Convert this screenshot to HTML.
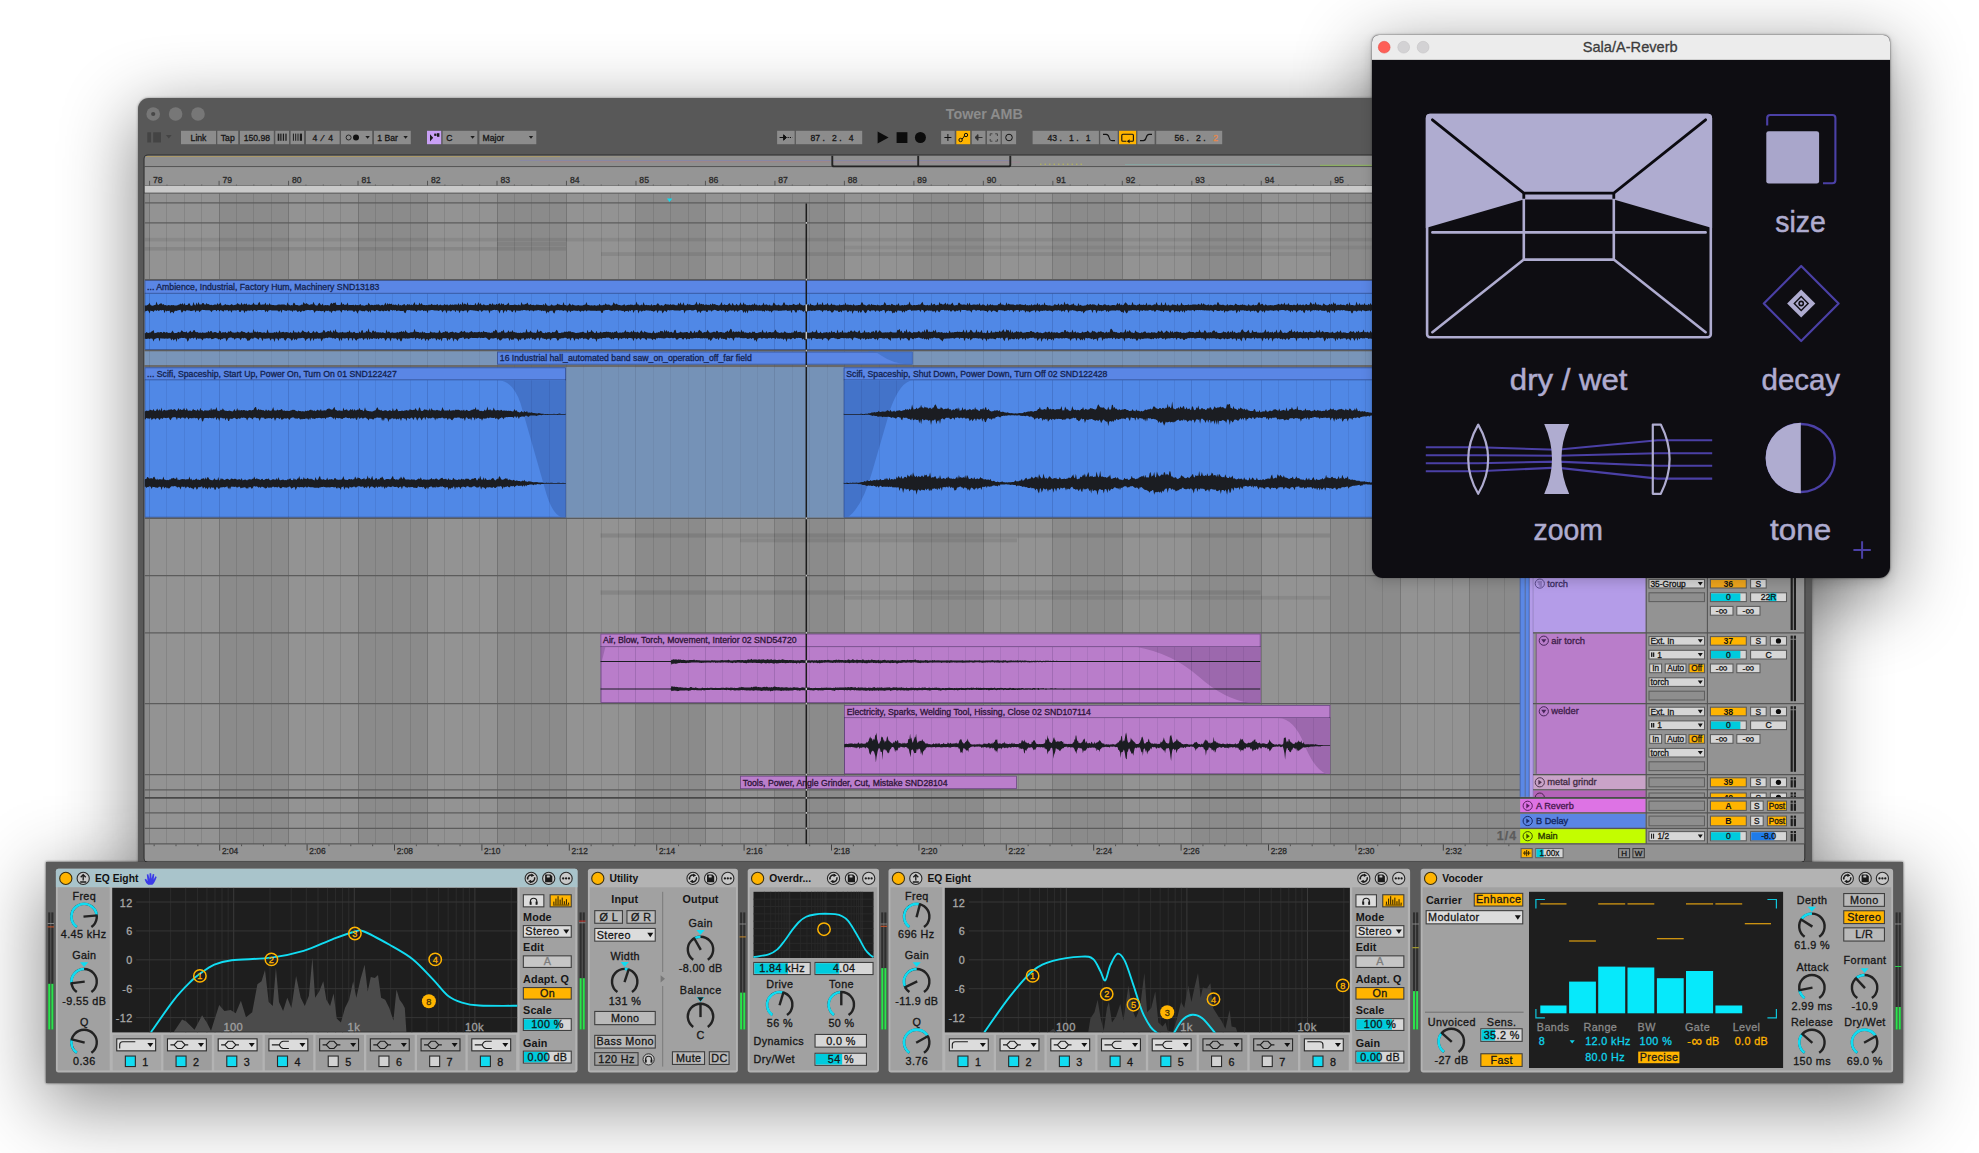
<!DOCTYPE html>
<html><head><meta charset="utf-8"><title>Tower AMB</title>
<style>
html,body{margin:0;padding:0}
body{width:1979px;height:1153px;position:relative;overflow:hidden;background:#fff;font-family:"Liberation Sans", sans-serif}
svg{position:absolute;left:0;top:0;font-family:"Liberation Sans", sans-serif}
.win{position:absolute;box-sizing:border-box}
</style></head><body>
<div class="win" style="left:1371.8px;top:34.6px;width:517.8px;height:543px;border-radius:7px 7px 11px 11px;box-shadow:0 19px 72px 3px rgba(0,0,0,.46),0 0 2.5px rgba(0,0,0,.45)"></div><div class="win" style="left:45.8px;top:862.2px;width:1857.4px;height:221px;box-shadow:0 19px 72px 3px rgba(0,0,0,.46),0 0 2.5px rgba(0,0,0,.45)"></div><div class="win" style="left:137.5px;top:97.5px;width:1674.0px;height:774.5px;background:#585858;border-radius:11px 11px 0 0;box-shadow:0 19px 72px 3px rgba(0,0,0,.46),0 0 2.5px rgba(0,0,0,.45)"></div><svg width="1979" height="1153" viewBox="0 0 1979 1153"><defs><clipPath id="panel"><rect x="144.5" y="155.5" width="1659.8" height="706.0" rx="3.5"/></clipPath></defs><circle cx="153.2" cy="114" r="6.8" fill="#777"/><circle cx="175.6" cy="114" r="6.8" fill="#777"/><circle cx="198" cy="114" r="6.8" fill="#777"/><circle cx="153.2" cy="114" r="2.1" fill="#474747"/><text x="984.30" y="118.60" font-size="14.3" fill="#8c8c8c" text-anchor="middle" font-weight="bold"  >Tower AMB</text><rect x="147.30" y="132.30" width="3.80" height="10.20" fill="#444" /><rect x="153.20" y="132.30" width="7.80" height="10.20" fill="#444" /><path d="M165.90 135.00h5.80l-2.90 3.62z" fill="#444"/><rect x="181.00" y="130.80" width="35.00" height="13.40" fill="#8c8c8c" /><text x="198.50" y="140.60" font-size="8.6" fill="#161616" text-anchor="middle" font-weight="normal" stroke="#161616" stroke-width="0.3" >Link</text><rect x="217.30" y="130.80" width="20.90" height="13.40" fill="#8c8c8c" /><text x="227.75" y="140.60" font-size="8.6" fill="#161616" text-anchor="middle" font-weight="normal" stroke="#161616" stroke-width="0.3" >Tap</text><rect x="240.00" y="130.80" width="33.80" height="13.40" fill="#8c8c8c" /><text x="256.90" y="140.60" font-size="8.6" fill="#161616" text-anchor="middle" font-weight="normal" stroke="#161616" stroke-width="0.3" >150.98</text><rect x="275.30" y="130.80" width="13.70" height="13.40" fill="#8c8c8c" /><rect x="277.70" y="133.60" width="1.60" height="7.20" fill="#1c1c1c" /><rect x="280.25" y="133.60" width="1.25" height="7.20" fill="#1c1c1c" /><rect x="282.80" y="133.60" width="1.25" height="7.20" fill="#1c1c1c" /><rect x="285.35" y="133.60" width="1.25" height="7.20" fill="#1c1c1c" /><rect x="290.60" y="130.80" width="13.40" height="13.40" fill="#8c8c8c" /><rect x="292.90" y="133.60" width="1.00" height="7.20" fill="#1c1c1c" /><rect x="295.20" y="133.60" width="1.00" height="7.20" fill="#1c1c1c" /><rect x="297.50" y="133.60" width="1.00" height="7.20" fill="#1c1c1c" /><rect x="299.80" y="133.60" width="2.20" height="7.20" fill="#1c1c1c" /><rect x="306.00" y="130.80" width="33.60" height="13.40" fill="#8c8c8c" /><text x="322.80" y="140.60" font-size="8.6" fill="#161616" text-anchor="middle" font-weight="normal" stroke="#161616" stroke-width="0.3" >4  ∕  4</text><rect x="341.00" y="130.80" width="31.20" height="13.40" fill="#8c8c8c" /><circle cx="348.6" cy="137.5" r="2.5" fill="none" stroke="#1c1c1c" stroke-width="0.9"/><circle cx="356" cy="137.5" r="3" fill="#111"/><path d="M365.40 135.99h4.40l-2.20 2.75z" fill="#1c1c1c"/><rect x="374.00" y="130.80" width="36.80" height="13.40" fill="#8c8c8c" /><text x="377.30" y="140.60" font-size="8.6" fill="#161616" text-anchor="start" font-weight="normal" stroke="#161616" stroke-width="0.3" >1 Bar</text><path d="M403.40 135.99h4.40l-2.20 2.75z" fill="#1c1c1c"/><rect x="427.00" y="130.80" width="14.20" height="13.40" fill="#c9a0f5" /><path d="M430 134.2l3.2 3.6-3.2 3.6z" fill="#1c1c1c"/><rect x="434.2" y="133.6" width="2.3" height="2.3" fill="#1c1c1c"/><rect x="437" y="133.2" width="2.4" height="3.6" fill="#1c1c1c"/><rect x="442.60" y="130.80" width="34.70" height="13.40" fill="#8c8c8c" /><text x="446.20" y="140.60" font-size="8.6" fill="#161616" text-anchor="start" font-weight="normal" stroke="#161616" stroke-width="0.3" >C</text><path d="M470.40 135.99h4.40l-2.20 2.75z" fill="#1c1c1c"/><rect x="479.40" y="130.80" width="56.90" height="13.40" fill="#8c8c8c" /><text x="482.60" y="140.60" font-size="8.6" fill="#161616" text-anchor="start" font-weight="normal" stroke="#161616" stroke-width="0.3" >Major</text><path d="M528.80 135.99h4.40l-2.20 2.75z" fill="#1c1c1c"/><rect x="777.10" y="130.80" width="17.50" height="13.40" fill="#8c8c8c" /><path d="M779.6 137.5h6.2M783.6 134.8l2.9 2.7-2.9 2.7z" stroke="#111" stroke-width="1" fill="#111"/><path d="M787.6 137.5h4.6" stroke="#111" stroke-width="1" stroke-dasharray="1.2 1"/><rect x="795.90" y="130.80" width="66.30" height="13.40" fill="#8c8c8c" /><text x="832.00" y="140.60" font-size="8.6" fill="#161616" text-anchor="middle" font-weight="normal" stroke="#161616" stroke-width="0.3" >87 .   2 .   4</text><path d="M877.6 131.4l11 6.1-11 6.1z" fill="#0c0c0c"/><rect x="896.60" y="132.20" width="10.80" height="10.80" fill="#0c0c0c" /><circle cx="920.4" cy="137.5" r="5.5" fill="#0c0c0c"/><rect x="941.10" y="130.80" width="13.60" height="13.40" fill="#8c8c8c" /><path d="M944.4 137.5h7M947.9 134v7" stroke="#111" stroke-width="1"/><rect x="956.30" y="130.80" width="13.90" height="13.40" fill="#ffb400" /><circle cx="960.6" cy="140" r="1.7" fill="none" stroke="#111" stroke-width="1"/><circle cx="966" cy="135" r="1.7" fill="none" stroke="#111" stroke-width="1"/><path d="M961.8 138.8q1.5-.3 1.8-1.6t1.4-1.4" stroke="#111" fill="none" stroke-width="1"/><rect x="971.80" y="130.80" width="13.60" height="13.40" fill="#8c8c8c" /><path d="M975 137.5h7.5M978 134.6l-3 2.9 3 2.9z" stroke="#333" stroke-width="1" fill="#333"/><rect x="987.00" y="130.80" width="13.60" height="13.40" fill="#8c8c8c" /><path d="M990.2 136v-2.2h2.2M995.2 133.8h2.2v2.2M997.4 139v2.2h-2.2M992.4 141.2h-2.2v-2.2" stroke="#444" stroke-width="1" fill="none"/><rect x="1001.90" y="130.80" width="14.20" height="13.40" fill="#8c8c8c" /><circle cx="1009" cy="137.5" r="3.3" fill="none" stroke="#111" stroke-width="1"/><rect x="1032.60" y="130.80" width="66.30" height="13.40" fill="#8c8c8c" /><text x="1069.00" y="140.60" font-size="8.6" fill="#161616" text-anchor="middle" font-weight="normal" stroke="#161616" stroke-width="0.3" >43 .   1 .   1</text><rect x="1100.20" y="130.80" width="17.50" height="13.40" fill="#8c8c8c" /><path d="M1103 134.4h3.2q2.2 0 2.9 3.1t2.9 3.1h3" stroke="#111" stroke-width="1.1" fill="none"/><rect x="1119.00" y="130.80" width="17.10" height="13.40" fill="#ffb400" /><path d="M1129.2 141.2h3.2q1 0 1-1v-5q0-1-1-1h-9.6q-1 0-1 1v5q0 1 1 1h3.6" stroke="#111" stroke-width="1.1" fill="none"/><path d="M1129.6 139.2l-2.8 2 2.8 2z" fill="#111"/><rect x="1137.40" y="130.80" width="17.20" height="13.40" fill="#8c8c8c" /><path d="M1140 140.6h3.4q2 0 2.8-3.1t2.8-3.1h3" stroke="#111" stroke-width="1.1" fill="none"/><rect x="1156.20" y="130.80" width="66.00" height="13.40" fill="#8c8c8c" /><text x="1190.00" y="140.60" font-size="8.6" fill="#161616" text-anchor="middle" font-weight="normal" stroke="#161616" stroke-width="0.3" >56 .   2 .</text><text x="1215.60" y="140.60" font-size="8.6" fill="#e8874a" text-anchor="middle" font-weight="normal" stroke="#e8874a" stroke-width="0.3" >2</text><rect x="143.5" y="154.5" width="1661.8" height="708.0" rx="4.5" fill="#2e2e2e"/><g clip-path="url(#panel)"><rect x="144.50" y="155.50" width="1659.80" height="706.00" fill="#939393" /><rect x="144.50" y="155.50" width="1659.80" height="11.00" fill="#8f8f8f" /><line x1="144.50" y1="166.70" x2="1804.30" y2="166.70" stroke="#4a4a4a" stroke-width="1" /><rect x="144.50" y="167.20" width="1659.80" height="18.30" fill="#959595" /><line x1="146.00" y1="156.50" x2="560.00" y2="156.50" stroke="#c2a24a" stroke-width="0.7" opacity=".8"/><line x1="450.00" y1="156.80" x2="640.00" y2="156.80" stroke="#a9a07a" stroke-width="0.7" opacity=".6"/><line x1="520.00" y1="160.50" x2="1010.00" y2="160.50" stroke="#7c7cc8" stroke-width="0.6" opacity=".6"/><line x1="540.00" y1="161.80" x2="830.00" y2="161.80" stroke="#c8707a" stroke-width="0.6" opacity=".6"/><line x1="832.00" y1="162.20" x2="1020.00" y2="162.20" stroke="#b87a9a" stroke-width="0.6" opacity=".6"/><line x1="1040.00" y1="164.20" x2="1085.00" y2="164.20" stroke="#c2c24a" stroke-width="0.9" stroke-dasharray="1.5 3"/><line x1="1125.00" y1="164.40" x2="1280.00" y2="164.40" stroke="#7cc2b8" stroke-width="0.7" opacity=".7"/><line x1="1320.00" y1="165.30" x2="1372.00" y2="165.30" stroke="#8cc24a" stroke-width="0.8" /><path d="M832.3 155.5v9.2q0 1.7 1.7 1.7h174.6q1.7 0 1.7-1.7v-9.2M918.2 155.5v11" fill="none" stroke="#242424" stroke-width="1.9"/><rect x="80.12" y="193.50" width="69.48" height="650.20" fill="#8b8b8b" /><rect x="219.08" y="193.50" width="69.48" height="650.20" fill="#8b8b8b" /><rect x="358.04" y="193.50" width="69.48" height="650.20" fill="#8b8b8b" /><rect x="497.00" y="193.50" width="69.48" height="650.20" fill="#8b8b8b" /><rect x="635.96" y="193.50" width="69.48" height="650.20" fill="#8b8b8b" /><rect x="774.92" y="193.50" width="69.48" height="650.20" fill="#8b8b8b" /><rect x="913.88" y="193.50" width="69.48" height="650.20" fill="#8b8b8b" /><rect x="1052.84" y="193.50" width="69.48" height="650.20" fill="#8b8b8b" /><rect x="1191.80" y="193.50" width="69.48" height="650.20" fill="#8b8b8b" /><rect x="1330.76" y="193.50" width="69.48" height="650.20" fill="#8b8b8b" /><rect x="1469.72" y="193.50" width="69.48" height="650.20" fill="#8b8b8b" /><rect x="1608.68" y="193.50" width="69.48" height="650.20" fill="#8b8b8b" /><rect x="1747.64" y="193.50" width="69.48" height="650.20" fill="#8b8b8b" /><rect x="144.50" y="351.20" width="1375.50" height="13.80" fill="#7995b9" /><rect x="565.80" y="367.30" width="277.90" height="150.30" fill="#7592b7" /><rect x="144.50" y="237.80" width="1375.50" height="3.60" fill="#000" opacity="0.075"/><rect x="144.50" y="247.00" width="421.50" height="3.60" fill="#000" opacity="0.085"/><rect x="497.00" y="242.00" width="69.00" height="4.40" fill="#000" opacity="0.07"/><rect x="601.00" y="252.20" width="730.00" height="3.80" fill="#000" opacity="0.08"/><rect x="844.00" y="245.60" width="676.00" height="3.80" fill="#000" opacity="0.055"/><rect x="600.50" y="533.40" width="729.50" height="4.20" fill="#000" opacity="0.09"/><rect x="740.00" y="538.40" width="277.00" height="3.90" fill="#000" opacity="0.08"/><rect x="600.50" y="590.40" width="660.20" height="4.30" fill="#000" opacity="0.09"/><rect x="844.00" y="595.90" width="486.00" height="3.80" fill="#000" opacity="0.07"/><line x1="149.50" y1="193.50" x2="149.50" y2="843.70" stroke="rgba(0,0,0,.17)" stroke-width="1" /><line x1="166.50" y1="193.50" x2="166.50" y2="843.70" stroke="rgba(0,0,0,.09)" stroke-width="1" /><line x1="184.50" y1="193.50" x2="184.50" y2="843.70" stroke="rgba(0,0,0,.09)" stroke-width="1" /><line x1="201.50" y1="193.50" x2="201.50" y2="843.70" stroke="rgba(0,0,0,.09)" stroke-width="1" /><line x1="219.50" y1="193.50" x2="219.50" y2="843.70" stroke="rgba(0,0,0,.17)" stroke-width="1" /><line x1="236.50" y1="193.50" x2="236.50" y2="843.70" stroke="rgba(0,0,0,.09)" stroke-width="1" /><line x1="253.50" y1="193.50" x2="253.50" y2="843.70" stroke="rgba(0,0,0,.09)" stroke-width="1" /><line x1="271.50" y1="193.50" x2="271.50" y2="843.70" stroke="rgba(0,0,0,.09)" stroke-width="1" /><line x1="288.50" y1="193.50" x2="288.50" y2="843.70" stroke="rgba(0,0,0,.17)" stroke-width="1" /><line x1="305.50" y1="193.50" x2="305.50" y2="843.70" stroke="rgba(0,0,0,.09)" stroke-width="1" /><line x1="323.50" y1="193.50" x2="323.50" y2="843.70" stroke="rgba(0,0,0,.09)" stroke-width="1" /><line x1="340.50" y1="193.50" x2="340.50" y2="843.70" stroke="rgba(0,0,0,.09)" stroke-width="1" /><line x1="358.50" y1="193.50" x2="358.50" y2="843.70" stroke="rgba(0,0,0,.17)" stroke-width="1" /><line x1="375.50" y1="193.50" x2="375.50" y2="843.70" stroke="rgba(0,0,0,.09)" stroke-width="1" /><line x1="392.50" y1="193.50" x2="392.50" y2="843.70" stroke="rgba(0,0,0,.09)" stroke-width="1" /><line x1="410.50" y1="193.50" x2="410.50" y2="843.70" stroke="rgba(0,0,0,.09)" stroke-width="1" /><line x1="427.50" y1="193.50" x2="427.50" y2="843.70" stroke="rgba(0,0,0,.17)" stroke-width="1" /><line x1="444.50" y1="193.50" x2="444.50" y2="843.70" stroke="rgba(0,0,0,.09)" stroke-width="1" /><line x1="462.50" y1="193.50" x2="462.50" y2="843.70" stroke="rgba(0,0,0,.09)" stroke-width="1" /><line x1="479.50" y1="193.50" x2="479.50" y2="843.70" stroke="rgba(0,0,0,.09)" stroke-width="1" /><line x1="497.50" y1="193.50" x2="497.50" y2="843.70" stroke="rgba(0,0,0,.17)" stroke-width="1" /><line x1="514.50" y1="193.50" x2="514.50" y2="843.70" stroke="rgba(0,0,0,.09)" stroke-width="1" /><line x1="531.50" y1="193.50" x2="531.50" y2="843.70" stroke="rgba(0,0,0,.09)" stroke-width="1" /><line x1="549.50" y1="193.50" x2="549.50" y2="843.70" stroke="rgba(0,0,0,.09)" stroke-width="1" /><line x1="566.50" y1="193.50" x2="566.50" y2="843.70" stroke="rgba(0,0,0,.17)" stroke-width="1" /><line x1="583.50" y1="193.50" x2="583.50" y2="843.70" stroke="rgba(0,0,0,.09)" stroke-width="1" /><line x1="601.50" y1="193.50" x2="601.50" y2="843.70" stroke="rgba(0,0,0,.09)" stroke-width="1" /><line x1="618.50" y1="193.50" x2="618.50" y2="843.70" stroke="rgba(0,0,0,.09)" stroke-width="1" /><line x1="635.50" y1="193.50" x2="635.50" y2="843.70" stroke="rgba(0,0,0,.17)" stroke-width="1" /><line x1="653.50" y1="193.50" x2="653.50" y2="843.70" stroke="rgba(0,0,0,.09)" stroke-width="1" /><line x1="670.50" y1="193.50" x2="670.50" y2="843.70" stroke="rgba(0,0,0,.09)" stroke-width="1" /><line x1="688.50" y1="193.50" x2="688.50" y2="843.70" stroke="rgba(0,0,0,.09)" stroke-width="1" /><line x1="705.50" y1="193.50" x2="705.50" y2="843.70" stroke="rgba(0,0,0,.17)" stroke-width="1" /><line x1="722.50" y1="193.50" x2="722.50" y2="843.70" stroke="rgba(0,0,0,.09)" stroke-width="1" /><line x1="740.50" y1="193.50" x2="740.50" y2="843.70" stroke="rgba(0,0,0,.09)" stroke-width="1" /><line x1="757.50" y1="193.50" x2="757.50" y2="843.70" stroke="rgba(0,0,0,.09)" stroke-width="1" /><line x1="774.50" y1="193.50" x2="774.50" y2="843.70" stroke="rgba(0,0,0,.17)" stroke-width="1" /><line x1="792.50" y1="193.50" x2="792.50" y2="843.70" stroke="rgba(0,0,0,.09)" stroke-width="1" /><line x1="809.50" y1="193.50" x2="809.50" y2="843.70" stroke="rgba(0,0,0,.09)" stroke-width="1" /><line x1="827.50" y1="193.50" x2="827.50" y2="843.70" stroke="rgba(0,0,0,.09)" stroke-width="1" /><line x1="844.50" y1="193.50" x2="844.50" y2="843.70" stroke="rgba(0,0,0,.17)" stroke-width="1" /><line x1="861.50" y1="193.50" x2="861.50" y2="843.70" stroke="rgba(0,0,0,.09)" stroke-width="1" /><line x1="879.50" y1="193.50" x2="879.50" y2="843.70" stroke="rgba(0,0,0,.09)" stroke-width="1" /><line x1="896.50" y1="193.50" x2="896.50" y2="843.70" stroke="rgba(0,0,0,.09)" stroke-width="1" /><line x1="913.50" y1="193.50" x2="913.50" y2="843.70" stroke="rgba(0,0,0,.17)" stroke-width="1" /><line x1="931.50" y1="193.50" x2="931.50" y2="843.70" stroke="rgba(0,0,0,.09)" stroke-width="1" /><line x1="948.50" y1="193.50" x2="948.50" y2="843.70" stroke="rgba(0,0,0,.09)" stroke-width="1" /><line x1="965.50" y1="193.50" x2="965.50" y2="843.70" stroke="rgba(0,0,0,.09)" stroke-width="1" /><line x1="983.50" y1="193.50" x2="983.50" y2="843.70" stroke="rgba(0,0,0,.17)" stroke-width="1" /><line x1="1000.50" y1="193.50" x2="1000.50" y2="843.70" stroke="rgba(0,0,0,.09)" stroke-width="1" /><line x1="1018.50" y1="193.50" x2="1018.50" y2="843.70" stroke="rgba(0,0,0,.09)" stroke-width="1" /><line x1="1035.50" y1="193.50" x2="1035.50" y2="843.70" stroke="rgba(0,0,0,.09)" stroke-width="1" /><line x1="1052.50" y1="193.50" x2="1052.50" y2="843.70" stroke="rgba(0,0,0,.17)" stroke-width="1" /><line x1="1070.50" y1="193.50" x2="1070.50" y2="843.70" stroke="rgba(0,0,0,.09)" stroke-width="1" /><line x1="1087.50" y1="193.50" x2="1087.50" y2="843.70" stroke="rgba(0,0,0,.09)" stroke-width="1" /><line x1="1104.50" y1="193.50" x2="1104.50" y2="843.70" stroke="rgba(0,0,0,.09)" stroke-width="1" /><line x1="1122.50" y1="193.50" x2="1122.50" y2="843.70" stroke="rgba(0,0,0,.17)" stroke-width="1" /><line x1="1139.50" y1="193.50" x2="1139.50" y2="843.70" stroke="rgba(0,0,0,.09)" stroke-width="1" /><line x1="1157.50" y1="193.50" x2="1157.50" y2="843.70" stroke="rgba(0,0,0,.09)" stroke-width="1" /><line x1="1174.50" y1="193.50" x2="1174.50" y2="843.70" stroke="rgba(0,0,0,.09)" stroke-width="1" /><line x1="1191.50" y1="193.50" x2="1191.50" y2="843.70" stroke="rgba(0,0,0,.17)" stroke-width="1" /><line x1="1209.50" y1="193.50" x2="1209.50" y2="843.70" stroke="rgba(0,0,0,.09)" stroke-width="1" /><line x1="1226.50" y1="193.50" x2="1226.50" y2="843.70" stroke="rgba(0,0,0,.09)" stroke-width="1" /><line x1="1243.50" y1="193.50" x2="1243.50" y2="843.70" stroke="rgba(0,0,0,.09)" stroke-width="1" /><line x1="1261.50" y1="193.50" x2="1261.50" y2="843.70" stroke="rgba(0,0,0,.17)" stroke-width="1" /><line x1="1278.50" y1="193.50" x2="1278.50" y2="843.70" stroke="rgba(0,0,0,.09)" stroke-width="1" /><line x1="1296.50" y1="193.50" x2="1296.50" y2="843.70" stroke="rgba(0,0,0,.09)" stroke-width="1" /><line x1="1313.50" y1="193.50" x2="1313.50" y2="843.70" stroke="rgba(0,0,0,.09)" stroke-width="1" /><line x1="1330.50" y1="193.50" x2="1330.50" y2="843.70" stroke="rgba(0,0,0,.17)" stroke-width="1" /><line x1="1348.50" y1="193.50" x2="1348.50" y2="843.70" stroke="rgba(0,0,0,.09)" stroke-width="1" /><line x1="1365.50" y1="193.50" x2="1365.50" y2="843.70" stroke="rgba(0,0,0,.09)" stroke-width="1" /><line x1="1382.50" y1="193.50" x2="1382.50" y2="843.70" stroke="rgba(0,0,0,.09)" stroke-width="1" /><line x1="1400.50" y1="193.50" x2="1400.50" y2="843.70" stroke="rgba(0,0,0,.17)" stroke-width="1" /><line x1="1417.50" y1="193.50" x2="1417.50" y2="843.70" stroke="rgba(0,0,0,.09)" stroke-width="1" /><line x1="1434.50" y1="193.50" x2="1434.50" y2="843.70" stroke="rgba(0,0,0,.09)" stroke-width="1" /><line x1="1452.50" y1="193.50" x2="1452.50" y2="843.70" stroke="rgba(0,0,0,.09)" stroke-width="1" /><line x1="1469.50" y1="193.50" x2="1469.50" y2="843.70" stroke="rgba(0,0,0,.17)" stroke-width="1" /><line x1="1487.50" y1="193.50" x2="1487.50" y2="843.70" stroke="rgba(0,0,0,.09)" stroke-width="1" /><line x1="1504.50" y1="193.50" x2="1504.50" y2="843.70" stroke="rgba(0,0,0,.09)" stroke-width="1" /><rect x="144.50" y="351.20" width="1375.50" height="13.80" fill="#7995b9" opacity=".5"/><rect x="565.80" y="367.30" width="277.90" height="150.30" fill="#7592b7" opacity=".5"/><rect x="144.50" y="280.20" width="1375.50" height="69.60" fill="#5088e6" /><rect x="144.50" y="280.20" width="1375.50" height="13.10" fill="#5a86e5" /><rect x="144.90" y="280.60" width="1374.70" height="68.80" fill="none" stroke="rgba(0,0,30,.42)" stroke-width=".8"/><line x1="144.50" y1="293.30" x2="1520.00" y2="293.30" stroke="rgba(0,0,30,.42)" stroke-width="0.8" /><text x="147.10" y="289.88" font-size="8.7" fill="#14234f" text-anchor="start" font-weight="normal" stroke="#14234f" stroke-width="0.3" >... Ambience, Industrial, Factory Hum, Machinery SND13183</text><rect x="497.20" y="351.60" width="415.40" height="13.00" fill="#5a86e5" /><rect x="497.60" y="352.00" width="414.60" height="12.20" fill="none" stroke="rgba(0,0,30,.42)" stroke-width=".8"/><text x="499.80" y="361.23" font-size="8.7" fill="#14234f" text-anchor="start" font-weight="normal" stroke="#14234f" stroke-width="0.3" >16 Industrial hall_automated band saw_on_operation_off_far field</text><path d="M868 352h44.6v12.2h-6q-14-1-25-8.5t-13.6-3.7z" fill="#4373c9" opacity=".8"/><rect x="144.50" y="367.40" width="421.30" height="150.20" fill="#5088e6" /><rect x="144.50" y="367.40" width="421.30" height="12.40" fill="#5a86e5" /><rect x="144.90" y="367.80" width="420.50" height="149.40" fill="none" stroke="rgba(0,0,30,.42)" stroke-width=".8"/><line x1="144.50" y1="379.80" x2="565.80" y2="379.80" stroke="rgba(0,0,30,.42)" stroke-width="0.8" /><text x="147.10" y="376.73" font-size="8.7" fill="#14234f" text-anchor="start" font-weight="normal" stroke="#14234f" stroke-width="0.3" >... Scifi, Spaceship, Start Up, Power On, Turn On 01 SND122427</text><path d="M497.5 380.2h68v137h-4q-10-3-17-30l-24-84q-8-23-23-23z" fill="#4373c9"/><rect x="843.70" y="367.40" width="676.30" height="150.20" fill="#5088e6" /><rect x="843.70" y="367.40" width="676.30" height="12.40" fill="#5a86e5" /><rect x="844.10" y="367.80" width="675.50" height="149.40" fill="none" stroke="rgba(0,0,30,.42)" stroke-width=".8"/><line x1="843.70" y1="379.80" x2="1520.00" y2="379.80" stroke="rgba(0,0,30,.42)" stroke-width="0.8" /><text x="846.30" y="376.73" font-size="8.7" fill="#14234f" text-anchor="start" font-weight="normal" stroke="#14234f" stroke-width="0.3" >Scifi, Spaceship, Shut Down, Power Down, Turn Off 02 SND122428</text><path d="M844 380.2h68.6q-12 1-22 28l-18 62q-10 36-24 46.5l-4.6.5z" fill="#4373c9"/><rect x="600.50" y="633.60" width="660.10" height="69.40" fill="#b97dca" /><rect x="600.50" y="633.60" width="660.10" height="13.00" fill="#ba7ecb" /><rect x="600.90" y="634.00" width="659.30" height="68.60" fill="none" stroke="rgba(0,0,30,.42)" stroke-width=".8"/><line x1="600.50" y1="646.60" x2="1260.60" y2="646.60" stroke="rgba(0,0,30,.42)" stroke-width="0.8" /><text x="603.10" y="643.23" font-size="8.7" fill="#2d1437" text-anchor="start" font-weight="normal" stroke="#2d1437" stroke-width="0.3" >Air, Blow, Torch, Movement, Interior 02 SND54720</text><path d="M1136.6 647h124v55.6h-12q-24-3-50-26t-61.4-29.6z" fill="#9c68ad"/><path d="M600.9 647h4.5l-4.5 18z" fill="#9c68ad"/><rect x="844.10" y="705.20" width="486.20" height="69.00" fill="#b97dca" /><rect x="844.10" y="705.20" width="486.20" height="12.40" fill="#ba7ecb" /><rect x="844.50" y="705.60" width="485.40" height="68.20" fill="none" stroke="rgba(0,0,30,.42)" stroke-width=".8"/><line x1="844.10" y1="717.60" x2="1330.30" y2="717.60" stroke="rgba(0,0,30,.42)" stroke-width="0.8" /><text x="846.70" y="714.53" font-size="8.7" fill="#2d1437" text-anchor="start" font-weight="normal" stroke="#2d1437" stroke-width="0.3" >Electricity, Sparks, Welding Tool, Hissing, Close 02 SND107114</text><path d="M1278.7 718h51.3v55.8h-4q-12-5-22-30t-25.3-25.8z" fill="#9c68ad"/><rect x="740.20" y="775.80" width="276.70" height="13.20" fill="#ba7ecb" /><rect x="740.60" y="776.20" width="275.90" height="12.40" fill="none" stroke="rgba(0,0,30,.42)" stroke-width=".8"/><text x="742.80" y="785.53" font-size="8.7" fill="#2d1437" text-anchor="start" font-weight="normal" stroke="#2d1437" stroke-width="0.3" >Tools, Power, Angle Grinder, Cut, Mistake SND28104</text><clipPath id="bodies"><rect x="144.50" y="293.80" width="1375.50" height="55.50" fill="#000" /><rect x="144.50" y="380.30" width="421.30" height="136.80" fill="#000" /><rect x="843.70" y="380.30" width="676.30" height="136.80" fill="#000" /><rect x="600.50" y="647.10" width="660.10" height="55.40" fill="#000" /><rect x="844.10" y="718.10" width="486.20" height="55.60" fill="#000" /></clipPath><g clip-path="url(#bodies)"><line x1="149.50" y1="193.50" x2="149.50" y2="843.70" stroke="rgba(0,0,40,.13)" stroke-width="1" /><line x1="166.50" y1="193.50" x2="166.50" y2="843.70" stroke="rgba(0,0,40,.07)" stroke-width="1" /><line x1="184.50" y1="193.50" x2="184.50" y2="843.70" stroke="rgba(0,0,40,.07)" stroke-width="1" /><line x1="201.50" y1="193.50" x2="201.50" y2="843.70" stroke="rgba(0,0,40,.07)" stroke-width="1" /><line x1="219.50" y1="193.50" x2="219.50" y2="843.70" stroke="rgba(0,0,40,.13)" stroke-width="1" /><line x1="236.50" y1="193.50" x2="236.50" y2="843.70" stroke="rgba(0,0,40,.07)" stroke-width="1" /><line x1="253.50" y1="193.50" x2="253.50" y2="843.70" stroke="rgba(0,0,40,.07)" stroke-width="1" /><line x1="271.50" y1="193.50" x2="271.50" y2="843.70" stroke="rgba(0,0,40,.07)" stroke-width="1" /><line x1="288.50" y1="193.50" x2="288.50" y2="843.70" stroke="rgba(0,0,40,.13)" stroke-width="1" /><line x1="305.50" y1="193.50" x2="305.50" y2="843.70" stroke="rgba(0,0,40,.07)" stroke-width="1" /><line x1="323.50" y1="193.50" x2="323.50" y2="843.70" stroke="rgba(0,0,40,.07)" stroke-width="1" /><line x1="340.50" y1="193.50" x2="340.50" y2="843.70" stroke="rgba(0,0,40,.07)" stroke-width="1" /><line x1="358.50" y1="193.50" x2="358.50" y2="843.70" stroke="rgba(0,0,40,.13)" stroke-width="1" /><line x1="375.50" y1="193.50" x2="375.50" y2="843.70" stroke="rgba(0,0,40,.07)" stroke-width="1" /><line x1="392.50" y1="193.50" x2="392.50" y2="843.70" stroke="rgba(0,0,40,.07)" stroke-width="1" /><line x1="410.50" y1="193.50" x2="410.50" y2="843.70" stroke="rgba(0,0,40,.07)" stroke-width="1" /><line x1="427.50" y1="193.50" x2="427.50" y2="843.70" stroke="rgba(0,0,40,.13)" stroke-width="1" /><line x1="444.50" y1="193.50" x2="444.50" y2="843.70" stroke="rgba(0,0,40,.07)" stroke-width="1" /><line x1="462.50" y1="193.50" x2="462.50" y2="843.70" stroke="rgba(0,0,40,.07)" stroke-width="1" /><line x1="479.50" y1="193.50" x2="479.50" y2="843.70" stroke="rgba(0,0,40,.07)" stroke-width="1" /><line x1="497.50" y1="193.50" x2="497.50" y2="843.70" stroke="rgba(0,0,40,.13)" stroke-width="1" /><line x1="514.50" y1="193.50" x2="514.50" y2="843.70" stroke="rgba(0,0,40,.07)" stroke-width="1" /><line x1="531.50" y1="193.50" x2="531.50" y2="843.70" stroke="rgba(0,0,40,.07)" stroke-width="1" /><line x1="549.50" y1="193.50" x2="549.50" y2="843.70" stroke="rgba(0,0,40,.07)" stroke-width="1" /><line x1="566.50" y1="193.50" x2="566.50" y2="843.70" stroke="rgba(0,0,40,.13)" stroke-width="1" /><line x1="583.50" y1="193.50" x2="583.50" y2="843.70" stroke="rgba(0,0,40,.07)" stroke-width="1" /><line x1="601.50" y1="193.50" x2="601.50" y2="843.70" stroke="rgba(0,0,40,.07)" stroke-width="1" /><line x1="618.50" y1="193.50" x2="618.50" y2="843.70" stroke="rgba(0,0,40,.07)" stroke-width="1" /><line x1="635.50" y1="193.50" x2="635.50" y2="843.70" stroke="rgba(0,0,40,.13)" stroke-width="1" /><line x1="653.50" y1="193.50" x2="653.50" y2="843.70" stroke="rgba(0,0,40,.07)" stroke-width="1" /><line x1="670.50" y1="193.50" x2="670.50" y2="843.70" stroke="rgba(0,0,40,.07)" stroke-width="1" /><line x1="688.50" y1="193.50" x2="688.50" y2="843.70" stroke="rgba(0,0,40,.07)" stroke-width="1" /><line x1="705.50" y1="193.50" x2="705.50" y2="843.70" stroke="rgba(0,0,40,.13)" stroke-width="1" /><line x1="722.50" y1="193.50" x2="722.50" y2="843.70" stroke="rgba(0,0,40,.07)" stroke-width="1" /><line x1="740.50" y1="193.50" x2="740.50" y2="843.70" stroke="rgba(0,0,40,.07)" stroke-width="1" /><line x1="757.50" y1="193.50" x2="757.50" y2="843.70" stroke="rgba(0,0,40,.07)" stroke-width="1" /><line x1="774.50" y1="193.50" x2="774.50" y2="843.70" stroke="rgba(0,0,40,.13)" stroke-width="1" /><line x1="792.50" y1="193.50" x2="792.50" y2="843.70" stroke="rgba(0,0,40,.07)" stroke-width="1" /><line x1="809.50" y1="193.50" x2="809.50" y2="843.70" stroke="rgba(0,0,40,.07)" stroke-width="1" /><line x1="827.50" y1="193.50" x2="827.50" y2="843.70" stroke="rgba(0,0,40,.07)" stroke-width="1" /><line x1="844.50" y1="193.50" x2="844.50" y2="843.70" stroke="rgba(0,0,40,.13)" stroke-width="1" /><line x1="861.50" y1="193.50" x2="861.50" y2="843.70" stroke="rgba(0,0,40,.07)" stroke-width="1" /><line x1="879.50" y1="193.50" x2="879.50" y2="843.70" stroke="rgba(0,0,40,.07)" stroke-width="1" /><line x1="896.50" y1="193.50" x2="896.50" y2="843.70" stroke="rgba(0,0,40,.07)" stroke-width="1" /><line x1="913.50" y1="193.50" x2="913.50" y2="843.70" stroke="rgba(0,0,40,.13)" stroke-width="1" /><line x1="931.50" y1="193.50" x2="931.50" y2="843.70" stroke="rgba(0,0,40,.07)" stroke-width="1" /><line x1="948.50" y1="193.50" x2="948.50" y2="843.70" stroke="rgba(0,0,40,.07)" stroke-width="1" /><line x1="965.50" y1="193.50" x2="965.50" y2="843.70" stroke="rgba(0,0,40,.07)" stroke-width="1" /><line x1="983.50" y1="193.50" x2="983.50" y2="843.70" stroke="rgba(0,0,40,.13)" stroke-width="1" /><line x1="1000.50" y1="193.50" x2="1000.50" y2="843.70" stroke="rgba(0,0,40,.07)" stroke-width="1" /><line x1="1018.50" y1="193.50" x2="1018.50" y2="843.70" stroke="rgba(0,0,40,.07)" stroke-width="1" /><line x1="1035.50" y1="193.50" x2="1035.50" y2="843.70" stroke="rgba(0,0,40,.07)" stroke-width="1" /><line x1="1052.50" y1="193.50" x2="1052.50" y2="843.70" stroke="rgba(0,0,40,.13)" stroke-width="1" /><line x1="1070.50" y1="193.50" x2="1070.50" y2="843.70" stroke="rgba(0,0,40,.07)" stroke-width="1" /><line x1="1087.50" y1="193.50" x2="1087.50" y2="843.70" stroke="rgba(0,0,40,.07)" stroke-width="1" /><line x1="1104.50" y1="193.50" x2="1104.50" y2="843.70" stroke="rgba(0,0,40,.07)" stroke-width="1" /><line x1="1122.50" y1="193.50" x2="1122.50" y2="843.70" stroke="rgba(0,0,40,.13)" stroke-width="1" /><line x1="1139.50" y1="193.50" x2="1139.50" y2="843.70" stroke="rgba(0,0,40,.07)" stroke-width="1" /><line x1="1157.50" y1="193.50" x2="1157.50" y2="843.70" stroke="rgba(0,0,40,.07)" stroke-width="1" /><line x1="1174.50" y1="193.50" x2="1174.50" y2="843.70" stroke="rgba(0,0,40,.07)" stroke-width="1" /><line x1="1191.50" y1="193.50" x2="1191.50" y2="843.70" stroke="rgba(0,0,40,.13)" stroke-width="1" /><line x1="1209.50" y1="193.50" x2="1209.50" y2="843.70" stroke="rgba(0,0,40,.07)" stroke-width="1" /><line x1="1226.50" y1="193.50" x2="1226.50" y2="843.70" stroke="rgba(0,0,40,.07)" stroke-width="1" /><line x1="1243.50" y1="193.50" x2="1243.50" y2="843.70" stroke="rgba(0,0,40,.07)" stroke-width="1" /><line x1="1261.50" y1="193.50" x2="1261.50" y2="843.70" stroke="rgba(0,0,40,.13)" stroke-width="1" /><line x1="1278.50" y1="193.50" x2="1278.50" y2="843.70" stroke="rgba(0,0,40,.07)" stroke-width="1" /><line x1="1296.50" y1="193.50" x2="1296.50" y2="843.70" stroke="rgba(0,0,40,.07)" stroke-width="1" /><line x1="1313.50" y1="193.50" x2="1313.50" y2="843.70" stroke="rgba(0,0,40,.07)" stroke-width="1" /><line x1="1330.50" y1="193.50" x2="1330.50" y2="843.70" stroke="rgba(0,0,40,.13)" stroke-width="1" /><line x1="1348.50" y1="193.50" x2="1348.50" y2="843.70" stroke="rgba(0,0,40,.07)" stroke-width="1" /><line x1="1365.50" y1="193.50" x2="1365.50" y2="843.70" stroke="rgba(0,0,40,.07)" stroke-width="1" /><line x1="1382.50" y1="193.50" x2="1382.50" y2="843.70" stroke="rgba(0,0,40,.07)" stroke-width="1" /><line x1="1400.50" y1="193.50" x2="1400.50" y2="843.70" stroke="rgba(0,0,40,.13)" stroke-width="1" /><line x1="1417.50" y1="193.50" x2="1417.50" y2="843.70" stroke="rgba(0,0,40,.07)" stroke-width="1" /><line x1="1434.50" y1="193.50" x2="1434.50" y2="843.70" stroke="rgba(0,0,40,.07)" stroke-width="1" /><line x1="1452.50" y1="193.50" x2="1452.50" y2="843.70" stroke="rgba(0,0,40,.07)" stroke-width="1" /><line x1="1469.50" y1="193.50" x2="1469.50" y2="843.70" stroke="rgba(0,0,40,.13)" stroke-width="1" /><line x1="1487.50" y1="193.50" x2="1487.50" y2="843.70" stroke="rgba(0,0,40,.07)" stroke-width="1" /><line x1="1504.50" y1="193.50" x2="1504.50" y2="843.70" stroke="rgba(0,0,40,.07)" stroke-width="1" /></g><path d="M144.5 305.6L145.5 305.4L146.5 305.5L147.5 305.1L148.5 304.6L149.5 302.8L150.5 305.1L151.5 305.6L152.5 305.7L153.5 305.4L154.5 305.1L155.5 305.0L156.5 301.4L157.5 304.6L158.5 305.0L159.5 303.9L160.5 303.5L161.5 303.3L162.5 304.7L163.5 304.0L164.5 305.3L165.5 305.0L166.5 305.4L167.5 305.5L168.5 305.1L169.5 305.3L170.5 305.5L171.5 305.0L172.5 305.3L173.5 305.1L174.5 305.4L175.5 305.4L176.5 305.5L177.5 305.3L178.5 304.7L179.5 304.6L180.5 303.4L181.5 304.5L182.5 302.9L183.5 305.1L184.5 302.9L185.5 305.2L186.5 305.0L187.5 304.9L188.5 303.6L189.5 303.2L190.5 305.6L191.5 305.8L192.5 305.4L193.5 302.0L194.5 304.7L195.5 305.4L196.5 302.4L197.5 304.9L198.5 301.9L199.5 304.6L200.5 304.5L201.5 304.6L202.5 303.0L203.5 303.1L204.5 304.6L205.5 304.7L206.5 302.9L207.5 304.3L208.5 303.9L209.5 304.8L210.5 305.0L211.5 304.8L212.5 305.3L213.5 305.0L214.5 304.4L215.5 304.5L216.5 305.0L217.5 303.1L218.5 304.8L219.5 303.8L220.5 302.4L221.5 305.2L222.5 305.4L223.5 305.3L224.5 304.7L225.5 303.9L226.5 304.9L227.5 304.8L228.5 305.0L229.5 305.3L230.5 305.1L231.5 304.0L232.5 304.8L233.5 305.3L234.5 305.0L235.5 304.8L236.5 304.4L237.5 303.0L238.5 304.1L239.5 304.6L240.5 305.0L241.5 302.5L242.5 304.8L243.5 304.4L244.5 303.4L245.5 304.6L246.5 303.2L247.5 305.2L248.5 304.4L249.5 304.6L250.5 305.1L251.5 304.8L252.5 304.5L253.5 302.5L254.5 304.5L255.5 304.8L256.5 304.7L257.5 304.9L258.5 302.9L259.5 301.8L260.5 304.7L261.5 304.7L262.5 304.5L263.5 304.4L264.5 304.6L265.5 302.4L266.5 305.2L267.5 304.3L268.5 305.2L269.5 303.0L270.5 304.8L271.5 304.8L272.5 305.1L273.5 305.0L274.5 305.3L275.5 305.2L276.5 305.2L277.5 304.8L278.5 304.5L279.5 304.6L280.5 304.7L281.5 304.5L282.5 304.4L283.5 304.5L284.5 304.4L285.5 305.1L286.5 305.6L287.5 302.2L288.5 304.4L289.5 304.9L290.5 305.4L291.5 305.1L292.5 305.5L293.5 302.7L294.5 302.9L295.5 305.0L296.5 305.0L297.5 305.1L298.5 305.6L299.5 305.5L300.5 305.3L301.5 304.5L302.5 304.9L303.5 302.0L304.5 303.4L305.5 304.0L306.5 303.1L307.5 303.9L308.5 304.6L309.5 304.9L310.5 304.6L311.5 304.2L312.5 304.5L313.5 301.7L314.5 304.2L315.5 305.2L316.5 305.5L317.5 305.6L318.5 303.8L319.5 302.7L320.5 304.6L321.5 305.2L322.5 303.5L323.5 305.4L324.5 305.2L325.5 305.1L326.5 305.3L327.5 305.1L328.5 305.3L329.5 305.7L330.5 303.8L331.5 302.7L332.5 304.0L333.5 302.7L334.5 303.1L335.5 302.3L336.5 305.1L337.5 305.1L338.5 305.1L339.5 304.9L340.5 304.9L341.5 301.7L342.5 304.8L343.5 303.8L344.5 304.9L345.5 304.8L346.5 304.8L347.5 302.5L348.5 305.2L349.5 305.0L350.5 305.1L351.5 304.9L352.5 305.1L353.5 304.7L354.5 305.6L355.5 304.6L356.5 305.3L357.5 305.1L358.5 305.3L359.5 304.8L360.5 303.9L361.5 305.5L362.5 305.2L363.5 305.6L364.5 305.7L365.5 305.3L366.5 304.8L367.5 305.2L368.5 302.7L369.5 304.2L370.5 305.3L371.5 304.8L372.5 305.1L373.5 305.2L374.5 304.8L375.5 304.9L376.5 304.6L377.5 304.7L378.5 304.3L379.5 305.1L380.5 305.5L381.5 305.0L382.5 304.8L383.5 305.5L384.5 304.6L385.5 302.6L386.5 305.2L387.5 303.0L388.5 304.4L389.5 303.5L390.5 304.2L391.5 303.6L392.5 304.9L393.5 304.5L394.5 305.0L395.5 304.6L396.5 305.0L397.5 305.5L398.5 303.4L399.5 305.5L400.5 305.1L401.5 305.6L402.5 305.1L403.5 304.4L404.5 303.9L405.5 305.4L406.5 305.3L407.5 303.9L408.5 304.8L409.5 304.3L410.5 305.2L411.5 304.5L412.5 305.3L413.5 304.0L414.5 302.0L415.5 305.1L416.5 304.6L417.5 305.1L418.5 304.9L419.5 302.5L420.5 304.7L421.5 303.0L422.5 304.7L423.5 304.9L424.5 305.1L425.5 305.3L426.5 305.0L427.5 305.3L428.5 304.7L429.5 304.7L430.5 305.0L431.5 303.7L432.5 304.7L433.5 304.9L434.5 304.8L435.5 304.9L436.5 304.7L437.5 304.1L438.5 305.4L439.5 305.1L440.5 304.6L441.5 305.2L442.5 305.2L443.5 305.2L444.5 303.9L445.5 305.1L446.5 304.8L447.5 304.6L448.5 305.4L449.5 305.1L450.5 304.3L451.5 305.0L452.5 304.6L453.5 304.9L454.5 304.4L455.5 304.5L456.5 304.6L457.5 305.0L458.5 303.1L459.5 305.2L460.5 303.7L461.5 305.2L462.5 301.7L463.5 304.8L464.5 303.4L465.5 304.0L466.5 305.0L467.5 302.3L468.5 305.1L469.5 304.9L470.5 304.7L471.5 304.9L472.5 304.9L473.5 305.1L474.5 305.0L475.5 302.8L476.5 305.3L477.5 304.4L478.5 301.9L479.5 304.7L480.5 303.0L481.5 304.9L482.5 305.2L483.5 304.3L484.5 304.7L485.5 305.3L486.5 305.2L487.5 304.9L488.5 305.2L489.5 303.7L490.5 303.8L491.5 304.9L492.5 303.1L493.5 304.7L494.5 304.5L495.5 304.9L496.5 303.7L497.5 304.8L498.5 303.7L499.5 303.1L500.5 305.2L501.5 303.1L502.5 304.6L503.5 303.6L504.5 305.2L505.5 304.9L506.5 304.8L507.5 304.1L508.5 302.4L509.5 305.2L510.5 305.0L511.5 305.0L512.5 305.0L513.5 305.1L514.5 304.4L515.5 304.8L516.5 304.9L517.5 305.3L518.5 304.6L519.5 304.9L520.5 305.5L521.5 301.9L522.5 304.5L523.5 304.6L524.5 304.6L525.5 304.0L526.5 303.7L527.5 302.5L528.5 304.8L529.5 305.1L530.5 304.1L531.5 305.0L532.5 305.0L533.5 304.7L534.5 305.3L535.5 305.2L536.5 304.5L537.5 304.8L538.5 304.7L539.5 305.1L540.5 304.9L541.5 304.9L542.5 305.3L543.5 304.0L544.5 305.5L545.5 302.8L546.5 304.7L547.5 305.6L548.5 305.8L549.5 305.8L550.5 305.6L551.5 304.2L552.5 305.2L553.5 305.4L554.5 305.4L555.5 305.2L556.5 305.0L557.5 303.5L558.5 304.6L559.5 304.5L560.5 305.0L561.5 305.0L562.5 305.3L563.5 302.1L564.5 304.9L565.5 305.0L566.5 305.5L567.5 305.5L568.5 305.1L569.5 303.2L570.5 304.6L571.5 305.5L572.5 304.2L573.5 305.1L574.5 305.2L575.5 305.4L576.5 305.5L577.5 305.3L578.5 304.9L579.5 305.4L580.5 305.4L581.5 305.5L582.5 305.6L583.5 305.1L584.5 304.7L585.5 304.5L586.5 302.1L587.5 304.9L588.5 305.1L589.5 305.2L590.5 305.4L591.5 305.3L592.5 305.4L593.5 305.4L594.5 305.0L595.5 305.5L596.5 305.7L597.5 305.3L598.5 305.5L599.5 303.8L600.5 305.2L601.5 305.2L602.5 305.3L603.5 304.8L604.5 305.1L605.5 303.3L606.5 304.5L607.5 304.8L608.5 304.5L609.5 304.7L610.5 305.4L611.5 305.5L612.5 305.1L613.5 302.2L614.5 303.5L615.5 304.5L616.5 303.5L617.5 304.6L618.5 305.0L619.5 305.0L620.5 305.2L621.5 305.5L622.5 305.3L623.5 304.8L624.5 304.2L625.5 305.8L626.5 305.2L627.5 305.0L628.5 304.8L629.5 304.9L630.5 304.6L631.5 304.7L632.5 304.7L633.5 305.2L634.5 304.8L635.5 304.8L636.5 301.6L637.5 304.6L638.5 304.5L639.5 305.4L640.5 305.2L641.5 304.5L642.5 305.4L643.5 302.1L644.5 304.8L645.5 305.3L646.5 304.8L647.5 305.3L648.5 305.1L649.5 305.3L650.5 305.4L651.5 304.0L652.5 305.8L653.5 305.0L654.5 305.1L655.5 305.2L656.5 304.8L657.5 303.2L658.5 303.8L659.5 305.3L660.5 305.6L661.5 305.1L662.5 305.6L663.5 305.8L664.5 304.7L665.5 303.8L666.5 304.5L667.5 304.5L668.5 304.6L669.5 305.1L670.5 304.0L671.5 304.9L672.5 304.6L673.5 304.4L674.5 304.7L675.5 305.2L676.5 305.3L677.5 305.2L678.5 302.7L679.5 304.8L680.5 302.2L681.5 304.8L682.5 304.7L683.5 302.3L684.5 305.2L685.5 305.3L686.5 305.2L687.5 303.5L688.5 304.8L689.5 304.3L690.5 304.7L691.5 305.0L692.5 305.1L693.5 305.0L694.5 304.7L695.5 303.9L696.5 301.4L697.5 304.4L698.5 304.7L699.5 302.5L700.5 304.6L701.5 303.8L702.5 304.5L703.5 303.9L704.5 305.2L705.5 304.4L706.5 304.5L707.5 304.9L708.5 304.8L709.5 305.3L710.5 303.8L711.5 305.3L712.5 303.3L713.5 304.6L714.5 304.0L715.5 304.6L716.5 305.0L717.5 305.1L718.5 305.5L719.5 305.3L720.5 304.6L721.5 302.0L722.5 304.9L723.5 305.1L724.5 304.2L725.5 305.1L726.5 304.9L727.5 305.1L728.5 304.0L729.5 303.1L730.5 304.8L731.5 305.4L732.5 302.8L733.5 304.7L734.5 305.2L735.5 305.3L736.5 303.7L737.5 305.0L738.5 305.4L739.5 304.8L740.5 302.3L741.5 304.7L742.5 304.9L743.5 302.2L744.5 304.5L745.5 304.3L746.5 305.2L747.5 305.0L748.5 305.3L749.5 304.8L750.5 305.3L751.5 305.1L752.5 304.2L753.5 305.0L754.5 302.9L755.5 304.9L756.5 304.6L757.5 305.3L758.5 305.5L759.5 304.8L760.5 305.4L761.5 305.2L762.5 304.9L763.5 302.6L764.5 305.1L765.5 304.8L766.5 304.3L767.5 305.0L768.5 305.5L769.5 304.6L770.5 305.4L771.5 305.5L772.5 305.4L773.5 302.6L774.5 303.2L775.5 304.7L776.5 305.3L777.5 305.3L778.5 304.5L779.5 305.3L780.5 305.5L781.5 305.5L782.5 305.0L783.5 302.5L784.5 302.5L785.5 305.0L786.5 304.8L787.5 304.9L788.5 305.5L789.5 304.7L790.5 305.0L791.5 304.9L792.5 304.7L793.5 303.8L794.5 304.6L795.5 305.0L796.5 304.9L797.5 304.6L798.5 304.7L799.5 302.5L800.5 304.4L801.5 304.8L802.5 305.3L803.5 305.6L804.5 305.1L805.5 305.5L806.5 303.3L807.5 305.2L808.5 304.1L809.5 305.8L810.5 303.2L811.5 305.0L812.5 304.9L813.5 305.2L814.5 305.5L815.5 305.3L816.5 304.9L817.5 302.1L818.5 304.9L819.5 304.6L820.5 304.3L821.5 305.0L822.5 302.1L823.5 305.0L824.5 304.9L825.5 304.6L826.5 304.7L827.5 302.8L828.5 304.9L829.5 305.3L830.5 305.1L831.5 303.3L832.5 304.9L833.5 304.8L834.5 304.7L835.5 305.3L836.5 305.4L837.5 305.3L838.5 305.4L839.5 304.3L840.5 305.2L841.5 304.9L842.5 304.9L843.5 304.6L844.5 305.0L845.5 302.5L846.5 304.9L847.5 304.6L848.5 304.7L849.5 305.1L850.5 304.7L851.5 305.0L852.5 305.5L853.5 303.9L854.5 305.2L855.5 305.4L856.5 305.3L857.5 305.2L858.5 305.1L859.5 305.1L860.5 304.9L861.5 302.3L862.5 302.4L863.5 304.7L864.5 304.7L865.5 305.3L866.5 305.7L867.5 305.0L868.5 304.4L869.5 304.2L870.5 305.4L871.5 303.7L872.5 305.1L873.5 304.8L874.5 304.9L875.5 305.1L876.5 305.4L877.5 304.5L878.5 305.2L879.5 305.3L880.5 305.5L881.5 305.0L882.5 305.0L883.5 304.8L884.5 301.9L885.5 303.3L886.5 305.3L887.5 304.9L888.5 305.1L889.5 304.8L890.5 305.4L891.5 303.8L892.5 304.2L893.5 305.0L894.5 305.0L895.5 305.6L896.5 304.5L897.5 305.1L898.5 303.0L899.5 305.5L900.5 305.5L901.5 305.2L902.5 304.9L903.5 305.4L904.5 304.8L905.5 305.3L906.5 305.1L907.5 304.6L908.5 304.5L909.5 301.5L910.5 304.4L911.5 305.1L912.5 305.4L913.5 304.9L914.5 305.1L915.5 305.3L916.5 305.1L917.5 305.0L918.5 304.5L919.5 304.8L920.5 304.6L921.5 302.9L922.5 301.7L923.5 304.7L924.5 305.1L925.5 305.3L926.5 305.3L927.5 304.8L928.5 305.4L929.5 305.0L930.5 305.5L931.5 302.5L932.5 305.2L933.5 304.3L934.5 303.7L935.5 305.3L936.5 305.2L937.5 304.8L938.5 305.3L939.5 302.0L940.5 304.0L941.5 303.8L942.5 304.6L943.5 304.4L944.5 304.1L945.5 302.4L946.5 304.9L947.5 303.3L948.5 304.8L949.5 304.5L950.5 304.7L951.5 303.8L952.5 302.4L953.5 304.9L954.5 305.5L955.5 305.3L956.5 305.1L957.5 305.3L958.5 302.8L959.5 302.8L960.5 304.3L961.5 304.5L962.5 304.7L963.5 304.5L964.5 304.6L965.5 304.7L966.5 305.3L967.5 302.8L968.5 305.2L969.5 302.6L970.5 304.9L971.5 304.9L972.5 304.7L973.5 304.4L974.5 304.5L975.5 304.7L976.5 304.7L977.5 304.3L978.5 305.0L979.5 303.0L980.5 305.2L981.5 305.2L982.5 304.5L983.5 304.6L984.5 305.0L985.5 305.7L986.5 305.8L987.5 303.4L988.5 305.4L989.5 304.9L990.5 303.9L991.5 305.3L992.5 304.6L993.5 305.3L994.5 305.3L995.5 305.3L996.5 305.2L997.5 305.2L998.5 303.9L999.5 304.2L1000.5 302.3L1001.5 304.7L1002.5 304.5L1003.5 304.7L1004.5 305.3L1005.5 305.3L1006.5 302.2L1007.5 304.9L1008.5 303.5L1009.5 304.3L1010.5 304.6L1011.5 304.6L1012.5 304.4L1013.5 304.4L1014.5 305.1L1015.5 305.2L1016.5 304.5L1017.5 304.6L1018.5 304.7L1019.5 304.3L1020.5 304.2L1021.5 304.8L1022.5 304.8L1023.5 305.0L1024.5 304.9L1025.5 303.9L1026.5 305.5L1027.5 304.9L1028.5 305.6L1029.5 304.9L1030.5 305.4L1031.5 304.1L1032.5 305.4L1033.5 304.9L1034.5 304.6L1035.5 304.7L1036.5 305.0L1037.5 302.8L1038.5 305.2L1039.5 303.9L1040.5 305.5L1041.5 305.1L1042.5 304.4L1043.5 305.3L1044.5 302.3L1045.5 304.9L1046.5 305.1L1047.5 305.2L1048.5 305.5L1049.5 305.2L1050.5 305.4L1051.5 305.7L1052.5 305.7L1053.5 305.4L1054.5 304.3L1055.5 304.5L1056.5 305.0L1057.5 305.0L1058.5 303.2L1059.5 305.4L1060.5 304.8L1061.5 303.9L1062.5 304.7L1063.5 305.1L1064.5 301.6L1065.5 304.6L1066.5 304.3L1067.5 303.5L1068.5 304.5L1069.5 305.2L1070.5 305.0L1071.5 304.6L1072.5 304.6L1073.5 303.2L1074.5 305.3L1075.5 305.2L1076.5 305.7L1077.5 305.7L1078.5 303.0L1079.5 305.5L1080.5 304.7L1081.5 305.5L1082.5 305.7L1083.5 305.7L1084.5 305.6L1085.5 305.5L1086.5 305.0L1087.5 304.1L1088.5 304.9L1089.5 304.6L1090.5 304.1L1091.5 305.0L1092.5 304.3L1093.5 304.5L1094.5 304.6L1095.5 304.9L1096.5 305.4L1097.5 305.4L1098.5 303.2L1099.5 305.1L1100.5 305.1L1101.5 304.9L1102.5 305.4L1103.5 304.8L1104.5 304.3L1105.5 304.6L1106.5 305.3L1107.5 305.3L1108.5 304.7L1109.5 305.4L1110.5 305.6L1111.5 305.2L1112.5 305.1L1113.5 305.0L1114.5 305.1L1115.5 305.4L1116.5 304.8L1117.5 302.7L1118.5 304.7L1119.5 303.1L1120.5 305.2L1121.5 304.5L1122.5 305.3L1123.5 304.9L1124.5 303.4L1125.5 302.3L1126.5 303.2L1127.5 304.4L1128.5 305.2L1129.5 304.8L1130.5 305.2L1131.5 305.1L1132.5 301.7L1133.5 304.7L1134.5 304.7L1135.5 305.0L1136.5 305.5L1137.5 304.7L1138.5 304.8L1139.5 303.4L1140.5 305.0L1141.5 304.7L1142.5 305.0L1143.5 304.6L1144.5 305.1L1145.5 304.9L1146.5 302.4L1147.5 305.5L1148.5 304.7L1149.5 304.7L1150.5 304.8L1151.5 305.4L1152.5 305.2L1153.5 304.8L1154.5 304.3L1155.5 304.8L1156.5 302.0L1157.5 304.5L1158.5 305.3L1159.5 305.1L1160.5 305.5L1161.5 302.1L1162.5 305.3L1163.5 304.9L1164.5 305.0L1165.5 301.9L1166.5 305.2L1167.5 305.5L1168.5 304.6L1169.5 305.4L1170.5 305.5L1171.5 305.3L1172.5 304.3L1173.5 304.8L1174.5 304.8L1175.5 305.1L1176.5 305.5L1177.5 303.6L1178.5 305.5L1179.5 305.3L1180.5 305.3L1181.5 302.5L1182.5 304.7L1183.5 304.9L1184.5 305.2L1185.5 304.9L1186.5 305.1L1187.5 304.9L1188.5 304.3L1189.5 305.3L1190.5 304.8L1191.5 305.1L1192.5 304.5L1193.5 304.5L1194.5 304.4L1195.5 304.4L1196.5 304.8L1197.5 304.8L1198.5 303.7L1199.5 304.5L1200.5 305.0L1201.5 302.8L1202.5 305.0L1203.5 303.3L1204.5 304.6L1205.5 304.8L1206.5 305.2L1207.5 304.9L1208.5 304.2L1209.5 305.4L1210.5 304.8L1211.5 304.9L1212.5 305.5L1213.5 304.9L1214.5 304.5L1215.5 304.6L1216.5 305.2L1217.5 302.3L1218.5 302.4L1219.5 304.8L1220.5 304.8L1221.5 305.0L1222.5 304.8L1223.5 304.7L1224.5 305.3L1225.5 305.4L1226.5 305.2L1227.5 304.1L1228.5 305.6L1229.5 305.1L1230.5 304.7L1231.5 305.0L1232.5 305.1L1233.5 305.5L1234.5 305.1L1235.5 303.6L1236.5 304.2L1237.5 304.9L1238.5 304.9L1239.5 305.3L1240.5 304.8L1241.5 305.1L1242.5 304.2L1243.5 305.0L1244.5 304.8L1245.5 305.2L1246.5 305.6L1247.5 305.8L1248.5 303.9L1249.5 305.3L1250.5 305.4L1251.5 305.4L1252.5 305.1L1253.5 304.4L1254.5 305.5L1255.5 305.1L1256.5 305.2L1257.5 304.5L1258.5 302.6L1259.5 302.3L1260.5 305.0L1261.5 303.9L1262.5 303.7L1263.5 305.2L1264.5 305.4L1265.5 304.2L1266.5 304.9L1267.5 305.5L1268.5 305.3L1269.5 305.2L1270.5 305.0L1271.5 305.2L1272.5 305.3L1273.5 305.6L1274.5 305.0L1275.5 305.1L1276.5 304.7L1277.5 304.5L1278.5 303.7L1279.5 304.4L1280.5 304.7L1281.5 303.4L1282.5 304.4L1283.5 304.5L1284.5 302.5L1285.5 304.9L1286.5 304.5L1287.5 304.7L1288.5 303.1L1289.5 305.1L1290.5 304.9L1291.5 304.9L1292.5 305.2L1293.5 304.7L1294.5 304.8L1295.5 305.2L1296.5 305.1L1297.5 302.9L1298.5 305.2L1299.5 304.8L1300.5 304.6L1301.5 305.2L1302.5 304.8L1303.5 304.4L1304.5 305.4L1305.5 304.4L1306.5 304.0L1307.5 305.0L1308.5 305.0L1309.5 304.7L1310.5 302.0L1311.5 303.2L1312.5 304.7L1313.5 303.4L1314.5 304.7L1315.5 301.7L1316.5 304.5L1317.5 304.8L1318.5 304.2L1319.5 304.9L1320.5 304.7L1321.5 305.4L1322.5 305.5L1323.5 303.2L1324.5 304.2L1325.5 305.0L1326.5 305.3L1327.5 305.3L1328.5 305.1L1329.5 303.8L1330.5 304.9L1331.5 303.5L1332.5 305.1L1333.5 302.0L1334.5 304.0L1335.5 303.2L1336.5 305.5L1337.5 304.8L1338.5 304.8L1339.5 305.0L1340.5 304.3L1341.5 304.7L1342.5 305.1L1343.5 304.7L1344.5 304.9L1345.5 305.4L1346.5 304.3L1347.5 303.5L1348.5 305.4L1349.5 301.9L1350.5 305.2L1351.5 305.1L1352.5 305.1L1353.5 305.2L1354.5 305.4L1355.5 305.2L1356.5 301.6L1357.5 304.5L1358.5 305.0L1359.5 303.1L1360.5 305.1L1361.5 304.8L1362.5 304.6L1363.5 304.9L1364.5 303.1L1365.5 305.0L1366.5 304.8L1367.5 305.3L1368.5 303.8L1369.5 305.0L1370.5 302.9L1371.5 304.7L1372.5 305.3L1373.5 302.6L1374.5 305.3L1375.5 305.6L1376.5 303.1L1377.5 305.0L1378.5 305.3L1379.5 305.4L1380.5 304.2L1381.5 305.4L1382.5 302.8L1383.5 305.4L1384.5 305.7L1385.5 305.1L1386.5 305.2L1387.5 304.8L1388.5 305.0L1389.5 304.8L1390.5 305.2L1391.5 305.5L1392.5 302.8L1393.5 305.4L1394.5 305.4L1395.5 305.1L1396.5 303.3L1397.5 304.9L1398.5 304.8L1399.5 305.5L1400.5 304.8L1401.5 305.5L1402.5 305.6L1403.5 304.4L1404.5 305.5L1405.5 305.3L1406.5 304.1L1407.5 303.6L1408.5 304.6L1409.5 304.6L1410.5 304.7L1411.5 301.8L1412.5 302.4L1413.5 304.6L1414.5 304.4L1415.5 304.7L1416.5 305.2L1417.5 303.7L1418.5 305.1L1419.5 305.0L1420.5 305.1L1421.5 305.5L1422.5 304.8L1423.5 305.0L1424.5 304.6L1425.5 304.8L1426.5 303.8L1427.5 304.9L1428.5 304.9L1429.5 305.3L1430.5 304.7L1431.5 305.7L1432.5 305.5L1433.5 305.2L1434.5 304.7L1435.5 304.6L1436.5 302.6L1437.5 305.1L1438.5 305.6L1439.5 305.6L1440.5 305.1L1441.5 303.4L1442.5 302.1L1443.5 304.5L1444.5 305.0L1445.5 305.1L1446.5 305.0L1447.5 305.1L1448.5 305.0L1449.5 304.7L1450.5 305.0L1451.5 303.5L1452.5 305.2L1453.5 305.3L1454.5 305.6L1455.5 305.6L1456.5 305.4L1457.5 305.0L1458.5 305.0L1459.5 304.9L1460.5 302.1L1461.5 304.3L1462.5 305.1L1463.5 304.9L1464.5 304.5L1465.5 304.7L1466.5 305.2L1467.5 304.4L1468.5 304.7L1469.5 304.6L1470.5 305.1L1471.5 302.6L1472.5 305.5L1473.5 304.0L1474.5 305.2L1475.5 304.7L1476.5 302.5L1477.5 305.1L1478.5 305.5L1479.5 305.0L1480.5 305.0L1481.5 305.0L1482.5 304.9L1483.5 304.7L1484.5 304.9L1485.5 305.2L1486.5 305.1L1487.5 304.3L1488.5 302.5L1489.5 305.4L1490.5 305.0L1491.5 304.9L1492.5 305.0L1493.5 305.0L1494.5 304.1L1495.5 304.4L1496.5 304.4L1497.5 305.0L1498.5 305.5L1499.5 305.7L1500.5 304.8L1501.5 303.1L1502.5 305.3L1503.5 303.5L1504.5 305.6L1505.5 305.5L1506.5 305.6L1507.5 305.2L1508.5 304.5L1509.5 302.0L1510.5 305.2L1511.5 305.0L1512.5 305.4L1513.5 304.8L1514.5 305.3L1515.5 305.3L1516.5 303.9L1517.5 304.5L1518.5 305.5L1519.5 305.3L1519.5 312.9L1518.5 310.8L1517.5 310.6L1516.5 311.1L1515.5 310.6L1514.5 314.1L1513.5 310.8L1512.5 310.7L1511.5 310.3L1510.5 310.5L1509.5 310.6L1508.5 313.6L1507.5 310.8L1506.5 310.9L1505.5 310.9L1504.5 311.8L1503.5 310.9L1502.5 310.6L1501.5 310.6L1500.5 311.6L1499.5 311.0L1498.5 310.8L1497.5 311.5L1496.5 309.8L1495.5 309.8L1494.5 310.0L1493.5 310.4L1492.5 310.5L1491.5 311.6L1490.5 310.6L1489.5 311.1L1488.5 310.7L1487.5 311.3L1486.5 310.6L1485.5 310.5L1484.5 310.2L1483.5 310.2L1482.5 310.3L1481.5 312.8L1480.5 311.2L1479.5 310.4L1478.5 310.8L1477.5 310.6L1476.5 312.5L1475.5 311.4L1474.5 310.6L1473.5 310.9L1472.5 310.8L1471.5 310.6L1470.5 311.1L1469.5 310.3L1468.5 310.4L1467.5 310.4L1466.5 311.1L1465.5 310.0L1464.5 313.1L1463.5 312.7L1462.5 310.9L1461.5 310.3L1460.5 310.4L1459.5 310.7L1458.5 310.4L1457.5 310.5L1456.5 310.9L1455.5 310.9L1454.5 310.8L1453.5 311.3L1452.5 310.6L1451.5 312.8L1450.5 310.3L1449.5 310.4L1448.5 310.6L1447.5 311.7L1446.5 310.3L1445.5 311.9L1444.5 310.4L1443.5 310.1L1442.5 310.5L1441.5 311.9L1440.5 311.0L1439.5 311.6L1438.5 311.0L1437.5 310.6L1436.5 310.5L1435.5 311.9L1434.5 310.6L1433.5 310.6L1432.5 312.8L1431.5 311.1L1430.5 312.3L1429.5 310.6L1428.5 312.4L1427.5 310.3L1426.5 312.6L1425.5 310.1L1424.5 310.3L1423.5 310.3L1422.5 311.7L1421.5 310.8L1420.5 310.4L1419.5 310.3L1418.5 311.2L1417.5 310.3L1416.5 311.5L1415.5 310.0L1414.5 309.8L1413.5 310.3L1412.5 309.8L1411.5 310.5L1410.5 310.1L1409.5 310.6L1408.5 309.9L1407.5 311.1L1406.5 310.4L1405.5 312.0L1404.5 310.8L1403.5 311.6L1402.5 311.0L1401.5 311.0L1400.5 311.1L1399.5 310.8L1398.5 312.9L1397.5 313.3L1396.5 312.0L1395.5 310.4L1394.5 310.7L1393.5 310.7L1392.5 310.8L1391.5 310.9L1390.5 311.3L1389.5 311.1L1388.5 310.4L1387.5 310.4L1386.5 310.5L1385.5 310.4L1384.5 310.9L1383.5 312.5L1382.5 310.3L1381.5 313.4L1380.5 311.0L1379.5 311.0L1378.5 312.2L1377.5 310.3L1376.5 310.8L1375.5 310.9L1374.5 310.6L1373.5 310.4L1372.5 310.7L1371.5 310.2L1370.5 311.4L1369.5 310.3L1368.5 310.7L1367.5 310.7L1366.5 310.9L1365.5 311.2L1364.5 310.8L1363.5 310.6L1362.5 310.0L1361.5 311.8L1360.5 310.4L1359.5 310.8L1358.5 310.5L1357.5 310.9L1356.5 311.7L1355.5 310.7L1354.5 310.7L1353.5 310.8L1352.5 313.3L1351.5 313.2L1350.5 310.8L1349.5 311.0L1348.5 311.3L1347.5 310.8L1346.5 310.7L1345.5 310.7L1344.5 310.3L1343.5 310.1L1342.5 310.4L1341.5 310.1L1340.5 310.4L1339.5 310.5L1338.5 310.1L1337.5 310.2L1336.5 310.7L1335.5 310.2L1334.5 313.2L1333.5 310.4L1332.5 311.5L1331.5 310.4L1330.5 310.4L1329.5 313.2L1328.5 311.4L1327.5 312.7L1326.5 310.8L1325.5 310.4L1324.5 311.0L1323.5 310.8L1322.5 310.8L1321.5 310.7L1320.5 310.1L1319.5 310.3L1318.5 310.9L1317.5 310.3L1316.5 310.5L1315.5 310.1L1314.5 310.5L1313.5 309.9L1312.5 310.5L1311.5 310.8L1310.5 311.9L1309.5 310.1L1308.5 310.5L1307.5 310.7L1306.5 310.1L1305.5 310.2L1304.5 313.3L1303.5 312.2L1302.5 310.2L1301.5 311.0L1300.5 309.9L1299.5 310.3L1298.5 310.5L1297.5 311.2L1296.5 312.8L1295.5 310.6L1294.5 310.4L1293.5 310.1L1292.5 312.0L1291.5 310.3L1290.5 312.4L1289.5 310.8L1288.5 310.7L1287.5 310.0L1286.5 310.3L1285.5 310.8L1284.5 310.2L1283.5 309.9L1282.5 310.1L1281.5 310.0L1280.5 310.3L1279.5 310.1L1278.5 311.8L1277.5 310.4L1276.5 310.2L1275.5 310.4L1274.5 310.4L1273.5 310.9L1272.5 310.6L1271.5 310.4L1270.5 310.3L1269.5 310.5L1268.5 310.7L1267.5 310.8L1266.5 310.6L1265.5 310.5L1264.5 313.0L1263.5 310.5L1262.5 312.0L1261.5 310.7L1260.5 310.3L1259.5 310.7L1258.5 312.7L1257.5 312.7L1256.5 311.3L1255.5 310.4L1254.5 311.4L1253.5 310.5L1252.5 311.0L1251.5 310.7L1250.5 311.9L1249.5 310.5L1248.5 310.4L1247.5 311.1L1246.5 310.9L1245.5 310.5L1244.5 310.8L1243.5 310.3L1242.5 310.2L1241.5 310.6L1240.5 310.1L1239.5 312.3L1238.5 310.2L1237.5 311.7L1236.5 313.4L1235.5 310.1L1234.5 310.6L1233.5 310.7L1232.5 310.7L1231.5 310.3L1230.5 310.4L1229.5 310.4L1228.5 310.9L1227.5 311.5L1226.5 311.2L1225.5 310.7L1224.5 313.1L1223.5 310.0L1222.5 311.0L1221.5 310.8L1220.5 310.2L1219.5 310.9L1218.5 310.9L1217.5 310.9L1216.5 310.5L1215.5 310.0L1214.5 310.0L1213.5 312.2L1212.5 310.8L1211.5 310.4L1210.5 310.3L1209.5 310.7L1208.5 310.4L1207.5 310.6L1206.5 310.5L1205.5 310.2L1204.5 310.5L1203.5 310.2L1202.5 310.3L1201.5 310.1L1200.5 310.3L1199.5 310.1L1198.5 310.3L1197.5 310.1L1196.5 310.2L1195.5 310.0L1194.5 311.4L1193.5 310.2L1192.5 310.0L1191.5 310.4L1190.5 310.4L1189.5 310.6L1188.5 310.2L1187.5 310.2L1186.5 311.0L1185.5 310.3L1184.5 313.0L1183.5 310.2L1182.5 312.3L1181.5 310.4L1180.5 310.8L1179.5 312.6L1178.5 310.9L1177.5 311.4L1176.5 311.0L1175.5 311.2L1174.5 312.4L1173.5 310.2L1172.5 310.2L1171.5 310.6L1170.5 312.4L1169.5 312.3L1168.5 310.5L1167.5 310.8L1166.5 310.8L1165.5 310.5L1164.5 310.4L1163.5 312.3L1162.5 310.7L1161.5 311.3L1160.5 311.0L1159.5 310.5L1158.5 310.6L1157.5 310.1L1156.5 310.1L1155.5 311.6L1154.5 311.7L1153.5 310.2L1152.5 310.7L1151.5 310.6L1150.5 310.1L1149.5 310.0L1148.5 310.4L1147.5 310.8L1146.5 310.4L1145.5 310.8L1144.5 310.4L1143.5 310.1L1142.5 311.0L1141.5 310.5L1140.5 310.3L1139.5 312.3L1138.5 310.1L1137.5 310.2L1136.5 310.8L1135.5 310.3L1134.5 310.2L1133.5 310.3L1132.5 310.1L1131.5 310.4L1130.5 310.5L1129.5 310.8L1128.5 310.6L1127.5 312.6L1126.5 313.5L1125.5 311.9L1124.5 310.1L1123.5 313.2L1122.5 311.8L1121.5 312.3L1120.5 311.1L1119.5 310.2L1118.5 310.4L1117.5 310.3L1116.5 310.2L1115.5 310.7L1114.5 310.6L1113.5 310.4L1112.5 310.4L1111.5 310.5L1110.5 310.8L1109.5 310.7L1108.5 312.2L1107.5 310.6L1106.5 312.0L1105.5 310.0L1104.5 310.1L1103.5 310.8L1102.5 310.7L1101.5 311.6L1100.5 310.4L1099.5 311.1L1098.5 310.5L1097.5 310.7L1096.5 313.6L1095.5 310.3L1094.5 310.0L1093.5 310.1L1092.5 313.0L1091.5 310.3L1090.5 309.8L1089.5 309.9L1088.5 310.3L1087.5 310.5L1086.5 310.4L1085.5 311.1L1084.5 311.9L1083.5 313.5L1082.5 310.9L1081.5 311.7L1080.5 311.1L1079.5 311.0L1078.5 310.9L1077.5 311.6L1076.5 311.2L1075.5 310.8L1074.5 310.6L1073.5 310.6L1072.5 310.1L1071.5 310.6L1070.5 310.4L1069.5 310.5L1068.5 313.0L1067.5 310.3L1066.5 309.8L1065.5 309.9L1064.5 312.0L1063.5 310.5L1062.5 310.9L1061.5 311.7L1060.5 310.3L1059.5 310.7L1058.5 310.1L1057.5 310.5L1056.5 310.4L1055.5 310.2L1054.5 310.4L1053.5 310.7L1052.5 312.1L1051.5 311.1L1050.5 310.7L1049.5 310.5L1048.5 310.7L1047.5 311.1L1046.5 310.7L1045.5 310.2L1044.5 310.8L1043.5 310.5L1042.5 310.9L1041.5 310.8L1040.5 310.8L1039.5 312.1L1038.5 310.9L1037.5 310.4L1036.5 310.4L1035.5 312.7L1034.5 309.9L1033.5 310.5L1032.5 310.7L1031.5 310.9L1030.5 311.4L1029.5 312.4L1028.5 311.3L1027.5 311.5L1026.5 310.7L1025.5 312.8L1024.5 310.5L1023.5 310.4L1022.5 310.1L1021.5 310.8L1020.5 310.2L1019.5 312.3L1018.5 310.1L1017.5 310.0L1016.5 310.1L1015.5 310.6L1014.5 310.6L1013.5 312.6L1012.5 310.5L1011.5 310.1L1010.5 310.0L1009.5 310.7L1008.5 310.0L1007.5 310.3L1006.5 310.7L1005.5 310.7L1004.5 311.3L1003.5 310.4L1002.5 310.5L1001.5 310.3L1000.5 310.3L999.5 310.1L998.5 310.1L997.5 312.2L996.5 312.0L995.5 311.3L994.5 310.7L993.5 310.6L992.5 311.1L991.5 312.2L990.5 310.6L989.5 310.2L988.5 310.8L987.5 312.4L986.5 311.1L985.5 310.9L984.5 310.7L983.5 310.4L982.5 310.4L981.5 310.5L980.5 310.9L979.5 309.9L978.5 310.3L977.5 310.1L976.5 310.7L975.5 310.5L974.5 309.8L973.5 309.8L972.5 310.1L971.5 312.7L970.5 311.1L969.5 310.5L968.5 310.5L967.5 310.7L966.5 310.6L965.5 310.1L964.5 309.9L963.5 309.9L962.5 310.1L961.5 309.8L960.5 312.4L959.5 310.0L958.5 310.4L957.5 310.9L956.5 310.5L955.5 311.5L954.5 311.5L953.5 310.2L952.5 310.3L951.5 311.4L950.5 311.4L949.5 310.0L948.5 311.1L947.5 310.1L946.5 310.5L945.5 310.2L944.5 310.4L943.5 309.8L942.5 309.9L941.5 310.0L940.5 310.6L939.5 312.2L938.5 311.7L937.5 310.2L936.5 310.6L935.5 313.0L934.5 310.8L933.5 311.5L932.5 311.4L931.5 310.5L930.5 310.8L929.5 310.5L928.5 310.7L927.5 310.2L926.5 310.7L925.5 310.9L924.5 312.8L923.5 310.5L922.5 310.1L921.5 309.8L920.5 312.1L919.5 310.2L918.5 310.0L917.5 310.3L916.5 310.4L915.5 310.5L914.5 310.4L913.5 310.5L912.5 310.6L911.5 310.9L910.5 309.8L909.5 309.7L908.5 309.9L907.5 310.2L906.5 311.3L905.5 310.6L904.5 312.8L903.5 310.7L902.5 312.7L901.5 310.7L900.5 310.8L899.5 310.8L898.5 310.6L897.5 310.4L896.5 312.7L895.5 311.1L894.5 313.0L893.5 312.5L892.5 313.5L891.5 310.9L890.5 310.7L889.5 311.2L888.5 310.6L887.5 311.0L886.5 311.3L885.5 313.6L884.5 310.3L883.5 310.1L882.5 310.3L881.5 311.0L880.5 310.7L879.5 312.0L878.5 310.7L877.5 310.6L876.5 310.6L875.5 311.9L874.5 310.6L873.5 310.3L872.5 310.4L871.5 310.2L870.5 311.5L869.5 311.1L868.5 310.1L867.5 310.3L866.5 312.3L865.5 313.2L864.5 312.3L863.5 310.5L862.5 309.9L861.5 312.1L860.5 312.8L859.5 310.4L858.5 313.3L857.5 310.6L856.5 311.0L855.5 310.7L854.5 310.5L853.5 311.3L852.5 313.9L851.5 310.6L850.5 311.5L849.5 310.5L848.5 311.8L847.5 312.2L846.5 310.2L845.5 310.2L844.5 310.4L843.5 310.7L842.5 310.2L841.5 312.4L840.5 311.1L839.5 312.1L838.5 312.1L837.5 310.6L836.5 310.7L835.5 310.6L834.5 310.0L833.5 311.4L832.5 312.6L831.5 312.4L830.5 311.0L829.5 310.6L828.5 311.0L827.5 311.2L826.5 310.1L825.5 310.4L824.5 310.2L823.5 310.4L822.5 312.2L821.5 310.5L820.5 310.6L819.5 310.1L818.5 310.2L817.5 310.3L816.5 310.3L815.5 310.7L814.5 310.9L813.5 310.5L812.5 310.7L811.5 311.1L810.5 310.6L809.5 311.0L808.5 310.8L807.5 311.7L806.5 310.6L805.5 313.3L804.5 310.5L803.5 312.0L802.5 311.1L801.5 310.2L800.5 310.4L799.5 309.8L798.5 310.4L797.5 310.1L796.5 312.4L795.5 312.4L794.5 310.5L793.5 310.1L792.5 310.0L791.5 313.2L790.5 310.3L789.5 310.8L788.5 310.7L787.5 310.9L786.5 310.2L785.5 310.3L784.5 310.4L783.5 310.5L782.5 310.4L781.5 310.8L780.5 310.8L779.5 310.7L778.5 310.9L777.5 310.6L776.5 310.6L775.5 310.5L774.5 310.3L773.5 310.4L772.5 311.0L771.5 312.7L770.5 310.7L769.5 311.4L768.5 310.7L767.5 310.4L766.5 311.0L765.5 310.1L764.5 312.0L763.5 310.7L762.5 311.5L761.5 310.6L760.5 310.7L759.5 310.8L758.5 310.8L757.5 310.6L756.5 310.7L755.5 310.4L754.5 310.0L753.5 311.6L752.5 310.2L751.5 311.3L750.5 311.0L749.5 310.6L748.5 310.6L747.5 313.4L746.5 310.6L745.5 313.2L744.5 311.0L743.5 313.1L742.5 310.6L741.5 310.1L740.5 310.0L739.5 310.4L738.5 310.7L737.5 312.0L736.5 310.4L735.5 310.6L734.5 312.1L733.5 310.3L732.5 310.6L731.5 310.7L730.5 310.3L729.5 310.6L728.5 310.9L727.5 311.9L726.5 310.6L725.5 312.8L724.5 310.5L723.5 310.6L722.5 310.3L721.5 310.9L720.5 310.1L719.5 310.6L718.5 311.1L717.5 310.9L716.5 310.5L715.5 309.9L714.5 309.8L713.5 310.2L712.5 310.4L711.5 311.8L710.5 310.2L709.5 310.6L708.5 310.1L707.5 312.1L706.5 312.0L705.5 310.5L704.5 310.7L703.5 310.5L702.5 310.7L701.5 311.0L700.5 313.2L699.5 311.2L698.5 311.2L697.5 312.9L696.5 309.9L695.5 309.8L694.5 310.1L693.5 310.6L692.5 310.6L691.5 310.5L690.5 310.1L689.5 310.0L688.5 310.2L687.5 310.3L686.5 310.6L685.5 310.7L684.5 313.6L683.5 310.1L682.5 310.1L681.5 310.1L680.5 310.6L679.5 310.7L678.5 310.4L677.5 310.5L676.5 310.6L675.5 310.5L674.5 310.5L673.5 310.3L672.5 309.9L671.5 310.2L670.5 310.3L669.5 310.4L668.5 310.1L667.5 310.2L666.5 312.3L665.5 310.9L664.5 310.5L663.5 312.0L662.5 313.4L661.5 310.5L660.5 310.8L659.5 310.6L658.5 310.7L657.5 313.2L656.5 310.3L655.5 310.6L654.5 311.3L653.5 311.7L652.5 311.1L651.5 310.9L650.5 310.6L649.5 310.7L648.5 310.6L647.5 310.6L646.5 310.2L645.5 310.6L644.5 311.1L643.5 310.4L642.5 310.9L641.5 311.8L640.5 310.5L639.5 310.7L638.5 313.5L637.5 310.0L636.5 310.0L635.5 310.3L634.5 310.5L633.5 312.9L632.5 310.0L631.5 310.0L630.5 311.2L629.5 310.3L628.5 311.9L627.5 310.7L626.5 310.9L625.5 311.1L624.5 312.3L623.5 310.8L622.5 310.9L621.5 310.8L620.5 310.6L619.5 310.3L618.5 310.9L617.5 310.1L616.5 309.9L615.5 310.6L614.5 310.4L613.5 310.2L612.5 310.7L611.5 311.1L610.5 310.8L609.5 310.3L608.5 309.8L607.5 310.1L606.5 309.9L605.5 310.1L604.5 310.4L603.5 310.5L602.5 313.0L601.5 313.1L600.5 310.8L599.5 310.8L598.5 310.7L597.5 310.8L596.5 311.0L595.5 310.8L594.5 310.7L593.5 310.8L592.5 310.7L591.5 310.8L590.5 310.7L589.5 310.6L588.5 310.4L587.5 310.4L586.5 311.4L585.5 310.2L584.5 310.4L583.5 311.5L582.5 310.8L581.5 310.8L580.5 312.0L579.5 311.1L578.5 310.5L577.5 310.9L576.5 310.8L575.5 310.8L574.5 310.5L573.5 310.5L572.5 311.0L571.5 310.8L570.5 312.2L569.5 310.7L568.5 310.4L567.5 312.8L566.5 310.7L565.5 310.6L564.5 310.2L563.5 310.9L562.5 310.6L561.5 310.3L560.5 310.3L559.5 310.6L558.5 310.0L557.5 310.3L556.5 310.3L555.5 310.5L554.5 313.6L553.5 312.9L552.5 310.6L551.5 310.7L550.5 310.8L549.5 311.1L548.5 312.7L547.5 311.4L546.5 313.7L545.5 310.8L544.5 310.7L543.5 311.1L542.5 310.6L541.5 311.3L540.5 310.3L539.5 310.4L538.5 310.0L537.5 310.3L536.5 310.6L535.5 310.5L534.5 310.5L533.5 311.6L532.5 310.5L531.5 310.4L530.5 310.2L529.5 311.2L528.5 310.3L527.5 310.3L526.5 310.6L525.5 310.2L524.5 310.1L523.5 310.0L522.5 310.4L521.5 310.3L520.5 310.8L519.5 310.8L518.5 310.8L517.5 310.7L516.5 310.3L515.5 313.1L514.5 310.1L513.5 310.4L512.5 312.2L511.5 311.4L510.5 310.3L509.5 310.5L508.5 310.0L507.5 309.9L506.5 311.9L505.5 310.2L504.5 310.7L503.5 313.6L502.5 310.0L501.5 310.1L500.5 310.5L499.5 313.5L498.5 310.7L497.5 310.3L496.5 310.0L495.5 310.3L494.5 309.8L493.5 310.1L492.5 310.2L491.5 310.8L490.5 310.5L489.5 313.5L488.5 310.5L487.5 310.3L486.5 310.5L485.5 310.6L484.5 310.2L483.5 310.2L482.5 310.9L481.5 312.1L480.5 310.2L479.5 310.1L478.5 311.5L477.5 310.9L476.5 310.8L475.5 310.8L474.5 310.6L473.5 310.5L472.5 310.3L471.5 310.2L470.5 310.0L469.5 310.3L468.5 310.7L467.5 312.9L466.5 310.3L465.5 310.4L464.5 310.4L463.5 311.2L462.5 311.1L461.5 310.5L460.5 310.8L459.5 313.3L458.5 310.5L457.5 310.8L456.5 310.0L455.5 312.2L454.5 310.3L453.5 310.6L452.5 310.0L451.5 311.0L450.5 311.5L449.5 310.4L448.5 310.7L447.5 310.4L446.5 313.5L445.5 310.5L444.5 310.2L443.5 310.8L442.5 312.5L441.5 310.5L440.5 310.1L439.5 310.4L438.5 311.0L437.5 310.4L436.5 310.6L435.5 310.6L434.5 310.4L433.5 310.2L432.5 310.1L431.5 310.0L430.5 310.3L429.5 310.4L428.5 310.2L427.5 313.3L426.5 310.6L425.5 311.0L424.5 310.4L423.5 311.3L422.5 310.1L421.5 310.3L420.5 310.8L419.5 310.4L418.5 310.2L417.5 310.4L416.5 312.0L415.5 311.1L414.5 310.5L413.5 310.8L412.5 310.6L411.5 310.4L410.5 310.5L409.5 309.9L408.5 310.2L407.5 310.1L406.5 310.6L405.5 313.3L404.5 312.7L403.5 310.7L402.5 310.9L401.5 310.9L400.5 311.0L399.5 310.8L398.5 310.5L397.5 310.8L396.5 311.2L395.5 310.0L394.5 310.4L393.5 309.9L392.5 310.7L391.5 309.9L390.5 309.8L389.5 311.6L388.5 311.3L387.5 310.3L386.5 311.0L385.5 310.9L384.5 310.6L383.5 311.4L382.5 310.9L381.5 310.5L380.5 311.3L379.5 311.3L378.5 310.8L377.5 310.3L376.5 310.0L375.5 310.9L374.5 311.3L373.5 310.6L372.5 310.4L371.5 310.1L370.5 312.7L369.5 310.4L368.5 312.2L367.5 310.9L366.5 310.6L365.5 310.6L364.5 311.5L363.5 311.1L362.5 311.2L361.5 310.9L360.5 310.6L359.5 310.2L358.5 311.2L357.5 313.7L356.5 311.5L355.5 310.5L354.5 311.8L353.5 311.7L352.5 310.4L351.5 310.5L350.5 310.4L349.5 310.5L348.5 310.5L347.5 311.3L346.5 310.1L345.5 310.5L344.5 310.6L343.5 310.1L342.5 310.1L341.5 312.8L340.5 311.0L339.5 310.2L338.5 310.4L337.5 310.4L336.5 310.6L335.5 311.5L334.5 311.1L333.5 310.8L332.5 311.1L331.5 313.3L330.5 311.3L329.5 311.5L328.5 310.6L327.5 310.9L326.5 310.8L325.5 310.7L324.5 312.8L323.5 310.7L322.5 310.9L321.5 311.2L320.5 311.0L319.5 310.8L318.5 310.9L317.5 310.8L316.5 310.8L315.5 311.2L314.5 313.1L313.5 310.5L312.5 310.1L311.5 309.9L310.5 310.2L309.5 310.2L308.5 310.0L307.5 309.9L306.5 310.3L305.5 310.3L304.5 311.1L303.5 311.2L302.5 310.4L301.5 311.6L300.5 312.2L299.5 310.7L298.5 311.4L297.5 312.0L296.5 310.5L295.5 310.3L294.5 310.7L293.5 310.2L292.5 311.9L291.5 310.5L290.5 310.7L289.5 310.2L288.5 310.4L287.5 310.3L286.5 311.1L285.5 310.7L284.5 310.6L283.5 309.9L282.5 309.8L281.5 313.1L280.5 310.1L279.5 311.4L278.5 311.4L277.5 310.4L276.5 310.4L275.5 310.6L274.5 310.6L273.5 310.4L272.5 310.6L271.5 310.5L270.5 310.1L269.5 310.3L268.5 310.5L267.5 312.3L266.5 310.5L265.5 312.3L264.5 310.0L263.5 309.9L262.5 309.9L261.5 310.2L260.5 310.1L259.5 309.9L258.5 310.0L257.5 310.2L256.5 311.3L255.5 310.6L254.5 309.9L253.5 310.2L252.5 311.4L251.5 310.1L250.5 310.4L249.5 310.8L248.5 310.4L247.5 310.5L246.5 311.6L245.5 310.8L244.5 313.3L243.5 310.4L242.5 310.6L241.5 310.2L240.5 311.9L239.5 312.0L238.5 309.9L237.5 310.1L236.5 310.4L235.5 310.5L234.5 310.3L233.5 310.6L232.5 310.2L231.5 312.8L230.5 310.6L229.5 310.6L228.5 311.4L227.5 310.1L226.5 310.3L225.5 310.6L224.5 310.1L223.5 311.7L222.5 310.9L221.5 310.5L220.5 310.1L219.5 311.5L218.5 310.1L217.5 310.0L216.5 311.3L215.5 310.1L214.5 310.0L213.5 310.3L212.5 310.6L211.5 312.3L210.5 310.7L209.5 310.3L208.5 310.3L207.5 310.3L206.5 310.3L205.5 310.3L204.5 310.1L203.5 309.9L202.5 309.8L201.5 310.3L200.5 311.0L199.5 312.2L198.5 310.5L197.5 310.8L196.5 310.4L195.5 312.5L194.5 310.1L193.5 310.5L192.5 310.7L191.5 311.0L190.5 310.9L189.5 310.5L188.5 310.4L187.5 310.2L186.5 310.3L185.5 311.5L184.5 310.8L183.5 310.4L182.5 312.2L181.5 312.6L180.5 309.8L179.5 309.9L178.5 310.2L177.5 310.6L176.5 310.9L175.5 310.7L174.5 311.3L173.5 313.5L172.5 311.9L171.5 311.9L170.5 313.5L169.5 310.6L168.5 310.9L167.5 310.8L166.5 311.5L165.5 310.3L164.5 313.2L163.5 310.1L162.5 310.0L161.5 310.5L160.5 310.0L159.5 310.5L158.5 311.0L157.5 310.0L156.5 311.1L155.5 310.3L154.5 310.6L153.5 311.9L152.5 310.9L151.5 310.9L150.5 310.6L149.5 313.6L148.5 311.1L147.5 310.4L146.5 311.1L145.5 310.9L144.5 313.0z" fill="#1b1d22"/><path d="M144.5 332.9L145.5 333.2L146.5 332.1L147.5 332.7L148.5 333.0L149.5 332.4L150.5 332.5L151.5 331.6L152.5 331.1L153.5 330.0L154.5 333.3L155.5 332.9L156.5 332.7L157.5 332.3L158.5 332.3L159.5 332.4L160.5 331.9L161.5 332.1L162.5 332.9L163.5 331.7L164.5 332.0L165.5 332.8L166.5 332.1L167.5 332.6L168.5 333.0L169.5 332.7L170.5 332.9L171.5 332.2L172.5 330.5L173.5 332.3L174.5 333.2L175.5 333.1L176.5 333.1L177.5 332.4L178.5 331.8L179.5 332.5L180.5 332.3L181.5 330.3L182.5 330.9L183.5 332.0L184.5 332.1L185.5 332.2L186.5 331.2L187.5 333.0L188.5 332.5L189.5 331.5L190.5 330.4L191.5 332.3L192.5 332.0L193.5 330.2L194.5 329.9L195.5 331.9L196.5 332.3L197.5 332.1L198.5 332.7L199.5 332.7L200.5 332.5L201.5 333.1L202.5 332.3L203.5 332.7L204.5 332.7L205.5 332.8L206.5 332.2L207.5 332.6L208.5 330.7L209.5 332.5L210.5 331.1L211.5 331.1L212.5 332.7L213.5 332.4L214.5 332.1L215.5 331.9L216.5 332.5L217.5 332.9L218.5 333.0L219.5 330.6L220.5 331.3L221.5 332.9L222.5 332.2L223.5 332.3L224.5 332.6L225.5 331.7L226.5 332.9L227.5 332.7L228.5 331.2L229.5 332.1L230.5 330.8L231.5 331.8L232.5 332.6L233.5 332.4L234.5 332.7L235.5 332.5L236.5 332.5L237.5 331.4L238.5 332.3L239.5 332.5L240.5 332.3L241.5 331.0L242.5 331.6L243.5 332.1L244.5 332.1L245.5 332.7L246.5 333.1L247.5 332.5L248.5 331.5L249.5 332.8L250.5 332.7L251.5 332.6L252.5 332.9L253.5 329.0L254.5 331.9L255.5 331.6L256.5 332.6L257.5 331.2L258.5 332.6L259.5 332.0L260.5 332.1L261.5 332.6L262.5 332.8L263.5 332.5L264.5 332.3L265.5 333.0L266.5 332.7L267.5 329.3L268.5 332.6L269.5 332.7L270.5 332.7L271.5 332.8L272.5 332.7L273.5 332.8L274.5 332.1L275.5 332.7L276.5 331.6L277.5 332.8L278.5 332.6L279.5 330.3L280.5 332.6L281.5 332.3L282.5 332.1L283.5 331.8L284.5 332.5L285.5 332.2L286.5 332.0L287.5 332.3L288.5 332.5L289.5 332.9L290.5 331.9L291.5 332.7L292.5 333.1L293.5 330.1L294.5 332.6L295.5 332.2L296.5 332.6L297.5 332.8L298.5 331.2L299.5 332.5L300.5 332.7L301.5 332.1L302.5 330.2L303.5 330.9L304.5 331.9L305.5 332.0L306.5 332.6L307.5 332.2L308.5 330.7L309.5 332.5L310.5 332.9L311.5 332.9L312.5 332.3L313.5 330.7L314.5 332.6L315.5 332.6L316.5 331.3L317.5 332.0L318.5 332.9L319.5 332.9L320.5 332.8L321.5 332.6L322.5 332.2L323.5 330.1L324.5 330.4L325.5 332.4L326.5 332.0L327.5 331.2L328.5 331.1L329.5 331.8L330.5 330.0L331.5 332.1L332.5 332.7L333.5 329.9L334.5 332.1L335.5 328.9L336.5 332.0L337.5 332.3L338.5 332.7L339.5 332.5L340.5 332.3L341.5 332.5L342.5 331.8L343.5 332.6L344.5 332.6L345.5 332.4L346.5 332.4L347.5 331.8L348.5 332.2L349.5 330.3L350.5 332.5L351.5 332.2L352.5 332.7L353.5 331.9L354.5 331.7L355.5 333.0L356.5 333.1L357.5 332.8L358.5 333.2L359.5 331.2L360.5 332.9L361.5 330.4L362.5 329.9L363.5 333.0L364.5 332.5L365.5 332.6L366.5 330.7L367.5 331.9L368.5 328.3L369.5 331.9L370.5 331.9L371.5 333.1L372.5 330.8L373.5 330.4L374.5 332.0L375.5 331.1L376.5 332.4L377.5 332.3L378.5 332.2L379.5 332.5L380.5 332.3L381.5 332.8L382.5 332.2L383.5 332.5L384.5 332.9L385.5 333.2L386.5 329.5L387.5 332.4L388.5 331.6L389.5 331.7L390.5 333.0L391.5 332.6L392.5 332.3L393.5 332.8L394.5 332.7L395.5 332.7L396.5 332.6L397.5 331.9L398.5 332.7L399.5 331.7L400.5 332.0L401.5 331.1L402.5 332.3L403.5 331.1L404.5 332.4L405.5 330.0L406.5 332.1L407.5 332.5L408.5 333.0L409.5 332.7L410.5 332.2L411.5 332.2L412.5 332.3L413.5 332.1L414.5 328.7L415.5 331.7L416.5 331.8L417.5 332.0L418.5 332.0L419.5 332.7L420.5 332.3L421.5 332.8L422.5 331.2L423.5 332.8L424.5 331.9L425.5 333.0L426.5 332.9L427.5 333.0L428.5 333.1L429.5 333.1L430.5 331.2L431.5 332.3L432.5 332.4L433.5 332.6L434.5 332.2L435.5 332.8L436.5 332.7L437.5 332.8L438.5 332.5L439.5 330.1L440.5 332.5L441.5 333.0L442.5 332.4L443.5 332.1L444.5 332.2L445.5 330.9L446.5 331.7L447.5 331.6L448.5 332.9L449.5 332.4L450.5 332.1L451.5 332.1L452.5 331.5L453.5 332.3L454.5 332.7L455.5 331.9L456.5 332.4L457.5 332.7L458.5 332.9L459.5 332.6L460.5 331.7L461.5 330.8L462.5 331.9L463.5 331.8L464.5 330.8L465.5 332.2L466.5 332.6L467.5 332.2L468.5 332.7L469.5 332.2L470.5 331.8L471.5 331.1L472.5 332.1L473.5 332.4L474.5 331.9L475.5 332.2L476.5 332.2L477.5 332.3L478.5 332.1L479.5 331.6L480.5 332.4L481.5 331.7L482.5 332.4L483.5 330.7L484.5 332.0L485.5 331.9L486.5 332.0L487.5 332.6L488.5 332.6L489.5 332.5L490.5 332.9L491.5 332.6L492.5 332.7L493.5 330.7L494.5 331.4L495.5 329.5L496.5 330.2L497.5 332.4L498.5 332.8L499.5 332.3L500.5 332.4L501.5 331.1L502.5 331.6L503.5 329.4L504.5 332.6L505.5 332.7L506.5 332.5L507.5 332.3L508.5 330.2L509.5 332.2L510.5 331.4L511.5 332.1L512.5 330.0L513.5 332.3L514.5 331.9L515.5 332.6L516.5 332.6L517.5 332.9L518.5 332.7L519.5 333.1L520.5 332.5L521.5 333.0L522.5 332.7L523.5 332.3L524.5 332.4L525.5 332.5L526.5 328.7L527.5 332.3L528.5 332.3L529.5 332.2L530.5 330.4L531.5 332.0L532.5 332.5L533.5 332.7L534.5 332.5L535.5 333.0L536.5 332.5L537.5 328.9L538.5 332.0L539.5 331.8L540.5 330.8L541.5 331.3L542.5 332.7L543.5 333.0L544.5 333.2L545.5 332.3L546.5 333.0L547.5 332.2L548.5 332.3L549.5 332.1L550.5 332.8L551.5 333.0L552.5 331.7L553.5 332.2L554.5 332.3L555.5 331.6L556.5 329.7L557.5 330.7L558.5 333.0L559.5 333.0L560.5 333.0L561.5 332.5L562.5 332.6L563.5 332.4L564.5 331.5L565.5 332.1L566.5 331.5L567.5 332.1L568.5 331.2L569.5 331.5L570.5 331.2L571.5 332.3L572.5 332.1L573.5 332.2L574.5 332.6L575.5 332.9L576.5 333.1L577.5 332.8L578.5 332.8L579.5 332.4L580.5 332.2L581.5 332.3L582.5 331.8L583.5 331.7L584.5 332.7L585.5 332.8L586.5 333.2L587.5 329.7L588.5 332.5L589.5 332.0L590.5 331.9L591.5 329.7L592.5 331.6L593.5 331.9L594.5 333.1L595.5 332.9L596.5 330.8L597.5 333.0L598.5 332.7L599.5 332.7L600.5 331.4L601.5 332.6L602.5 332.4L603.5 332.1L604.5 332.0L605.5 331.9L606.5 331.4L607.5 332.0L608.5 331.8L609.5 332.3L610.5 332.1L611.5 332.7L612.5 332.0L613.5 332.7L614.5 331.7L615.5 331.9L616.5 330.7L617.5 332.4L618.5 332.9L619.5 332.6L620.5 332.5L621.5 332.7L622.5 332.3L623.5 332.6L624.5 331.8L625.5 330.1L626.5 332.3L627.5 331.8L628.5 332.0L629.5 332.4L630.5 332.3L631.5 331.0L632.5 332.5L633.5 330.0L634.5 332.2L635.5 332.1L636.5 332.5L637.5 331.6L638.5 332.5L639.5 332.9L640.5 331.4L641.5 330.3L642.5 332.0L643.5 332.7L644.5 330.9L645.5 332.0L646.5 332.2L647.5 332.4L648.5 332.7L649.5 332.8L650.5 332.7L651.5 333.3L652.5 332.8L653.5 330.6L654.5 333.0L655.5 333.2L656.5 332.5L657.5 332.7L658.5 331.9L659.5 332.6L660.5 330.7L661.5 331.2L662.5 330.9L663.5 332.8L664.5 329.5L665.5 332.0L666.5 330.1L667.5 331.9L668.5 331.1L669.5 332.4L670.5 332.1L671.5 331.7L672.5 332.7L673.5 332.5L674.5 330.0L675.5 329.8L676.5 332.9L677.5 333.1L678.5 332.7L679.5 332.4L680.5 331.4L681.5 332.3L682.5 332.6L683.5 332.5L684.5 332.2L685.5 332.2L686.5 331.9L687.5 331.9L688.5 333.0L689.5 333.0L690.5 330.8L691.5 331.6L692.5 333.0L693.5 332.7L694.5 330.6L695.5 332.7L696.5 332.1L697.5 332.6L698.5 330.8L699.5 329.7L700.5 331.1L701.5 331.6L702.5 333.0L703.5 332.4L704.5 331.9L705.5 332.2L706.5 332.1L707.5 329.7L708.5 331.5L709.5 332.5L710.5 332.7L711.5 332.6L712.5 332.2L713.5 331.8L714.5 331.7L715.5 332.4L716.5 330.8L717.5 331.0L718.5 332.5L719.5 332.2L720.5 331.9L721.5 332.0L722.5 332.4L723.5 332.5L724.5 332.9L725.5 331.9L726.5 331.7L727.5 330.6L728.5 332.3L729.5 330.7L730.5 328.8L731.5 329.3L732.5 332.6L733.5 331.1L734.5 332.2L735.5 331.8L736.5 331.5L737.5 332.0L738.5 331.2L739.5 331.7L740.5 332.5L741.5 329.4L742.5 332.1L743.5 331.2L744.5 332.7L745.5 332.3L746.5 332.7L747.5 332.8L748.5 332.9L749.5 331.9L750.5 332.4L751.5 333.0L752.5 331.6L753.5 332.1L754.5 331.4L755.5 332.9L756.5 333.0L757.5 333.1L758.5 332.4L759.5 332.2L760.5 332.0L761.5 332.5L762.5 329.4L763.5 332.3L764.5 332.4L765.5 332.8L766.5 330.9L767.5 333.0L768.5 332.3L769.5 332.0L770.5 332.1L771.5 332.5L772.5 332.2L773.5 332.3L774.5 331.0L775.5 329.6L776.5 331.6L777.5 332.3L778.5 332.4L779.5 333.1L780.5 332.7L781.5 332.3L782.5 332.8L783.5 332.8L784.5 331.2L785.5 331.9L786.5 332.7L787.5 332.7L788.5 333.1L789.5 332.8L790.5 332.9L791.5 332.4L792.5 332.4L793.5 332.4L794.5 330.4L795.5 331.7L796.5 330.2L797.5 332.6L798.5 331.9L799.5 332.1L800.5 331.6L801.5 332.4L802.5 332.8L803.5 332.3L804.5 332.5L805.5 332.3L806.5 332.7L807.5 332.4L808.5 332.7L809.5 332.8L810.5 332.5L811.5 332.4L812.5 330.9L813.5 332.2L814.5 332.3L815.5 332.0L816.5 329.5L817.5 332.5L818.5 332.9L819.5 333.1L820.5 331.5L821.5 333.0L822.5 333.2L823.5 332.6L824.5 332.6L825.5 332.5L826.5 332.0L827.5 332.5L828.5 332.8L829.5 331.7L830.5 332.9L831.5 330.5L832.5 332.4L833.5 332.1L834.5 331.8L835.5 333.0L836.5 332.9L837.5 329.6L838.5 332.8L839.5 332.5L840.5 332.1L841.5 332.4L842.5 329.9L843.5 332.7L844.5 332.6L845.5 332.5L846.5 332.7L847.5 332.6L848.5 331.4L849.5 332.3L850.5 330.7L851.5 330.4L852.5 331.7L853.5 331.7L854.5 330.2L855.5 331.7L856.5 332.1L857.5 332.5L858.5 331.3L859.5 330.3L860.5 333.1L861.5 333.0L862.5 332.6L863.5 332.5L864.5 329.9L865.5 332.6L866.5 332.3L867.5 332.6L868.5 332.0L869.5 332.6L870.5 333.1L871.5 331.8L872.5 331.8L873.5 330.9L874.5 332.8L875.5 330.6L876.5 330.3L877.5 332.7L878.5 331.8L879.5 330.2L880.5 331.2L881.5 332.3L882.5 332.7L883.5 332.5L884.5 332.4L885.5 332.2L886.5 332.6L887.5 332.3L888.5 332.4L889.5 332.2L890.5 331.6L891.5 331.9L892.5 332.6L893.5 332.5L894.5 332.6L895.5 332.6L896.5 332.6L897.5 329.7L898.5 330.2L899.5 328.8L900.5 331.9L901.5 330.6L902.5 332.7L903.5 333.1L904.5 330.7L905.5 332.1L906.5 329.1L907.5 332.4L908.5 332.2L909.5 331.3L910.5 332.1L911.5 332.7L912.5 332.9L913.5 331.8L914.5 332.2L915.5 332.2L916.5 332.3L917.5 332.2L918.5 330.9L919.5 331.4L920.5 332.5L921.5 332.4L922.5 331.2L923.5 332.3L924.5 329.4L925.5 332.5L926.5 329.2L927.5 329.4L928.5 332.2L929.5 331.6L930.5 332.1L931.5 331.7L932.5 331.9L933.5 329.9L934.5 331.8L935.5 329.5L936.5 332.5L937.5 332.6L938.5 332.1L939.5 332.3L940.5 332.4L941.5 332.0L942.5 332.6L943.5 333.0L944.5 332.4L945.5 333.0L946.5 332.3L947.5 333.0L948.5 332.9L949.5 330.4L950.5 332.4L951.5 332.5L952.5 332.3L953.5 332.5L954.5 331.9L955.5 331.9L956.5 331.9L957.5 331.5L958.5 332.1L959.5 331.7L960.5 331.9L961.5 332.0L962.5 332.1L963.5 329.6L964.5 332.3L965.5 332.6L966.5 329.5L967.5 332.7L968.5 332.2L969.5 332.0L970.5 329.7L971.5 330.3L972.5 331.8L973.5 332.4L974.5 332.4L975.5 332.2L976.5 329.2L977.5 332.6L978.5 331.5L979.5 332.6L980.5 332.0L981.5 329.7L982.5 332.8L983.5 333.0L984.5 332.6L985.5 333.2L986.5 332.7L987.5 329.7L988.5 333.0L989.5 332.9L990.5 332.5L991.5 330.6L992.5 332.8L993.5 332.2L994.5 332.6L995.5 331.6L996.5 332.1L997.5 331.7L998.5 332.2L999.5 330.5L1000.5 331.8L1001.5 331.8L1002.5 330.6L1003.5 329.2L1004.5 331.8L1005.5 332.0L1006.5 329.3L1007.5 330.4L1008.5 329.9L1009.5 332.6L1010.5 329.3L1011.5 332.9L1012.5 331.2L1013.5 333.0L1014.5 332.3L1015.5 332.3L1016.5 331.1L1017.5 332.1L1018.5 331.5L1019.5 332.4L1020.5 331.6L1021.5 331.8L1022.5 332.7L1023.5 332.7L1024.5 332.6L1025.5 332.5L1026.5 332.1L1027.5 332.0L1028.5 331.9L1029.5 332.3L1030.5 331.1L1031.5 330.9L1032.5 332.1L1033.5 331.7L1034.5 332.5L1035.5 332.9L1036.5 332.3L1037.5 331.7L1038.5 332.4L1039.5 332.8L1040.5 332.4L1041.5 332.9L1042.5 333.2L1043.5 332.8L1044.5 332.6L1045.5 331.6L1046.5 332.3L1047.5 332.4L1048.5 331.8L1049.5 331.5L1050.5 333.1L1051.5 331.6L1052.5 332.6L1053.5 332.6L1054.5 332.2L1055.5 332.8L1056.5 332.2L1057.5 332.3L1058.5 333.0L1059.5 333.0L1060.5 332.4L1061.5 332.1L1062.5 331.7L1063.5 332.5L1064.5 330.0L1065.5 330.1L1066.5 332.1L1067.5 331.3L1068.5 331.9L1069.5 332.5L1070.5 332.0L1071.5 332.6L1072.5 329.5L1073.5 332.4L1074.5 332.3L1075.5 331.3L1076.5 332.9L1077.5 332.3L1078.5 332.6L1079.5 333.0L1080.5 333.1L1081.5 332.8L1082.5 331.5L1083.5 332.5L1084.5 332.3L1085.5 332.0L1086.5 332.1L1087.5 330.5L1088.5 331.4L1089.5 332.6L1090.5 332.7L1091.5 332.3L1092.5 330.4L1093.5 331.5L1094.5 331.3L1095.5 332.1L1096.5 332.7L1097.5 332.5L1098.5 331.4L1099.5 332.0L1100.5 331.2L1101.5 331.5L1102.5 332.3L1103.5 331.9L1104.5 332.9L1105.5 332.5L1106.5 331.5L1107.5 332.7L1108.5 332.1L1109.5 332.6L1110.5 328.9L1111.5 328.7L1112.5 330.2L1113.5 332.1L1114.5 331.8L1115.5 332.3L1116.5 332.0L1117.5 332.8L1118.5 332.7L1119.5 332.9L1120.5 331.9L1121.5 332.2L1122.5 332.4L1123.5 332.6L1124.5 332.1L1125.5 329.1L1126.5 332.8L1127.5 331.1L1128.5 332.1L1129.5 330.1L1130.5 331.4L1131.5 332.5L1132.5 332.6L1133.5 333.0L1134.5 332.7L1135.5 330.2L1136.5 331.9L1137.5 332.3L1138.5 332.6L1139.5 333.1L1140.5 333.1L1141.5 332.2L1142.5 332.7L1143.5 332.1L1144.5 331.6L1145.5 331.6L1146.5 333.0L1147.5 332.7L1148.5 332.4L1149.5 332.7L1150.5 333.0L1151.5 332.1L1152.5 332.6L1153.5 332.4L1154.5 332.2L1155.5 332.7L1156.5 332.9L1157.5 332.3L1158.5 330.8L1159.5 331.8L1160.5 332.1L1161.5 330.2L1162.5 331.4L1163.5 333.0L1164.5 332.4L1165.5 331.8L1166.5 330.4L1167.5 331.4L1168.5 332.1L1169.5 333.0L1170.5 330.5L1171.5 332.5L1172.5 331.0L1173.5 332.9L1174.5 331.8L1175.5 332.0L1176.5 331.5L1177.5 331.7L1178.5 331.9L1179.5 332.6L1180.5 331.8L1181.5 332.7L1182.5 333.0L1183.5 332.4L1184.5 332.7L1185.5 332.9L1186.5 332.6L1187.5 332.5L1188.5 332.1L1189.5 331.2L1190.5 332.1L1191.5 331.9L1192.5 332.0L1193.5 332.1L1194.5 332.7L1195.5 332.4L1196.5 331.8L1197.5 332.0L1198.5 332.0L1199.5 329.6L1200.5 332.0L1201.5 332.4L1202.5 332.2L1203.5 332.6L1204.5 330.3L1205.5 330.8L1206.5 332.5L1207.5 332.7L1208.5 332.2L1209.5 332.5L1210.5 332.1L1211.5 332.8L1212.5 331.2L1213.5 330.4L1214.5 330.6L1215.5 332.3L1216.5 331.4L1217.5 332.7L1218.5 332.9L1219.5 333.1L1220.5 333.0L1221.5 332.8L1222.5 332.4L1223.5 331.3L1224.5 332.2L1225.5 331.9L1226.5 333.0L1227.5 331.7L1228.5 330.9L1229.5 333.0L1230.5 331.4L1231.5 332.4L1232.5 330.2L1233.5 332.8L1234.5 331.4L1235.5 332.8L1236.5 333.0L1237.5 332.7L1238.5 332.3L1239.5 332.5L1240.5 332.3L1241.5 329.9L1242.5 329.2L1243.5 331.0L1244.5 332.1L1245.5 332.3L1246.5 332.1L1247.5 331.0L1248.5 329.7L1249.5 332.4L1250.5 332.9L1251.5 332.8L1252.5 329.7L1253.5 331.9L1254.5 331.9L1255.5 331.9L1256.5 331.4L1257.5 332.8L1258.5 332.4L1259.5 332.7L1260.5 332.6L1261.5 332.7L1262.5 332.5L1263.5 332.4L1264.5 331.5L1265.5 329.2L1266.5 332.5L1267.5 331.8L1268.5 331.2L1269.5 332.7L1270.5 332.1L1271.5 332.4L1272.5 331.4L1273.5 333.2L1274.5 331.7L1275.5 332.3L1276.5 329.5L1277.5 332.7L1278.5 332.4L1279.5 332.1L1280.5 329.6L1281.5 331.3L1282.5 332.7L1283.5 333.0L1284.5 332.4L1285.5 332.7L1286.5 333.0L1287.5 332.4L1288.5 332.0L1289.5 330.7L1290.5 331.3L1291.5 329.1L1292.5 332.2L1293.5 332.1L1294.5 330.7L1295.5 332.6L1296.5 331.8L1297.5 331.1L1298.5 332.5L1299.5 332.0L1300.5 331.8L1301.5 332.2L1302.5 332.7L1303.5 330.3L1304.5 332.5L1305.5 332.0L1306.5 331.9L1307.5 332.5L1308.5 332.1L1309.5 331.9L1310.5 331.2L1311.5 332.1L1312.5 332.1L1313.5 332.5L1314.5 332.6L1315.5 332.4L1316.5 329.9L1317.5 331.7L1318.5 331.9L1319.5 329.6L1320.5 332.5L1321.5 332.0L1322.5 331.0L1323.5 331.8L1324.5 332.5L1325.5 332.1L1326.5 332.1L1327.5 331.9L1328.5 332.2L1329.5 332.8L1330.5 332.4L1331.5 332.5L1332.5 331.4L1333.5 332.8L1334.5 332.9L1335.5 332.4L1336.5 332.3L1337.5 331.0L1338.5 332.2L1339.5 332.2L1340.5 330.2L1341.5 332.5L1342.5 332.8L1343.5 332.3L1344.5 332.6L1345.5 332.6L1346.5 332.9L1347.5 333.0L1348.5 332.9L1349.5 332.1L1350.5 330.9L1351.5 331.7L1352.5 332.1L1353.5 330.9L1354.5 332.6L1355.5 332.9L1356.5 331.2L1357.5 332.3L1358.5 330.6L1359.5 332.5L1360.5 332.2L1361.5 332.1L1362.5 331.9L1363.5 329.6L1364.5 332.2L1365.5 332.0L1366.5 332.4L1367.5 331.6L1368.5 332.6L1369.5 332.7L1370.5 330.7L1371.5 332.2L1372.5 333.2L1373.5 330.5L1374.5 333.0L1375.5 331.8L1376.5 332.4L1377.5 332.8L1378.5 332.8L1379.5 332.2L1380.5 332.0L1381.5 332.4L1382.5 332.5L1383.5 332.1L1384.5 332.3L1385.5 332.8L1386.5 332.4L1387.5 332.0L1388.5 330.8L1389.5 332.5L1390.5 331.0L1391.5 331.9L1392.5 331.9L1393.5 331.3L1394.5 332.1L1395.5 329.6L1396.5 332.6L1397.5 332.7L1398.5 331.1L1399.5 332.8L1400.5 332.1L1401.5 331.8L1402.5 332.7L1403.5 333.0L1404.5 332.2L1405.5 331.9L1406.5 332.5L1407.5 332.1L1408.5 331.8L1409.5 332.5L1410.5 332.1L1411.5 329.7L1412.5 332.6L1413.5 332.1L1414.5 330.1L1415.5 330.6L1416.5 331.3L1417.5 330.7L1418.5 329.8L1419.5 332.0L1420.5 332.2L1421.5 332.7L1422.5 331.9L1423.5 330.4L1424.5 332.3L1425.5 331.8L1426.5 332.2L1427.5 332.7L1428.5 332.9L1429.5 333.0L1430.5 333.4L1431.5 332.5L1432.5 332.6L1433.5 332.8L1434.5 332.4L1435.5 331.0L1436.5 332.9L1437.5 332.6L1438.5 332.8L1439.5 332.2L1440.5 328.7L1441.5 330.9L1442.5 332.2L1443.5 332.1L1444.5 333.2L1445.5 332.9L1446.5 332.7L1447.5 332.6L1448.5 332.6L1449.5 332.4L1450.5 332.3L1451.5 332.2L1452.5 331.9L1453.5 332.3L1454.5 332.2L1455.5 332.0L1456.5 332.0L1457.5 331.4L1458.5 330.0L1459.5 332.1L1460.5 331.6L1461.5 332.2L1462.5 332.3L1463.5 332.1L1464.5 332.2L1465.5 332.6L1466.5 332.2L1467.5 332.0L1468.5 332.4L1469.5 331.5L1470.5 333.0L1471.5 331.2L1472.5 332.5L1473.5 332.9L1474.5 332.3L1475.5 329.5L1476.5 332.2L1477.5 331.9L1478.5 332.0L1479.5 331.8L1480.5 332.0L1481.5 331.9L1482.5 331.8L1483.5 331.9L1484.5 331.7L1485.5 329.1L1486.5 331.8L1487.5 332.4L1488.5 330.9L1489.5 332.8L1490.5 332.9L1491.5 332.6L1492.5 330.9L1493.5 331.3L1494.5 331.2L1495.5 331.9L1496.5 332.7L1497.5 331.3L1498.5 332.2L1499.5 332.3L1500.5 331.9L1501.5 329.4L1502.5 332.4L1503.5 331.3L1504.5 332.5L1505.5 331.8L1506.5 332.5L1507.5 332.4L1508.5 332.4L1509.5 333.1L1510.5 333.0L1511.5 332.4L1512.5 332.4L1513.5 332.0L1514.5 332.4L1515.5 332.4L1516.5 331.2L1517.5 333.1L1518.5 332.8L1519.5 332.1L1519.5 338.0L1518.5 338.5L1517.5 338.9L1516.5 338.7L1515.5 338.7L1514.5 338.1L1513.5 338.0L1512.5 338.0L1511.5 338.2L1510.5 340.7L1509.5 341.8L1508.5 341.8L1507.5 338.7L1506.5 338.1L1505.5 337.8L1504.5 338.7L1503.5 338.0L1502.5 338.1L1501.5 338.3L1500.5 337.6L1499.5 339.1L1498.5 337.9L1497.5 338.4L1496.5 338.4L1495.5 338.2L1494.5 338.0L1493.5 337.6L1492.5 338.0L1491.5 340.5L1490.5 338.5L1489.5 341.3L1488.5 338.4L1487.5 338.2L1486.5 338.4L1485.5 337.3L1484.5 337.4L1483.5 337.6L1482.5 337.7L1481.5 337.6L1480.5 337.7L1479.5 339.2L1478.5 337.7L1477.5 337.7L1476.5 337.9L1475.5 338.2L1474.5 338.1L1473.5 338.5L1472.5 338.8L1471.5 338.1L1470.5 338.6L1469.5 338.8L1468.5 338.2L1467.5 337.8L1466.5 337.9L1465.5 338.3L1464.5 337.9L1463.5 339.0L1462.5 338.2L1461.5 337.8L1460.5 337.8L1459.5 337.8L1458.5 338.3L1457.5 338.7L1456.5 338.6L1455.5 340.5L1454.5 337.9L1453.5 339.0L1452.5 337.6L1451.5 337.9L1450.5 338.0L1449.5 338.3L1448.5 338.3L1447.5 338.4L1446.5 338.3L1445.5 341.3L1444.5 338.8L1443.5 338.4L1442.5 337.9L1441.5 338.3L1440.5 337.9L1439.5 337.9L1438.5 338.5L1437.5 338.7L1436.5 338.6L1435.5 338.4L1434.5 338.2L1433.5 341.8L1432.5 338.4L1431.5 338.3L1430.5 338.9L1429.5 338.8L1428.5 338.5L1427.5 339.2L1426.5 337.9L1425.5 340.7L1424.5 340.4L1423.5 338.1L1422.5 338.0L1421.5 339.2L1420.5 340.2L1419.5 338.4L1418.5 338.4L1417.5 337.9L1416.5 338.1L1415.5 338.3L1414.5 338.0L1413.5 337.8L1412.5 338.7L1411.5 338.2L1410.5 337.9L1409.5 340.8L1408.5 338.0L1407.5 338.1L1406.5 338.2L1405.5 337.8L1404.5 339.2L1403.5 340.0L1402.5 338.4L1401.5 337.8L1400.5 337.9L1399.5 338.4L1398.5 338.2L1397.5 338.3L1396.5 338.7L1395.5 338.4L1394.5 338.1L1393.5 338.4L1392.5 340.8L1391.5 337.7L1390.5 338.0L1389.5 338.2L1388.5 338.0L1387.5 338.8L1386.5 338.3L1385.5 338.4L1384.5 338.1L1383.5 338.0L1382.5 338.3L1381.5 338.1L1380.5 337.7L1379.5 338.0L1378.5 338.4L1377.5 338.4L1376.5 338.1L1375.5 338.0L1374.5 340.8L1373.5 339.3L1372.5 338.9L1371.5 338.8L1370.5 338.4L1369.5 338.4L1368.5 339.0L1367.5 338.1L1366.5 338.1L1365.5 337.7L1364.5 338.4L1363.5 338.3L1362.5 338.6L1361.5 338.1L1360.5 337.9L1359.5 339.5L1358.5 337.8L1357.5 340.7L1356.5 338.0L1355.5 338.5L1354.5 341.1L1353.5 338.7L1352.5 337.9L1351.5 338.1L1350.5 340.7L1349.5 339.3L1348.5 338.6L1347.5 338.7L1346.5 340.1L1345.5 338.3L1344.5 338.3L1343.5 338.2L1342.5 338.7L1341.5 338.4L1340.5 339.4L1339.5 338.3L1338.5 338.0L1337.5 340.2L1336.5 338.0L1335.5 341.5L1334.5 338.6L1333.5 338.4L1332.5 338.0L1331.5 338.2L1330.5 338.1L1329.5 338.4L1328.5 337.9L1327.5 339.3L1326.5 337.8L1325.5 339.9L1324.5 341.5L1323.5 338.4L1322.5 337.5L1321.5 337.8L1320.5 338.2L1319.5 337.8L1318.5 337.6L1317.5 337.5L1316.5 337.7L1315.5 338.1L1314.5 338.2L1313.5 338.2L1312.5 337.9L1311.5 338.0L1310.5 338.3L1309.5 337.6L1308.5 340.4L1307.5 338.2L1306.5 337.8L1305.5 338.6L1304.5 338.3L1303.5 338.3L1302.5 338.7L1301.5 337.9L1300.5 337.7L1299.5 338.0L1298.5 338.6L1297.5 337.9L1296.5 341.4L1295.5 338.3L1294.5 338.1L1293.5 337.8L1292.5 338.1L1291.5 337.9L1290.5 338.0L1289.5 338.9L1288.5 339.9L1287.5 338.3L1286.5 338.6L1285.5 340.1L1284.5 339.1L1283.5 338.6L1282.5 339.7L1281.5 338.4L1280.5 339.2L1279.5 338.3L1278.5 338.0L1277.5 338.7L1276.5 338.0L1275.5 338.2L1274.5 338.4L1273.5 338.8L1272.5 341.7L1271.5 338.1L1270.5 337.9L1269.5 338.3L1268.5 340.4L1267.5 338.1L1266.5 338.3L1265.5 339.2L1264.5 337.8L1263.5 338.3L1262.5 341.5L1261.5 338.4L1260.5 338.3L1259.5 338.3L1258.5 338.3L1257.5 338.4L1256.5 338.3L1255.5 337.6L1254.5 339.6L1253.5 337.6L1252.5 337.9L1251.5 338.5L1250.5 338.6L1249.5 338.2L1248.5 338.3L1247.5 337.9L1246.5 338.2L1245.5 341.1L1244.5 337.9L1243.5 337.6L1242.5 337.9L1241.5 341.4L1240.5 339.7L1239.5 338.4L1238.5 338.9L1237.5 338.3L1236.5 341.2L1235.5 338.5L1234.5 338.6L1233.5 338.6L1232.5 339.5L1231.5 338.3L1230.5 338.1L1229.5 338.7L1228.5 338.7L1227.5 339.3L1226.5 338.7L1225.5 338.2L1224.5 339.4L1223.5 338.5L1222.5 338.3L1221.5 338.8L1220.5 339.5L1219.5 338.9L1218.5 338.8L1217.5 338.3L1216.5 339.1L1215.5 338.6L1214.5 338.2L1213.5 338.3L1212.5 338.3L1211.5 338.4L1210.5 338.0L1209.5 338.7L1208.5 338.3L1207.5 338.3L1206.5 338.2L1205.5 340.7L1204.5 338.4L1203.5 338.7L1202.5 337.9L1201.5 338.5L1200.5 337.7L1199.5 338.1L1198.5 337.9L1197.5 337.9L1196.5 338.2L1195.5 338.4L1194.5 338.4L1193.5 337.8L1192.5 338.1L1191.5 338.3L1190.5 337.8L1189.5 338.2L1188.5 338.0L1187.5 338.2L1186.5 338.9L1185.5 338.7L1184.5 340.1L1183.5 340.1L1182.5 338.6L1181.5 338.4L1180.5 339.2L1179.5 338.3L1178.5 338.0L1177.5 338.1L1176.5 340.1L1175.5 337.7L1174.5 338.0L1173.5 338.6L1172.5 338.1L1171.5 338.1L1170.5 338.3L1169.5 338.6L1168.5 338.3L1167.5 338.6L1166.5 338.4L1165.5 340.1L1164.5 338.1L1163.5 338.7L1162.5 339.0L1161.5 337.9L1160.5 337.8L1159.5 338.1L1158.5 338.7L1157.5 338.0L1156.5 339.1L1155.5 338.3L1154.5 337.9L1153.5 339.2L1152.5 338.5L1151.5 339.2L1150.5 339.0L1149.5 338.5L1148.5 338.5L1147.5 338.3L1146.5 338.6L1145.5 338.5L1144.5 338.4L1143.5 338.7L1142.5 339.0L1141.5 338.4L1140.5 339.8L1139.5 338.7L1138.5 338.4L1137.5 340.6L1136.5 340.8L1135.5 338.7L1134.5 338.7L1133.5 338.6L1132.5 339.2L1131.5 338.2L1130.5 338.9L1129.5 338.0L1128.5 337.9L1127.5 338.2L1126.5 338.4L1125.5 337.9L1124.5 341.5L1123.5 338.5L1122.5 338.6L1121.5 338.0L1120.5 338.3L1119.5 338.7L1118.5 339.0L1117.5 338.4L1116.5 338.2L1115.5 339.4L1114.5 337.7L1113.5 337.8L1112.5 339.3L1111.5 337.7L1110.5 338.2L1109.5 338.3L1108.5 337.9L1107.5 338.6L1106.5 338.6L1105.5 338.3L1104.5 338.9L1103.5 338.5L1102.5 340.9L1101.5 337.6L1100.5 337.5L1099.5 337.7L1098.5 338.1L1097.5 341.5L1096.5 338.4L1095.5 339.0L1094.5 339.0L1093.5 340.1L1092.5 338.3L1091.5 339.3L1090.5 338.5L1089.5 338.3L1088.5 337.9L1087.5 338.6L1086.5 337.9L1085.5 337.7L1084.5 340.8L1083.5 338.3L1082.5 340.5L1081.5 339.0L1080.5 340.6L1079.5 338.7L1078.5 338.3L1077.5 338.0L1076.5 341.1L1075.5 338.3L1074.5 338.1L1073.5 338.5L1072.5 338.4L1071.5 338.9L1070.5 341.0L1069.5 338.6L1068.5 338.8L1067.5 338.2L1066.5 337.9L1065.5 337.9L1064.5 338.5L1063.5 338.1L1062.5 338.4L1061.5 338.5L1060.5 338.1L1059.5 338.6L1058.5 338.6L1057.5 338.2L1056.5 337.9L1055.5 338.4L1054.5 337.9L1053.5 340.8L1052.5 338.6L1051.5 340.2L1050.5 338.7L1049.5 338.9L1048.5 338.7L1047.5 340.9L1046.5 338.0L1045.5 339.4L1044.5 338.2L1043.5 338.5L1042.5 339.0L1041.5 341.9L1040.5 338.1L1039.5 338.5L1038.5 339.2L1037.5 341.1L1036.5 337.9L1035.5 338.5L1034.5 338.5L1033.5 337.5L1032.5 337.8L1031.5 337.9L1030.5 337.7L1029.5 337.9L1028.5 338.6L1027.5 338.7L1026.5 337.8L1025.5 340.6L1024.5 338.2L1023.5 338.5L1022.5 339.5L1021.5 337.7L1020.5 338.2L1019.5 338.5L1018.5 340.0L1017.5 338.2L1016.5 339.5L1015.5 338.0L1014.5 339.3L1013.5 339.3L1012.5 338.9L1011.5 338.6L1010.5 339.5L1009.5 339.0L1008.5 341.1L1007.5 337.4L1006.5 337.7L1005.5 338.2L1004.5 341.2L1003.5 339.5L1002.5 337.8L1001.5 337.8L1000.5 338.7L999.5 337.7L998.5 338.2L997.5 337.7L996.5 338.1L995.5 339.6L994.5 338.9L993.5 338.7L992.5 338.4L991.5 338.7L990.5 338.6L989.5 338.5L988.5 339.5L987.5 338.5L986.5 341.5L985.5 339.0L984.5 338.5L983.5 338.6L982.5 340.5L981.5 338.6L980.5 338.5L979.5 338.3L978.5 338.7L977.5 338.2L976.5 338.3L975.5 337.9L974.5 338.3L973.5 338.1L972.5 338.4L971.5 339.2L970.5 340.5L969.5 337.7L968.5 339.3L967.5 338.4L966.5 338.0L965.5 338.3L964.5 341.2L963.5 337.9L962.5 338.1L961.5 337.9L960.5 337.7L959.5 339.0L958.5 337.8L957.5 337.8L956.5 337.7L955.5 338.1L954.5 338.7L953.5 338.2L952.5 338.0L951.5 338.2L950.5 338.3L949.5 338.5L948.5 338.5L947.5 338.6L946.5 338.4L945.5 338.8L944.5 338.6L943.5 339.2L942.5 341.6L941.5 340.2L940.5 339.6L939.5 338.5L938.5 338.1L937.5 338.3L936.5 338.2L935.5 338.1L934.5 337.6L933.5 337.7L932.5 338.4L931.5 337.9L930.5 338.8L929.5 338.0L928.5 340.2L927.5 338.6L926.5 339.7L925.5 338.6L924.5 339.6L923.5 338.0L922.5 339.1L921.5 338.3L920.5 338.3L919.5 337.7L918.5 337.6L917.5 338.0L916.5 338.0L915.5 338.5L914.5 337.9L913.5 339.2L912.5 339.0L911.5 338.3L910.5 337.8L909.5 340.6L908.5 340.5L907.5 339.1L906.5 338.2L905.5 338.0L904.5 338.2L903.5 338.7L902.5 338.4L901.5 337.9L900.5 340.7L899.5 337.7L898.5 337.7L897.5 338.2L896.5 338.3L895.5 338.2L894.5 338.3L893.5 338.2L892.5 338.5L891.5 337.6L890.5 341.0L889.5 339.6L888.5 339.2L887.5 338.1L886.5 338.5L885.5 338.0L884.5 338.8L883.5 338.4L882.5 338.4L881.5 337.9L880.5 338.0L879.5 338.1L878.5 338.4L877.5 340.4L876.5 338.2L875.5 339.4L874.5 338.9L873.5 338.1L872.5 338.0L871.5 338.7L870.5 338.7L869.5 338.6L868.5 339.2L867.5 338.4L866.5 339.0L865.5 340.0L864.5 338.0L863.5 339.1L862.5 338.3L861.5 338.6L860.5 340.0L859.5 338.6L858.5 338.7L857.5 338.3L856.5 338.0L855.5 337.8L854.5 337.6L853.5 338.0L852.5 340.6L851.5 338.4L850.5 338.2L849.5 337.9L848.5 338.4L847.5 338.3L846.5 338.5L845.5 338.1L844.5 338.3L843.5 338.3L842.5 338.1L841.5 338.1L840.5 338.3L839.5 339.0L838.5 338.9L837.5 339.2L836.5 338.5L835.5 338.6L834.5 338.3L833.5 337.8L832.5 338.1L831.5 338.0L830.5 338.5L829.5 339.3L828.5 341.0L827.5 338.9L826.5 338.5L825.5 338.1L824.5 338.2L823.5 338.5L822.5 340.2L821.5 338.6L820.5 338.7L819.5 338.7L818.5 338.5L817.5 338.9L816.5 339.1L815.5 338.4L814.5 338.3L813.5 338.0L812.5 338.1L811.5 340.6L810.5 338.1L809.5 338.7L808.5 338.4L807.5 338.4L806.5 338.3L805.5 340.2L804.5 340.1L803.5 338.5L802.5 339.7L801.5 338.0L800.5 337.9L799.5 338.0L798.5 337.8L797.5 338.2L796.5 337.7L795.5 338.8L794.5 339.1L793.5 338.1L792.5 338.1L791.5 339.0L790.5 339.4L789.5 338.4L788.5 338.7L787.5 338.4L786.5 342.1L785.5 338.7L784.5 338.4L783.5 340.0L782.5 338.4L781.5 338.7L780.5 338.3L779.5 338.7L778.5 338.5L777.5 338.8L776.5 337.6L775.5 339.3L774.5 338.3L773.5 338.0L772.5 338.0L771.5 338.7L770.5 337.8L769.5 338.3L768.5 338.1L767.5 338.8L766.5 338.6L765.5 338.4L764.5 338.0L763.5 338.0L762.5 338.6L761.5 338.8L760.5 337.8L759.5 337.9L758.5 338.3L757.5 339.0L756.5 341.9L755.5 339.4L754.5 340.7L753.5 338.0L752.5 338.0L751.5 339.0L750.5 338.1L749.5 338.5L748.5 338.8L747.5 339.0L746.5 338.3L745.5 338.1L744.5 338.3L743.5 338.3L742.5 338.3L741.5 338.1L740.5 338.2L739.5 337.4L738.5 337.6L737.5 337.7L736.5 337.4L735.5 337.6L734.5 338.1L733.5 341.1L732.5 338.6L731.5 338.1L730.5 337.8L729.5 338.4L728.5 338.1L727.5 337.5L726.5 339.9L725.5 339.4L724.5 338.7L723.5 338.9L722.5 338.5L721.5 339.1L720.5 337.6L719.5 337.9L718.5 340.2L717.5 338.1L716.5 339.0L715.5 338.8L714.5 337.9L713.5 337.6L712.5 338.5L711.5 340.0L710.5 341.0L709.5 339.0L708.5 340.1L707.5 338.0L706.5 338.4L705.5 337.9L704.5 338.5L703.5 338.1L702.5 338.6L701.5 338.3L700.5 338.6L699.5 338.1L698.5 338.1L697.5 338.3L696.5 337.8L695.5 338.3L694.5 338.0L693.5 338.3L692.5 338.6L691.5 338.4L690.5 338.1L689.5 339.2L688.5 338.7L687.5 338.6L686.5 339.7L685.5 338.1L684.5 337.9L683.5 339.6L682.5 339.3L681.5 337.9L680.5 338.0L679.5 338.1L678.5 338.6L677.5 339.4L676.5 339.7L675.5 338.2L674.5 337.8L673.5 338.2L672.5 338.3L671.5 337.8L670.5 337.9L669.5 338.2L668.5 338.1L667.5 337.7L666.5 337.7L665.5 338.3L664.5 338.5L663.5 338.4L662.5 338.3L661.5 338.3L660.5 337.9L659.5 338.2L658.5 337.8L657.5 338.6L656.5 338.1L655.5 339.9L654.5 339.0L653.5 338.7L652.5 340.2L651.5 338.8L650.5 338.6L649.5 338.5L648.5 338.5L647.5 338.1L646.5 340.2L645.5 339.2L644.5 338.3L643.5 338.3L642.5 338.1L641.5 338.4L640.5 340.1L639.5 338.6L638.5 338.1L637.5 338.4L636.5 339.6L635.5 338.3L634.5 337.9L633.5 341.2L632.5 338.5L631.5 338.2L630.5 338.0L629.5 338.1L628.5 338.1L627.5 339.2L626.5 338.0L625.5 338.8L624.5 337.8L623.5 338.3L622.5 338.2L621.5 339.1L620.5 338.2L619.5 338.3L618.5 340.8L617.5 338.0L616.5 338.1L615.5 337.9L614.5 337.9L613.5 339.5L612.5 338.3L611.5 339.5L610.5 338.6L609.5 338.0L608.5 337.6L607.5 337.7L606.5 337.6L605.5 338.2L604.5 337.9L603.5 338.1L602.5 338.1L601.5 338.9L600.5 338.2L599.5 338.4L598.5 339.1L597.5 338.6L596.5 342.1L595.5 339.0L594.5 338.7L593.5 338.5L592.5 338.9L591.5 337.7L590.5 337.7L589.5 338.4L588.5 340.0L587.5 339.6L586.5 338.8L585.5 338.5L584.5 338.4L583.5 339.3L582.5 337.7L581.5 338.0L580.5 338.8L579.5 338.1L578.5 339.8L577.5 338.7L576.5 338.7L575.5 338.6L574.5 341.0L573.5 338.5L572.5 337.8L571.5 338.0L570.5 340.7L569.5 338.2L568.5 338.5L567.5 339.0L566.5 337.9L565.5 337.8L564.5 337.7L563.5 338.2L562.5 338.3L561.5 338.2L560.5 338.8L559.5 338.6L558.5 340.2L557.5 340.8L556.5 338.4L555.5 338.1L554.5 338.0L553.5 337.9L552.5 338.2L551.5 338.6L550.5 340.5L549.5 338.5L548.5 338.7L547.5 338.8L546.5 339.9L545.5 338.8L544.5 339.0L543.5 338.6L542.5 338.5L541.5 337.6L540.5 337.9L539.5 340.9L538.5 337.7L537.5 337.7L536.5 338.2L535.5 339.8L534.5 339.7L533.5 338.4L532.5 339.4L531.5 337.8L530.5 337.8L529.5 339.0L528.5 338.1L527.5 338.8L526.5 338.3L525.5 339.4L524.5 340.1L523.5 338.0L522.5 338.6L521.5 338.6L520.5 340.3L519.5 339.1L518.5 341.5L517.5 339.3L516.5 338.4L515.5 338.4L514.5 337.9L513.5 339.7L512.5 339.5L511.5 340.1L510.5 338.2L509.5 341.1L508.5 338.2L507.5 338.0L506.5 338.2L505.5 338.4L504.5 338.4L503.5 338.3L502.5 338.4L501.5 339.7L500.5 340.4L499.5 340.2L498.5 338.4L497.5 339.9L496.5 337.8L495.5 337.9L494.5 338.3L493.5 338.5L492.5 338.5L491.5 338.3L490.5 338.6L489.5 340.0L488.5 339.7L487.5 338.7L486.5 337.9L485.5 337.6L484.5 337.7L483.5 338.1L482.5 338.1L481.5 337.8L480.5 338.2L479.5 337.6L478.5 337.8L477.5 338.3L476.5 337.9L475.5 337.9L474.5 338.0L473.5 338.1L472.5 337.9L471.5 337.8L470.5 338.0L469.5 338.6L468.5 339.2L467.5 338.2L466.5 338.3L465.5 338.4L464.5 339.2L463.5 337.5L462.5 337.6L461.5 338.0L460.5 337.9L459.5 338.3L458.5 338.9L457.5 341.2L456.5 339.4L455.5 338.9L454.5 338.6L453.5 341.7L452.5 338.3L451.5 337.8L450.5 338.5L449.5 340.1L448.5 338.5L447.5 341.3L446.5 338.3L445.5 338.1L444.5 338.1L443.5 338.1L442.5 338.2L441.5 341.4L440.5 338.4L439.5 340.0L438.5 339.3L437.5 338.4L436.5 340.8L435.5 338.4L434.5 338.2L433.5 338.2L432.5 338.7L431.5 338.1L430.5 338.9L429.5 338.8L428.5 340.9L427.5 339.1L426.5 339.0L425.5 341.2L424.5 338.4L423.5 338.6L422.5 338.7L421.5 340.2L420.5 338.1L419.5 338.9L418.5 338.4L417.5 338.0L416.5 338.0L415.5 340.0L414.5 337.6L413.5 338.2L412.5 338.3L411.5 338.0L410.5 337.9L409.5 338.4L408.5 338.6L407.5 338.8L406.5 338.3L405.5 338.8L404.5 338.3L403.5 338.3L402.5 338.3L401.5 341.3L400.5 341.2L399.5 338.7L398.5 338.4L397.5 340.6L396.5 338.8L395.5 338.3L394.5 338.4L393.5 338.5L392.5 338.0L391.5 338.3L390.5 341.5L389.5 338.3L388.5 338.2L387.5 338.0L386.5 339.3L385.5 341.0L384.5 338.5L383.5 338.1L382.5 337.9L381.5 338.7L380.5 338.0L379.5 338.2L378.5 339.4L377.5 338.0L376.5 339.0L375.5 338.4L374.5 338.4L373.5 338.1L372.5 339.0L371.5 338.7L370.5 338.3L369.5 339.7L368.5 337.5L367.5 340.2L366.5 338.0L365.5 338.4L364.5 338.6L363.5 340.3L362.5 338.3L361.5 338.1L360.5 338.5L359.5 338.2L358.5 338.8L357.5 338.9L356.5 340.7L355.5 340.0L354.5 338.4L353.5 337.9L352.5 340.9L351.5 337.9L350.5 338.3L349.5 338.0L348.5 340.9L347.5 338.1L346.5 338.0L345.5 338.6L344.5 338.4L343.5 338.3L342.5 338.1L341.5 341.0L340.5 338.0L339.5 341.4L338.5 338.3L337.5 338.0L336.5 337.8L335.5 339.1L334.5 338.6L333.5 338.0L332.5 338.4L331.5 337.8L330.5 337.7L329.5 337.5L328.5 337.6L327.5 338.3L326.5 337.7L325.5 338.1L324.5 338.6L323.5 338.2L322.5 339.4L321.5 341.5L320.5 338.5L319.5 338.6L318.5 338.7L317.5 338.3L316.5 338.7L315.5 338.8L314.5 338.5L313.5 340.9L312.5 338.0L311.5 338.7L310.5 341.5L309.5 338.1L308.5 338.2L307.5 338.8L306.5 339.2L305.5 341.2L304.5 338.5L303.5 337.9L302.5 337.8L301.5 338.0L300.5 338.3L299.5 338.2L298.5 338.3L297.5 338.6L296.5 340.2L295.5 338.8L294.5 340.2L293.5 338.1L292.5 340.1L291.5 340.8L290.5 338.7L289.5 338.5L288.5 338.1L287.5 338.0L286.5 338.9L285.5 340.8L284.5 339.9L283.5 337.9L282.5 338.2L281.5 338.1L280.5 338.7L279.5 338.3L278.5 341.1L277.5 338.8L276.5 338.4L275.5 338.3L274.5 342.0L273.5 338.7L272.5 338.7L271.5 338.8L270.5 340.8L269.5 338.3L268.5 338.3L267.5 338.4L266.5 338.4L265.5 338.8L264.5 338.7L263.5 338.2L262.5 341.2L261.5 338.4L260.5 337.8L259.5 337.8L258.5 339.7L257.5 338.7L256.5 338.3L255.5 337.8L254.5 337.6L253.5 338.6L252.5 338.7L251.5 338.3L250.5 339.0L249.5 340.6L248.5 340.4L247.5 341.1L246.5 338.7L245.5 338.3L244.5 337.8L243.5 338.6L242.5 337.7L241.5 338.4L240.5 340.2L239.5 338.2L238.5 338.2L237.5 338.1L236.5 338.2L235.5 338.5L234.5 339.8L233.5 338.0L232.5 338.3L231.5 337.5L230.5 337.6L229.5 337.8L228.5 337.9L227.5 339.5L226.5 341.5L225.5 338.3L224.5 338.3L223.5 338.2L222.5 338.9L221.5 338.8L220.5 340.3L219.5 338.7L218.5 339.5L217.5 338.6L216.5 338.2L215.5 338.1L214.5 338.2L213.5 338.7L212.5 339.1L211.5 339.3L210.5 338.1L209.5 338.2L208.5 338.5L207.5 338.2L206.5 337.9L205.5 338.4L204.5 338.6L203.5 338.4L202.5 340.6L201.5 339.1L200.5 338.4L199.5 338.4L198.5 338.8L197.5 338.1L196.5 340.3L195.5 337.6L194.5 337.7L193.5 338.7L192.5 337.8L191.5 338.0L190.5 338.8L189.5 337.9L188.5 340.5L187.5 341.7L186.5 338.5L185.5 338.6L184.5 337.8L183.5 338.1L182.5 338.1L181.5 337.8L180.5 338.2L179.5 338.2L178.5 339.5L177.5 338.1L176.5 342.1L175.5 338.7L174.5 339.6L173.5 340.6L172.5 338.4L171.5 340.6L170.5 338.5L169.5 338.3L168.5 338.6L167.5 338.7L166.5 338.4L165.5 338.5L164.5 338.7L163.5 338.4L162.5 338.5L161.5 338.5L160.5 337.9L159.5 341.4L158.5 338.0L157.5 338.0L156.5 338.3L155.5 338.7L154.5 338.9L153.5 341.4L152.5 338.8L151.5 338.4L150.5 338.5L149.5 339.1L148.5 338.6L147.5 338.7L146.5 339.1L145.5 338.8L144.5 339.1z" fill="#1b1d22"/><path d="M144.5 411.4L145.4 411.2L146.3 410.4L147.2 410.9L148.1 410.6L149.0 410.9L149.9 409.5L150.8 410.1L151.7 410.3L152.6 410.6L153.5 408.9L154.4 410.7L155.3 411.1L156.2 410.4L157.1 408.5L158.0 409.9L158.9 410.7L159.8 409.0L160.7 410.9L161.6 407.6L162.5 411.4L163.4 410.3L164.3 409.8L165.2 410.2L166.1 410.8L167.0 410.1L167.9 410.6L168.8 409.4L169.7 409.7L170.6 409.6L171.5 409.3L172.4 409.9L173.3 409.7L174.2 408.9L175.1 409.6L176.0 410.3L176.9 411.0L177.8 409.5L178.7 408.0L179.6 410.3L180.5 409.1L181.4 410.0L182.3 409.8L183.2 409.7L184.1 407.7L185.0 410.0L185.9 410.2L186.8 407.9L187.7 410.6L188.6 410.7L189.5 410.4L190.4 410.6L191.3 411.1L192.2 410.4L193.1 408.8L194.0 410.0L194.9 410.1L195.8 410.4L196.7 410.7L197.6 409.1L198.5 410.6L199.4 411.0L200.3 407.8L201.2 410.2L202.1 410.0L203.0 411.0L203.9 411.3L204.8 409.9L205.7 410.4L206.6 410.4L207.5 410.6L208.4 410.7L209.3 409.7L210.2 410.7L211.1 407.8L212.0 410.5L212.9 409.2L213.8 409.6L214.7 409.6L215.6 409.6L216.5 406.9L217.4 410.7L218.3 410.7L219.2 411.2L220.1 410.5L221.0 409.5L221.9 410.2L222.8 408.3L223.7 409.8L224.6 410.5L225.5 410.8L226.4 410.7L227.3 410.9L228.2 411.0L229.1 410.5L230.0 410.7L230.9 411.1L231.8 411.3L232.7 411.5L233.6 410.5L234.5 409.1L235.4 410.9L236.3 410.7L237.2 408.0L238.1 410.8L239.0 409.6L239.9 410.8L240.8 410.3L241.7 410.1L242.6 410.5L243.5 410.0L244.4 409.9L245.3 410.7L246.2 410.3L247.1 411.0L248.0 410.7L248.9 410.3L249.8 410.0L250.7 410.3L251.6 410.5L252.5 409.9L253.4 410.0L254.3 408.2L255.2 406.9L256.1 407.2L257.0 410.6L257.9 409.8L258.8 408.7L259.7 410.2L260.6 409.6L261.5 409.9L262.4 410.3L263.3 410.0L264.2 410.8L265.1 411.0L266.0 409.3L266.9 410.5L267.8 410.8L268.7 409.7L269.6 410.7L270.5 410.7L271.4 410.7L272.3 409.6L273.2 407.0L274.1 410.5L275.0 410.3L275.9 410.8L276.8 410.2L277.7 409.5L278.6 410.6L279.5 410.1L280.4 410.1L281.3 409.1L282.2 409.4L283.1 411.1L284.0 410.2L284.9 410.7L285.8 411.0L286.7 410.8L287.6 410.7L288.5 411.1L289.4 410.9L290.3 410.5L291.2 410.4L292.1 409.8L293.0 410.0L293.9 409.7L294.8 410.1L295.7 410.7L296.6 411.0L297.5 411.4L298.4 410.6L299.3 410.9L300.2 411.0L301.1 411.3L302.0 411.4L302.9 411.0L303.8 411.6L304.7 411.6L305.6 410.6L306.5 411.3L307.4 410.4L308.3 411.0L309.2 410.3L310.1 409.9L311.0 409.4L311.9 410.6L312.8 410.3L313.7 411.0L314.6 410.2L315.5 411.3L316.4 410.7L317.3 409.4L318.2 410.2L319.1 410.4L320.0 410.5L320.9 408.9L321.8 411.1L322.7 410.4L323.6 410.5L324.5 410.3L325.4 410.6L326.3 410.3L327.2 408.7L328.1 409.2L329.0 408.0L329.9 409.3L330.8 409.2L331.7 409.7L332.6 409.5L333.5 408.2L334.4 406.7L335.3 409.7L336.2 409.9L337.1 410.4L338.0 411.0L338.9 410.2L339.8 410.5L340.7 410.8L341.6 410.8L342.5 411.2L343.4 407.5L344.3 410.3L345.2 409.9L346.1 409.6L347.0 409.6L347.9 410.7L348.8 410.8L349.7 410.3L350.6 409.1L351.5 410.2L352.4 408.7L353.3 411.1L354.2 409.1L355.1 410.2L356.0 410.6L356.9 409.9L357.8 409.6L358.7 409.7L359.6 407.8L360.5 410.0L361.4 409.9L362.3 409.8L363.2 411.2L364.1 410.5L365.0 407.3L365.9 410.2L366.8 410.4L367.7 410.9L368.6 411.1L369.5 411.3L370.4 411.2L371.3 411.4L372.2 411.6L373.1 411.3L374.0 410.7L374.9 410.4L375.8 410.1L376.7 408.0L377.6 407.2L378.5 409.7L379.4 409.8L380.3 410.4L381.2 409.7L382.1 410.7L383.0 410.9L383.9 410.7L384.8 410.3L385.7 410.2L386.6 410.5L387.5 411.3L388.4 411.1L389.3 410.2L390.2 410.3L391.1 411.1L392.0 411.0L392.9 408.0L393.8 411.0L394.7 410.4L395.6 410.3L396.5 408.6L397.4 409.6L398.3 411.2L399.2 410.9L400.1 411.0L401.0 410.9L401.9 410.6L402.8 410.7L403.7 410.9L404.6 410.4L405.5 410.5L406.4 410.1L407.3 410.6L408.2 410.5L409.1 410.4L410.0 408.7L410.9 410.3L411.8 409.7L412.7 410.3L413.6 409.8L414.5 410.1L415.4 407.9L416.3 409.5L417.2 410.6L418.1 411.1L419.0 407.9L419.9 407.2L420.8 410.6L421.7 411.0L422.6 411.0L423.5 410.2L424.4 409.2L425.3 409.7L426.2 409.4L427.1 410.3L428.0 410.3L428.9 410.4L429.8 408.3L430.7 410.9L431.6 408.1L432.5 409.9L433.4 410.3L434.3 410.2L435.2 410.4L436.1 410.3L437.0 409.8L437.9 410.2L438.8 410.4L439.7 410.5L440.6 410.9L441.5 410.3L442.4 407.1L443.3 409.2L444.2 410.4L445.1 410.8L446.0 410.2L446.9 410.7L447.8 410.2L448.7 410.8L449.6 409.1L450.5 411.1L451.4 410.6L452.3 410.4L453.2 410.0L454.1 410.7L455.0 410.0L455.9 409.6L456.8 410.1L457.7 409.8L458.6 409.8L459.5 410.0L460.4 410.7L461.3 410.3L462.2 410.4L463.1 410.4L464.0 409.5L464.9 411.3L465.8 410.3L466.7 409.8L467.6 410.4L468.5 411.1L469.4 411.0L470.3 410.5L471.2 410.2L472.1 409.5L473.0 410.1L473.9 408.8L474.8 409.5L475.7 407.1L476.6 410.3L477.5 409.6L478.4 409.4L479.3 410.7L480.2 411.0L481.1 410.8L482.0 410.9L482.9 411.3L483.8 410.9L484.7 409.6L485.6 410.8L486.5 410.1L487.4 406.6L488.3 410.0L489.2 410.3L490.1 409.0L491.0 410.6L491.9 410.3L492.8 410.4L493.7 407.6L494.6 409.8L495.5 410.6L496.4 410.4L497.3 409.9L498.2 410.3L499.1 410.3L500.0 410.8L500.9 409.8L501.8 410.1L502.7 410.9L503.6 410.6L504.5 410.6L505.4 410.8L506.3 410.4L507.2 411.0L508.1 410.7L509.0 410.8L509.9 411.1L510.8 410.8L511.7 411.3L512.6 411.5L513.5 411.3L514.4 409.1L515.3 411.1L516.2 410.1L517.1 411.4L518.0 411.7L518.9 412.3L519.8 412.4L520.7 412.0L521.6 411.1L522.5 412.1L523.4 412.5L524.3 410.9L525.2 412.0L526.1 412.1L527.0 411.1L527.9 412.7L528.8 412.6L529.7 412.6L530.6 412.7L531.5 412.3L532.4 412.8L533.3 413.0L534.2 412.9L535.1 413.2L536.0 413.3L536.9 413.4L537.8 413.5L538.7 412.9L539.6 413.3L540.5 413.5L541.4 413.7L542.3 413.7L543.2 413.8L544.1 413.9L545.0 413.9L545.9 413.9L546.8 413.9L547.7 413.9L548.6 413.9L549.5 413.9L550.4 413.9L551.3 413.9L552.2 413.9L553.1 413.9L554.0 413.7L554.9 413.9L555.8 413.9L556.7 413.9L557.6 413.9L558.5 413.8L559.4 413.6L560.3 413.8L561.2 413.9L562.1 413.9L563.0 413.9L563.9 413.9L564.8 413.9L565.7 413.8L565.7 414.8L564.8 414.7L563.9 414.7L563.0 414.8L562.1 414.7L561.2 414.7L560.3 414.7L559.4 414.7L558.5 414.7L557.6 414.9L556.7 414.7L555.8 414.7L554.9 414.7L554.0 414.7L553.1 414.7L552.2 414.7L551.3 414.7L550.4 414.7L549.5 414.7L548.6 414.7L547.7 415.0L546.8 414.7L545.9 415.0L545.0 414.7L544.1 414.8L543.2 414.8L542.3 414.9L541.4 415.3L540.5 415.0L539.6 415.1L538.7 415.2L537.8 415.3L536.9 416.1L536.0 415.7L535.1 415.4L534.2 415.5L533.3 415.5L532.4 415.4L531.5 415.5L530.6 415.5L529.7 415.8L528.8 416.8L527.9 416.8L527.0 415.8L526.1 415.7L525.2 415.7L524.3 417.0L523.4 416.5L522.5 416.6L521.6 416.5L520.7 416.9L519.8 416.8L518.9 418.9L518.0 416.9L517.1 416.3L516.2 418.2L515.3 416.3L514.4 416.6L513.5 418.0L512.6 417.1L511.7 417.1L510.8 417.1L509.9 417.1L509.0 417.0L508.1 416.9L507.2 417.3L506.3 417.0L505.4 417.5L504.5 417.4L503.6 419.3L502.7 417.9L501.8 417.3L500.9 417.9L500.0 418.3L499.1 419.0L498.2 419.8L497.3 418.6L496.4 418.3L495.5 419.1L494.6 417.5L493.7 418.0L492.8 418.1L491.9 417.8L491.0 418.0L490.1 417.3L489.2 418.1L488.3 418.2L487.4 417.4L486.5 418.4L485.6 418.5L484.7 418.7L483.8 418.3L482.9 418.8L482.0 420.7L481.1 418.6L480.2 419.1L479.3 418.4L478.4 417.8L477.5 417.9L476.6 418.9L475.7 417.5L474.8 420.4L473.9 417.9L473.0 417.5L472.1 417.5L471.2 420.6L470.3 418.3L469.4 418.8L468.5 418.9L467.6 418.2L466.7 417.3L465.8 417.8L464.9 421.1L464.0 418.4L463.1 418.1L462.2 419.0L461.3 418.1L460.4 418.4L459.5 417.5L458.6 417.4L457.7 417.4L456.8 417.7L455.9 418.0L455.0 417.5L454.1 418.1L453.2 418.9L452.3 420.2L451.4 420.1L450.5 418.7L449.6 418.4L448.7 418.3L447.8 420.3L446.9 418.2L446.0 417.9L445.1 418.4L444.2 418.6L443.3 418.3L442.4 417.5L441.5 417.8L440.6 418.3L439.7 418.0L438.8 418.3L437.9 417.9L437.0 419.5L436.1 417.8L435.2 420.6L434.3 417.9L433.4 417.8L432.5 417.4L431.6 418.0L430.7 418.4L429.8 417.9L428.9 418.5L428.0 418.2L427.1 417.7L426.2 417.0L425.3 420.0L424.4 417.3L423.5 417.8L422.6 418.6L421.7 420.6L420.8 418.8L419.9 417.5L419.0 417.8L418.1 418.8L417.2 420.7L416.3 418.3L415.4 417.2L414.5 417.6L413.6 420.0L412.7 418.6L411.8 417.6L410.9 417.9L410.0 418.6L409.1 419.1L408.2 418.0L407.3 418.0L406.4 421.0L405.5 418.4L404.6 418.8L403.7 418.2L402.8 418.1L401.9 418.3L401.0 421.0L400.1 418.7L399.2 418.3L398.3 419.5L397.4 418.4L396.5 419.8L395.6 418.4L394.7 418.5L393.8 419.2L392.9 418.0L392.0 418.4L391.1 418.4L390.2 419.6L389.3 419.2L388.4 421.9L387.5 418.7L386.6 418.2L385.7 418.2L384.8 417.8L383.9 421.0L383.0 418.8L382.1 420.9L381.2 417.7L380.3 417.8L379.4 417.8L378.5 417.7L377.6 417.6L376.7 417.6L375.8 418.2L374.9 418.0L374.0 418.8L373.1 419.8L372.2 418.9L371.3 418.8L370.4 418.7L369.5 418.6L368.6 420.4L367.7 418.9L366.8 418.5L365.9 417.8L365.0 417.5L364.1 418.1L363.2 418.6L362.3 418.6L361.4 417.5L360.5 417.9L359.6 418.9L358.7 417.3L357.8 417.5L356.9 420.1L356.0 419.5L355.1 417.6L354.2 418.4L353.3 418.4L352.4 418.3L351.5 418.3L350.6 419.0L349.7 417.8L348.8 418.2L347.9 418.1L347.0 417.9L346.1 417.3L345.2 417.4L344.3 418.1L343.4 417.9L342.5 418.9L341.6 418.7L340.7 418.6L339.8 418.0L338.9 418.2L338.0 418.3L337.1 417.9L336.2 417.7L335.3 420.0L334.4 417.2L333.5 418.9L332.6 417.7L331.7 417.2L330.8 416.8L329.9 416.9L329.0 417.1L328.1 417.7L327.2 417.4L326.3 417.8L325.4 419.2L324.5 417.8L323.6 418.2L322.7 418.1L321.8 418.5L320.9 418.3L320.0 417.9L319.1 417.8L318.2 417.9L317.3 418.2L316.4 418.1L315.5 418.6L314.6 419.0L313.7 418.4L312.8 418.7L311.9 418.3L311.0 417.4L310.1 420.1L309.2 417.9L308.3 420.1L307.4 418.6L306.5 418.6L305.6 418.4L304.7 419.1L303.8 419.0L302.9 418.8L302.0 419.4L301.1 418.7L300.2 419.8L299.3 418.3L298.4 418.0L297.5 418.7L296.6 418.6L295.7 418.4L294.8 418.4L293.9 417.4L293.0 417.4L292.1 417.6L291.2 417.9L290.3 418.4L289.4 419.9L288.5 418.8L287.6 418.1L286.7 418.5L285.8 418.8L284.9 418.1L284.0 418.7L283.1 418.7L282.2 419.7L281.3 419.6L280.4 417.6L279.5 419.3L278.6 418.2L277.7 418.0L276.8 417.7L275.9 418.8L275.0 421.1L274.1 418.2L273.2 417.6L272.3 418.4L271.4 419.1L270.5 418.1L269.6 418.2L268.7 418.0L267.8 418.5L266.9 417.9L266.0 418.9L265.1 418.7L264.2 418.4L263.3 417.4L262.4 417.8L261.5 417.4L260.6 418.3L259.7 421.0L258.8 418.4L257.9 418.1L257.0 418.2L256.1 417.9L255.2 417.2L254.3 417.6L253.4 417.8L252.5 419.4L251.6 418.3L250.7 418.1L249.8 417.5L248.9 417.8L248.0 418.5L247.1 420.6L246.2 418.3L245.3 418.1L244.4 417.7L243.5 417.5L242.6 418.1L241.7 417.6L240.8 418.0L239.9 419.1L239.0 418.3L238.1 418.3L237.2 419.2L236.3 419.0L235.4 418.3L234.5 417.7L233.6 417.9L232.7 418.8L231.8 418.7L230.9 419.0L230.0 418.2L229.1 421.0L228.2 421.0L227.3 418.3L226.4 418.3L225.5 420.5L224.6 418.1L223.7 418.4L222.8 418.2L221.9 418.2L221.0 417.4L220.1 418.0L219.2 420.9L218.3 418.2L217.4 418.1L216.5 420.3L215.6 417.3L214.7 417.4L213.8 418.7L212.9 417.7L212.0 418.4L211.1 417.9L210.2 418.1L209.3 417.7L208.4 418.5L207.5 418.0L206.6 417.9L205.7 418.0L204.8 418.0L203.9 418.6L203.0 421.6L202.1 421.3L201.2 417.8L200.3 418.0L199.4 418.6L198.5 420.5L197.6 418.3L196.7 418.1L195.8 418.2L194.9 418.2L194.0 417.5L193.1 418.4L192.2 417.9L191.3 418.4L190.4 418.1L189.5 417.9L188.6 419.5L187.7 418.0L186.8 417.3L185.9 417.7L185.0 419.0L184.1 417.7L183.2 417.8L182.3 417.4L181.4 417.7L180.5 419.0L179.6 417.7L178.7 418.1L177.8 417.6L176.9 420.1L176.0 417.7L175.1 417.1L174.2 417.2L173.3 417.2L172.4 417.4L171.5 418.6L170.6 420.3L169.7 419.3L168.8 417.6L167.9 418.0L167.0 417.7L166.1 418.2L165.2 417.9L164.3 417.8L163.4 417.8L162.5 419.1L161.6 418.3L160.7 418.3L159.8 420.0L158.9 419.2L158.0 418.0L157.1 418.3L156.2 418.5L155.3 419.8L154.4 418.2L153.5 418.4L152.6 419.0L151.7 420.2L150.8 417.6L149.9 419.0L149.0 418.3L148.1 418.8L147.2 418.2L146.3 418.0L145.4 419.4L144.5 419.3z" fill="#1b1d22"/><path d="M144.5 479.7L145.4 479.0L146.3 479.0L147.2 477.0L148.1 477.2L149.0 478.5L149.9 478.5L150.8 478.2L151.7 478.2L152.6 478.7L153.5 477.0L154.4 476.7L155.3 478.8L156.2 480.1L157.1 478.4L158.0 480.0L158.9 479.2L159.8 479.3L160.7 479.3L161.6 479.4L162.5 479.6L163.4 476.5L164.3 479.4L165.2 479.8L166.1 479.9L167.0 480.3L167.9 479.8L168.8 480.2L169.7 479.3L170.6 479.4L171.5 478.3L172.4 478.6L173.3 477.7L174.2 478.5L175.1 478.8L176.0 478.8L176.9 477.0L177.8 480.2L178.7 479.4L179.6 479.9L180.5 479.4L181.4 479.3L182.3 479.0L183.2 479.2L184.1 479.0L185.0 479.6L185.9 479.4L186.8 479.2L187.7 479.2L188.6 479.3L189.5 476.5L190.4 479.8L191.3 478.6L192.2 480.4L193.1 479.5L194.0 479.9L194.9 479.7L195.8 478.9L196.7 478.6L197.6 479.9L198.5 479.4L199.4 479.9L200.3 479.9L201.2 479.1L202.1 478.6L203.0 478.8L203.9 477.9L204.8 479.7L205.7 477.3L206.6 479.5L207.5 477.0L208.4 477.6L209.3 479.2L210.2 479.7L211.1 479.9L212.0 480.2L212.9 480.3L213.8 479.2L214.7 478.3L215.6 479.9L216.5 479.7L217.4 480.0L218.3 477.1L219.2 480.5L220.1 480.0L221.0 478.0L221.9 479.6L222.8 478.5L223.7 479.7L224.6 480.1L225.5 479.5L226.4 479.1L227.3 478.7L228.2 479.1L229.1 479.7L230.0 480.0L230.9 478.7L231.8 478.4L232.7 478.9L233.6 479.3L234.5 478.7L235.4 478.8L236.3 479.3L237.2 479.8L238.1 479.4L239.0 479.2L239.9 479.3L240.8 480.1L241.7 478.0L242.6 480.4L243.5 480.0L244.4 479.8L245.3 479.4L246.2 480.0L247.1 480.4L248.0 479.5L248.9 479.4L249.8 479.1L250.7 479.4L251.6 479.4L252.5 478.8L253.4 478.8L254.3 476.6L255.2 479.2L256.1 478.8L257.0 478.2L257.9 479.3L258.8 479.1L259.7 479.4L260.6 479.9L261.5 479.1L262.4 478.7L263.3 479.9L264.2 480.1L265.1 479.3L266.0 479.1L266.9 478.8L267.8 479.2L268.7 478.3L269.6 480.1L270.5 480.2L271.4 480.1L272.3 479.4L273.2 479.1L274.1 479.8L275.0 479.4L275.9 479.7L276.8 477.9L277.7 480.0L278.6 477.0L279.5 479.9L280.4 480.2L281.3 480.1L282.2 479.7L283.1 479.6L284.0 479.9L284.9 480.2L285.8 480.1L286.7 480.3L287.6 479.3L288.5 479.5L289.4 479.1L290.3 478.3L291.2 479.9L292.1 479.9L293.0 480.3L293.9 478.1L294.8 479.8L295.7 479.3L296.6 480.1L297.5 478.4L298.4 478.4L299.3 475.9L300.2 479.7L301.1 478.8L302.0 478.9L302.9 479.7L303.8 477.1L304.7 479.1L305.6 478.7L306.5 479.3L307.4 477.7L308.3 478.5L309.2 479.4L310.1 478.6L311.0 479.6L311.9 478.4L312.8 479.8L313.7 480.0L314.6 480.4L315.5 476.9L316.4 479.6L317.3 480.1L318.2 479.3L319.1 476.9L320.0 476.0L320.9 479.6L321.8 479.3L322.7 479.7L323.6 479.1L324.5 479.7L325.4 479.9L326.3 479.7L327.2 477.5L328.1 480.1L329.0 479.4L329.9 479.3L330.8 479.6L331.7 479.0L332.6 479.4L333.5 479.9L334.4 478.2L335.3 478.1L336.2 479.3L337.1 479.7L338.0 479.4L338.9 479.9L339.8 479.4L340.7 479.7L341.6 479.4L342.5 478.6L343.4 475.9L344.3 479.2L345.2 479.8L346.1 479.8L347.0 480.0L347.9 480.0L348.8 478.9L349.7 479.0L350.6 479.4L351.5 479.1L352.4 479.8L353.3 479.3L354.2 479.2L355.1 476.4L356.0 477.9L356.9 479.3L357.8 477.3L358.7 478.0L359.6 478.0L360.5 479.1L361.4 479.4L362.3 478.9L363.2 479.1L364.1 477.8L365.0 479.8L365.9 479.1L366.8 478.8L367.7 475.5L368.6 478.7L369.5 477.7L370.4 479.5L371.3 478.3L372.2 475.8L373.1 479.5L374.0 479.8L374.9 479.5L375.8 477.9L376.7 478.2L377.6 479.9L378.5 479.1L379.4 479.4L380.3 477.8L381.2 477.9L382.1 476.4L383.0 477.7L383.9 479.4L384.8 480.1L385.7 479.3L386.6 479.1L387.5 478.9L388.4 479.1L389.3 479.3L390.2 479.5L391.1 478.7L392.0 477.3L392.9 475.7L393.8 478.9L394.7 479.1L395.6 479.7L396.5 479.2L397.4 479.5L398.3 480.1L399.2 478.6L400.1 478.8L401.0 476.6L401.9 478.3L402.8 478.9L403.7 476.5L404.6 478.3L405.5 479.5L406.4 479.6L407.3 479.5L408.2 479.3L409.1 479.8L410.0 479.4L410.9 479.9L411.8 479.1L412.7 479.7L413.6 479.4L414.5 479.6L415.4 480.2L416.3 480.1L417.2 479.5L418.1 478.8L419.0 478.4L419.9 479.2L420.8 477.3L421.7 479.6L422.6 480.0L423.5 479.2L424.4 479.4L425.3 479.5L426.2 479.9L427.1 479.2L428.0 479.9L428.9 479.5L429.8 479.6L430.7 479.0L431.6 478.0L432.5 479.6L433.4 479.1L434.3 479.4L435.2 479.0L436.1 478.3L437.0 478.9L437.9 479.6L438.8 479.9L439.7 479.3L440.6 478.6L441.5 478.0L442.4 477.8L443.3 479.2L444.2 479.1L445.1 479.2L446.0 478.5L446.9 479.8L447.8 479.8L448.7 477.9L449.6 480.0L450.5 479.5L451.4 479.9L452.3 479.9L453.2 477.7L454.1 478.8L455.0 479.7L455.9 479.5L456.8 480.0L457.7 480.1L458.6 479.2L459.5 479.5L460.4 479.9L461.3 478.4L462.2 479.5L463.1 478.9L464.0 479.5L464.9 479.7L465.8 478.4L466.7 478.7L467.6 478.7L468.5 478.7L469.4 479.8L470.3 479.9L471.2 479.5L472.1 478.5L473.0 479.1L473.9 478.4L474.8 478.1L475.7 478.0L476.6 480.2L477.5 480.2L478.4 478.3L479.3 479.1L480.2 475.8L481.1 479.1L482.0 479.9L482.9 479.3L483.8 477.3L484.7 480.3L485.6 477.8L486.5 479.8L487.4 479.9L488.3 480.1L489.2 479.6L490.1 480.1L491.0 479.5L491.9 478.5L492.8 477.9L493.7 478.5L494.6 479.9L495.5 480.4L496.4 479.5L497.3 478.5L498.2 479.2L499.1 476.2L500.0 476.7L500.9 478.8L501.8 479.8L502.7 479.7L503.6 479.5L504.5 479.1L505.4 478.3L506.3 478.7L507.2 478.3L508.1 480.2L509.0 479.4L509.9 479.6L510.8 479.9L511.7 480.2L512.6 480.6L513.5 479.8L514.4 480.3L515.3 481.1L516.2 480.5L517.1 480.5L518.0 481.0L518.9 481.1L519.8 481.1L520.7 481.4L521.6 481.2L522.5 480.5L523.4 481.2L524.3 479.7L525.2 481.3L526.1 481.6L527.0 481.4L527.9 481.9L528.8 481.0L529.7 481.6L530.6 481.6L531.5 481.8L532.4 482.1L533.3 482.2L534.2 482.2L535.1 482.0L536.0 482.2L536.9 481.9L537.8 482.3L538.7 482.5L539.6 482.6L540.5 482.6L541.4 482.6L542.3 482.6L543.2 482.7L544.1 482.9L545.0 482.8L545.9 482.9L546.8 482.6L547.7 482.9L548.6 482.8L549.5 482.9L550.4 482.8L551.3 482.7L552.2 482.8L553.1 482.9L554.0 482.9L554.9 482.9L555.8 482.9L556.7 482.9L557.6 482.7L558.5 482.8L559.4 482.8L560.3 482.9L561.2 482.9L562.1 482.9L563.0 482.7L563.9 482.9L564.8 482.9L565.7 482.9L565.7 483.9L564.8 483.7L563.9 483.7L563.0 483.7L562.1 483.8L561.2 483.7L560.3 483.7L559.4 483.7L558.5 483.7L557.6 483.7L556.7 483.7L555.8 483.7L554.9 483.7L554.0 483.7L553.1 483.7L552.2 483.7L551.3 483.7L550.4 483.7L549.5 483.7L548.6 483.7L547.7 483.7L546.8 483.7L545.9 483.7L545.0 483.7L544.1 483.7L543.2 484.0L542.3 483.9L541.4 483.9L540.5 484.4L539.6 484.2L538.7 484.3L537.8 484.1L536.9 484.3L536.0 484.8L535.1 484.4L534.2 484.5L533.3 485.2L532.4 484.6L531.5 484.5L530.6 484.5L529.7 484.6L528.8 484.9L527.9 485.1L527.0 485.2L526.1 486.3L525.2 485.0L524.3 486.7L523.4 485.1L522.5 486.7L521.6 485.4L520.7 485.7L519.8 485.7L518.9 485.9L518.0 485.7L517.1 485.3L516.2 485.7L515.3 486.2L514.4 487.3L513.5 485.7L512.6 486.3L511.7 486.2L510.8 485.8L509.9 487.3L509.0 487.3L508.1 486.8L507.2 486.0L506.3 487.1L505.4 486.7L504.5 487.5L503.6 486.4L502.7 489.3L501.8 486.9L500.9 486.1L500.0 486.4L499.1 486.6L498.2 486.6L497.3 486.6L496.4 487.2L495.5 488.1L494.6 488.0L493.7 486.7L492.8 487.5L491.9 488.0L491.0 487.2L490.1 487.6L489.2 487.0L488.3 487.5L487.4 487.3L486.5 487.6L485.6 489.3L484.7 488.0L483.8 487.4L482.9 487.3L482.0 487.3L481.1 489.6L480.2 486.5L479.3 486.6L478.4 487.5L477.5 487.6L476.6 487.6L475.7 487.0L474.8 486.3L473.9 486.2L473.0 486.6L472.1 487.1L471.2 487.4L470.3 487.3L469.4 487.2L468.5 486.4L467.6 486.3L466.7 486.3L465.8 487.8L464.9 487.1L464.0 487.0L463.1 486.5L462.2 487.0L461.3 487.3L460.4 489.3L459.5 486.9L458.6 486.7L457.7 487.5L456.8 487.4L455.9 486.9L455.0 489.7L454.1 486.6L453.2 486.7L452.3 488.3L451.4 487.5L450.5 488.9L449.6 487.7L448.7 490.2L447.8 487.3L446.9 487.2L446.0 487.0L445.1 488.6L444.2 487.1L443.3 487.0L442.4 486.3L441.5 486.8L440.6 486.4L439.7 486.8L438.8 487.3L437.9 487.1L437.0 487.4L436.1 486.3L435.2 487.9L434.3 486.9L433.4 487.5L432.5 487.5L431.6 486.5L430.7 486.4L429.8 487.1L428.9 487.0L428.0 489.2L427.1 487.1L426.2 488.2L425.3 489.2L424.4 487.9L423.5 486.7L422.6 487.4L421.7 487.1L420.8 487.0L419.9 487.2L419.0 486.8L418.1 486.3L417.2 488.0L416.3 488.0L415.4 487.8L414.5 487.8L413.6 487.7L412.7 487.1L411.8 487.1L410.9 487.3L410.0 486.9L409.1 487.6L408.2 486.8L407.3 488.1L406.4 487.2L405.5 487.2L404.6 486.3L403.7 486.3L402.8 486.6L401.9 489.2L401.0 486.7L400.1 486.7L399.2 487.3L398.3 488.3L397.4 486.9L396.5 486.7L395.6 487.1L394.7 487.0L393.8 486.7L392.9 486.3L392.0 486.6L391.1 487.3L390.2 486.9L389.3 486.7L388.4 486.5L387.5 486.8L386.6 488.0L385.7 486.7L384.8 489.1L383.9 487.2L383.0 486.3L382.1 487.7L381.2 486.2L380.3 486.5L379.4 487.1L378.5 486.6L377.6 488.0L376.7 486.4L375.8 486.7L374.9 488.2L374.0 487.4L373.1 486.9L372.2 486.6L371.3 486.4L370.4 487.0L369.5 488.7L368.6 486.3L367.7 486.2L366.8 488.3L365.9 486.8L365.0 487.8L364.1 487.9L363.2 486.6L362.3 486.5L361.4 486.8L360.5 486.8L359.6 486.3L358.7 486.1L357.8 486.4L356.9 486.8L356.0 487.8L355.1 487.1L354.2 486.6L353.3 486.8L352.4 487.3L351.5 487.5L350.6 487.2L349.7 486.5L348.8 488.9L347.9 487.6L347.0 487.8L346.1 487.2L345.2 487.4L344.3 489.7L343.4 486.3L342.5 487.1L341.6 487.1L340.7 490.1L339.8 487.7L338.9 488.2L338.0 486.9L337.1 488.8L336.2 488.0L335.3 486.7L334.4 487.4L333.5 487.2L332.6 487.0L331.7 487.0L330.8 487.0L329.9 487.7L329.0 486.9L328.1 487.5L327.2 487.3L326.3 487.6L325.4 487.3L324.5 487.1L323.6 486.7L322.7 487.1L321.8 486.9L320.9 487.2L320.0 487.6L319.1 487.6L318.2 488.2L317.3 487.5L316.4 487.8L315.5 487.7L314.6 487.7L313.7 487.5L312.8 487.2L311.9 487.3L311.0 487.3L310.1 487.2L309.2 487.1L308.3 486.5L307.4 487.5L306.5 487.4L305.6 486.4L304.7 486.9L303.8 487.7L302.9 487.2L302.0 487.0L301.1 487.2L300.2 487.1L299.3 487.5L298.4 487.1L297.5 486.7L296.6 488.0L295.7 490.3L294.8 487.2L293.9 486.9L293.0 487.8L292.1 488.0L291.2 488.8L290.3 486.8L289.4 486.6L288.5 486.9L287.6 487.2L286.7 487.8L285.8 487.6L284.9 487.6L284.0 487.3L283.1 487.1L282.2 487.2L281.3 488.2L280.4 488.3L279.5 487.4L278.6 486.6L277.7 487.4L276.8 487.2L275.9 487.1L275.0 487.2L274.1 487.2L273.2 486.6L272.3 486.9L271.4 487.7L270.5 487.5L269.6 487.4L268.7 488.1L267.8 486.6L266.9 488.0L266.0 488.3L265.1 488.5L264.2 487.5L263.3 487.3L262.4 486.7L261.5 486.8L260.6 487.9L259.7 486.8L258.8 487.7L257.9 486.9L257.0 486.5L256.1 486.3L255.2 486.8L254.3 486.1L253.4 486.4L252.5 488.2L251.6 488.7L250.7 486.9L249.8 487.5L248.9 486.8L248.0 489.1L247.1 487.7L246.2 488.7L245.3 487.3L244.4 487.2L243.5 487.4L242.6 487.7L241.7 487.7L240.8 488.4L239.9 486.9L239.0 486.6L238.1 487.2L237.2 487.4L236.3 487.3L235.4 486.4L234.5 487.0L233.6 486.8L232.7 486.8L231.8 486.6L230.9 487.1L230.0 489.4L229.1 487.2L228.2 489.1L227.3 486.3L226.4 486.8L225.5 487.0L224.6 487.5L223.7 487.1L222.8 487.2L221.9 487.2L221.0 487.5L220.1 487.4L219.2 488.7L218.3 488.7L217.4 487.3L216.5 487.1L215.6 489.7L214.7 489.8L213.8 487.5L212.9 487.7L212.0 487.6L211.1 487.3L210.2 489.2L209.3 486.7L208.4 487.7L207.5 489.6L206.6 487.6L205.7 488.9L204.8 487.1L203.9 487.4L203.0 488.7L202.1 486.4L201.2 486.6L200.3 487.3L199.4 487.2L198.5 487.1L197.6 488.8L196.7 489.8L195.8 487.5L194.9 487.1L194.0 488.6L193.1 489.5L192.2 488.0L191.3 488.3L190.4 487.3L189.5 488.2L188.6 487.3L187.7 486.7L186.8 486.7L185.9 488.5L185.0 487.0L184.1 486.5L183.2 487.3L182.3 486.4L181.4 486.8L180.5 489.5L179.6 487.3L178.7 486.8L177.8 487.5L176.9 487.2L176.0 486.3L175.1 486.3L174.2 486.1L173.3 486.4L172.4 486.3L171.5 486.3L170.6 487.0L169.7 488.0L168.8 488.7L167.9 487.6L167.0 488.5L166.1 487.3L165.2 487.3L164.3 488.5L163.4 486.5L162.5 487.0L161.6 490.1L160.7 487.1L159.8 486.8L158.9 486.7L158.0 487.7L157.1 487.8L156.2 487.5L155.3 487.5L154.4 486.9L153.5 487.0L152.6 486.7L151.7 489.0L150.8 487.0L149.9 486.2L149.0 486.4L148.1 487.2L147.2 487.0L146.3 488.1L145.4 486.4L144.5 487.1z" fill="#1b1d22"/><path d="M843.7 413.7L844.6 413.9L845.5 413.9L846.4 413.9L847.3 413.9L848.2 413.9L849.1 413.9L850.0 413.9L850.9 413.9L851.8 413.9L852.7 413.9L853.6 413.9L854.5 413.9L855.4 413.9L856.3 413.9L857.2 413.9L858.1 413.9L859.0 413.9L859.9 413.9L860.8 413.8L861.7 413.7L862.6 413.9L863.5 413.9L864.4 413.9L865.3 413.7L866.2 413.7L867.1 413.7L868.0 413.8L868.9 413.1L869.8 413.5L870.7 413.0L871.6 412.6L872.5 412.5L873.4 412.5L874.3 412.0L875.2 412.6L876.1 412.2L877.0 412.0L877.9 412.1L878.8 410.8L879.7 412.0L880.6 411.9L881.5 411.7L882.4 411.5L883.3 411.6L884.2 411.8L885.1 411.5L886.0 411.5L886.9 410.5L887.8 410.3L888.7 410.9L889.6 411.5L890.5 409.7L891.4 411.6L892.3 411.4L893.2 411.6L894.1 410.6L895.0 411.8L895.9 411.5L896.8 410.5L897.7 410.7L898.6 410.6L899.5 410.2L900.4 410.8L901.3 411.0L902.2 410.7L903.1 410.2L904.0 410.2L904.9 409.9L905.8 408.8L906.7 409.9L907.6 409.1L908.5 410.3L909.4 408.5L910.3 409.8L911.2 409.1L912.1 404.6L913.0 408.0L913.9 409.8L914.8 408.9L915.7 409.1L916.6 407.6L917.5 409.0L918.4 408.4L919.3 407.6L920.2 407.7L921.1 404.8L922.0 407.7L922.9 407.2L923.8 408.6L924.7 406.5L925.6 407.4L926.5 407.5L927.4 407.6L928.3 408.8L929.2 408.3L930.1 407.5L931.0 408.6L931.9 409.0L932.8 407.4L933.7 407.6L934.6 405.2L935.5 404.2L936.4 406.0L937.3 408.2L938.2 409.0L939.1 408.5L940.0 409.2L940.9 407.0L941.8 408.1L942.7 408.6L943.6 409.4L944.5 409.0L945.4 408.8L946.3 408.7L947.2 409.0L948.1 407.4L949.0 409.3L949.9 409.3L950.8 409.3L951.7 410.8L952.6 409.8L953.5 409.2L954.4 410.2L955.3 408.8L956.2 409.1L957.1 407.8L958.0 410.1L958.9 407.3L959.8 411.0L960.7 410.2L961.6 410.3L962.5 407.1L963.4 410.0L964.3 409.4L965.2 408.6L966.1 410.2L967.0 410.5L967.9 409.5L968.8 410.0L969.7 408.8L970.6 409.5L971.5 410.3L972.4 409.5L973.3 408.9L974.2 410.0L975.1 407.0L976.0 409.5L976.9 409.2L977.8 410.0L978.7 410.7L979.6 410.9L980.5 408.9L981.4 409.3L982.3 409.4L983.2 407.8L984.1 410.2L985.0 408.2L985.9 406.7L986.8 410.1L987.7 410.1L988.6 408.8L989.5 410.5L990.4 411.0L991.3 411.4L992.2 411.3L993.1 411.2L994.0 410.8L994.9 410.3L995.8 410.8L996.7 410.3L997.6 410.2L998.5 411.2L999.4 410.1L1000.3 411.8L1001.2 411.9L1002.1 411.8L1003.0 411.8L1003.9 412.0L1004.8 412.5L1005.7 412.6L1006.6 412.8L1007.5 412.2L1008.4 412.8L1009.3 412.9L1010.2 413.3L1011.1 413.1L1012.0 413.2L1012.9 413.3L1013.8 413.4L1014.7 413.4L1015.6 413.3L1016.5 413.5L1017.4 413.5L1018.3 413.3L1019.2 413.0L1020.1 413.3L1021.0 413.1L1021.9 413.3L1022.8 413.0L1023.7 412.6L1024.6 411.9L1025.5 412.4L1026.4 411.9L1027.3 411.7L1028.2 411.6L1029.1 411.4L1030.0 411.5L1030.9 411.1L1031.8 411.2L1032.7 411.6L1033.6 411.8L1034.5 411.1L1035.4 411.1L1036.3 411.0L1037.2 410.2L1038.1 409.0L1039.0 408.9L1039.9 406.7L1040.8 409.5L1041.7 409.6L1042.6 409.8L1043.5 409.5L1044.4 409.0L1045.3 409.3L1046.2 410.0L1047.1 406.7L1048.0 407.0L1048.9 408.7L1049.8 409.6L1050.7 408.6L1051.6 409.7L1052.5 409.0L1053.4 409.0L1054.3 409.5L1055.2 409.9L1056.1 408.9L1057.0 409.5L1057.9 409.0L1058.8 409.2L1059.7 409.3L1060.6 408.7L1061.5 406.0L1062.4 410.6L1063.3 410.3L1064.2 410.5L1065.1 406.6L1066.0 408.3L1066.9 409.8L1067.8 408.9L1068.7 410.4L1069.6 410.7L1070.5 411.0L1071.4 410.1L1072.3 406.1L1073.2 409.0L1074.1 410.1L1075.0 409.8L1075.9 409.7L1076.8 410.5L1077.7 409.7L1078.6 409.9L1079.5 410.6L1080.4 410.0L1081.3 409.0L1082.2 409.1L1083.1 406.9L1084.0 409.9L1084.9 409.6L1085.8 408.8L1086.7 409.6L1087.6 409.7L1088.5 409.5L1089.4 409.2L1090.3 408.1L1091.2 408.6L1092.1 408.3L1093.0 409.0L1093.9 409.1L1094.8 409.4L1095.7 409.4L1096.6 408.4L1097.5 405.8L1098.4 404.2L1099.3 405.9L1100.2 407.3L1101.1 407.5L1102.0 407.5L1102.9 407.7L1103.8 407.3L1104.7 408.6L1105.6 409.3L1106.5 409.8L1107.4 409.6L1108.3 406.5L1109.2 409.4L1110.1 409.6L1111.0 409.6L1111.9 405.1L1112.8 404.7L1113.7 408.6L1114.6 406.7L1115.5 409.1L1116.4 408.5L1117.3 409.5L1118.2 410.2L1119.1 408.9L1120.0 409.7L1120.9 410.2L1121.8 409.4L1122.7 409.4L1123.6 409.6L1124.5 408.9L1125.4 408.9L1126.3 409.7L1127.2 410.1L1128.1 410.0L1129.0 410.9L1129.9 411.0L1130.8 410.7L1131.7 410.7L1132.6 409.0L1133.5 410.7L1134.4 410.7L1135.3 411.6L1136.2 409.3L1137.1 410.8L1138.0 410.8L1138.9 410.8L1139.8 411.3L1140.7 411.4L1141.6 410.8L1142.5 411.4L1143.4 411.1L1144.3 410.5L1145.2 409.2L1146.1 410.2L1147.0 409.8L1147.9 409.4L1148.8 409.2L1149.7 409.2L1150.6 408.6L1151.5 409.4L1152.4 408.9L1153.3 406.5L1154.2 406.6L1155.1 407.0L1156.0 408.4L1156.9 408.2L1157.8 409.1L1158.7 409.0L1159.6 408.1L1160.5 408.1L1161.4 409.2L1162.3 407.9L1163.2 407.8L1164.1 408.5L1165.0 408.7L1165.9 407.6L1166.8 408.0L1167.7 403.8L1168.6 407.8L1169.5 406.2L1170.4 408.2L1171.3 407.4L1172.2 401.6L1173.1 407.7L1174.0 409.3L1174.9 408.8L1175.8 409.4L1176.7 408.0L1177.6 408.5L1178.5 407.0L1179.4 409.3L1180.3 406.2L1181.2 407.5L1182.1 408.2L1183.0 406.4L1183.9 405.9L1184.8 409.3L1185.7 409.0L1186.6 406.9L1187.5 409.3L1188.4 409.1L1189.3 408.3L1190.2 409.8L1191.1 409.9L1192.0 406.6L1192.9 406.6L1193.8 409.6L1194.7 410.2L1195.6 409.8L1196.5 407.3L1197.4 408.5L1198.3 405.6L1199.2 408.9L1200.1 409.7L1201.0 408.8L1201.9 407.9L1202.8 408.4L1203.7 409.3L1204.6 409.1L1205.5 410.1L1206.4 409.7L1207.3 408.2L1208.2 408.2L1209.1 408.8L1210.0 406.9L1210.9 407.8L1211.8 409.6L1212.7 409.7L1213.6 408.6L1214.5 406.3L1215.4 407.5L1216.3 408.2L1217.2 407.6L1218.1 407.6L1219.0 407.6L1219.9 407.1L1220.8 406.5L1221.7 407.8L1222.6 407.1L1223.5 407.5L1224.4 408.2L1225.3 408.8L1226.2 407.4L1227.1 403.7L1228.0 405.2L1228.9 404.1L1229.8 404.0L1230.7 408.1L1231.6 407.9L1232.5 409.2L1233.4 406.1L1234.3 408.5L1235.2 408.7L1236.1 408.9L1237.0 409.7L1237.9 410.1L1238.8 408.0L1239.7 409.3L1240.6 407.2L1241.5 408.4L1242.4 408.7L1243.3 409.8L1244.2 408.4L1245.1 409.6L1246.0 410.3L1246.9 408.5L1247.8 410.3L1248.7 410.4L1249.6 410.8L1250.5 411.1L1251.4 410.9L1252.3 410.9L1253.2 411.1L1254.1 409.0L1255.0 409.5L1255.9 411.7L1256.8 411.8L1257.7 411.6L1258.6 411.9L1259.5 409.9L1260.4 412.2L1261.3 412.1L1262.2 411.6L1263.1 411.6L1264.0 411.2L1264.9 411.6L1265.8 409.4L1266.7 411.6L1267.6 411.8L1268.5 411.5L1269.4 410.7L1270.3 410.6L1271.2 411.2L1272.1 410.7L1273.0 410.4L1273.9 409.3L1274.8 409.6L1275.7 409.2L1276.6 410.0L1277.5 410.4L1278.4 410.7L1279.3 408.4L1280.2 410.9L1281.1 410.7L1282.0 410.2L1282.9 410.2L1283.8 409.7L1284.7 410.6L1285.6 410.8L1286.5 407.3L1287.4 410.7L1288.3 410.9L1289.2 409.6L1290.1 408.9L1291.0 409.2L1291.9 407.0L1292.8 409.1L1293.7 409.7L1294.6 409.6L1295.5 409.1L1296.4 409.4L1297.3 405.7L1298.2 409.9L1299.1 409.8L1300.0 410.3L1300.9 409.8L1301.8 410.6L1302.7 411.0L1303.6 410.2L1304.5 410.6L1305.4 408.2L1306.3 410.4L1307.2 410.0L1308.1 410.4L1309.0 410.1L1309.9 410.3L1310.8 411.0L1311.7 411.3L1312.6 410.7L1313.5 410.7L1314.4 409.6L1315.3 410.5L1316.2 410.9L1317.1 410.5L1318.0 409.8L1318.9 411.1L1319.8 410.6L1320.7 410.7L1321.6 411.3L1322.5 411.1L1323.4 410.8L1324.3 410.9L1325.2 410.4L1326.1 408.9L1327.0 411.1L1327.9 410.4L1328.8 410.1L1329.7 409.8L1330.6 408.3L1331.5 409.4L1332.4 409.6L1333.3 408.5L1334.2 410.2L1335.1 409.8L1336.0 410.5L1336.9 410.5L1337.8 409.7L1338.7 409.6L1339.6 409.3L1340.5 409.2L1341.4 408.7L1342.3 409.6L1343.2 409.4L1344.1 410.3L1345.0 410.3L1345.9 408.4L1346.8 410.2L1347.7 409.7L1348.6 410.4L1349.5 408.6L1350.4 408.8L1351.3 410.0L1352.2 410.9L1353.1 410.0L1354.0 410.4L1354.9 408.3L1355.8 410.5L1356.7 407.6L1357.6 410.5L1358.5 411.2L1359.4 410.5L1360.3 411.5L1361.2 411.5L1362.1 411.3L1363.0 411.2L1363.9 411.7L1364.8 410.9L1365.7 412.1L1366.6 412.3L1367.5 411.9L1368.4 412.2L1369.3 412.4L1370.2 412.4L1371.1 412.7L1372.0 412.8L1372.9 412.8L1373.8 413.0L1374.7 413.2L1375.6 413.2L1376.5 413.4L1377.4 413.3L1378.3 413.2L1379.2 413.1L1380.1 413.2L1381.0 413.4L1381.9 413.2L1382.8 413.3L1383.7 413.4L1384.6 412.8L1385.5 413.3L1386.4 413.3L1387.3 413.2L1388.2 413.1L1389.1 413.1L1390.0 413.0L1390.9 412.8L1391.8 413.1L1392.7 412.7L1393.6 412.1L1394.5 412.2L1395.4 412.2L1396.3 412.1L1397.2 411.8L1398.1 411.9L1399.0 412.0L1399.9 412.2L1400.8 411.8L1401.7 411.7L1402.6 411.4L1403.5 409.7L1404.4 411.7L1405.3 411.2L1406.2 410.6L1407.1 410.2L1408.0 411.3L1408.9 410.1L1409.8 411.6L1410.7 411.6L1411.6 410.2L1412.5 410.2L1413.4 411.2L1414.3 411.4L1415.2 410.9L1416.1 411.6L1417.0 411.2L1417.9 410.5L1418.8 411.7L1419.7 411.1L1420.6 410.3L1421.5 410.8L1422.4 411.6L1423.3 411.5L1424.2 409.9L1425.1 411.9L1426.0 412.1L1426.9 411.8L1427.8 411.8L1428.7 410.9L1429.6 411.4L1430.5 410.0L1431.4 411.0L1432.3 411.9L1433.2 411.6L1434.1 411.6L1435.0 411.1L1435.9 410.9L1436.8 409.6L1437.7 410.8L1438.6 411.4L1439.5 412.1L1440.4 410.8L1441.3 411.4L1442.2 411.9L1443.1 412.0L1444.0 412.0L1444.9 411.4L1445.8 411.7L1446.7 410.9L1447.6 410.7L1448.5 411.2L1449.4 411.3L1450.3 411.4L1451.2 409.8L1452.1 409.7L1453.0 410.5L1453.9 409.8L1454.8 409.7L1455.7 410.0L1456.6 410.5L1457.5 409.5L1458.4 407.7L1459.3 410.2L1460.2 408.2L1461.1 406.7L1462.0 407.4L1462.9 407.8L1463.8 410.1L1464.7 409.4L1465.6 409.6L1466.5 408.2L1467.4 409.6L1468.3 410.0L1469.2 406.8L1470.1 410.0L1471.0 408.8L1471.9 409.2L1472.8 408.9L1473.7 408.4L1474.6 405.4L1475.5 408.4L1476.4 409.3L1477.3 410.1L1478.2 409.3L1479.1 410.0L1480.0 409.0L1480.9 410.4L1481.8 410.2L1482.7 410.7L1483.6 410.9L1484.5 409.2L1485.4 410.7L1486.3 410.7L1487.2 408.9L1488.1 407.5L1489.0 410.7L1489.9 411.1L1490.8 410.7L1491.7 411.1L1492.6 411.6L1493.5 411.1L1494.4 411.5L1495.3 411.4L1496.2 411.7L1497.1 411.5L1498.0 409.8L1498.9 411.7L1499.8 411.4L1500.7 410.7L1501.6 409.1L1502.5 411.3L1503.4 411.9L1504.3 411.7L1505.2 411.5L1506.1 411.1L1507.0 411.0L1507.9 411.6L1508.8 411.6L1509.7 411.5L1510.6 411.6L1511.5 410.0L1512.4 410.8L1513.3 410.6L1514.2 410.8L1515.1 411.1L1516.0 410.9L1516.9 410.1L1517.8 408.1L1518.7 409.9L1519.6 409.3L1519.6 417.5L1518.7 417.7L1517.8 417.5L1516.9 417.7L1516.0 418.3L1515.1 420.6L1514.2 417.7L1513.3 417.8L1512.4 417.6L1511.5 418.0L1510.6 417.8L1509.7 417.4L1508.8 418.5L1507.9 417.2L1507.0 417.1L1506.1 416.7L1505.2 416.8L1504.3 418.4L1503.4 417.0L1502.5 416.5L1501.6 416.2L1500.7 416.2L1499.8 418.7L1498.9 417.4L1498.0 417.0L1497.1 416.6L1496.2 417.0L1495.3 418.0L1494.4 417.0L1493.5 417.1L1492.6 417.6L1491.7 418.3L1490.8 417.0L1489.9 420.1L1489.0 417.9L1488.1 417.1L1487.2 417.5L1486.3 417.9L1485.4 417.9L1484.5 417.7L1483.6 418.7L1482.7 418.6L1481.8 419.9L1480.9 418.8L1480.0 419.1L1479.1 422.2L1478.2 418.9L1477.3 419.1L1476.4 418.5L1475.5 422.7L1474.6 418.8L1473.7 418.2L1472.8 418.8L1471.9 419.3L1471.0 418.8L1470.1 419.9L1469.2 420.4L1468.3 420.2L1467.4 419.8L1466.5 420.9L1465.6 419.5L1464.7 421.8L1463.8 420.3L1462.9 419.1L1462.0 418.2L1461.1 418.7L1460.2 418.8L1459.3 419.3L1458.4 418.6L1457.5 418.9L1456.6 419.1L1455.7 419.4L1454.8 418.1L1453.9 419.5L1453.0 419.2L1452.1 417.7L1451.2 418.3L1450.3 418.7L1449.4 421.2L1448.5 419.8L1447.6 417.5L1446.7 417.9L1445.8 418.1L1444.9 418.0L1444.0 418.3L1443.1 417.8L1442.2 417.5L1441.3 417.4L1440.4 417.2L1439.5 417.6L1438.6 417.6L1437.7 416.8L1436.8 416.9L1435.9 416.6L1435.0 416.9L1434.1 416.7L1433.2 417.3L1432.3 416.9L1431.4 417.5L1430.5 416.9L1429.6 416.8L1428.7 416.7L1427.8 417.1L1426.9 417.3L1426.0 417.6L1425.1 417.5L1424.2 417.7L1423.3 419.0L1422.4 417.2L1421.5 416.6L1420.6 418.5L1419.7 417.0L1418.8 417.7L1417.9 417.4L1417.0 417.5L1416.1 417.6L1415.2 417.0L1414.3 419.0L1413.4 417.7L1412.5 417.4L1411.6 417.5L1410.7 417.8L1409.8 418.0L1408.9 417.0L1408.0 417.2L1407.1 417.4L1406.2 418.7L1405.3 419.0L1404.4 417.0L1403.5 417.1L1402.6 416.7L1401.7 416.6L1400.8 416.6L1399.9 416.7L1399.0 417.1L1398.1 416.2L1397.2 417.4L1396.3 416.3L1395.4 416.1L1394.5 416.3L1393.6 417.0L1392.7 416.6L1391.8 416.0L1390.9 415.8L1390.0 415.8L1389.1 415.6L1388.2 415.4L1387.3 416.1L1386.4 415.4L1385.5 415.3L1384.6 415.4L1383.7 415.2L1382.8 415.3L1381.9 415.3L1381.0 415.1L1380.1 415.0L1379.2 415.0L1378.3 415.0L1377.4 415.2L1376.5 415.7L1375.6 415.4L1374.7 415.5L1373.8 415.4L1372.9 415.8L1372.0 415.5L1371.1 415.6L1370.2 415.7L1369.3 416.8L1368.4 415.8L1367.5 416.0L1366.6 416.5L1365.7 416.5L1364.8 416.3L1363.9 416.5L1363.0 416.4L1362.1 416.8L1361.2 417.1L1360.3 417.3L1359.4 418.2L1358.5 417.8L1357.6 417.2L1356.7 417.5L1355.8 418.2L1354.9 417.5L1354.0 418.1L1353.1 418.1L1352.2 420.0L1351.3 418.2L1350.4 418.4L1349.5 418.0L1348.6 418.9L1347.7 421.4L1346.8 418.8L1345.9 418.4L1345.0 419.0L1344.1 419.1L1343.2 420.8L1342.3 421.7L1341.4 417.8L1340.5 419.1L1339.6 418.1L1338.7 419.2L1337.8 418.2L1336.9 419.8L1336.0 419.8L1335.1 418.1L1334.2 421.8L1333.3 419.1L1332.4 417.8L1331.5 418.2L1330.6 420.5L1329.7 417.8L1328.8 417.7L1327.9 417.7L1327.0 418.2L1326.1 417.8L1325.2 417.4L1324.3 417.8L1323.4 417.7L1322.5 418.1L1321.6 418.0L1320.7 417.6L1319.8 418.9L1318.9 417.7L1318.0 417.4L1317.1 417.5L1316.2 417.5L1315.3 417.1L1314.4 417.1L1313.5 417.4L1312.6 417.5L1311.7 418.1L1310.8 418.0L1309.9 417.7L1309.0 420.2L1308.1 418.0L1307.2 417.4L1306.3 419.5L1305.4 417.6L1304.5 418.3L1303.6 418.5L1302.7 418.9L1301.8 418.9L1300.9 421.7L1300.0 418.8L1299.1 418.6L1298.2 418.8L1297.3 417.9L1296.4 418.3L1295.5 418.1L1294.6 418.5L1293.7 418.9L1292.8 418.3L1291.9 418.1L1291.0 418.5L1290.1 418.1L1289.2 418.9L1288.3 420.3L1287.4 419.7L1286.5 419.6L1285.6 419.8L1284.7 420.6L1283.8 419.5L1282.9 419.1L1282.0 419.1L1281.1 419.3L1280.2 419.2L1279.3 419.4L1278.4 418.7L1277.5 419.8L1276.6 417.8L1275.7 417.6L1274.8 417.6L1273.9 417.9L1273.0 417.4L1272.1 417.9L1271.2 418.8L1270.3 417.7L1269.4 418.1L1268.5 420.2L1267.6 417.8L1266.7 419.3L1265.8 417.0L1264.9 417.4L1264.0 417.0L1263.1 417.3L1262.2 418.3L1261.3 418.0L1260.4 417.7L1259.5 417.4L1258.6 417.9L1257.7 417.2L1256.8 417.4L1255.9 417.5L1255.0 419.1L1254.1 418.8L1253.2 417.2L1252.3 417.5L1251.4 419.0L1250.5 418.1L1249.6 417.8L1248.7 417.7L1247.8 419.3L1246.9 418.8L1246.0 421.3L1245.1 417.7L1244.2 417.9L1243.3 420.1L1242.4 417.7L1241.5 420.1L1240.6 418.1L1239.7 419.1L1238.8 420.2L1237.9 421.0L1237.0 420.1L1236.1 419.7L1235.2 419.5L1234.3 419.7L1233.4 421.6L1232.5 422.5L1231.6 421.0L1230.7 420.2L1229.8 425.0L1228.9 420.5L1228.0 419.0L1227.1 420.1L1226.2 423.1L1225.3 421.2L1224.4 420.7L1223.5 420.2L1222.6 420.0L1221.7 420.7L1220.8 421.0L1219.9 420.9L1219.0 420.7L1218.1 425.1L1217.2 420.0L1216.3 424.7L1215.4 419.8L1214.5 424.6L1213.6 420.6L1212.7 421.5L1211.8 421.1L1210.9 423.6L1210.0 419.9L1209.1 420.1L1208.2 422.8L1207.3 419.6L1206.4 420.6L1205.5 423.1L1204.6 420.6L1203.7 419.9L1202.8 419.1L1201.9 418.5L1201.0 419.2L1200.1 423.7L1199.2 419.2L1198.3 420.1L1197.4 419.2L1196.5 419.3L1195.6 420.6L1194.7 423.1L1193.8 420.2L1192.9 419.4L1192.0 420.2L1191.1 421.5L1190.2 420.1L1189.3 420.4L1188.4 420.9L1187.5 422.1L1186.6 420.6L1185.7 419.8L1184.8 420.8L1183.9 418.9L1183.0 420.5L1182.1 420.4L1181.2 420.0L1180.3 421.0L1179.4 420.7L1178.5 419.5L1177.6 419.9L1176.7 420.5L1175.8 421.0L1174.9 422.3L1174.0 421.5L1173.1 422.7L1172.2 421.7L1171.3 422.0L1170.4 422.6L1169.5 421.5L1168.6 422.0L1167.7 422.2L1166.8 422.5L1165.9 421.6L1165.0 423.8L1164.1 425.8L1163.2 423.2L1162.3 421.2L1161.4 422.7L1160.5 422.9L1159.6 421.0L1158.7 423.0L1157.8 420.9L1156.9 420.0L1156.0 419.8L1155.1 419.1L1154.2 419.2L1153.3 418.8L1152.4 419.1L1151.5 419.2L1150.6 418.2L1149.7 418.5L1148.8 418.3L1147.9 418.1L1147.0 421.6L1146.1 418.3L1145.2 421.6L1144.3 419.0L1143.4 419.8L1142.5 418.5L1141.6 418.4L1140.7 418.2L1139.8 418.0L1138.9 418.4L1138.0 420.0L1137.1 417.8L1136.2 417.5L1135.3 420.8L1134.4 417.9L1133.5 418.1L1132.6 417.9L1131.7 417.6L1130.8 417.6L1129.9 420.9L1129.0 419.5L1128.1 417.4L1127.2 417.7L1126.3 417.7L1125.4 419.6L1124.5 418.8L1123.6 418.5L1122.7 418.7L1121.8 418.3L1120.9 419.2L1120.0 419.0L1119.1 419.6L1118.2 419.9L1117.3 419.5L1116.4 418.8L1115.5 420.7L1114.6 419.6L1113.7 422.0L1112.8 420.6L1111.9 422.0L1111.0 421.0L1110.1 421.2L1109.2 421.6L1108.3 426.2L1107.4 421.5L1106.5 421.7L1105.6 421.3L1104.7 420.6L1103.8 419.5L1102.9 419.8L1102.0 421.4L1101.1 423.3L1100.2 420.5L1099.3 419.6L1098.4 420.9L1097.5 420.4L1096.6 419.9L1095.7 420.7L1094.8 420.5L1093.9 420.1L1093.0 419.8L1092.1 419.0L1091.2 419.1L1090.3 419.2L1089.4 419.3L1088.5 419.7L1087.6 420.0L1086.7 419.3L1085.8 420.5L1084.9 422.9L1084.0 419.0L1083.1 418.9L1082.2 419.5L1081.3 418.2L1080.4 419.7L1079.5 420.7L1078.6 421.3L1077.7 420.0L1076.8 419.9L1075.9 417.8L1075.0 418.0L1074.1 418.2L1073.2 417.6L1072.3 418.4L1071.4 418.4L1070.5 419.0L1069.6 419.5L1068.7 418.6L1067.8 418.4L1066.9 418.3L1066.0 419.1L1065.1 419.7L1064.2 419.4L1063.3 419.6L1062.4 419.9L1061.5 418.9L1060.6 419.0L1059.7 418.9L1058.8 418.8L1057.9 419.1L1057.0 419.2L1056.1 418.6L1055.2 419.6L1054.3 419.7L1053.4 419.0L1052.5 418.8L1051.6 420.2L1050.7 418.7L1049.8 419.5L1048.9 420.4L1048.0 421.8L1047.1 418.6L1046.2 419.7L1045.3 418.7L1044.4 420.0L1043.5 419.1L1042.6 421.0L1041.7 418.2L1040.8 417.9L1039.9 417.9L1039.0 419.2L1038.1 418.8L1037.2 417.5L1036.3 418.5L1035.4 418.5L1034.5 419.7L1033.6 417.8L1032.7 417.4L1031.8 416.7L1030.9 416.3L1030.0 416.7L1029.1 416.8L1028.2 415.9L1027.3 415.8L1026.4 415.8L1025.5 416.2L1024.6 416.0L1023.7 415.7L1022.8 416.0L1021.9 415.8L1021.0 415.9L1020.1 415.5L1019.2 415.3L1018.3 415.3L1017.4 415.4L1016.5 415.4L1015.6 415.2L1014.7 415.5L1013.8 415.3L1012.9 415.3L1012.0 415.3L1011.1 415.2L1010.2 415.4L1009.3 415.2L1008.4 415.3L1007.5 415.4L1006.6 415.7L1005.7 415.6L1004.8 415.9L1003.9 415.6L1003.0 416.0L1002.1 415.9L1001.2 416.2L1000.3 417.4L999.4 417.1L998.5 416.5L997.6 416.5L996.7 417.1L995.8 417.0L994.9 418.7L994.0 418.0L993.1 418.7L992.2 418.6L991.3 420.0L990.4 418.5L989.5 419.0L988.6 418.0L987.7 418.3L986.8 419.5L985.9 421.9L985.0 422.3L984.1 419.4L983.2 418.4L982.3 421.8L981.4 418.1L980.5 418.9L979.6 419.6L978.7 419.4L977.8 418.8L976.9 418.8L976.0 421.2L975.1 418.8L974.2 418.7L973.3 420.1L972.4 421.2L971.5 419.1L970.6 420.0L969.7 421.2L968.8 418.6L967.9 418.3L967.0 418.3L966.1 418.8L965.2 418.4L964.3 417.6L963.4 417.7L962.5 418.5L961.6 417.7L960.7 417.6L959.8 418.2L958.9 418.3L958.0 417.5L957.1 417.2L956.2 418.0L955.3 417.5L954.4 420.1L953.5 417.9L952.6 417.8L951.7 418.7L950.8 419.2L949.9 418.9L949.0 417.6L948.1 418.0L947.2 417.8L946.3 417.8L945.4 418.2L944.5 419.4L943.6 419.2L942.7 418.3L941.8 418.7L940.9 419.2L940.0 424.1L939.1 419.4L938.2 421.4L937.3 420.5L936.4 424.2L935.5 419.6L934.6 419.4L933.7 420.5L932.8 420.3L931.9 420.8L931.0 425.1L930.1 419.8L929.2 420.6L928.3 420.8L927.4 419.8L926.5 419.8L925.6 419.5L924.7 420.1L923.8 420.5L922.9 419.1L922.0 419.5L921.1 424.2L920.2 419.5L919.3 423.3L918.4 419.6L917.5 419.9L916.6 419.9L915.7 419.5L914.8 419.2L913.9 420.3L913.0 420.1L912.1 417.9L911.2 420.3L910.3 419.6L909.4 418.7L908.5 418.9L907.6 418.6L906.7 417.8L905.8 417.8L904.9 417.8L904.0 417.9L903.1 417.2L902.2 420.2L901.3 419.4L900.4 417.6L899.5 417.5L898.6 416.9L897.7 417.1L896.8 417.7L895.9 418.7L895.0 417.9L894.1 417.7L893.2 417.5L892.3 417.3L891.4 418.0L890.5 417.2L889.6 417.0L888.7 416.7L887.8 416.7L886.9 417.0L886.0 416.8L885.1 416.9L884.2 416.8L883.3 416.8L882.4 417.3L881.5 416.4L880.6 416.5L879.7 416.5L878.8 416.5L877.9 416.9L877.0 416.0L876.1 416.0L875.2 416.0L874.3 415.8L873.4 415.6L872.5 416.0L871.6 415.5L870.7 415.3L869.8 415.1L868.9 414.8L868.0 414.7L867.1 414.7L866.2 414.7L865.3 414.7L864.4 414.9L863.5 414.7L862.6 414.9L861.7 414.7L860.8 414.7L859.9 414.8L859.0 414.7L858.1 414.7L857.2 414.8L856.3 414.7L855.4 414.7L854.5 414.7L853.6 414.7L852.7 414.7L851.8 414.7L850.9 414.7L850.0 414.7L849.1 414.8L848.2 414.7L847.3 414.8L846.4 414.7L845.5 414.7L844.6 414.7L843.7 414.8z" fill="#1b1d22"/><path d="M843.7 482.8L844.6 482.9L845.5 482.9L846.4 482.8L847.3 482.8L848.2 482.9L849.1 482.9L850.0 482.8L850.9 482.8L851.8 482.9L852.7 482.6L853.6 482.8L854.5 482.7L855.4 482.7L856.3 482.6L857.2 482.7L858.1 482.7L859.0 482.8L859.9 482.5L860.8 482.3L861.7 482.1L862.6 482.0L863.5 481.9L864.4 481.1L865.3 481.6L866.2 481.6L867.1 480.0L868.0 481.1L868.9 481.1L869.8 481.1L870.7 480.0L871.6 481.0L872.5 480.6L873.4 480.2L874.3 480.1L875.2 480.3L876.1 480.2L877.0 479.2L877.9 480.5L878.8 480.1L879.7 479.7L880.6 479.0L881.5 480.2L882.4 479.9L883.3 480.1L884.2 479.8L885.1 478.2L886.0 479.8L886.9 477.8L887.8 479.6L888.7 480.0L889.6 477.5L890.5 480.0L891.4 479.1L892.3 478.9L893.2 479.9L894.1 478.6L895.0 479.5L895.9 478.9L896.8 476.6L897.7 478.4L898.6 475.7L899.5 477.6L900.4 478.6L901.3 475.7L902.2 478.2L903.1 478.8L904.0 477.6L904.9 476.8L905.8 477.1L906.7 478.1L907.6 474.5L908.5 476.1L909.4 476.8L910.3 475.5L911.2 474.1L912.1 476.9L913.0 472.3L913.9 474.9L914.8 476.5L915.7 477.1L916.6 475.6L917.5 477.4L918.4 475.9L919.3 476.5L920.2 476.9L921.1 476.4L922.0 475.3L922.9 476.6L923.8 476.9L924.7 474.5L925.6 475.6L926.5 474.4L927.4 476.7L928.3 476.6L929.2 476.0L930.1 472.5L931.0 477.6L931.9 477.8L932.8 477.0L933.7 477.6L934.6 476.6L935.5 476.2L936.4 478.6L937.3 479.0L938.2 477.4L939.1 478.8L940.0 475.0L940.9 478.2L941.8 479.1L942.7 478.4L943.6 478.1L944.5 478.4L945.4 479.3L946.3 477.4L947.2 478.4L948.1 476.2L949.0 477.7L949.9 478.5L950.8 478.4L951.7 478.5L952.6 479.0L953.5 478.6L954.4 479.1L955.3 478.7L956.2 477.8L957.1 476.4L958.0 478.9L958.9 474.9L959.8 477.8L960.7 477.1L961.6 477.7L962.5 477.7L963.4 476.9L964.3 478.0L965.2 475.2L966.1 478.5L967.0 475.1L967.9 476.4L968.8 478.8L969.7 478.9L970.6 478.8L971.5 477.8L972.4 478.5L973.3 479.2L974.2 477.1L975.1 479.0L976.0 479.2L976.9 478.4L977.8 478.4L978.7 479.3L979.6 478.5L980.5 477.1L981.4 478.3L982.3 478.3L983.2 479.2L984.1 479.2L985.0 479.5L985.9 479.1L986.8 480.0L987.7 479.5L988.6 479.5L989.5 480.3L990.4 478.7L991.3 480.8L992.2 481.2L993.1 480.9L994.0 480.8L994.9 481.6L995.8 481.9L996.7 481.9L997.6 481.5L998.5 482.1L999.4 482.2L1000.3 481.9L1001.2 481.9L1002.1 481.3L1003.0 481.9L1003.9 482.3L1004.8 482.3L1005.7 482.4L1006.6 482.2L1007.5 482.4L1008.4 482.2L1009.3 482.3L1010.2 482.2L1011.1 482.2L1012.0 482.1L1012.9 481.9L1013.8 482.0L1014.7 481.2L1015.6 480.3L1016.5 481.5L1017.4 481.2L1018.3 481.4L1019.2 480.7L1020.1 480.7L1021.0 480.3L1021.9 478.8L1022.8 481.0L1023.7 480.2L1024.6 479.5L1025.5 478.2L1026.4 477.7L1027.3 479.6L1028.2 479.3L1029.1 478.4L1030.0 479.1L1030.9 478.1L1031.8 476.4L1032.7 477.8L1033.6 478.6L1034.5 477.8L1035.4 476.5L1036.3 477.5L1037.2 476.4L1038.1 479.0L1039.0 474.1L1039.9 476.2L1040.8 477.4L1041.7 478.5L1042.6 477.9L1043.5 473.5L1044.4 477.1L1045.3 478.8L1046.2 477.6L1047.1 478.7L1048.0 478.5L1048.9 476.8L1049.8 476.2L1050.7 477.6L1051.6 478.4L1052.5 478.9L1053.4 478.4L1054.3 477.9L1055.2 478.4L1056.1 477.4L1057.0 479.3L1057.9 478.8L1058.8 479.2L1059.7 476.9L1060.6 478.4L1061.5 479.2L1062.4 479.1L1063.3 479.0L1064.2 478.6L1065.1 479.0L1066.0 479.0L1066.9 478.5L1067.8 478.5L1068.7 477.4L1069.6 477.7L1070.5 478.2L1071.4 477.1L1072.3 476.1L1073.2 474.2L1074.1 477.6L1075.0 478.3L1075.9 473.8L1076.8 478.9L1077.7 479.2L1078.6 478.8L1079.5 478.8L1080.4 476.4L1081.3 477.3L1082.2 476.5L1083.1 474.6L1084.0 475.9L1084.9 473.5L1085.8 477.3L1086.7 476.2L1087.6 474.1L1088.5 472.0L1089.4 477.2L1090.3 476.0L1091.2 476.7L1092.1 475.5L1093.0 477.0L1093.9 477.1L1094.8 476.4L1095.7 476.7L1096.6 471.6L1097.5 475.6L1098.4 477.5L1099.3 476.1L1100.2 470.7L1101.1 477.1L1102.0 476.3L1102.9 476.8L1103.8 477.1L1104.7 477.3L1105.6 477.1L1106.5 477.8L1107.4 477.5L1108.3 476.5L1109.2 476.6L1110.1 474.5L1111.0 478.7L1111.9 478.8L1112.8 478.5L1113.7 478.1L1114.6 478.0L1115.5 477.0L1116.4 478.8L1117.3 477.2L1118.2 478.0L1119.1 479.5L1120.0 479.2L1120.9 479.7L1121.8 479.8L1122.7 480.2L1123.6 479.4L1124.5 477.8L1125.4 478.9L1126.3 479.0L1127.2 478.6L1128.1 479.8L1129.0 480.0L1129.9 479.3L1130.8 478.7L1131.7 475.8L1132.6 478.1L1133.5 478.2L1134.4 478.2L1135.3 479.2L1136.2 479.0L1137.1 478.6L1138.0 478.8L1138.9 477.6L1139.8 477.3L1140.7 476.8L1141.6 476.3L1142.5 476.4L1143.4 475.3L1144.3 477.8L1145.2 474.8L1146.1 477.5L1147.0 477.2L1147.9 477.5L1148.8 477.5L1149.7 473.2L1150.6 471.9L1151.5 476.7L1152.4 475.8L1153.3 475.4L1154.2 472.1L1155.1 477.1L1156.0 477.5L1156.9 471.6L1157.8 474.3L1158.7 475.7L1159.6 476.6L1160.5 475.4L1161.4 474.6L1162.3 474.5L1163.2 475.2L1164.1 471.8L1165.0 473.0L1165.9 475.5L1166.8 473.8L1167.7 474.4L1168.6 475.6L1169.5 471.2L1170.4 471.6L1171.3 476.6L1172.2 476.2L1173.1 477.5L1174.0 477.6L1174.9 477.8L1175.8 476.9L1176.7 478.5L1177.6 478.9L1178.5 478.8L1179.4 478.1L1180.3 477.8L1181.2 475.1L1182.1 476.3L1183.0 476.3L1183.9 477.3L1184.8 478.0L1185.7 478.2L1186.6 477.9L1187.5 477.1L1188.4 477.4L1189.3 478.3L1190.2 476.9L1191.1 476.3L1192.0 475.0L1192.9 473.8L1193.8 477.0L1194.7 477.4L1195.6 475.0L1196.5 476.0L1197.4 475.6L1198.3 476.0L1199.2 471.0L1200.1 476.2L1201.0 475.6L1201.9 472.1L1202.8 475.5L1203.7 475.7L1204.6 476.0L1205.5 475.1L1206.4 476.3L1207.3 473.2L1208.2 475.9L1209.1 475.7L1210.0 475.6L1210.9 475.3L1211.8 472.4L1212.7 473.4L1213.6 475.8L1214.5 474.9L1215.4 475.1L1216.3 476.9L1217.2 474.1L1218.1 477.0L1219.0 473.7L1219.9 475.0L1220.8 476.3L1221.7 477.0L1222.6 477.3L1223.5 476.9L1224.4 477.6L1225.3 474.3L1226.2 476.8L1227.1 477.8L1228.0 478.1L1228.9 478.0L1229.8 476.3L1230.7 477.9L1231.6 477.1L1232.5 475.4L1233.4 478.7L1234.3 478.2L1235.2 478.7L1236.1 479.5L1237.0 479.3L1237.9 479.1L1238.8 478.3L1239.7 479.2L1240.6 478.8L1241.5 478.5L1242.4 479.4L1243.3 479.7L1244.2 477.3L1245.1 479.4L1246.0 479.5L1246.9 479.8L1247.8 480.4L1248.7 480.1L1249.6 477.2L1250.5 479.7L1251.4 479.6L1252.3 477.4L1253.2 478.1L1254.1 479.7L1255.0 479.8L1255.9 480.1L1256.8 477.5L1257.7 479.7L1258.6 480.1L1259.5 480.1L1260.4 479.6L1261.3 480.2L1262.2 479.8L1263.1 479.1L1264.0 479.8L1264.9 480.1L1265.8 478.7L1266.7 479.1L1267.6 478.5L1268.5 478.6L1269.4 478.7L1270.3 478.8L1271.2 475.8L1272.1 474.6L1273.0 478.4L1273.9 478.5L1274.8 478.0L1275.7 477.6L1276.6 478.4L1277.5 474.2L1278.4 475.2L1279.3 476.7L1280.2 474.8L1281.1 475.7L1282.0 476.8L1282.9 477.4L1283.8 475.2L1284.7 477.6L1285.6 477.4L1286.5 477.7L1287.4 477.9L1288.3 478.7L1289.2 479.1L1290.1 478.6L1291.0 477.9L1291.9 478.0L1292.8 476.5L1293.7 479.0L1294.6 478.9L1295.5 478.3L1296.4 476.2L1297.3 478.3L1298.2 478.2L1299.1 478.0L1300.0 479.3L1300.9 479.6L1301.8 479.6L1302.7 479.8L1303.6 479.6L1304.5 480.2L1305.4 480.2L1306.3 477.5L1307.2 479.5L1308.1 479.7L1309.0 477.8L1309.9 480.3L1310.8 479.7L1311.7 480.0L1312.6 478.3L1313.5 476.9L1314.4 479.6L1315.3 480.5L1316.2 478.7L1317.1 479.8L1318.0 479.8L1318.9 479.9L1319.8 479.8L1320.7 479.2L1321.6 479.2L1322.5 478.0L1323.4 479.4L1324.3 478.6L1325.2 478.3L1326.1 474.7L1327.0 477.9L1327.9 477.0L1328.8 478.3L1329.7 478.1L1330.6 478.3L1331.5 477.0L1332.4 476.7L1333.3 478.0L1334.2 478.3L1335.1 477.7L1336.0 478.8L1336.9 479.3L1337.8 478.2L1338.7 475.9L1339.6 478.9L1340.5 478.0L1341.4 478.4L1342.3 474.7L1343.2 477.3L1344.1 478.8L1345.0 478.7L1345.9 477.5L1346.8 478.3L1347.7 476.0L1348.6 479.6L1349.5 478.9L1350.4 479.7L1351.3 479.7L1352.2 479.6L1353.1 479.8L1354.0 480.2L1354.9 479.8L1355.8 480.4L1356.7 480.7L1357.6 480.8L1358.5 480.8L1359.4 480.8L1360.3 481.4L1361.2 481.6L1362.1 481.6L1363.0 481.6L1363.9 481.6L1364.8 481.2L1365.7 481.9L1366.6 481.8L1367.5 482.0L1368.4 482.3L1369.3 481.7L1370.2 482.4L1371.1 482.4L1372.0 482.3L1372.9 482.4L1373.8 482.2L1374.7 482.2L1375.6 482.3L1376.5 481.5L1377.4 482.2L1378.3 482.0L1379.2 481.1L1380.1 480.8L1381.0 482.0L1381.9 481.9L1382.8 481.6L1383.7 481.5L1384.6 481.1L1385.5 481.0L1386.4 481.1L1387.3 479.9L1388.2 481.3L1389.1 481.0L1390.0 480.4L1390.9 480.4L1391.8 480.2L1392.7 480.5L1393.6 478.6L1394.5 480.7L1395.4 480.5L1396.3 480.2L1397.2 478.7L1398.1 479.3L1399.0 479.9L1399.9 480.1L1400.8 480.4L1401.7 480.5L1402.6 480.5L1403.5 480.0L1404.4 480.2L1405.3 480.3L1406.2 480.4L1407.1 478.5L1408.0 479.9L1408.9 480.3L1409.8 479.9L1410.7 480.3L1411.6 479.2L1412.5 479.7L1413.4 480.3L1414.3 480.2L1415.2 480.1L1416.1 479.2L1417.0 480.2L1417.9 480.2L1418.8 480.1L1419.7 479.9L1420.6 478.3L1421.5 480.5L1422.4 479.7L1423.3 480.4L1424.2 480.3L1425.1 480.8L1426.0 481.0L1426.9 480.3L1427.8 478.5L1428.7 479.6L1429.6 478.0L1430.5 480.3L1431.4 479.8L1432.3 480.4L1433.2 479.8L1434.1 479.2L1435.0 479.2L1435.9 479.3L1436.8 479.6L1437.7 479.0L1438.6 476.3L1439.5 478.6L1440.4 478.2L1441.3 477.0L1442.2 478.2L1443.1 479.2L1444.0 477.7L1444.9 478.2L1445.8 475.9L1446.7 478.3L1447.6 477.4L1448.5 477.4L1449.4 477.7L1450.3 478.6L1451.2 474.7L1452.1 478.4L1453.0 474.4L1453.9 477.5L1454.8 478.1L1455.7 478.0L1456.6 477.8L1457.5 478.2L1458.4 477.9L1459.3 477.8L1460.2 478.5L1461.1 478.1L1462.0 477.3L1462.9 476.9L1463.8 477.0L1464.7 477.4L1465.6 478.6L1466.5 473.7L1467.4 478.9L1468.3 479.3L1469.2 479.0L1470.1 478.2L1471.0 478.5L1471.9 478.3L1472.8 478.6L1473.7 479.2L1474.6 475.9L1475.5 479.4L1476.4 479.3L1477.3 479.3L1478.2 479.7L1479.1 479.7L1480.0 479.8L1480.9 480.2L1481.8 480.5L1482.7 479.8L1483.6 480.4L1484.5 479.8L1485.4 479.5L1486.3 480.2L1487.2 480.1L1488.1 480.4L1489.0 480.6L1489.9 480.2L1490.8 480.2L1491.7 480.2L1492.6 477.6L1493.5 480.2L1494.4 479.1L1495.3 479.8L1496.2 477.5L1497.1 479.6L1498.0 480.2L1498.9 480.5L1499.8 478.5L1500.7 479.4L1501.6 479.1L1502.5 479.2L1503.4 479.5L1504.3 477.9L1505.2 478.5L1506.1 480.0L1507.0 478.4L1507.9 478.3L1508.8 478.1L1509.7 476.9L1510.6 477.7L1511.5 477.1L1512.4 478.6L1513.3 476.8L1514.2 478.0L1515.1 478.9L1516.0 478.6L1516.9 477.7L1517.8 478.6L1518.7 478.4L1519.6 478.6L1519.6 489.0L1518.7 488.8L1517.8 488.7L1516.9 488.3L1516.0 488.5L1515.1 488.6L1514.2 490.5L1513.3 487.6L1512.4 491.0L1511.5 488.1L1510.6 487.0L1509.7 486.8L1508.8 487.7L1507.9 488.2L1507.0 488.4L1506.1 487.7L1505.2 487.3L1504.3 488.1L1503.4 487.1L1502.5 486.2L1501.6 489.2L1500.7 486.5L1499.8 486.3L1498.9 487.4L1498.0 486.2L1497.1 485.6L1496.2 485.7L1495.3 485.5L1494.4 485.6L1493.5 485.8L1492.6 486.5L1491.7 486.0L1490.8 485.9L1489.9 485.8L1489.0 486.2L1488.1 486.1L1487.2 486.0L1486.3 486.1L1485.4 485.7L1484.5 487.0L1483.6 486.8L1482.7 487.6L1481.8 489.5L1480.9 487.3L1480.0 487.2L1479.1 487.1L1478.2 487.2L1477.3 488.2L1476.4 487.4L1475.5 487.6L1474.6 487.5L1473.7 488.2L1472.8 491.5L1471.9 487.9L1471.0 488.1L1470.1 491.3L1469.2 488.8L1468.3 490.5L1467.4 490.6L1466.5 489.5L1465.6 489.0L1464.7 488.1L1463.8 488.9L1462.9 488.8L1462.0 489.3L1461.1 489.5L1460.2 490.1L1459.3 490.6L1458.4 489.3L1457.5 489.1L1456.6 488.7L1455.7 488.9L1454.8 488.9L1453.9 488.9L1453.0 487.9L1452.1 492.2L1451.2 491.1L1450.3 488.7L1449.4 488.5L1448.5 488.6L1447.6 487.7L1446.7 489.4L1445.8 487.2L1444.9 487.1L1444.0 489.6L1443.1 487.9L1442.2 487.2L1441.3 488.9L1440.4 486.6L1439.5 486.5L1438.6 486.7L1437.7 486.3L1436.8 486.6L1435.9 486.8L1435.0 486.4L1434.1 487.4L1433.2 488.9L1432.3 487.4L1431.4 486.1L1430.5 487.1L1429.6 487.3L1428.7 486.2L1427.8 486.0L1426.9 486.8L1426.0 486.8L1425.1 486.4L1424.2 486.3L1423.3 486.3L1422.4 485.9L1421.5 486.2L1420.6 486.3L1419.7 485.9L1418.8 486.1L1417.9 486.1L1417.0 486.2L1416.1 485.8L1415.2 486.2L1414.3 486.5L1413.4 489.3L1412.5 488.9L1411.6 487.1L1410.7 486.7L1409.8 486.4L1408.9 486.8L1408.0 486.5L1407.1 489.0L1406.2 488.4L1405.3 487.0L1404.4 486.9L1403.5 486.9L1402.6 487.5L1401.7 487.2L1400.8 487.3L1399.9 486.6L1399.0 487.0L1398.1 486.1L1397.2 487.9L1396.3 486.3L1395.4 486.4L1394.5 486.5L1393.6 486.4L1392.7 485.9L1391.8 485.5L1390.9 485.9L1390.0 486.5L1389.1 485.7L1388.2 485.7L1387.3 485.7L1386.4 485.3L1385.5 485.1L1384.6 484.8L1383.7 485.4L1382.8 484.8L1381.9 485.0L1381.0 485.6L1380.1 484.6L1379.2 485.3L1378.3 484.4L1377.4 484.7L1376.5 484.3L1375.6 485.2L1374.7 484.5L1373.8 485.2L1372.9 484.5L1372.0 484.3L1371.1 485.0L1370.2 484.4L1369.3 484.4L1368.4 484.4L1367.5 484.4L1366.6 484.2L1365.7 484.3L1364.8 484.5L1363.9 484.4L1363.0 484.6L1362.1 485.8L1361.2 485.3L1360.3 485.9L1359.4 484.7L1358.5 485.0L1357.6 485.3L1356.7 485.5L1355.8 485.5L1354.9 485.8L1354.0 485.8L1353.1 485.8L1352.2 485.9L1351.3 486.5L1350.4 486.8L1349.5 487.0L1348.6 488.8L1347.7 486.6L1346.8 486.5L1345.9 487.0L1345.0 487.1L1344.1 487.4L1343.2 486.9L1342.3 487.3L1341.4 487.5L1340.5 488.4L1339.6 488.3L1338.7 487.9L1337.8 488.8L1336.9 489.8L1336.0 489.3L1335.1 487.5L1334.2 488.1L1333.3 488.4L1332.4 489.0L1331.5 488.6L1330.6 487.9L1329.7 488.4L1328.8 487.9L1327.9 488.0L1327.0 487.7L1326.1 487.8L1325.2 490.7L1324.3 487.6L1323.4 488.0L1322.5 489.3L1321.6 489.8L1320.7 487.6L1319.8 490.6L1318.9 487.9L1318.0 487.9L1317.1 490.3L1316.2 487.7L1315.3 488.7L1314.4 488.6L1313.5 487.5L1312.6 489.0L1311.7 487.4L1310.8 487.0L1309.9 487.6L1309.0 487.3L1308.1 487.5L1307.2 487.1L1306.3 488.5L1305.4 487.4L1304.5 488.9L1303.6 487.0L1302.7 487.5L1301.8 487.9L1300.9 487.3L1300.0 488.2L1299.1 486.3L1298.2 486.5L1297.3 486.8L1296.4 486.7L1295.5 487.1L1294.6 490.2L1293.7 488.1L1292.8 486.9L1291.9 487.2L1291.0 487.2L1290.1 488.6L1289.2 489.1L1288.3 488.3L1287.4 488.3L1286.5 487.6L1285.6 487.3L1284.7 487.8L1283.8 489.4L1282.9 487.5L1282.0 487.0L1281.1 487.6L1280.2 487.1L1279.3 487.4L1278.4 487.6L1277.5 488.5L1276.6 489.4L1275.7 488.1L1274.8 487.8L1273.9 488.1L1273.0 487.9L1272.1 487.5L1271.2 488.1L1270.3 489.5L1269.4 487.9L1268.5 487.3L1267.6 487.1L1266.7 487.4L1265.8 487.1L1264.9 489.3L1264.0 488.2L1263.1 488.3L1262.2 487.3L1261.3 487.7L1260.4 487.2L1259.5 487.3L1258.6 489.6L1257.7 487.7L1256.8 486.1L1255.9 486.4L1255.0 486.6L1254.1 485.9L1253.2 488.1L1252.3 485.6L1251.4 487.2L1250.5 485.8L1249.6 485.9L1248.7 486.4L1247.8 486.8L1246.9 486.2L1246.0 485.9L1245.1 486.0L1244.2 486.4L1243.3 486.6L1242.4 489.0L1241.5 488.0L1240.6 486.4L1239.7 490.0L1238.8 487.2L1237.9 488.0L1237.0 487.8L1236.1 488.5L1235.2 487.8L1234.3 487.6L1233.4 490.9L1232.5 488.4L1231.6 487.9L1230.7 492.3L1229.8 493.1L1228.9 489.2L1228.0 489.5L1227.1 494.7L1226.2 490.9L1225.3 489.5L1224.4 491.6L1223.5 490.0L1222.6 490.1L1221.7 490.0L1220.8 494.1L1219.9 489.7L1219.0 490.5L1218.1 490.8L1217.2 491.2L1216.3 490.8L1215.4 489.2L1214.5 489.8L1213.6 489.6L1212.7 489.4L1211.8 488.8L1210.9 489.2L1210.0 489.3L1209.1 492.1L1208.2 489.6L1207.3 489.7L1206.4 490.4L1205.5 491.2L1204.6 489.2L1203.7 489.0L1202.8 488.5L1201.9 489.0L1201.0 488.3L1200.1 488.7L1199.2 489.7L1198.3 488.4L1197.4 491.9L1196.5 488.0L1195.6 488.5L1194.7 489.1L1193.8 493.5L1192.9 490.4L1192.0 489.1L1191.1 488.6L1190.2 488.5L1189.3 489.4L1188.4 488.6L1187.5 488.7L1186.6 489.3L1185.7 489.2L1184.8 489.1L1183.9 488.7L1183.0 487.6L1182.1 488.0L1181.2 489.2L1180.3 489.1L1179.4 489.6L1178.5 490.2L1177.6 490.6L1176.7 490.7L1175.8 491.6L1174.9 489.7L1174.0 489.7L1173.1 489.6L1172.2 488.5L1171.3 490.0L1170.4 488.1L1169.5 488.0L1168.6 488.7L1167.7 493.1L1166.8 488.4L1165.9 488.4L1165.0 489.0L1164.1 490.4L1163.2 491.9L1162.3 490.5L1161.4 493.5L1160.5 491.3L1159.6 492.7L1158.7 491.4L1157.8 492.2L1156.9 491.7L1156.0 492.5L1155.1 492.0L1154.2 494.7L1153.3 490.3L1152.4 490.1L1151.5 491.0L1150.6 491.0L1149.7 492.8L1148.8 491.6L1147.9 490.7L1147.0 490.4L1146.1 489.8L1145.2 490.0L1144.3 489.5L1143.4 488.8L1142.5 488.0L1141.6 487.0L1140.7 487.4L1139.8 487.2L1138.9 489.4L1138.0 488.2L1137.1 487.5L1136.2 487.6L1135.3 487.9L1134.4 487.4L1133.5 486.7L1132.6 486.1L1131.7 486.2L1130.8 486.3L1129.9 486.6L1129.0 487.4L1128.1 487.1L1127.2 487.7L1126.3 486.2L1125.4 486.3L1124.5 486.2L1123.6 486.7L1122.7 487.5L1121.8 488.1L1120.9 487.4L1120.0 489.9L1119.1 487.5L1118.2 489.3L1117.3 487.9L1116.4 488.3L1115.5 487.5L1114.6 487.2L1113.7 488.0L1112.8 489.2L1111.9 488.7L1111.0 489.1L1110.1 490.4L1109.2 490.8L1108.3 488.6L1107.4 492.9L1106.5 489.4L1105.6 489.0L1104.7 489.3L1103.8 493.6L1102.9 490.0L1102.0 489.7L1101.1 490.1L1100.2 489.1L1099.3 489.2L1098.4 490.7L1097.5 495.2L1096.6 490.8L1095.7 490.4L1094.8 489.9L1093.9 490.4L1093.0 491.3L1092.1 488.7L1091.2 493.6L1090.3 489.5L1089.4 491.2L1088.5 488.8L1087.6 488.2L1086.7 488.8L1085.8 489.5L1084.9 488.8L1084.0 489.7L1083.1 488.0L1082.2 491.9L1081.3 491.3L1080.4 488.4L1079.5 489.8L1078.6 491.3L1077.7 489.5L1076.8 489.0L1075.9 489.9L1075.0 488.9L1074.1 489.0L1073.2 488.5L1072.3 486.8L1071.4 487.0L1070.5 488.1L1069.6 489.4L1068.7 488.4L1067.8 489.4L1066.9 488.2L1066.0 490.6L1065.1 487.9L1064.2 487.5L1063.3 487.9L1062.4 488.5L1061.5 488.1L1060.6 487.5L1059.7 489.9L1058.8 488.3L1057.9 488.1L1057.0 488.6L1056.1 491.5L1055.2 488.8L1054.3 488.3L1053.4 492.8L1052.5 488.8L1051.6 488.4L1050.7 489.6L1049.8 490.1L1048.9 489.2L1048.0 491.8L1047.1 489.2L1046.2 488.6L1045.3 489.8L1044.4 489.1L1043.5 488.0L1042.6 490.4L1041.7 492.5L1040.8 488.3L1039.9 488.8L1039.0 493.4L1038.1 491.7L1037.2 489.0L1036.3 488.7L1035.4 490.6L1034.5 488.5L1033.6 488.2L1032.7 488.1L1031.8 488.5L1030.9 487.2L1030.0 487.9L1029.1 488.0L1028.2 488.0L1027.3 487.5L1026.4 487.1L1025.5 487.2L1024.6 486.7L1023.7 486.6L1022.8 486.9L1021.9 486.4L1021.0 486.0L1020.1 486.1L1019.2 485.4L1018.3 485.8L1017.4 485.5L1016.5 486.4L1015.6 485.0L1014.7 485.1L1013.8 485.0L1012.9 484.8L1012.0 484.7L1011.1 484.7L1010.2 485.0L1009.3 484.5L1008.4 484.5L1007.5 484.4L1006.6 484.2L1005.7 484.3L1004.8 484.4L1003.9 484.5L1003.0 484.5L1002.1 484.4L1001.2 484.5L1000.3 484.5L999.4 486.0L998.5 485.0L997.6 486.4L996.7 485.7L995.8 486.1L994.9 485.6L994.0 485.4L993.1 485.6L992.2 486.0L991.3 486.4L990.4 486.6L989.5 486.7L988.6 486.4L987.7 486.0L986.8 488.1L985.9 486.1L985.0 486.9L984.1 486.7L983.2 487.0L982.3 486.7L981.4 490.1L980.5 487.6L979.6 488.1L978.7 488.1L977.8 489.8L976.9 487.6L976.0 488.5L975.1 488.5L974.2 490.0L973.3 488.8L972.4 488.1L971.5 487.6L970.6 488.5L969.7 491.0L968.8 488.8L967.9 490.5L967.0 488.5L966.1 488.0L965.2 487.5L964.3 487.4L963.4 488.9L962.5 487.6L961.6 487.4L960.7 486.4L959.8 486.7L958.9 487.0L958.0 487.5L957.1 487.4L956.2 490.1L955.3 490.2L954.4 490.6L953.5 487.5L952.6 487.9L951.7 486.8L950.8 488.3L949.9 487.1L949.0 486.1L948.1 488.1L947.2 486.8L946.3 486.8L945.4 487.5L944.5 486.9L943.6 487.3L942.7 487.1L941.8 491.1L940.9 487.2L940.0 488.6L939.1 489.6L938.2 487.8L937.3 490.2L936.4 488.5L935.5 489.0L934.6 488.2L933.7 488.8L932.8 488.6L931.9 489.8L931.0 491.0L930.1 489.2L929.2 491.2L928.3 488.6L927.4 488.9L926.5 490.2L925.6 488.4L924.7 490.4L923.8 490.1L922.9 490.2L922.0 489.5L921.1 490.0L920.2 491.1L919.3 489.9L918.4 489.3L917.5 490.6L916.6 494.7L915.7 490.5L914.8 490.0L913.9 490.9L913.0 489.7L912.1 489.7L911.2 489.5L910.3 489.9L909.4 491.4L908.5 488.8L907.6 488.9L906.7 489.5L905.8 489.5L904.9 488.0L904.0 489.4L903.1 493.0L902.2 488.4L901.3 488.2L900.4 488.0L899.5 491.1L898.6 487.3L897.7 487.3L896.8 487.8L895.9 487.1L895.0 487.8L894.1 486.9L893.2 487.4L892.3 487.2L891.4 486.4L890.5 487.0L889.6 486.6L888.7 487.3L887.8 486.6L886.9 486.9L886.0 486.5L885.1 487.1L884.2 486.6L883.3 486.7L882.4 486.9L881.5 486.4L880.6 485.8L879.7 486.0L878.8 487.7L877.9 486.3L877.0 486.2L876.1 487.3L875.2 485.9L874.3 485.9L873.4 485.6L872.5 486.0L871.6 486.1L870.7 485.6L869.8 485.8L868.9 485.6L868.0 485.5L867.1 485.9L866.2 485.7L865.3 485.2L864.4 485.0L863.5 484.9L862.6 484.9L861.7 484.5L860.8 484.2L859.9 484.0L859.0 484.3L858.1 484.1L857.2 483.7L856.3 483.7L855.4 483.7L854.5 483.7L853.6 483.7L852.7 483.7L851.8 483.7L850.9 483.7L850.0 483.7L849.1 483.7L848.2 484.0L847.3 484.0L846.4 483.7L845.5 483.7L844.6 483.7L843.7 483.7z" fill="#1b1d22"/><path d="M600.5 661.1L601.4 661.1L602.3 661.1L603.2 661.1L604.1 661.1L605.0 661.1L605.9 661.1L606.8 661.1L607.7 661.1L608.6 661.1L609.5 661.1L610.4 661.1L611.3 661.1L612.2 661.1L613.1 661.1L614.0 661.1L614.9 661.1L615.8 661.0L616.7 661.1L617.6 661.1L618.5 661.1L619.4 661.1L620.3 661.1L621.2 661.1L622.1 661.1L623.0 661.1L623.9 661.1L624.8 661.1L625.7 661.1L626.6 661.1L627.5 661.1L628.4 661.1L629.3 661.1L630.2 661.1L631.1 661.1L632.0 661.1L632.9 661.1L633.8 661.1L634.7 661.1L635.6 661.1L636.5 661.1L637.4 661.1L638.3 661.1L639.2 661.1L640.1 661.0L641.0 661.1L641.9 661.1L642.8 661.1L643.7 661.0L644.6 660.9L645.5 661.1L646.4 661.1L647.3 661.1L648.2 661.1L649.1 661.1L650.0 661.1L650.9 661.1L651.8 661.1L652.7 661.1L653.6 661.1L654.5 661.1L655.4 661.1L656.3 661.1L657.2 661.1L658.1 660.9L659.0 661.0L659.9 661.1L660.8 661.1L661.7 661.1L662.6 661.0L663.5 661.0L664.4 661.1L665.3 661.1L666.2 661.1L667.1 661.1L668.0 661.1L668.9 661.1L669.8 661.0L670.7 661.1L671.6 659.7L672.5 659.7L673.4 659.2L674.3 659.6L675.2 659.5L676.1 659.3L677.0 659.7L677.9 659.8L678.8 659.2L679.7 659.8L680.6 659.6L681.5 659.9L682.4 660.1L683.3 659.7L684.2 660.0L685.1 660.0L686.0 660.4L686.9 660.3L687.8 660.2L688.7 660.2L689.6 660.0L690.5 660.1L691.4 660.0L692.3 660.1L693.2 660.0L694.1 659.5L695.0 660.3L695.9 660.2L696.8 659.9L697.7 660.3L698.6 660.2L699.5 660.2L700.4 660.5L701.3 660.6L702.2 660.6L703.1 660.5L704.0 660.4L704.9 660.4L705.8 660.4L706.7 660.6L707.6 660.6L708.5 660.4L709.4 660.6L710.3 660.7L711.2 660.2L712.1 660.3L713.0 660.2L713.9 660.4L714.8 660.3L715.7 660.6L716.6 660.5L717.5 660.4L718.4 660.4L719.3 660.6L720.2 660.6L721.1 659.9L722.0 660.3L722.9 659.9L723.8 660.4L724.7 660.3L725.6 660.3L726.5 660.2L727.4 660.2L728.3 659.7L729.2 659.9L730.1 660.4L731.0 660.4L731.9 660.5L732.8 660.5L733.7 660.3L734.6 660.2L735.5 660.2L736.4 660.2L737.3 660.0L738.2 659.9L739.1 659.9L740.0 660.1L740.9 660.3L741.8 660.0L742.7 659.9L743.6 660.2L744.5 660.3L745.4 660.0L746.3 660.2L747.2 660.0L748.1 659.2L749.0 659.8L749.9 659.8L750.8 659.4L751.7 658.8L752.6 659.9L753.5 659.6L754.4 659.4L755.3 659.6L756.2 659.6L757.1 659.8L758.0 659.8L758.9 659.3L759.8 659.5L760.7 659.8L761.6 659.6L762.5 659.5L763.4 659.3L764.3 659.7L765.2 659.8L766.1 659.9L767.0 659.3L767.9 659.2L768.8 659.8L769.7 659.7L770.6 659.6L771.5 659.3L772.4 659.9L773.3 659.8L774.2 659.7L775.1 659.6L776.0 660.0L776.9 660.1L777.8 660.0L778.7 659.8L779.6 659.7L780.5 660.0L781.4 659.7L782.3 659.3L783.2 659.6L784.1 659.8L785.0 660.1L785.9 660.0L786.8 660.1L787.7 660.0L788.6 660.2L789.5 659.9L790.4 660.0L791.3 660.0L792.2 660.2L793.1 660.1L794.0 660.2L794.9 660.4L795.8 660.3L796.7 660.6L797.6 660.3L798.5 660.3L799.4 660.5L800.3 660.2L801.2 660.1L802.1 660.0L803.0 660.1L803.9 660.2L804.8 660.3L805.7 660.1L806.6 660.4L807.5 660.5L808.4 660.2L809.3 660.3L810.2 660.5L811.1 660.3L812.0 660.2L812.9 660.3L813.8 660.5L814.7 660.3L815.6 660.4L816.5 660.1L817.4 660.6L818.3 660.5L819.2 660.1L820.1 660.2L821.0 660.2L821.9 659.9L822.8 660.3L823.7 660.3L824.6 660.1L825.5 660.0L826.4 660.2L827.3 660.0L828.2 659.8L829.1 660.2L830.0 660.1L830.9 660.4L831.8 660.3L832.7 660.4L833.6 660.0L834.5 660.1L835.4 660.0L836.3 659.6L837.2 660.2L838.1 659.7L839.0 659.7L839.9 660.1L840.8 660.1L841.7 660.1L842.6 660.0L843.5 660.3L844.4 660.2L845.3 660.0L846.2 660.2L847.1 660.2L848.0 659.6L848.9 659.4L849.8 660.1L850.7 660.3L851.6 660.0L852.5 659.2L853.4 659.5L854.3 660.1L855.2 660.2L856.1 660.0L857.0 659.4L857.9 659.9L858.8 660.0L859.7 660.0L860.6 660.1L861.5 660.2L862.4 659.5L863.3 659.5L864.2 660.3L865.1 660.3L866.0 660.3L866.9 660.0L867.8 660.2L868.7 659.8L869.6 660.2L870.5 660.2L871.4 659.4L872.3 659.8L873.2 660.1L874.1 659.9L875.0 660.0L875.9 660.2L876.8 660.2L877.7 660.2L878.6 659.7L879.5 660.4L880.4 660.2L881.3 660.4L882.2 660.2L883.1 660.0L884.0 660.1L884.9 659.8L885.8 660.2L886.7 660.4L887.6 660.2L888.5 660.2L889.4 660.4L890.3 660.3L891.2 660.3L892.1 660.1L893.0 660.0L893.9 660.4L894.8 660.2L895.7 660.2L896.6 660.5L897.5 660.6L898.4 660.3L899.3 660.4L900.2 660.5L901.1 660.2L902.0 660.1L902.9 659.9L903.8 660.0L904.7 660.0L905.6 660.3L906.5 660.2L907.4 659.8L908.3 660.2L909.2 659.9L910.1 660.1L911.0 660.1L911.9 659.9L912.8 660.0L913.7 660.0L914.6 659.8L915.5 659.4L916.4 660.3L917.3 660.3L918.2 660.1L919.1 660.4L920.0 660.5L920.9 660.3L921.8 660.4L922.7 660.4L923.6 660.6L924.5 660.4L925.4 660.0L926.3 660.3L927.2 660.3L928.1 660.6L929.0 660.7L929.9 660.3L930.8 660.5L931.7 660.6L932.6 660.1L933.5 660.4L934.4 659.9L935.3 660.5L936.2 660.6L937.1 660.3L938.0 660.4L938.9 660.3L939.8 660.6L940.7 660.5L941.6 660.6L942.5 660.4L943.4 660.5L944.3 660.4L945.2 660.4L946.1 660.5L947.0 660.2L947.9 660.5L948.8 660.4L949.7 660.5L950.6 660.3L951.5 660.2L952.4 660.6L953.3 660.4L954.2 660.6L955.1 660.6L956.0 660.6L956.9 660.6L957.8 660.5L958.7 660.4L959.6 660.6L960.5 660.4L961.4 660.6L962.3 660.3L963.2 660.6L964.1 660.7L965.0 660.6L965.9 660.6L966.8 660.5L967.7 660.4L968.6 660.6L969.5 660.2L970.4 660.5L971.3 660.4L972.2 660.6L973.1 660.7L974.0 660.5L974.9 660.3L975.8 660.4L976.7 660.5L977.6 660.5L978.5 660.5L979.4 660.2L980.3 660.5L981.2 660.7L982.1 660.4L983.0 660.7L983.9 660.5L984.8 660.7L985.7 660.5L986.6 660.4L987.5 660.4L988.4 660.4L989.3 660.5L990.2 660.4L991.1 660.4L992.0 660.1L992.9 660.3L993.8 660.5L994.7 660.6L995.6 660.5L996.5 660.5L997.4 660.3L998.3 660.3L999.2 660.6L1000.1 660.7L1001.0 660.4L1001.9 660.7L1002.8 660.5L1003.7 660.3L1004.6 660.6L1005.5 660.2L1006.4 660.7L1007.3 660.7L1008.2 660.8L1009.1 660.6L1010.0 660.7L1010.9 660.3L1011.8 660.5L1012.7 660.7L1013.6 660.5L1014.5 660.7L1015.4 660.6L1016.3 660.7L1017.2 660.3L1018.1 660.6L1019.0 660.7L1019.9 660.6L1020.8 660.5L1021.7 660.8L1022.6 660.6L1023.5 660.8L1024.4 660.5L1025.3 660.6L1026.2 660.7L1027.1 660.8L1028.0 660.9L1028.9 660.8L1029.8 660.9L1030.7 660.9L1031.6 660.8L1032.5 660.9L1033.4 660.8L1034.3 660.9L1035.2 660.6L1036.1 660.9L1037.0 660.8L1037.9 660.8L1038.8 660.9L1039.7 660.8L1040.6 660.7L1041.5 660.9L1042.4 660.9L1043.3 660.8L1044.2 660.9L1045.1 660.8L1046.0 660.8L1046.9 660.8L1047.8 660.8L1048.7 660.8L1049.6 660.9L1050.5 660.8L1051.4 661.0L1052.3 660.9L1053.2 660.6L1054.1 660.9L1055.0 661.0L1055.9 660.9L1056.8 660.8L1057.7 660.9L1058.6 661.0L1059.5 660.9L1060.4 660.9L1061.3 661.0L1062.2 661.1L1063.1 661.1L1064.0 661.0L1064.9 661.0L1065.8 661.0L1066.7 661.0L1067.6 661.1L1068.5 661.0L1069.4 661.1L1070.3 661.1L1071.2 660.9L1072.1 661.0L1073.0 661.1L1073.9 661.1L1074.8 661.1L1075.7 661.1L1076.6 661.0L1077.5 661.1L1078.4 661.0L1079.3 661.1L1080.2 661.1L1081.1 661.1L1082.0 661.1L1082.9 661.1L1083.8 661.1L1084.7 661.1L1085.6 661.1L1086.5 661.1L1087.4 661.1L1088.3 661.1L1089.2 661.1L1090.1 661.1L1091.0 661.1L1091.9 661.1L1092.8 661.1L1093.7 661.1L1094.6 661.1L1095.5 661.1L1096.4 661.1L1097.3 661.1L1098.2 661.1L1099.1 661.1L1100.0 661.1L1100.9 661.1L1101.8 661.1L1102.7 661.1L1103.6 661.1L1104.5 661.1L1105.4 661.1L1106.3 661.1L1107.2 661.1L1108.1 661.1L1109.0 661.1L1109.9 661.1L1110.8 661.1L1111.7 661.1L1112.6 661.1L1113.5 661.1L1114.4 661.1L1115.3 661.1L1116.2 661.1L1117.1 661.1L1118.0 661.1L1118.9 661.1L1119.8 661.1L1120.7 661.1L1121.6 661.1L1122.5 661.1L1123.4 661.1L1124.3 661.1L1125.2 661.1L1126.1 661.1L1127.0 661.1L1127.9 661.1L1128.8 661.1L1129.7 661.1L1130.6 661.1L1131.5 661.1L1132.4 661.1L1133.3 661.1L1134.2 661.1L1135.1 661.1L1136.0 661.1L1136.9 661.1L1137.8 661.1L1138.7 661.1L1139.6 661.1L1140.5 661.1L1141.4 661.1L1142.3 661.1L1143.2 661.1L1144.1 661.1L1145.0 661.1L1145.9 661.1L1146.8 661.1L1147.7 661.1L1148.6 661.1L1149.5 661.1L1150.4 661.1L1151.3 661.1L1152.2 661.1L1153.1 661.1L1154.0 661.1L1154.9 661.1L1155.8 661.1L1156.7 661.1L1157.6 661.1L1158.5 661.1L1159.4 661.1L1160.3 661.1L1161.2 661.1L1162.1 661.1L1163.0 661.1L1163.9 661.1L1164.8 661.1L1165.7 661.1L1166.6 661.1L1167.5 661.1L1168.4 661.1L1169.3 661.0L1170.2 661.1L1171.1 661.1L1172.0 661.1L1172.9 661.1L1173.8 661.1L1174.7 661.1L1175.6 661.1L1176.5 661.1L1177.4 661.1L1178.3 661.1L1179.2 661.1L1180.1 661.1L1181.0 661.1L1181.9 661.1L1182.8 661.1L1183.7 661.1L1184.6 661.1L1185.5 661.1L1186.4 661.1L1187.3 661.1L1188.2 661.1L1189.1 661.1L1190.0 661.1L1190.9 661.0L1191.8 661.1L1192.7 661.1L1193.6 661.1L1194.5 661.1L1195.4 661.1L1196.3 661.1L1197.2 661.1L1198.1 661.1L1199.0 661.1L1199.9 661.1L1200.8 661.1L1201.7 661.1L1202.6 661.1L1203.5 661.1L1204.4 661.1L1205.3 661.1L1206.2 661.1L1207.1 661.1L1208.0 661.1L1208.9 661.1L1209.8 661.1L1210.7 661.1L1211.6 661.1L1212.5 661.1L1213.4 661.1L1214.3 661.1L1215.2 661.1L1216.1 661.1L1217.0 661.1L1217.9 661.1L1218.8 661.1L1219.7 661.1L1220.6 661.1L1221.5 661.1L1222.4 661.1L1223.3 661.1L1224.2 661.1L1225.1 661.1L1226.0 661.1L1226.9 661.1L1227.8 661.1L1228.7 661.1L1229.6 661.1L1230.5 661.1L1231.4 661.1L1232.3 661.1L1233.2 661.1L1234.1 661.1L1235.0 661.1L1235.9 661.1L1236.8 661.1L1237.7 661.1L1238.6 661.1L1239.5 661.1L1240.4 661.1L1241.3 661.1L1242.2 661.1L1243.1 661.1L1244.0 661.1L1244.9 661.1L1245.8 661.1L1246.7 661.1L1247.6 661.1L1248.5 661.1L1249.4 661.1L1250.3 661.1L1251.2 661.1L1252.1 661.1L1253.0 661.1L1253.9 661.1L1254.8 661.1L1255.7 661.1L1256.6 661.1L1257.5 661.1L1258.4 661.1L1259.3 661.1L1260.2 661.1L1260.2 661.9L1259.3 661.9L1258.4 661.9L1257.5 661.9L1256.6 661.9L1255.7 661.9L1254.8 661.9L1253.9 661.9L1253.0 661.9L1252.1 661.9L1251.2 661.9L1250.3 661.9L1249.4 661.9L1248.5 661.9L1247.6 661.9L1246.7 661.9L1245.8 661.9L1244.9 661.9L1244.0 661.9L1243.1 661.9L1242.2 661.9L1241.3 661.9L1240.4 661.9L1239.5 661.9L1238.6 661.9L1237.7 661.9L1236.8 661.9L1235.9 661.9L1235.0 661.9L1234.1 661.9L1233.2 661.9L1232.3 661.9L1231.4 661.9L1230.5 661.9L1229.6 661.9L1228.7 661.9L1227.8 661.9L1226.9 661.9L1226.0 661.9L1225.1 661.9L1224.2 661.9L1223.3 661.9L1222.4 661.9L1221.5 661.9L1220.6 661.9L1219.7 661.9L1218.8 661.9L1217.9 661.9L1217.0 661.9L1216.1 661.9L1215.2 661.9L1214.3 661.9L1213.4 661.9L1212.5 661.9L1211.6 661.9L1210.7 661.9L1209.8 661.9L1208.9 661.9L1208.0 661.9L1207.1 661.9L1206.2 661.9L1205.3 661.9L1204.4 661.9L1203.5 661.9L1202.6 661.9L1201.7 661.9L1200.8 661.9L1199.9 661.9L1199.0 661.9L1198.1 661.9L1197.2 661.9L1196.3 661.9L1195.4 661.9L1194.5 661.9L1193.6 661.9L1192.7 661.9L1191.8 661.9L1190.9 661.9L1190.0 661.9L1189.1 661.9L1188.2 661.9L1187.3 661.9L1186.4 661.9L1185.5 661.9L1184.6 661.9L1183.7 661.9L1182.8 661.9L1181.9 661.9L1181.0 661.9L1180.1 661.9L1179.2 661.9L1178.3 661.9L1177.4 661.9L1176.5 661.9L1175.6 661.9L1174.7 661.9L1173.8 661.9L1172.9 661.9L1172.0 661.9L1171.1 661.9L1170.2 661.9L1169.3 661.9L1168.4 661.9L1167.5 661.9L1166.6 661.9L1165.7 661.9L1164.8 661.9L1163.9 661.9L1163.0 661.9L1162.1 661.9L1161.2 661.9L1160.3 661.9L1159.4 661.9L1158.5 661.9L1157.6 661.9L1156.7 661.9L1155.8 661.9L1154.9 661.9L1154.0 661.9L1153.1 661.9L1152.2 661.9L1151.3 661.9L1150.4 661.9L1149.5 661.9L1148.6 661.9L1147.7 661.9L1146.8 661.9L1145.9 661.9L1145.0 661.9L1144.1 661.9L1143.2 661.9L1142.3 661.9L1141.4 661.9L1140.5 661.9L1139.6 661.9L1138.7 661.9L1137.8 661.9L1136.9 661.9L1136.0 661.9L1135.1 661.9L1134.2 661.9L1133.3 661.9L1132.4 661.9L1131.5 661.9L1130.6 661.9L1129.7 661.9L1128.8 661.9L1127.9 661.9L1127.0 661.9L1126.1 661.9L1125.2 661.9L1124.3 661.9L1123.4 661.9L1122.5 661.9L1121.6 661.9L1120.7 661.9L1119.8 661.9L1118.9 661.9L1118.0 661.9L1117.1 661.9L1116.2 661.9L1115.3 661.9L1114.4 661.9L1113.5 661.9L1112.6 661.9L1111.7 661.9L1110.8 661.9L1109.9 661.9L1109.0 661.9L1108.1 661.9L1107.2 661.9L1106.3 661.9L1105.4 661.9L1104.5 661.9L1103.6 661.9L1102.7 661.9L1101.8 661.9L1100.9 661.9L1100.0 661.9L1099.1 661.9L1098.2 661.9L1097.3 661.9L1096.4 661.9L1095.5 661.9L1094.6 661.9L1093.7 661.9L1092.8 661.9L1091.9 661.9L1091.0 661.9L1090.1 661.9L1089.2 662.0L1088.3 661.9L1087.4 661.9L1086.5 661.9L1085.6 661.9L1084.7 661.9L1083.8 661.9L1082.9 661.9L1082.0 661.9L1081.1 662.0L1080.2 661.9L1079.3 661.9L1078.4 661.9L1077.5 661.9L1076.6 661.9L1075.7 662.0L1074.8 662.1L1073.9 661.9L1073.0 661.9L1072.1 661.9L1071.2 661.9L1070.3 661.9L1069.4 662.0L1068.5 662.1L1067.6 662.0L1066.7 662.0L1065.8 661.9L1064.9 661.9L1064.0 661.9L1063.1 662.0L1062.2 662.1L1061.3 662.0L1060.4 661.9L1059.5 661.9L1058.6 662.0L1057.7 661.9L1056.8 662.0L1055.9 662.0L1055.0 662.0L1054.1 662.0L1053.2 662.0L1052.3 662.1L1051.4 662.1L1050.5 662.0L1049.6 662.0L1048.7 662.0L1047.8 662.0L1046.9 662.0L1046.0 661.9L1045.1 662.2L1044.2 662.0L1043.3 662.0L1042.4 662.2L1041.5 662.3L1040.6 662.1L1039.7 662.1L1038.8 662.2L1037.9 662.1L1037.0 662.1L1036.1 662.2L1035.2 662.2L1034.3 662.2L1033.4 662.1L1032.5 662.3L1031.6 662.2L1030.7 662.3L1029.8 662.6L1028.9 662.2L1028.0 662.3L1027.1 662.3L1026.2 662.1L1025.3 662.2L1024.4 662.3L1023.5 662.2L1022.6 662.1L1021.7 662.4L1020.8 662.2L1019.9 662.1L1019.0 662.3L1018.1 662.6L1017.2 662.2L1016.3 662.3L1015.4 662.2L1014.5 662.3L1013.6 662.2L1012.7 662.3L1011.8 662.3L1010.9 662.2L1010.0 662.4L1009.1 662.3L1008.2 662.5L1007.3 662.8L1006.4 662.4L1005.5 662.2L1004.6 662.3L1003.7 662.6L1002.8 662.8L1001.9 662.6L1001.0 662.3L1000.1 662.4L999.2 662.7L998.3 662.6L997.4 662.5L996.5 662.5L995.6 662.3L994.7 662.7L993.8 662.3L992.9 662.3L992.0 662.2L991.1 662.2L990.2 662.5L989.3 662.3L988.4 662.3L987.5 662.4L986.6 662.3L985.7 662.5L984.8 662.5L983.9 662.4L983.0 662.7L982.1 662.8L981.2 662.5L980.3 662.3L979.4 662.4L978.5 662.3L977.6 662.3L976.7 662.3L975.8 662.3L974.9 662.4L974.0 662.4L973.1 662.7L972.2 662.4L971.3 662.3L970.4 662.3L969.5 662.5L968.6 662.5L967.7 662.4L966.8 662.5L965.9 662.5L965.0 662.7L964.1 662.5L963.2 662.7L962.3 662.7L961.4 662.6L960.5 662.5L959.6 662.4L958.7 662.4L957.8 662.4L956.9 662.8L956.0 662.5L955.1 662.6L954.2 662.5L953.3 662.3L952.4 662.5L951.5 662.4L950.6 662.4L949.7 662.9L948.8 662.5L947.9 662.4L947.0 662.9L946.1 662.4L945.2 662.4L944.3 662.4L943.4 662.5L942.5 662.4L941.6 662.9L940.7 662.5L939.8 662.6L938.9 662.5L938.0 662.5L937.1 662.6L936.2 662.6L935.3 662.5L934.4 662.4L933.5 662.5L932.6 662.8L931.7 662.6L930.8 662.6L929.9 662.6L929.0 662.8L928.1 662.7L927.2 662.9L926.3 662.5L925.4 662.7L924.5 662.6L923.6 662.8L922.7 662.8L921.8 662.6L920.9 663.3L920.0 662.7L919.1 663.0L918.2 662.7L917.3 662.7L916.4 662.6L915.5 662.4L914.6 662.3L913.7 662.4L912.8 662.4L911.9 662.4L911.0 663.0L910.1 662.6L909.2 662.5L908.3 662.6L907.4 662.6L906.5 662.7L905.6 662.7L904.7 662.5L903.8 662.6L902.9 662.5L902.0 662.9L901.1 662.7L900.2 663.1L899.3 662.8L898.4 662.9L897.5 663.4L896.6 663.5L895.7 662.8L894.8 662.8L893.9 662.9L893.0 663.0L892.1 662.9L891.2 662.8L890.3 663.2L889.4 662.9L888.5 662.8L887.6 662.8L886.7 663.0L885.8 662.8L884.9 662.7L884.0 662.7L883.1 662.7L882.2 662.9L881.3 663.0L880.4 663.4L879.5 663.1L878.6 663.2L877.7 662.8L876.8 663.0L875.9 663.2L875.0 662.7L874.1 662.9L873.2 663.0L872.3 662.5L871.4 662.7L870.5 662.8L869.6 663.0L868.7 662.7L867.8 662.9L866.9 663.4L866.0 662.9L865.1 663.3L864.2 662.9L863.3 662.8L862.4 663.3L861.5 662.8L860.6 662.8L859.7 662.7L858.8 662.8L857.9 662.7L857.0 663.4L856.1 662.6L855.2 662.8L854.3 662.7L853.4 662.9L852.5 662.7L851.6 662.7L850.7 662.8L849.8 663.2L848.9 663.0L848.0 662.7L847.1 662.8L846.2 662.8L845.3 663.1L844.4 662.7L843.5 662.8L842.6 662.5L841.7 662.7L840.8 662.6L839.9 662.7L839.0 662.7L838.1 662.5L837.2 662.8L836.3 662.5L835.4 663.0L834.5 662.6L833.6 662.7L832.7 662.9L831.8 662.7L830.9 662.7L830.0 662.7L829.1 662.5L828.2 662.4L827.3 662.4L826.4 662.5L825.5 662.4L824.6 662.8L823.7 662.6L822.8 662.7L821.9 663.1L821.0 662.7L820.1 663.3L819.2 663.2L818.3 662.8L817.4 663.2L816.5 662.8L815.6 662.8L814.7 662.6L813.8 663.3L812.9 662.6L812.0 662.4L811.1 662.6L810.2 663.2L809.3 662.6L808.4 662.7L807.5 662.8L806.6 662.7L805.7 663.0L804.8 663.0L803.9 662.8L803.0 663.2L802.1 662.4L801.2 663.0L800.3 662.9L799.4 663.4L798.5 662.8L797.6 662.8L796.7 663.7L795.8 663.0L794.9 663.0L794.0 662.9L793.1 663.2L792.2 663.1L791.3 662.8L790.4 663.0L789.5 662.8L788.6 663.0L787.7 662.9L786.8 663.1L785.9 663.3L785.0 663.3L784.1 662.8L783.2 663.1L782.3 663.1L781.4 662.8L780.5 663.1L779.6 662.9L778.7 663.2L777.8 663.3L776.9 663.4L776.0 663.3L775.1 663.1L774.2 663.7L773.3 663.4L772.4 663.2L771.5 663.0L770.6 663.0L769.7 663.2L768.8 663.3L767.9 663.0L767.0 663.1L766.1 663.5L765.2 663.3L764.3 663.1L763.4 662.8L762.5 662.9L761.6 663.4L760.7 663.2L759.8 663.0L758.9 662.9L758.0 663.1L757.1 663.0L756.2 663.1L755.3 662.8L754.4 662.7L753.5 662.8L752.6 663.0L751.7 662.7L750.8 662.8L749.9 662.8L749.0 662.8L748.1 662.9L747.2 662.8L746.3 663.4L745.4 663.0L744.5 663.1L743.6 662.9L742.7 662.6L741.8 662.7L740.9 662.8L740.0 662.8L739.1 662.4L738.2 662.4L737.3 662.5L736.4 662.8L735.5 663.1L734.6 662.5L733.7 662.6L732.8 663.2L731.9 662.8L731.0 663.1L730.1 662.6L729.2 662.5L728.3 662.8L727.4 662.4L726.5 662.4L725.6 662.5L724.7 662.3L723.8 662.6L722.9 662.4L722.0 662.4L721.1 662.4L720.2 662.7L719.3 662.5L718.4 662.4L717.5 662.8L716.6 662.5L715.7 662.9L714.8 662.3L713.9 662.5L713.0 662.6L712.1 662.3L711.2 662.5L710.3 662.7L709.4 662.6L708.5 662.6L707.6 662.6L706.7 662.6L705.8 662.8L704.9 662.4L704.0 662.7L703.1 662.8L702.2 662.8L701.3 662.9L700.4 662.7L699.5 662.8L698.6 662.6L697.7 662.5L696.8 662.4L695.9 662.4L695.0 662.6L694.1 662.4L693.2 662.4L692.3 662.5L691.4 662.5L690.5 662.8L689.6 662.7L688.7 662.9L687.8 662.7L686.9 662.9L686.0 663.2L685.1 662.9L684.2 663.0L683.3 663.0L682.4 663.0L681.5 663.0L680.6 662.8L679.7 663.0L678.8 662.9L677.9 663.2L677.0 663.4L676.1 663.7L675.2 663.7L674.3 663.6L673.4 663.7L672.5 663.8L671.6 664.7L670.7 662.0L669.8 661.9L668.9 662.0L668.0 661.9L667.1 661.9L666.2 662.0L665.3 661.9L664.4 662.1L663.5 661.9L662.6 661.9L661.7 661.9L660.8 662.0L659.9 661.9L659.0 661.9L658.1 661.9L657.2 661.9L656.3 661.9L655.4 662.0L654.5 661.9L653.6 662.0L652.7 662.0L651.8 661.9L650.9 661.9L650.0 662.1L649.1 662.0L648.2 661.9L647.3 661.9L646.4 661.9L645.5 661.9L644.6 661.9L643.7 661.9L642.8 662.0L641.9 662.0L641.0 661.9L640.1 661.9L639.2 661.9L638.3 661.9L637.4 661.9L636.5 661.9L635.6 661.9L634.7 661.9L633.8 661.9L632.9 661.9L632.0 661.9L631.1 661.9L630.2 661.9L629.3 661.9L628.4 661.9L627.5 661.9L626.6 661.9L625.7 661.9L624.8 661.9L623.9 661.9L623.0 661.9L622.1 661.9L621.2 661.9L620.3 661.9L619.4 661.9L618.5 661.9L617.6 661.9L616.7 661.9L615.8 661.9L614.9 661.9L614.0 661.9L613.1 661.9L612.2 661.9L611.3 661.9L610.4 661.9L609.5 661.9L608.6 661.9L607.7 661.9L606.8 661.9L605.9 661.9L605.0 661.9L604.1 661.9L603.2 661.9L602.3 661.9L601.4 661.9L600.5 661.9z" fill="#1b1d22"/><path d="M600.5 688.6L601.4 688.6L602.3 688.6L603.2 688.6L604.1 688.6L605.0 688.6L605.9 688.6L606.8 688.6L607.7 688.6L608.6 688.6L609.5 688.6L610.4 688.6L611.3 688.6L612.2 688.6L613.1 688.6L614.0 688.6L614.9 688.6L615.8 688.6L616.7 688.6L617.6 688.6L618.5 688.6L619.4 688.6L620.3 688.6L621.2 688.6L622.1 688.6L623.0 688.6L623.9 688.6L624.8 688.6L625.7 688.6L626.6 688.6L627.5 688.6L628.4 688.6L629.3 688.6L630.2 688.6L631.1 688.6L632.0 688.6L632.9 688.6L633.8 688.6L634.7 688.6L635.6 688.6L636.5 688.6L637.4 688.6L638.3 688.6L639.2 688.6L640.1 688.6L641.0 688.5L641.9 688.4L642.8 688.6L643.7 688.6L644.6 688.6L645.5 688.5L646.4 688.6L647.3 688.6L648.2 688.6L649.1 688.6L650.0 688.6L650.9 688.5L651.8 688.6L652.7 688.6L653.6 688.6L654.5 688.5L655.4 688.5L656.3 688.6L657.2 688.6L658.1 688.5L659.0 688.4L659.9 688.6L660.8 688.6L661.7 688.6L662.6 688.5L663.5 688.6L664.4 688.6L665.3 688.6L666.2 688.6L667.1 688.6L668.0 688.6L668.9 688.5L669.8 688.6L670.7 688.6L671.6 686.0L672.5 686.5L673.4 686.7L674.3 686.5L675.2 687.1L676.1 686.8L677.0 687.1L677.9 687.1L678.8 687.5L679.7 687.3L680.6 687.3L681.5 687.5L682.4 687.5L683.3 687.8L684.2 687.7L685.1 687.7L686.0 687.6L686.9 687.9L687.8 688.0L688.7 688.0L689.6 687.8L690.5 687.1L691.4 687.1L692.3 687.8L693.2 687.7L694.1 688.0L695.0 687.8L695.9 687.3L696.8 688.1L697.7 688.1L698.6 688.2L699.5 688.2L700.4 688.2L701.3 688.2L702.2 687.5L703.1 688.0L704.0 688.0L704.9 688.0L705.8 688.0L706.7 688.1L707.6 687.8L708.5 687.9L709.4 687.9L710.3 687.8L711.2 687.8L712.1 687.8L713.0 688.0L713.9 688.0L714.8 688.0L715.7 687.8L716.6 688.0L717.5 688.1L718.4 688.1L719.3 688.1L720.2 688.0L721.1 687.8L722.0 687.8L722.9 687.8L723.8 687.8L724.7 687.9L725.6 687.7L726.5 687.5L727.4 687.7L728.3 687.7L729.2 687.9L730.1 687.8L731.0 687.4L731.9 687.8L732.8 687.8L733.7 687.9L734.6 687.7L735.5 687.9L736.4 687.9L737.3 687.9L738.2 687.8L739.1 687.5L740.0 687.2L740.9 687.4L741.8 686.8L742.7 687.3L743.6 687.2L744.5 687.4L745.4 687.4L746.3 687.4L747.2 687.6L748.1 687.4L749.0 687.5L749.9 687.6L750.8 687.5L751.7 686.7L752.6 687.4L753.5 686.8L754.4 686.8L755.3 686.8L756.2 686.3L757.1 687.2L758.0 687.1L758.9 687.0L759.8 687.3L760.7 687.3L761.6 687.6L762.5 687.3L763.4 687.0L764.3 686.8L765.2 687.3L766.1 686.8L767.0 686.8L767.9 687.3L768.8 687.4L769.7 687.2L770.6 687.5L771.5 687.0L772.4 687.5L773.3 687.0L774.2 686.6L775.1 686.4L776.0 687.0L776.9 687.0L777.8 687.3L778.7 687.1L779.6 687.2L780.5 687.5L781.4 687.3L782.3 687.3L783.2 687.6L784.1 687.4L785.0 687.4L785.9 687.3L786.8 687.3L787.7 687.6L788.6 687.8L789.5 687.8L790.4 687.6L791.3 687.7L792.2 687.8L793.1 687.6L794.0 686.9L794.9 687.5L795.8 687.5L796.7 687.6L797.6 687.6L798.5 687.8L799.4 688.0L800.3 688.0L801.2 687.7L802.1 687.2L803.0 687.6L803.9 687.5L804.8 687.8L805.7 687.8L806.6 687.5L807.5 687.6L808.4 687.5L809.3 687.5L810.2 687.9L811.1 687.9L812.0 688.0L812.9 688.2L813.8 688.1L814.7 687.9L815.6 687.8L816.5 687.9L817.4 687.9L818.3 688.1L819.2 688.0L820.1 687.9L821.0 687.9L821.9 687.4L822.8 688.0L823.7 687.8L824.6 687.7L825.5 687.8L826.4 687.6L827.3 687.8L828.2 687.8L829.1 687.7L830.0 687.8L830.9 687.8L831.8 687.9L832.7 688.0L833.6 687.7L834.5 688.1L835.4 687.2L836.3 687.7L837.2 687.5L838.1 687.7L839.0 687.6L839.9 687.6L840.8 687.5L841.7 687.6L842.6 687.5L843.5 687.4L844.4 687.4L845.3 687.2L846.2 687.4L847.1 687.4L848.0 687.1L848.9 687.3L849.8 687.6L850.7 686.9L851.6 687.1L852.5 687.3L853.4 687.5L854.3 687.4L855.2 687.1L856.1 687.7L857.0 687.9L857.9 687.6L858.8 687.3L859.7 687.8L860.6 687.6L861.5 687.5L862.4 687.6L863.3 687.7L864.2 687.7L865.1 687.5L866.0 687.7L866.9 687.9L867.8 687.9L868.7 687.6L869.6 687.8L870.5 687.8L871.4 687.9L872.3 687.7L873.2 687.5L874.1 687.0L875.0 687.6L875.9 687.9L876.8 687.8L877.7 687.6L878.6 687.7L879.5 687.6L880.4 687.8L881.3 687.3L882.2 687.8L883.1 687.7L884.0 687.9L884.9 687.4L885.8 687.8L886.7 687.6L887.6 687.4L888.5 687.6L889.4 687.3L890.3 687.8L891.2 687.9L892.1 687.7L893.0 687.5L893.9 687.2L894.8 687.5L895.7 687.6L896.6 687.2L897.5 687.7L898.4 687.7L899.3 687.6L900.2 687.9L901.1 687.1L902.0 687.7L902.9 687.8L903.8 687.7L904.7 688.0L905.6 688.0L906.5 687.4L907.4 688.1L908.3 688.0L909.2 688.0L910.1 687.9L911.0 687.4L911.9 687.8L912.8 687.8L913.7 687.8L914.6 687.9L915.5 687.8L916.4 687.9L917.3 687.9L918.2 688.0L919.1 687.4L920.0 688.0L920.9 687.9L921.8 687.8L922.7 687.5L923.6 687.8L924.5 687.4L925.4 687.4L926.3 687.9L927.2 688.1L928.1 688.1L929.0 687.6L929.9 687.8L930.8 688.1L931.7 688.0L932.6 687.7L933.5 687.9L934.4 687.8L935.3 687.8L936.2 687.5L937.1 687.8L938.0 687.9L938.9 687.7L939.8 688.1L940.7 688.2L941.6 688.2L942.5 688.1L943.4 688.1L944.3 688.2L945.2 688.0L946.1 688.0L947.0 688.0L947.9 687.9L948.8 687.8L949.7 687.7L950.6 687.9L951.5 688.1L952.4 688.0L953.3 688.2L954.2 688.0L955.1 688.1L956.0 688.2L956.9 687.8L957.8 688.2L958.7 688.0L959.6 687.9L960.5 687.9L961.4 687.7L962.3 688.0L963.2 688.0L964.1 688.2L965.0 688.0L965.9 688.0L966.8 687.9L967.7 687.8L968.6 687.9L969.5 688.0L970.4 688.0L971.3 687.6L972.2 687.9L973.1 687.5L974.0 687.9L974.9 688.0L975.8 688.0L976.7 687.6L977.6 688.0L978.5 687.7L979.4 688.0L980.3 687.7L981.2 688.1L982.1 688.0L983.0 687.9L983.9 687.8L984.8 688.0L985.7 687.9L986.6 687.9L987.5 687.9L988.4 688.1L989.3 688.1L990.2 687.9L991.1 687.7L992.0 688.1L992.9 688.0L993.8 688.0L994.7 687.6L995.6 688.2L996.5 688.2L997.4 688.0L998.3 688.0L999.2 687.9L1000.1 688.0L1001.0 687.8L1001.9 687.9L1002.8 688.1L1003.7 688.2L1004.6 688.1L1005.5 688.1L1006.4 688.2L1007.3 688.3L1008.2 688.3L1009.1 688.1L1010.0 687.8L1010.9 688.0L1011.8 688.2L1012.7 688.0L1013.6 688.1L1014.5 688.3L1015.4 688.2L1016.3 688.2L1017.2 688.3L1018.1 688.2L1019.0 688.1L1019.9 688.2L1020.8 688.3L1021.7 688.1L1022.6 688.0L1023.5 688.3L1024.4 688.4L1025.3 688.3L1026.2 688.3L1027.1 688.3L1028.0 688.2L1028.9 688.3L1029.8 688.3L1030.7 688.3L1031.6 688.4L1032.5 688.3L1033.4 688.0L1034.3 688.0L1035.2 688.3L1036.1 688.2L1037.0 688.4L1037.9 688.1L1038.8 688.1L1039.7 688.4L1040.6 688.2L1041.5 688.3L1042.4 688.3L1043.3 688.1L1044.2 688.4L1045.1 688.4L1046.0 688.3L1046.9 688.4L1047.8 688.4L1048.7 688.4L1049.6 688.4L1050.5 688.3L1051.4 688.2L1052.3 688.2L1053.2 688.4L1054.1 688.4L1055.0 688.2L1055.9 688.3L1056.8 688.5L1057.7 688.5L1058.6 688.5L1059.5 688.4L1060.4 688.4L1061.3 688.5L1062.2 688.5L1063.1 688.5L1064.0 688.4L1064.9 688.6L1065.8 688.4L1066.7 688.6L1067.6 688.6L1068.5 688.6L1069.4 688.6L1070.3 688.6L1071.2 688.5L1072.1 688.5L1073.0 688.5L1073.9 688.5L1074.8 688.5L1075.7 688.6L1076.6 688.5L1077.5 688.6L1078.4 688.6L1079.3 688.6L1080.2 688.6L1081.1 688.6L1082.0 688.6L1082.9 688.6L1083.8 688.6L1084.7 688.6L1085.6 688.6L1086.5 688.6L1087.4 688.6L1088.3 688.6L1089.2 688.6L1090.1 688.6L1091.0 688.6L1091.9 688.6L1092.8 688.6L1093.7 688.6L1094.6 688.6L1095.5 688.6L1096.4 688.6L1097.3 688.6L1098.2 688.6L1099.1 688.6L1100.0 688.6L1100.9 688.6L1101.8 688.6L1102.7 688.6L1103.6 688.6L1104.5 688.6L1105.4 688.6L1106.3 688.6L1107.2 688.6L1108.1 688.6L1109.0 688.6L1109.9 688.6L1110.8 688.6L1111.7 688.6L1112.6 688.6L1113.5 688.6L1114.4 688.6L1115.3 688.6L1116.2 688.6L1117.1 688.6L1118.0 688.6L1118.9 688.6L1119.8 688.6L1120.7 688.6L1121.6 688.6L1122.5 688.6L1123.4 688.6L1124.3 688.6L1125.2 688.6L1126.1 688.6L1127.0 688.6L1127.9 688.6L1128.8 688.6L1129.7 688.6L1130.6 688.6L1131.5 688.6L1132.4 688.6L1133.3 688.6L1134.2 688.6L1135.1 688.6L1136.0 688.6L1136.9 688.6L1137.8 688.6L1138.7 688.6L1139.6 688.6L1140.5 688.6L1141.4 688.6L1142.3 688.6L1143.2 688.6L1144.1 688.6L1145.0 688.6L1145.9 688.6L1146.8 688.6L1147.7 688.6L1148.6 688.6L1149.5 688.6L1150.4 688.6L1151.3 688.6L1152.2 688.6L1153.1 688.6L1154.0 688.6L1154.9 688.6L1155.8 688.6L1156.7 688.6L1157.6 688.6L1158.5 688.6L1159.4 688.6L1160.3 688.6L1161.2 688.6L1162.1 688.6L1163.0 688.6L1163.9 688.6L1164.8 688.6L1165.7 688.6L1166.6 688.6L1167.5 688.6L1168.4 688.6L1169.3 688.6L1170.2 688.6L1171.1 688.6L1172.0 688.6L1172.9 688.6L1173.8 688.6L1174.7 688.6L1175.6 688.6L1176.5 688.6L1177.4 688.6L1178.3 688.6L1179.2 688.6L1180.1 688.6L1181.0 688.6L1181.9 688.6L1182.8 688.6L1183.7 688.6L1184.6 688.6L1185.5 688.6L1186.4 688.6L1187.3 688.6L1188.2 688.6L1189.1 688.6L1190.0 688.6L1190.9 688.6L1191.8 688.6L1192.7 688.6L1193.6 688.6L1194.5 688.6L1195.4 688.6L1196.3 688.6L1197.2 688.6L1198.1 688.6L1199.0 688.6L1199.9 688.6L1200.8 688.6L1201.7 688.6L1202.6 688.6L1203.5 688.6L1204.4 688.6L1205.3 688.6L1206.2 688.6L1207.1 688.6L1208.0 688.6L1208.9 688.6L1209.8 688.6L1210.7 688.6L1211.6 688.6L1212.5 688.6L1213.4 688.6L1214.3 688.6L1215.2 688.6L1216.1 688.6L1217.0 688.6L1217.9 688.6L1218.8 688.6L1219.7 688.6L1220.6 688.6L1221.5 688.6L1222.4 688.6L1223.3 688.6L1224.2 688.6L1225.1 688.6L1226.0 688.6L1226.9 688.6L1227.8 688.6L1228.7 688.6L1229.6 688.6L1230.5 688.6L1231.4 688.6L1232.3 688.6L1233.2 688.6L1234.1 688.6L1235.0 688.6L1235.9 688.6L1236.8 688.6L1237.7 688.6L1238.6 688.6L1239.5 688.6L1240.4 688.6L1241.3 688.6L1242.2 688.6L1243.1 688.6L1244.0 688.6L1244.9 688.6L1245.8 688.6L1246.7 688.6L1247.6 688.6L1248.5 688.6L1249.4 688.6L1250.3 688.6L1251.2 688.6L1252.1 688.6L1253.0 688.6L1253.9 688.6L1254.8 688.6L1255.7 688.6L1256.6 688.6L1257.5 688.6L1258.4 688.6L1259.3 688.6L1260.2 688.6L1260.2 689.4L1259.3 689.4L1258.4 689.4L1257.5 689.4L1256.6 689.4L1255.7 689.4L1254.8 689.4L1253.9 689.4L1253.0 689.4L1252.1 689.4L1251.2 689.4L1250.3 689.4L1249.4 689.4L1248.5 689.4L1247.6 689.4L1246.7 689.4L1245.8 689.4L1244.9 689.4L1244.0 689.4L1243.1 689.4L1242.2 689.4L1241.3 689.4L1240.4 689.4L1239.5 689.4L1238.6 689.4L1237.7 689.4L1236.8 689.4L1235.9 689.4L1235.0 689.4L1234.1 689.4L1233.2 689.4L1232.3 689.4L1231.4 689.4L1230.5 689.4L1229.6 689.4L1228.7 689.4L1227.8 689.4L1226.9 689.4L1226.0 689.4L1225.1 689.4L1224.2 689.4L1223.3 689.4L1222.4 689.4L1221.5 689.4L1220.6 689.4L1219.7 689.4L1218.8 689.4L1217.9 689.4L1217.0 689.4L1216.1 689.4L1215.2 689.4L1214.3 689.4L1213.4 689.4L1212.5 689.4L1211.6 689.4L1210.7 689.4L1209.8 689.4L1208.9 689.4L1208.0 689.4L1207.1 689.4L1206.2 689.4L1205.3 689.4L1204.4 689.4L1203.5 689.4L1202.6 689.4L1201.7 689.4L1200.8 689.4L1199.9 689.4L1199.0 689.4L1198.1 689.4L1197.2 689.4L1196.3 689.4L1195.4 689.4L1194.5 689.4L1193.6 689.4L1192.7 689.4L1191.8 689.4L1190.9 689.4L1190.0 689.4L1189.1 689.4L1188.2 689.4L1187.3 689.4L1186.4 689.4L1185.5 689.4L1184.6 689.4L1183.7 689.4L1182.8 689.4L1181.9 689.4L1181.0 689.4L1180.1 689.4L1179.2 689.4L1178.3 689.4L1177.4 689.4L1176.5 689.4L1175.6 689.4L1174.7 689.4L1173.8 689.4L1172.9 689.4L1172.0 689.4L1171.1 689.4L1170.2 689.4L1169.3 689.4L1168.4 689.4L1167.5 689.4L1166.6 689.4L1165.7 689.4L1164.8 689.4L1163.9 689.4L1163.0 689.4L1162.1 689.4L1161.2 689.4L1160.3 689.4L1159.4 689.4L1158.5 689.4L1157.6 689.4L1156.7 689.4L1155.8 689.4L1154.9 689.4L1154.0 689.4L1153.1 689.4L1152.2 689.4L1151.3 689.4L1150.4 689.4L1149.5 689.4L1148.6 689.4L1147.7 689.4L1146.8 689.4L1145.9 689.4L1145.0 689.4L1144.1 689.4L1143.2 689.4L1142.3 689.4L1141.4 689.4L1140.5 689.4L1139.6 689.4L1138.7 689.4L1137.8 689.4L1136.9 689.4L1136.0 689.4L1135.1 689.4L1134.2 689.4L1133.3 689.4L1132.4 689.4L1131.5 689.4L1130.6 689.4L1129.7 689.4L1128.8 689.4L1127.9 689.4L1127.0 689.4L1126.1 689.4L1125.2 689.4L1124.3 689.4L1123.4 689.4L1122.5 689.4L1121.6 689.4L1120.7 689.4L1119.8 689.4L1118.9 689.4L1118.0 689.4L1117.1 689.4L1116.2 689.4L1115.3 689.4L1114.4 689.4L1113.5 689.4L1112.6 689.4L1111.7 689.4L1110.8 689.4L1109.9 689.4L1109.0 689.4L1108.1 689.4L1107.2 689.4L1106.3 689.4L1105.4 689.4L1104.5 689.4L1103.6 689.4L1102.7 689.4L1101.8 689.4L1100.9 689.4L1100.0 689.4L1099.1 689.4L1098.2 689.4L1097.3 689.4L1096.4 689.4L1095.5 689.4L1094.6 689.4L1093.7 689.4L1092.8 689.4L1091.9 689.4L1091.0 689.4L1090.1 689.4L1089.2 689.4L1088.3 689.4L1087.4 689.4L1086.5 689.4L1085.6 689.4L1084.7 689.4L1083.8 689.4L1082.9 689.4L1082.0 689.4L1081.1 689.4L1080.2 689.4L1079.3 689.4L1078.4 689.4L1077.5 689.4L1076.6 689.4L1075.7 689.4L1074.8 689.4L1073.9 689.4L1073.0 689.4L1072.1 689.5L1071.2 689.4L1070.3 689.4L1069.4 689.5L1068.5 689.5L1067.6 689.5L1066.7 689.5L1065.8 689.4L1064.9 689.6L1064.0 689.7L1063.1 689.5L1062.2 689.4L1061.3 689.5L1060.4 689.4L1059.5 689.4L1058.6 689.5L1057.7 689.5L1056.8 689.5L1055.9 689.6L1055.0 689.5L1054.1 689.4L1053.2 689.5L1052.3 689.4L1051.4 689.5L1050.5 689.5L1049.6 689.6L1048.7 689.6L1047.8 689.5L1046.9 689.5L1046.0 689.9L1045.1 689.6L1044.2 689.6L1043.3 689.5L1042.4 689.5L1041.5 689.5L1040.6 689.6L1039.7 689.6L1038.8 690.0L1037.9 689.7L1037.0 689.6L1036.1 689.6L1035.2 689.7L1034.3 689.7L1033.4 689.6L1032.5 690.0L1031.6 689.7L1030.7 689.8L1029.8 689.7L1028.9 689.6L1028.0 689.7L1027.1 689.7L1026.2 689.8L1025.3 689.8L1024.4 689.8L1023.5 689.8L1022.6 689.6L1021.7 689.7L1020.8 689.8L1019.9 690.1L1019.0 689.7L1018.1 689.9L1017.2 689.9L1016.3 689.8L1015.4 689.9L1014.5 689.9L1013.6 690.0L1012.7 690.0L1011.8 689.9L1010.9 689.7L1010.0 689.7L1009.1 689.9L1008.2 689.9L1007.3 689.9L1006.4 690.0L1005.5 689.8L1004.6 689.8L1003.7 690.2L1002.8 689.8L1001.9 689.8L1001.0 689.7L1000.1 689.8L999.2 690.0L998.3 689.8L997.4 690.1L996.5 690.2L995.6 689.9L994.7 689.8L993.8 689.8L992.9 690.1L992.0 689.9L991.1 689.9L990.2 689.9L989.3 690.2L988.4 690.3L987.5 689.8L986.6 690.0L985.7 689.7L984.8 689.8L983.9 689.9L983.0 689.8L982.1 690.0L981.2 689.9L980.3 690.0L979.4 690.0L978.5 689.9L977.6 689.8L976.7 689.9L975.8 689.8L974.9 689.8L974.0 689.7L973.1 689.8L972.2 689.9L971.3 689.9L970.4 689.8L969.5 690.1L968.6 689.8L967.7 689.7L966.8 689.8L965.9 690.3L965.0 689.9L964.1 690.0L963.2 690.0L962.3 689.9L961.4 690.1L960.5 689.8L959.6 689.9L958.7 689.9L957.8 690.4L956.9 689.9L956.0 690.0L955.1 690.0L954.2 690.2L953.3 690.1L952.4 690.0L951.5 690.0L950.6 690.1L949.7 690.1L948.8 689.9L947.9 690.0L947.0 690.0L946.1 690.3L945.2 690.3L944.3 690.1L943.4 690.1L942.5 690.1L941.6 690.2L940.7 690.7L939.8 690.2L938.9 690.5L938.0 690.0L937.1 690.0L936.2 689.9L935.3 689.9L934.4 689.9L933.5 690.1L932.6 690.0L931.7 690.1L930.8 690.3L929.9 690.8L929.0 690.2L928.1 690.2L927.2 690.2L926.3 690.1L925.4 690.1L924.5 690.0L923.6 690.0L922.7 690.2L921.8 690.3L920.9 690.1L920.0 690.2L919.1 690.0L918.2 690.2L917.3 690.5L916.4 690.2L915.5 690.1L914.6 690.4L913.7 690.1L912.8 690.1L911.9 690.3L911.0 690.3L910.1 690.3L909.2 690.3L908.3 690.7L907.4 690.5L906.5 690.4L905.6 690.3L904.7 690.4L903.8 690.4L902.9 690.2L902.0 690.3L901.1 690.2L900.2 690.6L899.3 690.1L898.4 690.2L897.5 690.5L896.6 690.6L895.7 690.1L894.8 690.0L893.9 690.3L893.0 690.1L892.1 690.4L891.2 690.4L890.3 690.9L889.4 690.1L888.5 690.2L887.6 690.2L886.7 690.2L885.8 690.4L884.9 690.7L884.0 690.7L883.1 690.4L882.2 690.5L881.3 690.4L880.4 690.4L879.5 690.3L878.6 690.9L877.7 690.3L876.8 690.4L875.9 690.5L875.0 690.4L874.1 690.7L873.2 690.2L872.3 691.0L871.4 690.5L870.5 690.4L869.6 691.1L868.7 690.3L867.8 690.5L866.9 690.6L866.0 690.9L865.1 690.6L864.2 690.5L863.3 690.4L862.4 690.3L861.5 690.2L860.6 690.4L859.7 690.5L858.8 690.5L857.9 690.2L857.0 690.5L856.1 690.3L855.2 690.1L854.3 690.6L853.4 690.1L852.5 689.9L851.6 690.0L850.7 690.4L849.8 690.2L848.9 689.9L848.0 690.0L847.1 690.5L846.2 689.9L845.3 690.0L844.4 690.5L843.5 690.0L842.6 690.1L841.7 690.1L840.8 690.0L839.9 690.1L839.0 690.1L838.1 690.2L837.2 690.0L836.3 690.1L835.4 690.3L834.5 690.9L833.6 690.5L832.7 690.4L831.8 690.3L830.9 690.1L830.0 690.1L829.1 690.0L828.2 690.1L827.3 690.1L826.4 690.0L825.5 690.1L824.6 690.1L823.7 690.2L822.8 690.6L821.9 690.2L821.0 690.5L820.1 690.2L819.2 690.2L818.3 690.5L817.4 690.3L816.5 690.1L815.6 690.0L814.7 690.2L813.8 690.6L812.9 690.4L812.0 690.3L811.1 690.2L810.2 690.2L809.3 690.1L808.4 689.9L807.5 689.9L806.6 690.0L805.7 690.1L804.8 690.5L803.9 689.9L803.0 690.4L802.1 690.1L801.2 690.2L800.3 690.4L799.4 690.8L798.5 690.3L797.6 690.4L796.7 690.3L795.8 690.1L794.9 690.1L794.0 690.1L793.1 690.4L792.2 690.4L791.3 690.4L790.4 690.4L789.5 690.5L788.6 690.7L787.7 690.6L786.8 690.7L785.9 690.6L785.0 690.4L784.1 690.4L783.2 690.8L782.3 690.4L781.4 691.1L780.5 690.7L779.6 690.4L778.7 690.6L777.8 690.5L776.9 690.3L776.0 690.5L775.1 690.5L774.2 690.4L773.3 690.5L772.4 691.0L771.5 690.7L770.6 691.4L769.7 690.6L768.8 690.8L767.9 690.8L767.0 690.5L766.1 690.4L765.2 690.7L764.3 690.6L763.4 690.4L762.5 690.7L761.6 691.1L760.7 690.7L759.8 690.6L758.9 690.5L758.0 690.4L757.1 690.5L756.2 690.3L755.3 690.3L754.4 690.5L753.5 690.7L752.6 690.5L751.7 690.3L750.8 690.6L749.9 690.5L749.0 690.4L748.1 690.3L747.2 690.6L746.3 690.4L745.4 690.2L744.5 690.2L743.6 690.0L742.7 690.2L741.8 690.0L740.9 690.0L740.0 690.5L739.1 690.2L738.2 690.6L737.3 690.3L736.4 690.3L735.5 690.5L734.6 690.4L733.7 690.3L732.8 690.1L731.9 690.0L731.0 690.4L730.1 690.3L729.2 690.0L728.3 690.1L727.4 689.8L726.5 690.2L725.6 689.9L724.7 690.1L723.8 689.8L722.9 689.9L722.0 689.8L721.1 689.9L720.2 690.1L719.3 690.1L718.4 690.1L717.5 690.1L716.6 690.1L715.7 690.1L714.8 689.9L713.9 690.0L713.0 690.0L712.1 690.0L711.2 689.8L710.3 689.8L709.4 689.9L708.5 690.0L707.6 689.9L706.7 690.1L705.8 690.0L704.9 690.2L704.0 690.4L703.1 690.0L702.2 690.1L701.3 690.5L700.4 690.3L699.5 690.3L698.6 690.3L697.7 690.3L696.8 690.2L695.9 690.1L695.0 690.0L694.1 690.2L693.2 690.0L692.3 690.1L691.4 690.1L690.5 690.6L689.6 690.5L688.7 691.1L687.8 690.5L686.9 690.5L686.0 690.3L685.1 690.5L684.2 690.6L683.3 690.6L682.4 690.6L681.5 690.5L680.6 690.5L679.7 690.5L678.8 691.0L677.9 690.9L677.0 691.3L676.1 690.5L675.2 690.8L674.3 690.4L673.4 690.7L672.5 690.8L671.6 691.2L670.7 689.4L669.8 689.5L668.9 689.4L668.0 689.5L667.1 689.6L666.2 689.4L665.3 689.4L664.4 689.4L663.5 689.5L662.6 689.4L661.7 689.5L660.8 689.5L659.9 689.4L659.0 689.4L658.1 689.4L657.2 689.6L656.3 689.4L655.4 689.4L654.5 689.4L653.6 689.4L652.7 689.4L651.8 689.5L650.9 689.5L650.0 689.5L649.1 689.4L648.2 689.4L647.3 689.4L646.4 689.6L645.5 689.4L644.6 689.4L643.7 689.6L642.8 689.5L641.9 689.6L641.0 689.4L640.1 689.4L639.2 689.4L638.3 689.4L637.4 689.4L636.5 689.4L635.6 689.4L634.7 689.4L633.8 689.4L632.9 689.4L632.0 689.4L631.1 689.4L630.2 689.4L629.3 689.4L628.4 689.4L627.5 689.4L626.6 689.4L625.7 689.4L624.8 689.4L623.9 689.4L623.0 689.4L622.1 689.4L621.2 689.4L620.3 689.4L619.4 689.4L618.5 689.4L617.6 689.4L616.7 689.4L615.8 689.4L614.9 689.4L614.0 689.4L613.1 689.4L612.2 689.4L611.3 689.4L610.4 689.4L609.5 689.4L608.6 689.4L607.7 689.4L606.8 689.4L605.9 689.4L605.0 689.4L604.1 689.4L603.2 689.4L602.3 689.4L601.4 689.4L600.5 689.4z" fill="#1b1d22"/><path d="M844.1 744.5L844.7 744.0L845.3 744.0L845.9 743.7L846.5 743.8L847.1 743.9L847.7 743.9L848.3 743.8L848.9 743.7L849.5 743.7L850.1 743.1L850.7 743.7L851.3 743.7L851.9 743.0L852.5 743.8L853.1 743.8L853.7 744.1L854.3 743.9L854.9 743.0L855.5 743.9L856.1 743.4L856.7 743.9L857.3 743.2L857.9 743.7L858.5 742.1L859.1 743.4L859.7 743.8L860.3 743.9L860.9 743.0L861.5 743.6L862.1 743.2L862.7 743.8L863.3 743.7L863.9 743.7L864.5 743.7L865.1 743.4L865.7 743.5L866.3 742.7L866.9 741.7L867.5 742.7L868.1 741.4L868.7 741.1L869.3 736.9L869.9 739.6L870.5 736.3L871.1 738.7L871.7 737.9L872.3 739.4L872.9 741.2L873.5 738.5L874.1 739.9L874.7 738.7L875.3 734.4L875.9 735.6L876.5 732.4L877.1 739.1L877.7 741.0L878.3 743.3L878.9 744.0L879.5 743.0L880.1 741.5L880.7 741.0L881.3 736.2L881.9 737.5L882.5 736.8L883.1 738.6L883.7 740.5L884.3 740.5L884.9 742.7L885.5 740.7L886.1 741.4L886.7 737.9L887.3 736.1L887.9 737.8L888.5 740.4L889.1 740.7L889.7 741.5L890.3 742.1L890.9 742.5L891.5 743.0L892.1 743.5L892.7 743.6L893.3 741.5L893.9 742.9L894.5 742.5L895.1 741.1L895.7 740.4L896.3 741.2L896.9 742.0L897.5 739.8L898.1 740.7L898.7 743.5L899.3 742.8L899.9 743.3L900.5 743.3L901.1 743.5L901.7 743.8L902.3 743.7L902.9 742.6L903.5 743.7L904.1 742.5L904.7 743.5L905.3 743.5L905.9 743.3L906.5 743.4L907.1 743.0L907.7 743.0L908.3 739.0L908.9 739.2L909.5 738.9L910.1 733.4L910.7 738.9L911.3 737.6L911.9 740.0L912.5 742.8L913.1 742.1L913.7 740.3L914.3 738.6L914.9 736.8L915.5 737.6L916.1 733.8L916.7 739.8L917.3 742.2L917.9 742.9L918.5 741.2L919.1 741.8L919.7 740.8L920.3 741.1L920.9 740.8L921.5 741.2L922.1 739.1L922.7 740.3L923.3 741.5L923.9 741.3L924.5 742.1L925.1 743.3L925.7 743.5L926.3 743.6L926.9 743.4L927.5 743.5L928.1 743.7L928.7 744.2L929.3 743.9L929.9 744.3L930.5 744.3L931.1 744.4L931.7 744.5L932.3 744.0L932.9 744.2L933.5 742.9L934.1 744.2L934.7 744.1L935.3 743.9L935.9 743.0L936.5 743.9L937.1 742.9L937.7 744.4L938.3 743.1L938.9 743.9L939.5 743.1L940.1 744.3L940.7 744.4L941.3 744.0L941.9 744.1L942.5 744.0L943.1 743.8L943.7 742.7L944.3 744.0L944.9 743.7L945.5 744.1L946.1 743.9L946.7 743.9L947.3 743.7L947.9 742.3L948.5 743.3L949.1 743.4L949.7 743.8L950.3 742.8L950.9 743.2L951.5 743.8L952.1 743.8L952.7 743.6L953.3 743.6L953.9 743.4L954.5 743.4L955.1 743.2L955.7 743.2L956.3 743.4L956.9 742.6L957.5 743.8L958.1 743.7L958.7 743.1L959.3 741.1L959.9 739.7L960.5 739.6L961.1 739.0L961.7 740.2L962.3 742.3L962.9 742.5L963.5 743.4L964.1 743.6L964.7 743.3L965.3 742.0L965.9 741.9L966.5 740.8L967.1 740.7L967.7 738.5L968.3 741.1L968.9 742.1L969.5 742.2L970.1 743.8L970.7 743.7L971.3 744.3L971.9 744.4L972.5 744.6L973.1 744.5L973.7 744.5L974.3 744.2L974.9 744.5L975.5 744.5L976.1 744.4L976.7 744.3L977.3 744.3L977.9 744.2L978.5 744.4L979.1 743.4L979.7 744.5L980.3 744.3L980.9 744.4L981.5 744.4L982.1 744.5L982.7 744.5L983.3 743.9L983.9 743.5L984.5 743.5L985.1 744.1L985.7 743.5L986.3 744.2L986.9 743.6L987.5 744.1L988.1 743.4L988.7 742.8L989.3 743.3L989.9 743.5L990.5 743.7L991.1 744.0L991.7 743.1L992.3 743.9L992.9 742.3L993.5 743.6L994.1 741.8L994.7 742.1L995.3 740.0L995.9 739.5L996.5 740.0L997.1 739.1L997.7 742.9L998.3 743.4L998.9 743.7L999.5 743.3L1000.1 743.5L1000.7 743.6L1001.3 743.9L1001.9 743.7L1002.5 743.2L1003.1 743.2L1003.7 743.3L1004.3 741.6L1004.9 743.5L1005.5 743.6L1006.1 743.2L1006.7 743.9L1007.3 743.8L1007.9 744.0L1008.5 744.0L1009.1 744.0L1009.7 743.6L1010.3 744.1L1010.9 743.8L1011.5 743.4L1012.1 742.4L1012.7 743.9L1013.3 744.1L1013.9 743.0L1014.5 743.6L1015.1 744.1L1015.7 744.1L1016.3 744.1L1016.9 744.0L1017.5 744.0L1018.1 744.0L1018.7 743.9L1019.3 743.0L1019.9 743.6L1020.5 743.2L1021.1 742.7L1021.7 740.5L1022.3 740.0L1022.9 741.4L1023.5 741.3L1024.1 741.6L1024.7 739.5L1025.3 742.0L1025.9 742.4L1026.5 742.4L1027.1 742.9L1027.7 743.4L1028.3 742.4L1028.9 743.6L1029.5 744.0L1030.1 744.3L1030.7 744.0L1031.3 744.1L1031.9 741.5L1032.5 742.5L1033.1 740.7L1033.7 740.5L1034.3 740.0L1034.9 740.9L1035.5 742.3L1036.1 743.3L1036.7 743.9L1037.3 744.0L1037.9 744.1L1038.5 744.3L1039.1 744.1L1039.7 743.9L1040.3 744.1L1040.9 744.2L1041.5 743.9L1042.1 744.1L1042.7 744.0L1043.3 743.8L1043.9 743.8L1044.5 743.2L1045.1 742.6L1045.7 738.5L1046.3 740.5L1046.9 739.3L1047.5 735.0L1048.1 739.7L1048.7 737.8L1049.3 741.3L1049.9 742.2L1050.5 742.2L1051.1 743.0L1051.7 743.0L1052.3 741.9L1052.9 740.5L1053.5 738.0L1054.1 737.3L1054.7 739.4L1055.3 739.9L1055.9 742.0L1056.5 742.0L1057.1 740.7L1057.7 741.7L1058.3 741.3L1058.9 741.7L1059.5 741.6L1060.1 741.8L1060.7 741.1L1061.3 740.9L1061.9 741.3L1062.5 742.3L1063.1 741.6L1063.7 743.9L1064.3 743.8L1064.9 743.5L1065.5 743.9L1066.1 743.8L1066.7 743.9L1067.3 744.1L1067.9 744.2L1068.5 743.8L1069.1 744.2L1069.7 743.8L1070.3 744.0L1070.9 743.8L1071.5 744.0L1072.1 743.7L1072.7 743.6L1073.3 741.6L1073.9 742.9L1074.5 738.9L1075.1 740.0L1075.7 735.4L1076.3 735.4L1076.9 739.2L1077.5 741.3L1078.1 741.0L1078.7 743.1L1079.3 743.2L1079.9 742.5L1080.5 743.5L1081.1 742.7L1081.7 742.6L1082.3 742.1L1082.9 740.6L1083.5 739.8L1084.1 738.6L1084.7 739.1L1085.3 741.9L1085.9 742.9L1086.5 740.8L1087.1 743.2L1087.7 743.3L1088.3 743.6L1088.9 743.1L1089.5 742.7L1090.1 743.4L1090.7 743.8L1091.3 741.9L1091.9 741.7L1092.5 743.5L1093.1 743.7L1093.7 743.8L1094.3 741.5L1094.9 743.5L1095.5 743.6L1096.1 742.9L1096.7 742.6L1097.3 742.6L1097.9 741.9L1098.5 741.4L1099.1 741.3L1099.7 739.8L1100.3 741.1L1100.9 741.4L1101.5 742.7L1102.1 743.1L1102.7 743.6L1103.3 744.0L1103.9 743.1L1104.5 744.6L1105.1 744.6L1105.7 744.4L1106.3 744.3L1106.9 744.3L1107.5 744.5L1108.1 744.4L1108.7 744.3L1109.3 744.7L1109.9 744.5L1110.5 744.4L1111.1 744.2L1111.7 744.5L1112.3 744.5L1112.9 743.7L1113.5 744.3L1114.1 744.4L1114.7 744.4L1115.3 744.4L1115.9 744.3L1116.5 743.5L1117.1 743.6L1117.7 742.5L1118.3 742.4L1118.9 742.1L1119.5 740.5L1120.1 740.8L1120.7 739.7L1121.3 735.7L1121.9 736.2L1122.5 741.6L1123.1 741.4L1123.7 740.3L1124.3 741.1L1124.9 738.1L1125.5 734.4L1126.1 732.4L1126.7 734.9L1127.3 739.7L1127.9 742.1L1128.5 742.8L1129.1 742.4L1129.7 741.9L1130.3 741.3L1130.9 737.4L1131.5 739.5L1132.1 739.4L1132.7 740.4L1133.3 741.3L1133.9 741.4L1134.5 742.3L1135.1 742.7L1135.7 743.7L1136.3 743.9L1136.9 743.9L1137.5 744.1L1138.1 743.9L1138.7 743.7L1139.3 742.9L1139.9 742.4L1140.5 740.7L1141.1 739.5L1141.7 737.2L1142.3 736.6L1142.9 737.9L1143.5 740.2L1144.1 743.2L1144.7 743.6L1145.3 743.6L1145.9 743.0L1146.5 742.0L1147.1 741.9L1147.7 741.9L1148.3 739.8L1148.9 738.4L1149.5 741.8L1150.1 742.2L1150.7 743.1L1151.3 743.5L1151.9 743.5L1152.5 743.5L1153.1 743.5L1153.7 744.0L1154.3 744.1L1154.9 742.8L1155.5 743.8L1156.1 744.3L1156.7 743.3L1157.3 744.1L1157.9 744.3L1158.5 743.8L1159.1 743.9L1159.7 743.8L1160.3 743.3L1160.9 741.3L1161.5 742.4L1162.1 742.1L1162.7 740.8L1163.3 739.6L1163.9 737.3L1164.5 740.1L1165.1 741.0L1165.7 742.2L1166.3 742.9L1166.9 742.9L1167.5 743.4L1168.1 743.4L1168.7 743.5L1169.3 742.6L1169.9 736.5L1170.5 735.7L1171.1 734.8L1171.7 737.0L1172.3 740.0L1172.9 742.4L1173.5 743.1L1174.1 742.3L1174.7 741.7L1175.3 741.2L1175.9 741.2L1176.5 738.5L1177.1 741.6L1177.7 739.0L1178.3 741.0L1178.9 741.6L1179.5 742.0L1180.1 742.3L1180.7 742.4L1181.3 743.2L1181.9 743.7L1182.5 744.1L1183.1 744.1L1183.7 744.5L1184.3 744.3L1184.9 744.1L1185.5 744.1L1186.1 744.3L1186.7 743.7L1187.3 744.1L1187.9 744.3L1188.5 744.4L1189.1 744.5L1189.7 744.4L1190.3 744.4L1190.9 744.4L1191.5 744.2L1192.1 744.5L1192.7 744.4L1193.3 743.9L1193.9 743.6L1194.5 742.5L1195.1 742.2L1195.7 742.4L1196.3 741.8L1196.9 742.2L1197.5 743.2L1198.1 743.7L1198.7 744.0L1199.3 744.0L1199.9 743.9L1200.5 744.7L1201.1 744.3L1201.7 743.6L1202.3 743.7L1202.9 744.4L1203.5 742.7L1204.1 742.2L1204.7 740.5L1205.3 740.6L1205.9 739.2L1206.5 740.7L1207.1 740.4L1207.7 741.5L1208.3 742.5L1208.9 743.2L1209.5 742.5L1210.1 743.9L1210.7 742.4L1211.3 742.8L1211.9 742.9L1212.5 742.5L1213.1 741.6L1213.7 736.7L1214.3 740.9L1214.9 741.4L1215.5 741.2L1216.1 741.8L1216.7 742.8L1217.3 742.8L1217.9 742.6L1218.5 743.5L1219.1 743.4L1219.7 743.4L1220.3 743.7L1220.9 744.0L1221.5 744.0L1222.1 744.0L1222.7 743.6L1223.3 743.5L1223.9 743.9L1224.5 744.1L1225.1 744.3L1225.7 744.3L1226.3 743.6L1226.9 744.4L1227.5 743.2L1228.1 744.1L1228.7 744.0L1229.3 744.1L1229.9 743.6L1230.5 744.0L1231.1 744.2L1231.7 744.0L1232.3 744.3L1232.9 744.1L1233.5 744.2L1234.1 744.2L1234.7 744.0L1235.3 742.9L1235.9 744.3L1236.5 744.3L1237.1 744.1L1237.7 743.8L1238.3 743.4L1238.9 743.1L1239.5 740.8L1240.1 740.4L1240.7 738.3L1241.3 739.8L1241.9 739.5L1242.5 738.8L1243.1 740.4L1243.7 741.6L1244.3 742.4L1244.9 742.8L1245.5 743.3L1246.1 743.5L1246.7 743.7L1247.3 743.5L1247.9 743.0L1248.5 742.5L1249.1 743.0L1249.7 742.8L1250.3 742.8L1250.9 742.4L1251.5 742.3L1252.1 742.1L1252.7 740.7L1253.3 741.4L1253.9 739.7L1254.5 740.0L1255.1 738.8L1255.7 742.2L1256.3 741.5L1256.9 742.3L1257.5 743.2L1258.1 743.0L1258.7 743.3L1259.3 742.3L1259.9 743.2L1260.5 743.6L1261.1 743.9L1261.7 743.6L1262.3 743.3L1262.9 743.4L1263.5 743.2L1264.1 743.4L1264.7 743.6L1265.3 743.7L1265.9 744.0L1266.5 743.9L1267.1 743.9L1267.7 743.4L1268.3 742.7L1268.9 742.0L1269.5 739.2L1270.1 740.9L1270.7 741.8L1271.3 742.6L1271.9 743.0L1272.5 743.4L1273.1 744.1L1273.7 743.9L1274.3 744.4L1274.9 744.5L1275.5 744.6L1276.1 744.5L1276.7 744.2L1277.3 744.8L1277.9 744.7L1278.5 744.2L1279.1 743.8L1279.7 744.5L1280.3 744.5L1280.9 744.6L1281.5 744.7L1282.1 744.7L1282.7 744.2L1283.3 743.4L1283.9 738.0L1284.5 737.8L1285.1 737.8L1285.7 737.2L1286.3 741.1L1286.9 742.6L1287.5 740.4L1288.1 742.6L1288.7 739.0L1289.3 739.0L1289.9 741.0L1290.5 741.7L1291.1 742.4L1291.7 742.4L1292.3 743.0L1292.9 744.0L1293.5 743.8L1294.1 744.1L1294.7 743.4L1295.3 742.5L1295.9 742.2L1296.5 742.7L1297.1 742.4L1297.7 742.1L1298.3 740.2L1298.9 741.8L1299.5 741.8L1300.1 741.7L1300.7 742.4L1301.3 740.3L1301.9 743.1L1302.5 743.2L1303.1 743.5L1303.7 741.8L1304.3 744.1L1304.9 744.3L1305.5 744.4L1306.1 744.1L1306.7 744.4L1307.3 744.3L1307.9 744.2L1308.5 744.2L1309.1 744.2L1309.7 744.4L1310.3 744.2L1310.9 744.2L1311.5 744.2L1312.1 744.2L1312.7 744.3L1313.3 744.4L1313.9 744.0L1314.5 744.7L1315.1 744.6L1315.7 744.1L1316.3 744.6L1316.9 744.7L1317.5 744.7L1318.1 744.9L1318.7 745.0L1319.3 745.1L1319.9 745.1L1320.5 745.1L1321.1 745.1L1321.7 745.1L1322.3 745.1L1322.9 745.2L1323.5 745.2L1324.1 745.2L1324.7 745.2L1325.3 745.2L1325.9 745.2L1326.5 745.2L1327.1 745.2L1327.7 745.2L1328.3 745.2L1328.9 745.2L1329.5 745.2L1330.1 745.2L1330.1 746.0L1329.5 746.0L1328.9 746.0L1328.3 746.0L1327.7 746.1L1327.1 746.0L1326.5 746.0L1325.9 746.0L1325.3 746.0L1324.7 746.0L1324.1 746.0L1323.5 746.0L1322.9 746.1L1322.3 746.0L1321.7 746.0L1321.1 746.1L1320.5 746.4L1319.9 746.6L1319.3 746.2L1318.7 746.5L1318.1 746.2L1317.5 746.2L1316.9 746.2L1316.3 746.2L1315.7 746.3L1315.1 746.3L1314.5 746.5L1313.9 746.4L1313.3 746.4L1312.7 746.4L1312.1 746.8L1311.5 746.5L1310.9 746.6L1310.3 746.7L1309.7 747.0L1309.1 746.8L1308.5 747.6L1307.9 746.9L1307.3 747.1L1306.7 747.2L1306.1 747.1L1305.5 747.4L1304.9 747.6L1304.3 747.4L1303.7 747.2L1303.1 747.4L1302.5 747.7L1301.9 748.7L1301.3 748.4L1300.7 749.6L1300.1 749.6L1299.5 750.1L1298.9 751.0L1298.3 750.4L1297.7 749.6L1297.1 751.4L1296.5 748.9L1295.9 748.0L1295.3 749.6L1294.7 748.5L1294.1 747.9L1293.5 747.5L1292.9 748.2L1292.3 749.7L1291.7 749.8L1291.1 751.5L1290.5 752.2L1289.9 752.1L1289.3 751.2L1288.7 749.9L1288.1 749.9L1287.5 748.0L1286.9 748.1L1286.3 749.9L1285.7 752.9L1285.1 759.8L1284.5 753.4L1283.9 750.5L1283.3 748.1L1282.7 746.6L1282.1 746.6L1281.5 746.9L1280.9 747.2L1280.3 747.0L1279.7 746.3L1279.1 746.5L1278.5 746.4L1277.9 746.6L1277.3 746.7L1276.7 746.6L1276.1 746.6L1275.5 746.7L1274.9 746.7L1274.3 746.8L1273.7 746.9L1273.1 747.0L1272.5 747.2L1271.9 748.6L1271.3 748.7L1270.7 751.0L1270.1 749.5L1269.5 751.7L1268.9 748.8L1268.3 748.7L1267.7 749.5L1267.1 747.6L1266.5 747.5L1265.9 748.2L1265.3 747.8L1264.7 747.4L1264.1 747.1L1263.5 747.4L1262.9 747.0L1262.3 747.1L1261.7 747.7L1261.1 748.8L1260.5 748.3L1259.9 747.3L1259.3 747.5L1258.7 747.5L1258.1 749.4L1257.5 749.7L1256.9 748.4L1256.3 748.9L1255.7 750.0L1255.1 750.0L1254.5 749.7L1253.9 749.6L1253.3 750.8L1252.7 751.5L1252.1 749.8L1251.5 748.8L1250.9 747.9L1250.3 749.6L1249.7 747.2L1249.1 747.1L1248.5 747.2L1247.9 748.0L1247.3 747.1L1246.7 747.3L1246.1 747.3L1245.5 749.2L1244.9 747.9L1244.3 748.8L1243.7 749.3L1243.1 750.9L1242.5 749.9L1241.9 749.8L1241.3 750.2L1240.7 751.9L1240.1 749.1L1239.5 750.0L1238.9 749.6L1238.3 747.8L1237.7 748.3L1237.1 747.2L1236.5 747.6L1235.9 748.6L1235.3 747.3L1234.7 747.0L1234.1 747.2L1233.5 747.2L1232.9 747.4L1232.3 747.4L1231.7 747.1L1231.1 747.3L1230.5 747.3L1229.9 747.5L1229.3 747.3L1228.7 748.8L1228.1 747.3L1227.5 748.1L1226.9 748.0L1226.3 747.6L1225.7 747.9L1225.1 747.6L1224.5 747.9L1223.9 747.3L1223.3 746.9L1222.7 747.1L1222.1 747.4L1221.5 747.7L1220.9 747.7L1220.3 747.2L1219.7 747.1L1219.1 747.3L1218.5 747.5L1217.9 748.1L1217.3 747.8L1216.7 748.5L1216.1 749.6L1215.5 751.9L1214.9 752.6L1214.3 749.5L1213.7 751.4L1213.1 749.6L1212.5 749.8L1211.9 750.4L1211.3 748.6L1210.7 748.3L1210.1 747.8L1209.5 747.6L1208.9 747.3L1208.3 749.3L1207.7 750.6L1207.1 749.6L1206.5 751.6L1205.9 755.7L1205.3 750.7L1204.7 748.7L1204.1 750.0L1203.5 747.6L1202.9 747.3L1202.3 747.1L1201.7 746.8L1201.1 747.0L1200.5 747.2L1199.9 747.1L1199.3 746.8L1198.7 746.9L1198.1 747.4L1197.5 748.3L1196.9 748.5L1196.3 749.0L1195.7 751.0L1195.1 748.5L1194.5 748.2L1193.9 747.3L1193.3 746.7L1192.7 746.7L1192.1 746.7L1191.5 746.4L1190.9 746.5L1190.3 746.5L1189.7 747.1L1189.1 747.1L1188.5 746.8L1187.9 746.7L1187.3 746.7L1186.7 746.8L1186.1 747.3L1185.5 748.2L1184.9 747.0L1184.3 747.2L1183.7 748.0L1183.1 747.7L1182.5 747.4L1181.9 747.5L1181.3 747.4L1180.7 747.4L1180.1 747.8L1179.5 748.2L1178.9 749.1L1178.3 749.1L1177.7 749.6L1177.1 751.1L1176.5 753.3L1175.9 749.9L1175.3 749.1L1174.7 750.5L1174.1 749.2L1173.5 748.8L1172.9 749.0L1172.3 750.6L1171.7 754.3L1171.1 761.1L1170.5 756.9L1169.9 751.9L1169.3 749.4L1168.7 748.1L1168.1 747.9L1167.5 748.4L1166.9 747.9L1166.3 748.8L1165.7 749.6L1165.1 753.3L1164.5 750.6L1163.9 750.2L1163.3 750.4L1162.7 749.2L1162.1 749.1L1161.5 748.2L1160.9 747.5L1160.3 747.4L1159.7 747.6L1159.1 748.6L1158.5 748.0L1157.9 747.7L1157.3 747.4L1156.7 748.4L1156.1 748.7L1155.5 747.3L1154.9 747.2L1154.3 747.0L1153.7 747.6L1153.1 747.0L1152.5 747.1L1151.9 747.5L1151.3 749.5L1150.7 748.1L1150.1 749.3L1149.5 750.6L1148.9 750.4L1148.3 751.6L1147.7 752.3L1147.1 754.4L1146.5 749.7L1145.9 752.1L1145.3 750.0L1144.7 748.3L1144.1 748.8L1143.5 749.5L1142.9 755.9L1142.3 751.6L1141.7 752.6L1141.1 751.3L1140.5 748.8L1139.9 747.7L1139.3 747.3L1138.7 747.2L1138.1 748.0L1137.5 747.1L1136.9 748.4L1136.3 747.7L1135.7 747.7L1135.1 747.8L1134.5 748.9L1133.9 752.0L1133.3 755.7L1132.7 753.4L1132.1 753.2L1131.5 753.8L1130.9 752.0L1130.3 751.0L1129.7 749.2L1129.1 748.2L1128.5 749.3L1127.9 751.4L1127.3 752.0L1126.7 759.2L1126.1 759.1L1125.5 757.5L1124.9 753.2L1124.3 750.4L1123.7 749.5L1123.1 751.2L1122.5 752.1L1121.9 752.0L1121.3 752.5L1120.7 757.9L1120.1 752.5L1119.5 751.1L1118.9 749.9L1118.3 750.1L1117.7 747.4L1117.1 747.0L1116.5 747.1L1115.9 747.0L1115.3 747.2L1114.7 746.7L1114.1 746.6L1113.5 746.5L1112.9 746.7L1112.3 746.7L1111.7 746.7L1111.1 746.6L1110.5 746.5L1109.9 747.2L1109.3 747.4L1108.7 746.9L1108.1 747.1L1107.5 747.1L1106.9 747.3L1106.3 746.7L1105.7 746.7L1105.1 746.9L1104.5 747.1L1103.9 747.2L1103.3 747.3L1102.7 747.3L1102.1 747.5L1101.5 748.0L1100.9 748.9L1100.3 748.7L1099.7 752.1L1099.1 749.9L1098.5 750.1L1097.9 749.6L1097.3 749.5L1096.7 751.3L1096.1 748.3L1095.5 748.5L1094.9 747.8L1094.3 747.5L1093.7 747.7L1093.1 747.6L1092.5 747.4L1091.9 747.4L1091.3 747.8L1090.7 748.0L1090.1 747.6L1089.5 747.6L1088.9 748.3L1088.3 747.9L1087.7 747.7L1087.1 748.2L1086.5 749.2L1085.9 750.1L1085.3 750.7L1084.7 750.9L1084.1 750.3L1083.5 750.7L1082.9 753.3L1082.3 749.7L1081.7 748.8L1081.1 747.9L1080.5 748.6L1079.9 747.6L1079.3 748.4L1078.7 747.7L1078.1 748.0L1077.5 749.6L1076.9 750.8L1076.3 754.1L1075.7 751.6L1075.1 751.3L1074.5 749.3L1073.9 748.2L1073.3 747.6L1072.7 747.3L1072.1 747.5L1071.5 747.2L1070.9 747.6L1070.3 747.6L1069.7 747.0L1069.1 747.0L1068.5 747.0L1067.9 748.0L1067.3 746.8L1066.7 746.6L1066.1 746.9L1065.5 746.8L1064.9 747.0L1064.3 747.1L1063.7 747.9L1063.1 748.2L1062.5 748.3L1061.9 748.7L1061.3 749.2L1060.7 750.1L1060.1 751.3L1059.5 750.8L1058.9 750.1L1058.3 749.5L1057.7 749.0L1057.1 749.4L1056.5 748.6L1055.9 748.1L1055.3 751.5L1054.7 753.3L1054.1 754.7L1053.5 758.7L1052.9 750.9L1052.3 748.2L1051.7 747.7L1051.1 747.7L1050.5 748.4L1049.9 750.4L1049.3 750.7L1048.7 751.3L1048.1 752.2L1047.5 754.6L1046.9 749.5L1046.3 749.2L1045.7 748.3L1045.1 749.5L1044.5 747.4L1043.9 747.3L1043.3 747.4L1042.7 747.8L1042.1 747.1L1041.5 747.0L1040.9 747.6L1040.3 747.2L1039.7 747.2L1039.1 747.1L1038.5 747.3L1037.9 747.1L1037.3 747.0L1036.7 747.5L1036.1 747.4L1035.5 749.9L1034.9 748.8L1034.3 749.9L1033.7 750.3L1033.1 748.9L1032.5 748.0L1031.9 747.3L1031.3 747.3L1030.7 747.4L1030.1 747.4L1029.5 747.8L1028.9 747.4L1028.3 747.6L1027.7 749.1L1027.1 748.3L1026.5 750.7L1025.9 750.4L1025.3 749.7L1024.7 753.5L1024.1 752.9L1023.5 749.3L1022.9 748.8L1022.3 748.5L1021.7 749.3L1021.1 748.4L1020.5 748.2L1019.9 749.4L1019.3 747.5L1018.7 747.5L1018.1 747.3L1017.5 747.1L1016.9 747.0L1016.3 747.4L1015.7 747.1L1015.1 747.1L1014.5 746.9L1013.9 747.3L1013.3 747.2L1012.7 747.1L1012.1 747.0L1011.5 747.2L1010.9 748.1L1010.3 747.4L1009.7 747.1L1009.1 747.5L1008.5 747.5L1007.9 747.6L1007.3 748.5L1006.7 747.7L1006.1 747.4L1005.5 747.8L1004.9 748.2L1004.3 747.9L1003.7 747.3L1003.1 747.8L1002.5 747.5L1001.9 747.9L1001.3 749.6L1000.7 748.3L1000.1 747.8L999.5 748.5L998.9 748.3L998.3 748.3L997.7 749.4L997.1 752.9L996.5 750.6L995.9 751.7L995.3 749.9L994.7 750.4L994.1 748.5L993.5 748.1L992.9 747.6L992.3 748.8L991.7 747.5L991.1 747.7L990.5 748.1L989.9 749.0L989.3 747.4L988.7 747.2L988.1 747.6L987.5 747.5L986.9 747.1L986.3 748.3L985.7 747.3L985.1 747.1L984.5 747.0L983.9 747.2L983.3 747.4L982.7 747.2L982.1 747.5L981.5 747.9L980.9 746.8L980.3 746.7L979.7 746.8L979.1 746.6L978.5 746.6L977.9 746.4L977.3 746.7L976.7 746.6L976.1 746.8L975.5 746.5L974.9 747.3L974.3 746.7L973.7 746.6L973.1 746.5L972.5 746.6L971.9 746.8L971.3 746.8L970.7 747.1L970.1 747.4L969.5 748.0L968.9 748.1L968.3 752.0L967.7 750.5L967.1 750.0L966.5 750.7L965.9 749.9L965.3 748.9L964.7 748.7L964.1 748.2L963.5 748.0L962.9 750.2L962.3 753.6L961.7 752.0L961.1 752.4L960.5 752.8L959.9 749.5L959.3 748.2L958.7 748.7L958.1 747.1L957.5 747.2L956.9 747.1L956.3 747.2L955.7 746.7L955.1 747.5L954.5 746.7L953.9 746.8L953.3 746.9L952.7 747.0L952.1 747.1L951.5 747.1L950.9 747.7L950.3 747.4L949.7 747.1L949.1 748.2L948.5 747.0L947.9 746.9L947.3 747.0L946.7 747.1L946.1 747.4L945.5 747.2L944.9 746.9L944.3 747.3L943.7 747.2L943.1 747.0L942.5 747.3L941.9 748.1L941.3 747.0L940.7 747.4L940.1 747.2L939.5 747.1L938.9 747.3L938.3 746.9L937.7 747.3L937.1 747.0L936.5 747.1L935.9 748.2L935.3 746.9L934.7 747.1L934.1 747.1L933.5 747.1L932.9 747.5L932.3 747.1L931.7 747.4L931.1 747.3L930.5 747.2L929.9 747.3L929.3 747.1L928.7 747.4L928.1 747.1L927.5 747.2L926.9 747.2L926.3 747.7L925.7 748.3L925.1 749.9L924.5 749.4L923.9 751.5L923.3 750.7L922.7 753.7L922.1 755.7L921.5 751.6L920.9 754.2L920.3 749.9L919.7 748.8L919.1 748.8L918.5 748.7L917.9 750.8L917.3 749.0L916.7 749.2L916.1 752.9L915.5 753.1L914.9 753.1L914.3 753.2L913.7 751.6L913.1 750.2L912.5 749.3L911.9 749.7L911.3 750.2L910.7 757.3L910.1 754.4L909.5 752.4L908.9 749.4L908.3 748.4L907.7 748.4L907.1 747.6L906.5 747.2L905.9 747.0L905.3 747.1L904.7 747.1L904.1 748.3L903.5 747.1L902.9 747.6L902.3 747.0L901.7 746.9L901.1 746.7L900.5 746.7L899.9 748.1L899.3 747.4L898.7 747.4L898.1 748.4L897.5 750.4L896.9 750.3L896.3 750.6L895.7 750.0L895.1 752.2L894.5 749.0L893.9 748.1L893.3 747.0L892.7 746.9L892.1 747.1L891.5 747.4L890.9 748.7L890.3 749.3L889.7 750.2L889.1 752.7L888.5 753.6L887.9 751.7L887.3 753.6L886.7 749.8L886.1 751.5L885.5 749.3L884.9 750.2L884.3 749.0L883.7 749.6L883.1 751.3L882.5 760.1L881.9 752.1L881.3 751.8L880.7 752.1L880.1 749.2L879.5 748.3L878.9 748.1L878.3 749.3L877.7 751.0L877.1 754.3L876.5 757.2L875.9 762.4L875.3 756.1L874.7 754.0L874.1 751.9L873.5 751.3L872.9 750.6L872.3 750.9L871.7 751.5L871.1 752.7L870.5 754.9L869.9 753.9L869.3 752.8L868.7 749.2L868.1 748.3L867.5 747.8L866.9 747.5L866.3 747.1L865.7 748.8L865.1 747.4L864.5 747.5L863.9 747.3L863.3 747.3L862.7 747.4L862.1 747.2L861.5 748.1L860.9 747.6L860.3 747.7L859.7 748.9L859.1 747.5L858.5 747.1L857.9 747.3L857.3 747.7L856.7 747.5L856.1 748.4L855.5 747.4L854.9 747.4L854.3 747.5L853.7 747.5L853.1 747.1L852.5 747.2L851.9 746.9L851.3 747.0L850.7 746.9L850.1 747.4L849.5 747.0L848.9 747.1L848.3 747.6L847.7 747.1L847.1 747.2L846.5 746.9L845.9 747.2L845.3 747.3L844.7 747.2L844.1 747.4z" fill="#1b1d22"/><line x1="144.50" y1="202.90" x2="1520.00" y2="202.90" stroke="#5c5c5c" stroke-width="1.3" /><line x1="144.50" y1="222.90" x2="1520.00" y2="222.90" stroke="#5c5c5c" stroke-width="1.3" /><line x1="144.50" y1="279.60" x2="1520.00" y2="279.60" stroke="#5c5c5c" stroke-width="1.3" /><line x1="144.50" y1="350.60" x2="1520.00" y2="350.60" stroke="#5c5c5c" stroke-width="1.3" /><line x1="144.50" y1="366.00" x2="1520.00" y2="366.00" stroke="#5c5c5c" stroke-width="1.3" /><line x1="144.50" y1="518.30" x2="1520.00" y2="518.30" stroke="#5c5c5c" stroke-width="1.3" /><line x1="144.50" y1="575.60" x2="1520.00" y2="575.60" stroke="#5c5c5c" stroke-width="1.3" /><line x1="144.50" y1="632.80" x2="1520.00" y2="632.80" stroke="#5c5c5c" stroke-width="1.3" /><line x1="144.50" y1="703.60" x2="1520.00" y2="703.60" stroke="#5c5c5c" stroke-width="1.3" /><line x1="144.50" y1="774.60" x2="1520.00" y2="774.60" stroke="#5c5c5c" stroke-width="1.3" /><line x1="144.50" y1="789.80" x2="1520.00" y2="789.80" stroke="#5c5c5c" stroke-width="1.3" /><line x1="144.50" y1="812.90" x2="1520.00" y2="812.90" stroke="#5c5c5c" stroke-width="1.3" /><line x1="144.50" y1="828.40" x2="1520.00" y2="828.40" stroke="#5c5c5c" stroke-width="1.3" /><line x1="144.50" y1="797.90" x2="1804.30" y2="797.90" stroke="#484848" stroke-width="1.8" /><line x1="144.50" y1="193.00" x2="1804.30" y2="193.00" stroke="#484848" stroke-width="1" /><rect x="144.50" y="185.60" width="1659.80" height="6.90" fill="#c9c9c9" /><line x1="149.60" y1="180.80" x2="149.60" y2="185.60" stroke="#555" stroke-width="1" /><line x1="166.97" y1="184.50" x2="166.97" y2="185.60" stroke="#5e5e5e" stroke-width="1" /><line x1="184.34" y1="184.50" x2="184.34" y2="185.60" stroke="#5e5e5e" stroke-width="1" /><line x1="201.71" y1="184.50" x2="201.71" y2="185.60" stroke="#5e5e5e" stroke-width="1" /><text x="153.00" y="182.80" font-size="8.6" fill="#2a2a2a" text-anchor="start" font-weight="normal" stroke="#2a2a2a" stroke-width="0.3" >78</text><line x1="219.08" y1="180.80" x2="219.08" y2="185.60" stroke="#555" stroke-width="1" /><line x1="236.45" y1="184.50" x2="236.45" y2="185.60" stroke="#5e5e5e" stroke-width="1" /><line x1="253.82" y1="184.50" x2="253.82" y2="185.60" stroke="#5e5e5e" stroke-width="1" /><line x1="271.19" y1="184.50" x2="271.19" y2="185.60" stroke="#5e5e5e" stroke-width="1" /><text x="222.48" y="182.80" font-size="8.6" fill="#2a2a2a" text-anchor="start" font-weight="normal" stroke="#2a2a2a" stroke-width="0.3" >79</text><line x1="288.56" y1="180.80" x2="288.56" y2="185.60" stroke="#555" stroke-width="1" /><line x1="305.93" y1="184.50" x2="305.93" y2="185.60" stroke="#5e5e5e" stroke-width="1" /><line x1="323.30" y1="184.50" x2="323.30" y2="185.60" stroke="#5e5e5e" stroke-width="1" /><line x1="340.67" y1="184.50" x2="340.67" y2="185.60" stroke="#5e5e5e" stroke-width="1" /><text x="291.96" y="182.80" font-size="8.6" fill="#2a2a2a" text-anchor="start" font-weight="normal" stroke="#2a2a2a" stroke-width="0.3" >80</text><line x1="358.04" y1="180.80" x2="358.04" y2="185.60" stroke="#555" stroke-width="1" /><line x1="375.41" y1="184.50" x2="375.41" y2="185.60" stroke="#5e5e5e" stroke-width="1" /><line x1="392.78" y1="184.50" x2="392.78" y2="185.60" stroke="#5e5e5e" stroke-width="1" /><line x1="410.15" y1="184.50" x2="410.15" y2="185.60" stroke="#5e5e5e" stroke-width="1" /><text x="361.44" y="182.80" font-size="8.6" fill="#2a2a2a" text-anchor="start" font-weight="normal" stroke="#2a2a2a" stroke-width="0.3" >81</text><line x1="427.52" y1="180.80" x2="427.52" y2="185.60" stroke="#555" stroke-width="1" /><line x1="444.89" y1="184.50" x2="444.89" y2="185.60" stroke="#5e5e5e" stroke-width="1" /><line x1="462.26" y1="184.50" x2="462.26" y2="185.60" stroke="#5e5e5e" stroke-width="1" /><line x1="479.63" y1="184.50" x2="479.63" y2="185.60" stroke="#5e5e5e" stroke-width="1" /><text x="430.92" y="182.80" font-size="8.6" fill="#2a2a2a" text-anchor="start" font-weight="normal" stroke="#2a2a2a" stroke-width="0.3" >82</text><line x1="497.00" y1="180.80" x2="497.00" y2="185.60" stroke="#555" stroke-width="1" /><line x1="514.37" y1="184.50" x2="514.37" y2="185.60" stroke="#5e5e5e" stroke-width="1" /><line x1="531.74" y1="184.50" x2="531.74" y2="185.60" stroke="#5e5e5e" stroke-width="1" /><line x1="549.11" y1="184.50" x2="549.11" y2="185.60" stroke="#5e5e5e" stroke-width="1" /><text x="500.40" y="182.80" font-size="8.6" fill="#2a2a2a" text-anchor="start" font-weight="normal" stroke="#2a2a2a" stroke-width="0.3" >83</text><line x1="566.48" y1="180.80" x2="566.48" y2="185.60" stroke="#555" stroke-width="1" /><line x1="583.85" y1="184.50" x2="583.85" y2="185.60" stroke="#5e5e5e" stroke-width="1" /><line x1="601.22" y1="184.50" x2="601.22" y2="185.60" stroke="#5e5e5e" stroke-width="1" /><line x1="618.59" y1="184.50" x2="618.59" y2="185.60" stroke="#5e5e5e" stroke-width="1" /><text x="569.88" y="182.80" font-size="8.6" fill="#2a2a2a" text-anchor="start" font-weight="normal" stroke="#2a2a2a" stroke-width="0.3" >84</text><line x1="635.96" y1="180.80" x2="635.96" y2="185.60" stroke="#555" stroke-width="1" /><line x1="653.33" y1="184.50" x2="653.33" y2="185.60" stroke="#5e5e5e" stroke-width="1" /><line x1="670.70" y1="184.50" x2="670.70" y2="185.60" stroke="#5e5e5e" stroke-width="1" /><line x1="688.07" y1="184.50" x2="688.07" y2="185.60" stroke="#5e5e5e" stroke-width="1" /><text x="639.36" y="182.80" font-size="8.6" fill="#2a2a2a" text-anchor="start" font-weight="normal" stroke="#2a2a2a" stroke-width="0.3" >85</text><line x1="705.44" y1="180.80" x2="705.44" y2="185.60" stroke="#555" stroke-width="1" /><line x1="722.81" y1="184.50" x2="722.81" y2="185.60" stroke="#5e5e5e" stroke-width="1" /><line x1="740.18" y1="184.50" x2="740.18" y2="185.60" stroke="#5e5e5e" stroke-width="1" /><line x1="757.55" y1="184.50" x2="757.55" y2="185.60" stroke="#5e5e5e" stroke-width="1" /><text x="708.84" y="182.80" font-size="8.6" fill="#2a2a2a" text-anchor="start" font-weight="normal" stroke="#2a2a2a" stroke-width="0.3" >86</text><line x1="774.92" y1="180.80" x2="774.92" y2="185.60" stroke="#555" stroke-width="1" /><line x1="792.29" y1="184.50" x2="792.29" y2="185.60" stroke="#5e5e5e" stroke-width="1" /><line x1="809.66" y1="184.50" x2="809.66" y2="185.60" stroke="#5e5e5e" stroke-width="1" /><line x1="827.03" y1="184.50" x2="827.03" y2="185.60" stroke="#5e5e5e" stroke-width="1" /><text x="778.32" y="182.80" font-size="8.6" fill="#2a2a2a" text-anchor="start" font-weight="normal" stroke="#2a2a2a" stroke-width="0.3" >87</text><line x1="844.40" y1="180.80" x2="844.40" y2="185.60" stroke="#555" stroke-width="1" /><line x1="861.77" y1="184.50" x2="861.77" y2="185.60" stroke="#5e5e5e" stroke-width="1" /><line x1="879.14" y1="184.50" x2="879.14" y2="185.60" stroke="#5e5e5e" stroke-width="1" /><line x1="896.51" y1="184.50" x2="896.51" y2="185.60" stroke="#5e5e5e" stroke-width="1" /><text x="847.80" y="182.80" font-size="8.6" fill="#2a2a2a" text-anchor="start" font-weight="normal" stroke="#2a2a2a" stroke-width="0.3" >88</text><line x1="913.88" y1="180.80" x2="913.88" y2="185.60" stroke="#555" stroke-width="1" /><line x1="931.25" y1="184.50" x2="931.25" y2="185.60" stroke="#5e5e5e" stroke-width="1" /><line x1="948.62" y1="184.50" x2="948.62" y2="185.60" stroke="#5e5e5e" stroke-width="1" /><line x1="965.99" y1="184.50" x2="965.99" y2="185.60" stroke="#5e5e5e" stroke-width="1" /><text x="917.28" y="182.80" font-size="8.6" fill="#2a2a2a" text-anchor="start" font-weight="normal" stroke="#2a2a2a" stroke-width="0.3" >89</text><line x1="983.36" y1="180.80" x2="983.36" y2="185.60" stroke="#555" stroke-width="1" /><line x1="1000.73" y1="184.50" x2="1000.73" y2="185.60" stroke="#5e5e5e" stroke-width="1" /><line x1="1018.10" y1="184.50" x2="1018.10" y2="185.60" stroke="#5e5e5e" stroke-width="1" /><line x1="1035.47" y1="184.50" x2="1035.47" y2="185.60" stroke="#5e5e5e" stroke-width="1" /><text x="986.76" y="182.80" font-size="8.6" fill="#2a2a2a" text-anchor="start" font-weight="normal" stroke="#2a2a2a" stroke-width="0.3" >90</text><line x1="1052.84" y1="180.80" x2="1052.84" y2="185.60" stroke="#555" stroke-width="1" /><line x1="1070.21" y1="184.50" x2="1070.21" y2="185.60" stroke="#5e5e5e" stroke-width="1" /><line x1="1087.58" y1="184.50" x2="1087.58" y2="185.60" stroke="#5e5e5e" stroke-width="1" /><line x1="1104.95" y1="184.50" x2="1104.95" y2="185.60" stroke="#5e5e5e" stroke-width="1" /><text x="1056.24" y="182.80" font-size="8.6" fill="#2a2a2a" text-anchor="start" font-weight="normal" stroke="#2a2a2a" stroke-width="0.3" >91</text><line x1="1122.32" y1="180.80" x2="1122.32" y2="185.60" stroke="#555" stroke-width="1" /><line x1="1139.69" y1="184.50" x2="1139.69" y2="185.60" stroke="#5e5e5e" stroke-width="1" /><line x1="1157.06" y1="184.50" x2="1157.06" y2="185.60" stroke="#5e5e5e" stroke-width="1" /><line x1="1174.43" y1="184.50" x2="1174.43" y2="185.60" stroke="#5e5e5e" stroke-width="1" /><text x="1125.72" y="182.80" font-size="8.6" fill="#2a2a2a" text-anchor="start" font-weight="normal" stroke="#2a2a2a" stroke-width="0.3" >92</text><line x1="1191.80" y1="180.80" x2="1191.80" y2="185.60" stroke="#555" stroke-width="1" /><line x1="1209.17" y1="184.50" x2="1209.17" y2="185.60" stroke="#5e5e5e" stroke-width="1" /><line x1="1226.54" y1="184.50" x2="1226.54" y2="185.60" stroke="#5e5e5e" stroke-width="1" /><line x1="1243.91" y1="184.50" x2="1243.91" y2="185.60" stroke="#5e5e5e" stroke-width="1" /><text x="1195.20" y="182.80" font-size="8.6" fill="#2a2a2a" text-anchor="start" font-weight="normal" stroke="#2a2a2a" stroke-width="0.3" >93</text><line x1="1261.28" y1="180.80" x2="1261.28" y2="185.60" stroke="#555" stroke-width="1" /><line x1="1278.65" y1="184.50" x2="1278.65" y2="185.60" stroke="#5e5e5e" stroke-width="1" /><line x1="1296.02" y1="184.50" x2="1296.02" y2="185.60" stroke="#5e5e5e" stroke-width="1" /><line x1="1313.39" y1="184.50" x2="1313.39" y2="185.60" stroke="#5e5e5e" stroke-width="1" /><text x="1264.68" y="182.80" font-size="8.6" fill="#2a2a2a" text-anchor="start" font-weight="normal" stroke="#2a2a2a" stroke-width="0.3" >94</text><line x1="1330.76" y1="180.80" x2="1330.76" y2="185.60" stroke="#555" stroke-width="1" /><line x1="1348.13" y1="184.50" x2="1348.13" y2="185.60" stroke="#5e5e5e" stroke-width="1" /><line x1="1365.50" y1="184.50" x2="1365.50" y2="185.60" stroke="#5e5e5e" stroke-width="1" /><line x1="1382.87" y1="184.50" x2="1382.87" y2="185.60" stroke="#5e5e5e" stroke-width="1" /><text x="1334.16" y="182.80" font-size="8.6" fill="#2a2a2a" text-anchor="start" font-weight="normal" stroke="#2a2a2a" stroke-width="0.3" >95</text><line x1="1400.24" y1="180.80" x2="1400.24" y2="185.60" stroke="#555" stroke-width="1" /><line x1="1417.61" y1="184.50" x2="1417.61" y2="185.60" stroke="#5e5e5e" stroke-width="1" /><line x1="1434.98" y1="184.50" x2="1434.98" y2="185.60" stroke="#5e5e5e" stroke-width="1" /><line x1="1452.35" y1="184.50" x2="1452.35" y2="185.60" stroke="#5e5e5e" stroke-width="1" /><text x="1403.64" y="182.80" font-size="8.6" fill="#2a2a2a" text-anchor="start" font-weight="normal" stroke="#2a2a2a" stroke-width="0.3" >96</text><line x1="1469.72" y1="180.80" x2="1469.72" y2="185.60" stroke="#555" stroke-width="1" /><line x1="1487.09" y1="184.50" x2="1487.09" y2="185.60" stroke="#5e5e5e" stroke-width="1" /><line x1="1504.46" y1="184.50" x2="1504.46" y2="185.60" stroke="#5e5e5e" stroke-width="1" /><line x1="1521.83" y1="184.50" x2="1521.83" y2="185.60" stroke="#5e5e5e" stroke-width="1" /><text x="1473.12" y="182.80" font-size="8.6" fill="#2a2a2a" text-anchor="start" font-weight="normal" stroke="#2a2a2a" stroke-width="0.3" >97</text><line x1="1539.20" y1="180.80" x2="1539.20" y2="185.60" stroke="#555" stroke-width="1" /><line x1="1556.57" y1="184.50" x2="1556.57" y2="185.60" stroke="#5e5e5e" stroke-width="1" /><line x1="1573.94" y1="184.50" x2="1573.94" y2="185.60" stroke="#5e5e5e" stroke-width="1" /><line x1="1591.31" y1="184.50" x2="1591.31" y2="185.60" stroke="#5e5e5e" stroke-width="1" /><text x="1542.60" y="182.80" font-size="8.6" fill="#2a2a2a" text-anchor="start" font-weight="normal" stroke="#2a2a2a" stroke-width="0.3" >98</text><line x1="1608.68" y1="180.80" x2="1608.68" y2="185.60" stroke="#555" stroke-width="1" /><line x1="1626.05" y1="184.50" x2="1626.05" y2="185.60" stroke="#5e5e5e" stroke-width="1" /><line x1="1643.42" y1="184.50" x2="1643.42" y2="185.60" stroke="#5e5e5e" stroke-width="1" /><line x1="1660.79" y1="184.50" x2="1660.79" y2="185.60" stroke="#5e5e5e" stroke-width="1" /><text x="1612.08" y="182.80" font-size="8.6" fill="#2a2a2a" text-anchor="start" font-weight="normal" stroke="#2a2a2a" stroke-width="0.3" >99</text><line x1="1678.16" y1="180.80" x2="1678.16" y2="185.60" stroke="#555" stroke-width="1" /><line x1="1695.53" y1="184.50" x2="1695.53" y2="185.60" stroke="#5e5e5e" stroke-width="1" /><line x1="1712.90" y1="184.50" x2="1712.90" y2="185.60" stroke="#5e5e5e" stroke-width="1" /><line x1="1730.27" y1="184.50" x2="1730.27" y2="185.60" stroke="#5e5e5e" stroke-width="1" /><text x="1681.56" y="182.80" font-size="8.6" fill="#2a2a2a" text-anchor="start" font-weight="normal" stroke="#2a2a2a" stroke-width="0.3" >100</text><line x1="1747.64" y1="180.80" x2="1747.64" y2="185.60" stroke="#555" stroke-width="1" /><line x1="1765.01" y1="184.50" x2="1765.01" y2="185.60" stroke="#5e5e5e" stroke-width="1" /><line x1="1782.38" y1="184.50" x2="1782.38" y2="185.60" stroke="#5e5e5e" stroke-width="1" /><line x1="1799.75" y1="184.50" x2="1799.75" y2="185.60" stroke="#5e5e5e" stroke-width="1" /><text x="1751.04" y="182.80" font-size="8.6" fill="#2a2a2a" text-anchor="start" font-weight="normal" stroke="#2a2a2a" stroke-width="0.3" >101</text><line x1="1817.12" y1="180.80" x2="1817.12" y2="185.60" stroke="#555" stroke-width="1" /><line x1="1834.49" y1="184.50" x2="1834.49" y2="185.60" stroke="#5e5e5e" stroke-width="1" /><line x1="1851.86" y1="184.50" x2="1851.86" y2="185.60" stroke="#5e5e5e" stroke-width="1" /><line x1="1869.23" y1="184.50" x2="1869.23" y2="185.60" stroke="#5e5e5e" stroke-width="1" /><text x="1820.52" y="182.80" font-size="8.6" fill="#2a2a2a" text-anchor="start" font-weight="normal" stroke="#2a2a2a" stroke-width="0.3" >102</text><line x1="144.50" y1="185.50" x2="1804.30" y2="185.50" stroke="#5a5a5a" stroke-width="0.6" /><path d="M666.9 198.6h5.4l-2.7 3.5z" fill="#11dcee"/><path d="M667.6 847.3h4.2l-2.1-3z" fill="#11d6e8"/><rect x="144.50" y="844.20" width="1375.50" height="17.30" fill="#959595" /><line x1="144.50" y1="843.90" x2="1520.00" y2="843.90" stroke="#4d4d4d" stroke-width="1" /><line x1="154.15" y1="844.40" x2="154.15" y2="846.20" stroke="#4a4a4a" stroke-width="0.9" /><line x1="176.00" y1="844.40" x2="176.00" y2="846.20" stroke="#4a4a4a" stroke-width="0.9" /><line x1="197.85" y1="844.40" x2="197.85" y2="846.20" stroke="#4a4a4a" stroke-width="0.9" /><line x1="219.70" y1="844.40" x2="219.70" y2="850.60" stroke="#3a3a3a" stroke-width="0.9" /><text x="221.90" y="853.80" font-size="8.4" fill="#2a2a2a" text-anchor="start" font-weight="normal" stroke="#2a2a2a" stroke-width="0.3" >2:04</text><line x1="241.55" y1="844.40" x2="241.55" y2="846.20" stroke="#4a4a4a" stroke-width="0.9" /><line x1="263.40" y1="844.40" x2="263.40" y2="846.20" stroke="#4a4a4a" stroke-width="0.9" /><line x1="285.25" y1="844.40" x2="285.25" y2="846.20" stroke="#4a4a4a" stroke-width="0.9" /><line x1="307.10" y1="844.40" x2="307.10" y2="850.60" stroke="#3a3a3a" stroke-width="0.9" /><text x="309.30" y="853.80" font-size="8.4" fill="#2a2a2a" text-anchor="start" font-weight="normal" stroke="#2a2a2a" stroke-width="0.3" >2:06</text><line x1="328.95" y1="844.40" x2="328.95" y2="846.20" stroke="#4a4a4a" stroke-width="0.9" /><line x1="350.80" y1="844.40" x2="350.80" y2="846.20" stroke="#4a4a4a" stroke-width="0.9" /><line x1="372.65" y1="844.40" x2="372.65" y2="846.20" stroke="#4a4a4a" stroke-width="0.9" /><line x1="394.50" y1="844.40" x2="394.50" y2="850.60" stroke="#3a3a3a" stroke-width="0.9" /><text x="396.70" y="853.80" font-size="8.4" fill="#2a2a2a" text-anchor="start" font-weight="normal" stroke="#2a2a2a" stroke-width="0.3" >2:08</text><line x1="416.35" y1="844.40" x2="416.35" y2="846.20" stroke="#4a4a4a" stroke-width="0.9" /><line x1="438.20" y1="844.40" x2="438.20" y2="846.20" stroke="#4a4a4a" stroke-width="0.9" /><line x1="460.05" y1="844.40" x2="460.05" y2="846.20" stroke="#4a4a4a" stroke-width="0.9" /><line x1="481.90" y1="844.40" x2="481.90" y2="850.60" stroke="#3a3a3a" stroke-width="0.9" /><text x="484.10" y="853.80" font-size="8.4" fill="#2a2a2a" text-anchor="start" font-weight="normal" stroke="#2a2a2a" stroke-width="0.3" >2:10</text><line x1="503.75" y1="844.40" x2="503.75" y2="846.20" stroke="#4a4a4a" stroke-width="0.9" /><line x1="525.60" y1="844.40" x2="525.60" y2="846.20" stroke="#4a4a4a" stroke-width="0.9" /><line x1="547.45" y1="844.40" x2="547.45" y2="846.20" stroke="#4a4a4a" stroke-width="0.9" /><line x1="569.30" y1="844.40" x2="569.30" y2="850.60" stroke="#3a3a3a" stroke-width="0.9" /><text x="571.50" y="853.80" font-size="8.4" fill="#2a2a2a" text-anchor="start" font-weight="normal" stroke="#2a2a2a" stroke-width="0.3" >2:12</text><line x1="591.15" y1="844.40" x2="591.15" y2="846.20" stroke="#4a4a4a" stroke-width="0.9" /><line x1="613.00" y1="844.40" x2="613.00" y2="846.20" stroke="#4a4a4a" stroke-width="0.9" /><line x1="634.85" y1="844.40" x2="634.85" y2="846.20" stroke="#4a4a4a" stroke-width="0.9" /><line x1="656.70" y1="844.40" x2="656.70" y2="850.60" stroke="#3a3a3a" stroke-width="0.9" /><text x="658.90" y="853.80" font-size="8.4" fill="#2a2a2a" text-anchor="start" font-weight="normal" stroke="#2a2a2a" stroke-width="0.3" >2:14</text><line x1="678.55" y1="844.40" x2="678.55" y2="846.20" stroke="#4a4a4a" stroke-width="0.9" /><line x1="700.40" y1="844.40" x2="700.40" y2="846.20" stroke="#4a4a4a" stroke-width="0.9" /><line x1="722.25" y1="844.40" x2="722.25" y2="846.20" stroke="#4a4a4a" stroke-width="0.9" /><line x1="744.10" y1="844.40" x2="744.10" y2="850.60" stroke="#3a3a3a" stroke-width="0.9" /><text x="746.30" y="853.80" font-size="8.4" fill="#2a2a2a" text-anchor="start" font-weight="normal" stroke="#2a2a2a" stroke-width="0.3" >2:16</text><line x1="765.95" y1="844.40" x2="765.95" y2="846.20" stroke="#4a4a4a" stroke-width="0.9" /><line x1="787.80" y1="844.40" x2="787.80" y2="846.20" stroke="#4a4a4a" stroke-width="0.9" /><line x1="809.65" y1="844.40" x2="809.65" y2="846.20" stroke="#4a4a4a" stroke-width="0.9" /><line x1="831.50" y1="844.40" x2="831.50" y2="850.60" stroke="#3a3a3a" stroke-width="0.9" /><text x="833.70" y="853.80" font-size="8.4" fill="#2a2a2a" text-anchor="start" font-weight="normal" stroke="#2a2a2a" stroke-width="0.3" >2:18</text><line x1="853.35" y1="844.40" x2="853.35" y2="846.20" stroke="#4a4a4a" stroke-width="0.9" /><line x1="875.20" y1="844.40" x2="875.20" y2="846.20" stroke="#4a4a4a" stroke-width="0.9" /><line x1="897.05" y1="844.40" x2="897.05" y2="846.20" stroke="#4a4a4a" stroke-width="0.9" /><line x1="918.90" y1="844.40" x2="918.90" y2="850.60" stroke="#3a3a3a" stroke-width="0.9" /><text x="921.10" y="853.80" font-size="8.4" fill="#2a2a2a" text-anchor="start" font-weight="normal" stroke="#2a2a2a" stroke-width="0.3" >2:20</text><line x1="940.75" y1="844.40" x2="940.75" y2="846.20" stroke="#4a4a4a" stroke-width="0.9" /><line x1="962.60" y1="844.40" x2="962.60" y2="846.20" stroke="#4a4a4a" stroke-width="0.9" /><line x1="984.45" y1="844.40" x2="984.45" y2="846.20" stroke="#4a4a4a" stroke-width="0.9" /><line x1="1006.30" y1="844.40" x2="1006.30" y2="850.60" stroke="#3a3a3a" stroke-width="0.9" /><text x="1008.50" y="853.80" font-size="8.4" fill="#2a2a2a" text-anchor="start" font-weight="normal" stroke="#2a2a2a" stroke-width="0.3" >2:22</text><line x1="1028.15" y1="844.40" x2="1028.15" y2="846.20" stroke="#4a4a4a" stroke-width="0.9" /><line x1="1050.00" y1="844.40" x2="1050.00" y2="846.20" stroke="#4a4a4a" stroke-width="0.9" /><line x1="1071.85" y1="844.40" x2="1071.85" y2="846.20" stroke="#4a4a4a" stroke-width="0.9" /><line x1="1093.70" y1="844.40" x2="1093.70" y2="850.60" stroke="#3a3a3a" stroke-width="0.9" /><text x="1095.90" y="853.80" font-size="8.4" fill="#2a2a2a" text-anchor="start" font-weight="normal" stroke="#2a2a2a" stroke-width="0.3" >2:24</text><line x1="1115.55" y1="844.40" x2="1115.55" y2="846.20" stroke="#4a4a4a" stroke-width="0.9" /><line x1="1137.40" y1="844.40" x2="1137.40" y2="846.20" stroke="#4a4a4a" stroke-width="0.9" /><line x1="1159.25" y1="844.40" x2="1159.25" y2="846.20" stroke="#4a4a4a" stroke-width="0.9" /><line x1="1181.10" y1="844.40" x2="1181.10" y2="850.60" stroke="#3a3a3a" stroke-width="0.9" /><text x="1183.30" y="853.80" font-size="8.4" fill="#2a2a2a" text-anchor="start" font-weight="normal" stroke="#2a2a2a" stroke-width="0.3" >2:26</text><line x1="1202.95" y1="844.40" x2="1202.95" y2="846.20" stroke="#4a4a4a" stroke-width="0.9" /><line x1="1224.80" y1="844.40" x2="1224.80" y2="846.20" stroke="#4a4a4a" stroke-width="0.9" /><line x1="1246.65" y1="844.40" x2="1246.65" y2="846.20" stroke="#4a4a4a" stroke-width="0.9" /><line x1="1268.50" y1="844.40" x2="1268.50" y2="850.60" stroke="#3a3a3a" stroke-width="0.9" /><text x="1270.70" y="853.80" font-size="8.4" fill="#2a2a2a" text-anchor="start" font-weight="normal" stroke="#2a2a2a" stroke-width="0.3" >2:28</text><line x1="1290.35" y1="844.40" x2="1290.35" y2="846.20" stroke="#4a4a4a" stroke-width="0.9" /><line x1="1312.20" y1="844.40" x2="1312.20" y2="846.20" stroke="#4a4a4a" stroke-width="0.9" /><line x1="1334.05" y1="844.40" x2="1334.05" y2="846.20" stroke="#4a4a4a" stroke-width="0.9" /><line x1="1355.90" y1="844.40" x2="1355.90" y2="850.60" stroke="#3a3a3a" stroke-width="0.9" /><text x="1358.10" y="853.80" font-size="8.4" fill="#2a2a2a" text-anchor="start" font-weight="normal" stroke="#2a2a2a" stroke-width="0.3" >2:30</text><line x1="1377.75" y1="844.40" x2="1377.75" y2="846.20" stroke="#4a4a4a" stroke-width="0.9" /><line x1="1399.60" y1="844.40" x2="1399.60" y2="846.20" stroke="#4a4a4a" stroke-width="0.9" /><line x1="1421.45" y1="844.40" x2="1421.45" y2="846.20" stroke="#4a4a4a" stroke-width="0.9" /><line x1="1443.30" y1="844.40" x2="1443.30" y2="850.60" stroke="#3a3a3a" stroke-width="0.9" /><text x="1445.50" y="853.80" font-size="8.4" fill="#2a2a2a" text-anchor="start" font-weight="normal" stroke="#2a2a2a" stroke-width="0.3" >2:32</text><line x1="1465.15" y1="844.40" x2="1465.15" y2="846.20" stroke="#4a4a4a" stroke-width="0.9" /><line x1="1487.00" y1="844.40" x2="1487.00" y2="846.20" stroke="#4a4a4a" stroke-width="0.9" /><line x1="1508.85" y1="844.40" x2="1508.85" y2="846.20" stroke="#4a4a4a" stroke-width="0.9" /><line x1="806.30" y1="203.50" x2="806.30" y2="844.00" stroke="#1c1c1c" stroke-width="1.5" /><rect x="805.70" y="222.00" width="1.20" height="1.80" fill="#d8d8d8" /><rect x="805.70" y="278.70" width="1.20" height="1.80" fill="#d8d8d8" /><rect x="805.70" y="349.70" width="1.20" height="1.80" fill="#d8d8d8" /><rect x="805.70" y="365.10" width="1.20" height="1.80" fill="#d8d8d8" /><rect x="805.70" y="517.40" width="1.20" height="1.80" fill="#d8d8d8" /><rect x="805.70" y="574.70" width="1.20" height="1.80" fill="#d8d8d8" /><rect x="805.70" y="631.90" width="1.20" height="1.80" fill="#d8d8d8" /><rect x="805.70" y="702.70" width="1.20" height="1.80" fill="#d8d8d8" /><rect x="805.70" y="773.70" width="1.20" height="1.80" fill="#d8d8d8" /><rect x="805.70" y="788.90" width="1.20" height="1.80" fill="#d8d8d8" /><rect x="805.70" y="797.00" width="1.20" height="1.80" fill="#d8d8d8" /><rect x="805.70" y="812.00" width="1.20" height="1.80" fill="#d8d8d8" /><rect x="805.70" y="827.50" width="1.20" height="1.80" fill="#d8d8d8" /><rect x="805.55" y="304.40" width="1.50" height="7.00" fill="#c4c4c4" /><rect x="805.55" y="331.80" width="1.50" height="7.40" fill="#c4c4c4" /><rect x="805.55" y="660.40" width="1.50" height="2.40" fill="#c4c4c4" /><rect x="805.55" y="687.80" width="1.50" height="2.40" fill="#c4c4c4" /><text x="1517.20" y="840.00" font-size="12.4" fill="#5c5c5c" text-anchor="end" font-weight="bold"  letter-spacing="1.1" stroke="#5c5c5c" stroke-width=".25">1/4</text><rect x="1520.00" y="193.50" width="284.30" height="668.00" fill="#939393" /><rect x="1520.20" y="560.00" width="4.60" height="236.80" fill="#5b88e6" /><rect x="1525.60" y="560.00" width="3.40" height="236.80" fill="#5b88e6" /><line x1="1525.20" y1="560.00" x2="1525.20" y2="796.80" stroke="#3c5fae" stroke-width="0.8" /><line x1="1520.20" y1="560.00" x2="1520.20" y2="796.80" stroke="#3c5fae" stroke-width="0.8" /><rect x="1529.40" y="560.00" width="4.00" height="236.80" fill="#b49ce8" /><line x1="1529.20" y1="560.00" x2="1529.20" y2="796.80" stroke="#3c5fae" stroke-width="0.8" /><line x1="1533.20" y1="560.00" x2="1533.20" y2="796.80" stroke="#7c68b0" stroke-width="0.7" /><rect x="1533.40" y="560.00" width="112.40" height="72.40" fill="#b49ce8" /><circle cx="1539.8" cy="583.6" r="4.6" fill="none" stroke="#5b4a8c" stroke-width="1"/><path d="M1537.6 582h4.4M1538.4 584h3.6M1539.4 586h2.6" stroke="#5b4a8c" stroke-width=".8"/><text x="1547.20" y="586.60" font-size="9.4" fill="#3b2e63" text-anchor="start" font-weight="normal" stroke="#3b2e63" stroke-width="0.3" >torch</text><rect x="1649.00" y="579.40" width="55.50" height="8.60" fill="#d6d6d6" stroke="#5a5a5a" stroke-width="1.05"/><text x="1650.40" y="586.72" font-size="8.4" fill="#151515" text-anchor="start" font-weight="normal" stroke="#151515" stroke-width="0.3" >35-Group</text><path d="M1697.80 582.00h5l-2.5 3.6z" fill="#111"/><rect x="1649.00" y="592.80" width="55.50" height="8.80" fill="#8e8e8e" stroke="#5e5e5e" stroke-width="1.05"/><rect x="1710.40" y="579.40" width="35.90" height="8.60" fill="#efa61c" stroke="#5a5a5a" stroke-width="1.05"/><text x="1728.35" y="586.87" font-size="8.8" fill="#151515" text-anchor="middle" font-weight="bold"  >36</text><rect x="1750.60" y="579.40" width="15.60" height="8.60" fill="#d6d6d6" stroke="#5a5a5a" stroke-width="1.05"/><text x="1758.40" y="586.72" font-size="8.4" fill="#151515" text-anchor="middle" font-weight="normal" stroke="#151515" stroke-width="0.3" >S</text><rect x="1710.40" y="592.80" width="35.90" height="8.80" fill="#d6d6d6" stroke="#5a5a5a" stroke-width="1.05"/><rect x="1711.00" y="593.40" width="29.40" height="7.60" fill="#00cbdd" /><text x="1728.35" y="600.30" font-size="8.6" fill="#151515" text-anchor="middle" font-weight="normal" stroke="#151515" stroke-width="0.3" >0</text><rect x="1750.60" y="592.80" width="35.90" height="8.80" fill="#d6d6d6" stroke="#5a5a5a" stroke-width="1.05"/><rect x="1768.60" y="593.40" width="7.80" height="7.60" fill="#00cbdd" /><text x="1768.55" y="600.30" font-size="8.6" fill="#151515" text-anchor="middle" font-weight="normal" stroke="#151515" stroke-width="0.3" >22R</text><rect x="1710.40" y="606.40" width="22.60" height="8.80" fill="#d6d6d6" stroke="#5a5a5a" stroke-width="1.05"/><text x="1721.70" y="614.10" font-size="8.6" fill="#151515" text-anchor="middle" stroke="#151515" stroke-width=".25">-<tspan font-size="12.5" dy=".7">∞</tspan></text><rect x="1736.80" y="606.40" width="23.20" height="8.80" fill="#d6d6d6" stroke="#5a5a5a" stroke-width="1.05"/><text x="1748.40" y="614.10" font-size="8.6" fill="#151515" text-anchor="middle" stroke="#151515" stroke-width=".25">-<tspan font-size="12.5" dy=".7">∞</tspan></text><rect x="1790.60" y="560.00" width="2.20" height="70.00" fill="#1d1d1d" /><rect x="1793.80" y="560.00" width="2.20" height="70.00" fill="#1d1d1d" /><rect x="1789.60" y="563.20" width="7.40" height="0.80" fill="#939393" /><rect x="1536.40" y="633.60" width="109.40" height="69.70" fill="#b97dca" /><line x1="1536.20" y1="633.60" x2="1536.20" y2="703.20" stroke="#6d4a7c" stroke-width="0.8" /><circle cx="1543.8" cy="640.7" r="4.6" fill="none" stroke="#47265a" stroke-width="1"/><path d="M1541.20 639.20h5.2l-2.6 3.6z" fill="#47265a"/><text x="1551.20" y="643.80" font-size="9.4" fill="#3d2049" text-anchor="start" font-weight="normal" stroke="#3d2049" stroke-width="0.3" >air torch</text><rect x="1649.00" y="636.60" width="55.50" height="8.60" fill="#d6d6d6" stroke="#5a5a5a" stroke-width="1.05"/><text x="1650.40" y="643.92" font-size="8.4" fill="#151515" text-anchor="start" font-weight="normal" stroke="#151515" stroke-width="0.3" >Ext. In</text><path d="M1697.80 639.20h5l-2.5 3.6z" fill="#111"/><rect x="1649.00" y="650.30" width="55.50" height="8.70" fill="#d6d6d6" stroke="#5a5a5a" stroke-width="1.05"/><rect x="1651.00" y="652.40" width="1.20" height="4.50" fill="#222" /><rect x="1652.70" y="652.40" width="1.60" height="4.50" fill="#222" /><text x="1657.20" y="657.67" font-size="8.4" fill="#151515" text-anchor="start" font-weight="normal" stroke="#151515" stroke-width="0.3" >1</text><path d="M1697.80 652.95h5l-2.5 3.6z" fill="#111"/><rect x="1649.70" y="664.00" width="11.90" height="8.70" fill="#d6d6d6" stroke="#5a5a5a" stroke-width="1.05"/><text x="1655.65" y="671.30" font-size="8.2" fill="#151515" text-anchor="middle" font-weight="normal" stroke="#151515" stroke-width="0.3" >In</text><rect x="1665.20" y="664.00" width="20.80" height="8.70" fill="#d6d6d6" stroke="#5a5a5a" stroke-width="1.05"/><text x="1675.60" y="671.30" font-size="8.2" fill="#151515" text-anchor="middle" font-weight="normal" stroke="#151515" stroke-width="0.3" >Auto</text><rect x="1689.00" y="664.00" width="15.50" height="8.70" fill="#ffb400" stroke="#5a5a5a" stroke-width="1.05"/><text x="1696.75" y="671.30" font-size="8.2" fill="#151515" text-anchor="middle" font-weight="normal" stroke="#151515" stroke-width="0.3" >Off</text><rect x="1649.00" y="677.80" width="55.50" height="8.60" fill="#d6d6d6" stroke="#5a5a5a" stroke-width="1.05"/><text x="1650.40" y="685.12" font-size="8.4" fill="#151515" text-anchor="start" font-weight="normal" stroke="#151515" stroke-width="0.3" >torch</text><path d="M1697.80 680.40h5l-2.5 3.6z" fill="#111"/><rect x="1649.00" y="691.20" width="55.50" height="8.80" fill="#8e8e8e" stroke="#5e5e5e" stroke-width="1.05"/><rect x="1710.40" y="636.60" width="35.90" height="8.60" fill="#ffb400" stroke="#5a5a5a" stroke-width="1.05"/><text x="1728.35" y="644.07" font-size="8.8" fill="#151515" text-anchor="middle" font-weight="bold"  >37</text><rect x="1750.60" y="636.60" width="15.60" height="8.60" fill="#d6d6d6" stroke="#5a5a5a" stroke-width="1.05"/><text x="1758.40" y="643.92" font-size="8.4" fill="#151515" text-anchor="middle" font-weight="normal" stroke="#151515" stroke-width="0.3" >S</text><rect x="1770.40" y="636.60" width="16.10" height="8.60" fill="#d6d6d6" stroke="#5a5a5a" stroke-width="1.05"/><circle cx="1778.45" cy="640.90" r="2.6" fill="#0c0c0c"/><rect x="1710.40" y="650.30" width="35.90" height="8.70" fill="#d6d6d6" stroke="#5a5a5a" stroke-width="1.05"/><rect x="1711.00" y="650.90" width="29.40" height="7.50" fill="#00cbdd" /><text x="1728.35" y="657.75" font-size="8.6" fill="#151515" text-anchor="middle" font-weight="normal" stroke="#151515" stroke-width="0.3" >0</text><rect x="1750.60" y="650.30" width="35.90" height="8.70" fill="#d6d6d6" stroke="#5a5a5a" stroke-width="1.05"/><text x="1768.55" y="657.75" font-size="8.6" fill="#151515" text-anchor="middle" font-weight="normal" stroke="#151515" stroke-width="0.3" >C</text><rect x="1710.40" y="664.00" width="22.60" height="8.70" fill="#d6d6d6" stroke="#5a5a5a" stroke-width="1.05"/><text x="1721.70" y="671.65" font-size="8.6" fill="#151515" text-anchor="middle" stroke="#151515" stroke-width=".25">-<tspan font-size="12.5" dy=".7">∞</tspan></text><rect x="1736.80" y="664.00" width="23.20" height="8.70" fill="#d6d6d6" stroke="#5a5a5a" stroke-width="1.05"/><text x="1748.40" y="671.65" font-size="8.6" fill="#151515" text-anchor="middle" stroke="#151515" stroke-width=".25">-<tspan font-size="12.5" dy=".7">∞</tspan></text><rect x="1790.60" y="635.60" width="2.20" height="65.60" fill="#1d1d1d" /><rect x="1793.80" y="635.60" width="2.20" height="65.60" fill="#1d1d1d" /><rect x="1789.60" y="638.80" width="7.40" height="0.80" fill="#939393" /><rect x="1536.40" y="704.20" width="109.40" height="69.70" fill="#b97dca" /><line x1="1536.20" y1="704.20" x2="1536.20" y2="773.80" stroke="#6d4a7c" stroke-width="0.8" /><circle cx="1543.8" cy="711.3000000000001" r="4.6" fill="none" stroke="#47265a" stroke-width="1"/><path d="M1541.20 709.80h5.2l-2.6 3.6z" fill="#47265a"/><text x="1551.20" y="714.40" font-size="9.4" fill="#3d2049" text-anchor="start" font-weight="normal" stroke="#3d2049" stroke-width="0.3" >welder</text><rect x="1649.00" y="707.20" width="55.50" height="8.60" fill="#d6d6d6" stroke="#5a5a5a" stroke-width="1.05"/><text x="1650.40" y="714.52" font-size="8.4" fill="#151515" text-anchor="start" font-weight="normal" stroke="#151515" stroke-width="0.3" >Ext. In</text><path d="M1697.80 709.80h5l-2.5 3.6z" fill="#111"/><rect x="1649.00" y="720.90" width="55.50" height="8.70" fill="#d6d6d6" stroke="#5a5a5a" stroke-width="1.05"/><rect x="1651.00" y="723.00" width="1.20" height="4.50" fill="#222" /><rect x="1652.70" y="723.00" width="1.60" height="4.50" fill="#222" /><text x="1657.20" y="728.27" font-size="8.4" fill="#151515" text-anchor="start" font-weight="normal" stroke="#151515" stroke-width="0.3" >1</text><path d="M1697.80 723.55h5l-2.5 3.6z" fill="#111"/><rect x="1649.70" y="734.60" width="11.90" height="8.70" fill="#d6d6d6" stroke="#5a5a5a" stroke-width="1.05"/><text x="1655.65" y="741.90" font-size="8.2" fill="#151515" text-anchor="middle" font-weight="normal" stroke="#151515" stroke-width="0.3" >In</text><rect x="1665.20" y="734.60" width="20.80" height="8.70" fill="#d6d6d6" stroke="#5a5a5a" stroke-width="1.05"/><text x="1675.60" y="741.90" font-size="8.2" fill="#151515" text-anchor="middle" font-weight="normal" stroke="#151515" stroke-width="0.3" >Auto</text><rect x="1689.00" y="734.60" width="15.50" height="8.70" fill="#ffb400" stroke="#5a5a5a" stroke-width="1.05"/><text x="1696.75" y="741.90" font-size="8.2" fill="#151515" text-anchor="middle" font-weight="normal" stroke="#151515" stroke-width="0.3" >Off</text><rect x="1649.00" y="748.40" width="55.50" height="8.60" fill="#d6d6d6" stroke="#5a5a5a" stroke-width="1.05"/><text x="1650.40" y="755.72" font-size="8.4" fill="#151515" text-anchor="start" font-weight="normal" stroke="#151515" stroke-width="0.3" >torch</text><path d="M1697.80 751.00h5l-2.5 3.6z" fill="#111"/><rect x="1649.00" y="761.80" width="55.50" height="8.80" fill="#8e8e8e" stroke="#5e5e5e" stroke-width="1.05"/><rect x="1710.40" y="707.20" width="35.90" height="8.60" fill="#ffb400" stroke="#5a5a5a" stroke-width="1.05"/><text x="1728.35" y="714.67" font-size="8.8" fill="#151515" text-anchor="middle" font-weight="bold"  >38</text><rect x="1750.60" y="707.20" width="15.60" height="8.60" fill="#d6d6d6" stroke="#5a5a5a" stroke-width="1.05"/><text x="1758.40" y="714.52" font-size="8.4" fill="#151515" text-anchor="middle" font-weight="normal" stroke="#151515" stroke-width="0.3" >S</text><rect x="1770.40" y="707.20" width="16.10" height="8.60" fill="#d6d6d6" stroke="#5a5a5a" stroke-width="1.05"/><circle cx="1778.45" cy="711.50" r="2.6" fill="#0c0c0c"/><rect x="1710.40" y="720.90" width="35.90" height="8.70" fill="#d6d6d6" stroke="#5a5a5a" stroke-width="1.05"/><rect x="1711.00" y="721.50" width="29.40" height="7.50" fill="#00cbdd" /><text x="1728.35" y="728.35" font-size="8.6" fill="#151515" text-anchor="middle" font-weight="normal" stroke="#151515" stroke-width="0.3" >0</text><rect x="1750.60" y="720.90" width="35.90" height="8.70" fill="#d6d6d6" stroke="#5a5a5a" stroke-width="1.05"/><text x="1768.55" y="728.35" font-size="8.6" fill="#151515" text-anchor="middle" font-weight="normal" stroke="#151515" stroke-width="0.3" >C</text><rect x="1710.40" y="734.60" width="22.60" height="8.70" fill="#d6d6d6" stroke="#5a5a5a" stroke-width="1.05"/><text x="1721.70" y="742.25" font-size="8.6" fill="#151515" text-anchor="middle" stroke="#151515" stroke-width=".25">-<tspan font-size="12.5" dy=".7">∞</tspan></text><rect x="1736.80" y="734.60" width="23.20" height="8.70" fill="#d6d6d6" stroke="#5a5a5a" stroke-width="1.05"/><text x="1748.40" y="742.25" font-size="8.6" fill="#151515" text-anchor="middle" stroke="#151515" stroke-width=".25">-<tspan font-size="12.5" dy=".7">∞</tspan></text><rect x="1790.60" y="706.20" width="2.20" height="65.60" fill="#1d1d1d" /><rect x="1793.80" y="706.20" width="2.20" height="65.60" fill="#1d1d1d" /><rect x="1789.60" y="709.40" width="7.40" height="0.80" fill="#939393" /><rect x="1533.40" y="775.20" width="112.40" height="14.20" fill="#c9a3c8" /><circle cx="1539.8" cy="782.3" r="4.6" fill="none" stroke="#4f3350" stroke-width="1"/><path d="M1538.40 779.70v5.2l3.5-2.6z" fill="#4f3350"/><text x="1547.20" y="785.40" font-size="9.4" fill="#3f2a42" text-anchor="start" font-weight="normal" stroke="#3f2a42" stroke-width="0.3" >metal grindr</text><rect x="1649.00" y="777.80" width="55.50" height="9.00" fill="#8e8e8e" stroke="#5e5e5e" stroke-width="1.05"/><rect x="1710.40" y="777.80" width="35.90" height="9.00" fill="#ffb400" stroke="#5a5a5a" stroke-width="1.05"/><text x="1728.35" y="785.47" font-size="8.8" fill="#151515" text-anchor="middle" font-weight="bold"  >39</text><rect x="1750.60" y="777.80" width="15.60" height="9.00" fill="#d6d6d6" stroke="#5a5a5a" stroke-width="1.05"/><text x="1758.40" y="785.32" font-size="8.4" fill="#151515" text-anchor="middle" font-weight="normal" stroke="#151515" stroke-width="0.3" >S</text><rect x="1770.40" y="777.80" width="16.10" height="9.00" fill="#d6d6d6" stroke="#5a5a5a" stroke-width="1.05"/><circle cx="1778.45" cy="782.3" r="2.6" fill="#0c0c0c"/><rect x="1790.60" y="777.20" width="2.20" height="10.20" fill="#1d1d1d" /><rect x="1793.80" y="777.20" width="2.20" height="10.20" fill="#1d1d1d" /><rect x="1789.60" y="779.40" width="7.40" height="0.80" fill="#939393" /><rect x="1533.40" y="790.40" width="112.40" height="7.00" fill="#b464b8" /><circle cx="1539.8" cy="797.6" r="4.6" fill="none" stroke="#4a224d" stroke-width="1"/><rect x="1649.00" y="793.00" width="55.50" height="8.80" fill="#8e8e8e" stroke="#5e5e5e" stroke-width="1.05"/><rect x="1710.40" y="793.00" width="35.90" height="8.80" fill="#ffb400" stroke="#5a5a5a" stroke-width="1.05"/><text x="1728.35" y="800.60" font-size="8.8" fill="#151515" text-anchor="middle" font-weight="bold"  >40</text><rect x="1750.60" y="793.00" width="15.60" height="8.80" fill="#d6d6d6" stroke="#5a5a5a" stroke-width="1.05"/><text x="1758.40" y="800.60" font-size="8.4" fill="#151515" text-anchor="middle" font-weight="normal" stroke="#151515" stroke-width="0.3" >S</text><rect x="1770.40" y="793.00" width="16.10" height="8.80" fill="#d6d6d6" stroke="#5a5a5a" stroke-width="1.05"/><circle cx="1778.45" cy="797.4" r="2.6" fill="#0c0c0c"/><rect x="1790.60" y="792.40" width="2.20" height="7.60" fill="#1d1d1d" /><rect x="1793.80" y="792.40" width="2.20" height="7.60" fill="#1d1d1d" /><rect x="1789.60" y="794.60" width="7.40" height="0.80" fill="#939393" /><rect x="1520.00" y="797.00" width="284.30" height="65.00" fill="#939393" /><rect x="1520.20" y="799.00" width="125.60" height="13.60" fill="#dd73e4" /><circle cx="1527.7" cy="805.8" r="4.6" fill="none" stroke="#5a1f60" stroke-width="1"/><path d="M1526.30 803.20v5.2l3.5-2.6z" fill="#5a1f60"/><text x="1536.00" y="809.00" font-size="9.2" fill="#4a1a50" text-anchor="start" font-weight="normal"  stroke="#4a1a50" stroke-width=".35">A Reverb</text><rect x="1649.00" y="801.10" width="55.50" height="9.30" fill="#8e8e8e" stroke="#5e5e5e" stroke-width="1.05"/><rect x="1710.40" y="801.10" width="35.90" height="9.30" fill="#ffb400" stroke="#5a5a5a" stroke-width="1.05"/><text x="1728.35" y="808.92" font-size="8.8" fill="#151515" text-anchor="middle" font-weight="bold"  >A</text><rect x="1750.60" y="801.10" width="12.60" height="9.30" fill="#d6d6d6" stroke="#5a5a5a" stroke-width="1.05"/><text x="1756.90" y="808.77" font-size="8.4" fill="#151515" text-anchor="middle" font-weight="normal" stroke="#151515" stroke-width="0.3" >S</text><rect x="1767.40" y="801.10" width="19.10" height="9.30" fill="#ffb400" stroke="#5a5a5a" stroke-width="1.05"/><text x="1776.95" y="808.70" font-size="8.2" fill="#151515" text-anchor="middle" font-weight="normal" stroke="#151515" stroke-width="0.3" >Post</text><rect x="1790.60" y="800.60" width="2.20" height="10.20" fill="#1d1d1d" /><rect x="1793.80" y="800.60" width="2.20" height="10.20" fill="#1d1d1d" /><rect x="1789.60" y="802.80" width="7.40" height="0.80" fill="#939393" /><rect x="1520.20" y="814.00" width="125.60" height="14.00" fill="#5b85e4" /><circle cx="1527.7" cy="821.0" r="4.6" fill="none" stroke="#16296a" stroke-width="1"/><path d="M1526.30 818.40v5.2l3.5-2.6z" fill="#16296a"/><text x="1536.00" y="824.20" font-size="9.2" fill="#14265e" text-anchor="start" font-weight="normal"  stroke="#14265e" stroke-width=".35">B Delay</text><rect x="1649.00" y="816.10" width="55.50" height="9.70" fill="#8e8e8e" stroke="#5e5e5e" stroke-width="1.05"/><rect x="1710.40" y="816.10" width="35.90" height="9.70" fill="#ffb400" stroke="#5a5a5a" stroke-width="1.05"/><text x="1728.35" y="824.12" font-size="8.8" fill="#151515" text-anchor="middle" font-weight="bold"  >B</text><rect x="1750.60" y="816.10" width="12.60" height="9.70" fill="#d6d6d6" stroke="#5a5a5a" stroke-width="1.05"/><text x="1756.90" y="823.97" font-size="8.4" fill="#151515" text-anchor="middle" font-weight="normal" stroke="#151515" stroke-width="0.3" >S</text><rect x="1767.40" y="816.10" width="19.10" height="9.70" fill="#ffb400" stroke="#5a5a5a" stroke-width="1.05"/><text x="1776.95" y="823.90" font-size="8.2" fill="#151515" text-anchor="middle" font-weight="normal" stroke="#151515" stroke-width="0.3" >Post</text><rect x="1790.60" y="815.60" width="2.20" height="10.60" fill="#1d1d1d" /><rect x="1793.80" y="815.60" width="2.20" height="10.60" fill="#1d1d1d" /><rect x="1789.60" y="817.80" width="7.40" height="0.80" fill="#939393" /><rect x="1520.20" y="829.20" width="125.60" height="14.20" fill="#c3fd00" /><circle cx="1527.7" cy="836.2" r="4.6" fill="none" stroke="#3c4d00" stroke-width="1"/><path d="M1526.30 833.60v5.2l3.5-2.6z" fill="#3c4d00"/><text x="1537.80" y="839.40" font-size="9.2" fill="#2c3a00" text-anchor="start" font-weight="normal"  stroke="#2c3a00" stroke-width=".35">Main</text><rect x="1649.00" y="831.60" width="55.50" height="9.20" fill="#d6d6d6" stroke="#5a5a5a" stroke-width="1.05"/><rect x="1651.00" y="833.70" width="1.10" height="5.00" fill="#222" /><rect x="1653.00" y="833.70" width="1.10" height="5.00" fill="#222" /><text x="1657.40" y="839.22" font-size="8.4" fill="#151515" text-anchor="start" font-weight="normal" stroke="#151515" stroke-width="0.3" >1/2</text><path d="M1697.80 834.50h5l-2.5 3.6z" fill="#111"/><rect x="1710.40" y="831.60" width="35.90" height="9.20" fill="#d6d6d6" stroke="#5a5a5a" stroke-width="1.05"/><rect x="1711.00" y="832.20" width="29.40" height="8.00" fill="#00cbdd" /><text x="1728.35" y="839.30" font-size="8.6" fill="#151515" text-anchor="middle" font-weight="normal" stroke="#151515" stroke-width="0.3" >0</text><rect x="1750.60" y="831.60" width="35.90" height="9.20" fill="#d6d6d6" stroke="#5a5a5a" stroke-width="1.05"/><rect x="1751.20" y="832.20" width="23.20" height="8.00" fill="#1f7be9" /><text x="1768.55" y="839.30" font-size="8.6" fill="#151515" text-anchor="middle" font-weight="normal" stroke="#151515" stroke-width="0.3" >-8.0</text><rect x="1790.60" y="831.00" width="2.20" height="10.40" fill="#1d1d1d" /><rect x="1793.80" y="831.00" width="2.20" height="10.40" fill="#1d1d1d" /><rect x="1789.60" y="833.20" width="7.40" height="0.80" fill="#939393" /><line x1="1533.00" y1="632.90" x2="1804.30" y2="632.90" stroke="#555" stroke-width="1.1" /><line x1="1533.00" y1="703.60" x2="1804.30" y2="703.60" stroke="#555" stroke-width="1.1" /><line x1="1533.00" y1="774.60" x2="1804.30" y2="774.60" stroke="#555" stroke-width="1.1" /><line x1="1533.00" y1="789.80" x2="1804.30" y2="789.80" stroke="#555" stroke-width="1.1" /><line x1="1520.00" y1="812.90" x2="1804.30" y2="812.90" stroke="#555" stroke-width="1.1" /><line x1="1520.00" y1="828.40" x2="1804.30" y2="828.40" stroke="#555" stroke-width="1.1" /><line x1="1520.00" y1="843.90" x2="1804.30" y2="843.90" stroke="#555" stroke-width="1.1" /><line x1="1520.00" y1="797.90" x2="1804.30" y2="797.90" stroke="#4c4c4c" stroke-width="1.8" /><line x1="1646.20" y1="560.00" x2="1646.20" y2="843.90" stroke="#555" stroke-width="1.1" /><line x1="1707.40" y1="560.00" x2="1707.40" y2="843.90" stroke="#555" stroke-width="1.1" /><rect x="1521.10" y="848.60" width="11.10" height="9.10" fill="#ffb400" stroke="#5a5a5a" stroke-width="1.05"/><path d="M1523 853.1h7.4M1524.8 851v4.2M1526.7 850v6.2M1528.6 851v4.2" stroke="#3a2a00" stroke-width="1"/><rect x="1535.80" y="848.60" width="27.30" height="9.10" fill="#d6d6d6" stroke="#5a5a5a" stroke-width="1.05"/><rect x="1536.40" y="849.20" width="7.20" height="7.90" fill="#00cbdd" /><text x="1549.45" y="856.10" font-size="8.2" fill="#151515" text-anchor="middle" font-weight="normal" stroke="#151515" stroke-width="0.3" >1.00x</text><rect x="1618.60" y="848.60" width="11.00" height="9.10" fill="#939393" stroke="#3a3a3a" stroke-width="1.05"/><text x="1624.10" y="856.03" font-size="8" fill="#151515" text-anchor="middle" font-weight="normal" stroke="#151515" stroke-width="0.3" >H</text><rect x="1632.90" y="848.60" width="11.40" height="9.10" fill="#939393" stroke="#3a3a3a" stroke-width="1.05"/><text x="1638.60" y="856.03" font-size="8" fill="#151515" text-anchor="middle" font-weight="normal" stroke="#151515" stroke-width="0.3" >W</text></g></svg><div class="win" style="left:45.8px;top:862.2px;width:1857.4px;height:221.0px;background:#5b5b5b;box-shadow:0 0 2px rgba(0,0,0,.4)"></div><svg width="1979" height="1153" viewBox="0 0 1979 1153"><rect x="55.9" y="868.8" width="521.60" height="203.60" rx="2.6" fill="#b3b3b3"/><path d="M55.9 887.3v-15.90q0-2.6 2.6-2.6h516.40q2.6 0 2.6 2.6v15.90z" fill="#a9c4cb"/><circle cx="65.80" cy="878.4" r="6.1" fill="#ffb400" stroke="#3a2f10" stroke-width="1.1"/><circle cx="83.20" cy="878.4" r="6.1" fill="#c9c9c9" stroke="#2a2a2a" stroke-width="1.1"/><path d="M83.20 880.6v-5.6M80.70 877.2l2.5-2.6 2.5 2.6M80.20 882h6" fill="none" stroke="#1a1a1a" stroke-width="1.3"/><text x="94.90" y="882.10" font-size="10.3" fill="#111" text-anchor="start" font-weight="bold"  >EQ Eight</text><circle cx="531.2" cy="878.4" r="6.1" fill="#c9c9c9" stroke="#2a2a2a" stroke-width="1.1"/><path d="M527.90 879.60a3.4 3.4 0 0 1 4.4-4.4M534.50 877.20a3.4 3.4 0 0 1-4.4 4.4" fill="none" stroke="#1a1a1a" stroke-width="1.5"/><path d="M531.40 873.50l3 2-3.2 1.6zM531.00 883.30l-3-2 3.2-1.6z" fill="#1a1a1a"/><circle cx="548.7" cy="878.4" r="6.1" fill="#c9c9c9" stroke="#2a2a2a" stroke-width="1.1"/><path d="M545.10 874.50h5.4l1.8 1.8v5.9h-7.2z" fill="#1a1a1a"/><rect x="546.80" y="875.40" width="3" height="2.2" rx=".6" fill="#c9c9c9"/><circle cx="566.1" cy="878.4" r="6.1" fill="#c9c9c9" stroke="#2a2a2a" stroke-width="1.1"/><circle cx="563.20" cy="878.4" r="1.15" fill="#1a1a1a"/><circle cx="566.10" cy="878.4" r="1.15" fill="#1a1a1a"/><circle cx="569.00" cy="878.4" r="1.15" fill="#1a1a1a"/><path d="M148.20 884.8q-2.6-2-3.6-5.4l1.4-.6 1.6 2.4-.8-6.6 1.5-.3 1.2 4.6.1-5.6h1.6l.4 5.5 1.2-4.8 1.5.3-.7 5.4 1.8-3.4 1.3.7q-1.2 3.6-2.4 5.4t-2 2.4z" fill="#3b3be8"/><rect x="57.80" y="887.30" width="51.90" height="183.20" fill="#a1a1a1" /><text x="84.29" y="899.50" font-size="10.8" fill="#161616" text-anchor="middle" font-weight="normal" stroke="#161616" stroke-width="0.3" letter-spacing="0.38">Freq</text><path d="M76.82 927.00A12.7 12.7 0 1 1 91.38 927.00" fill="none" stroke="#222" stroke-width="2.4"/><path d="M76.82 927.00A12.7 12.7 0 1 1 96.75 915.49" fill="none" stroke="#11dcf2" stroke-width="2.6"/><line x1="83.50" y1="916.65" x2="97.75" y2="915.41" stroke="#222" stroke-width="2.4"/><text x="83.69" y="938.40" font-size="10.8" fill="#161616" text-anchor="middle" font-weight="normal" stroke="#161616" stroke-width="0.3" letter-spacing="0.38">4.45 kHz</text><text x="84.29" y="959.20" font-size="10.8" fill="#161616" text-anchor="middle" font-weight="normal" stroke="#161616" stroke-width="0.3" letter-spacing="0.38">Gain</text><path d="M76.82 992.10A12.7 12.7 0 1 1 91.38 992.10" fill="none" stroke="#222" stroke-width="2.4"/><path d="M71.49 983.25A12.7 12.7 0 0 1 84.10 969.00" fill="none" stroke="#11dcf2" stroke-width="2.6"/><line x1="84.70" y1="981.63" x2="70.50" y2="983.37" stroke="#222" stroke-width="2.4"/><path d="M80.00 962.20h8.2l-4.1 4.9z" fill="#11dcf2"/><text x="84.29" y="1004.70" font-size="10.8" fill="#161616" text-anchor="middle" font-weight="normal" stroke="#161616" stroke-width="0.3" letter-spacing="0.38">-9.55 dB</text><text x="84.29" y="1026.20" font-size="10.8" fill="#161616" text-anchor="middle" font-weight="normal" stroke="#161616" stroke-width="0.3" letter-spacing="0.38">Q</text><path d="M76.82 1052.80A12.7 12.7 0 1 1 91.38 1052.80" fill="none" stroke="#222" stroke-width="2.4"/><path d="M76.82 1052.80A12.7 12.7 0 0 1 71.78 1039.33" fill="none" stroke="#11dcf2" stroke-width="2.6"/><line x1="84.68" y1="1042.55" x2="70.81" y2="1039.09" stroke="#222" stroke-width="2.4"/><text x="84.29" y="1065.20" font-size="10.8" fill="#161616" text-anchor="middle" font-weight="normal" stroke="#161616" stroke-width="0.3" letter-spacing="0.38">0.36</text><rect x="112.20" y="887.80" width="405.10" height="144.60" fill="#1e1e1e" /><clipPath id="eqc55"><rect x="112.19999999999999" y="887.8" width="405.09999999999997" height="144.60000000000014"/></clipPath><g clip-path="url(#eqc55)"><line x1="149.40" y1="887.80" x2="149.40" y2="1032.40" stroke="#2c2c2c" stroke-width="1" /><line x1="170.64" y1="887.80" x2="170.64" y2="1032.40" stroke="#2c2c2c" stroke-width="1" /><line x1="185.71" y1="887.80" x2="185.71" y2="1032.40" stroke="#2c2c2c" stroke-width="1" /><line x1="197.40" y1="887.80" x2="197.40" y2="1032.40" stroke="#2c2c2c" stroke-width="1" /><line x1="206.95" y1="887.80" x2="206.95" y2="1032.40" stroke="#2c2c2c" stroke-width="1" /><line x1="215.02" y1="887.80" x2="215.02" y2="1032.40" stroke="#2c2c2c" stroke-width="1" /><line x1="222.01" y1="887.80" x2="222.01" y2="1032.40" stroke="#2c2c2c" stroke-width="1" /><line x1="228.18" y1="887.80" x2="228.18" y2="1032.40" stroke="#2c2c2c" stroke-width="1" /><line x1="233.70" y1="887.80" x2="233.70" y2="1032.40" stroke="#3a3a3a" stroke-width="1" /><line x1="270.00" y1="887.80" x2="270.00" y2="1032.40" stroke="#2c2c2c" stroke-width="1" /><line x1="291.24" y1="887.80" x2="291.24" y2="1032.40" stroke="#2c2c2c" stroke-width="1" /><line x1="306.31" y1="887.80" x2="306.31" y2="1032.40" stroke="#2c2c2c" stroke-width="1" /><line x1="318.00" y1="887.80" x2="318.00" y2="1032.40" stroke="#2c2c2c" stroke-width="1" /><line x1="327.55" y1="887.80" x2="327.55" y2="1032.40" stroke="#2c2c2c" stroke-width="1" /><line x1="335.62" y1="887.80" x2="335.62" y2="1032.40" stroke="#2c2c2c" stroke-width="1" /><line x1="342.61" y1="887.80" x2="342.61" y2="1032.40" stroke="#2c2c2c" stroke-width="1" /><line x1="348.78" y1="887.80" x2="348.78" y2="1032.40" stroke="#2c2c2c" stroke-width="1" /><line x1="354.30" y1="887.80" x2="354.30" y2="1032.40" stroke="#3a3a3a" stroke-width="1" /><line x1="390.60" y1="887.80" x2="390.60" y2="1032.40" stroke="#2c2c2c" stroke-width="1" /><line x1="411.84" y1="887.80" x2="411.84" y2="1032.40" stroke="#2c2c2c" stroke-width="1" /><line x1="426.91" y1="887.80" x2="426.91" y2="1032.40" stroke="#2c2c2c" stroke-width="1" /><line x1="438.60" y1="887.80" x2="438.60" y2="1032.40" stroke="#2c2c2c" stroke-width="1" /><line x1="448.15" y1="887.80" x2="448.15" y2="1032.40" stroke="#2c2c2c" stroke-width="1" /><line x1="456.22" y1="887.80" x2="456.22" y2="1032.40" stroke="#2c2c2c" stroke-width="1" /><line x1="463.21" y1="887.80" x2="463.21" y2="1032.40" stroke="#2c2c2c" stroke-width="1" /><line x1="469.38" y1="887.80" x2="469.38" y2="1032.40" stroke="#2c2c2c" stroke-width="1" /><line x1="474.90" y1="887.80" x2="474.90" y2="1032.40" stroke="#3a3a3a" stroke-width="1" /><line x1="511.20" y1="887.80" x2="511.20" y2="1032.40" stroke="#2c2c2c" stroke-width="1" /><line x1="136.20" y1="902.00" x2="517.30" y2="902.00" stroke="#363636" stroke-width="1" /><line x1="136.20" y1="930.90" x2="517.30" y2="930.90" stroke="#363636" stroke-width="1" /><line x1="136.20" y1="959.80" x2="517.30" y2="959.80" stroke="#363636" stroke-width="1" /><line x1="136.20" y1="988.70" x2="517.30" y2="988.70" stroke="#363636" stroke-width="1" /><line x1="136.20" y1="1017.60" x2="517.30" y2="1017.60" stroke="#363636" stroke-width="1" /><path d="M173.9 1031.8L182.1 1019.4L186.2 1021.4L194.5 1029.7L202.1 1015.3L206.8 1022.5L211.0 1030.7L219.2 1004.9L224.4 1011.1L230.6 1010.1L235.7 1013.2L240.9 1000.8L246.0 1017.3L252.2 1012.2L257.4 984.3L261.5 981.2L265.0 969.9L268.7 1001.9L272.8 1006.0L275.9 967.8L279.0 1001.9L283.1 1011.1L287.3 997.7L291.4 1008.0L296.1 976.1L300.7 997.7L304.8 1006.0L308.9 995.7L312.4 957.5L315.1 997.7L319.2 991.5L323.3 981.2L326.4 999.8L330.1 1006.0L333.6 993.6L336.7 1018.4L340.9 1022.5L345.0 1008.0L349.1 999.8L353.2 981.2L356.3 997.7L360.5 979.2L364.6 964.7L367.7 991.5L370.8 977.1L374.9 978.1L378.0 975.1L381.1 997.7L385.2 999.8L389.3 1008.0L393.4 1020.4L396.5 989.5L399.6 999.8L402.7 1003.9L404.8 1008.0L406.4 1031.8z" fill="#4b4b4b"/><text x="132.60" y="906.50" font-size="10.8" fill="#a8a8a8" text-anchor="end" font-weight="normal" stroke="#a8a8a8" stroke-width="0.3" letter-spacing="0.38">12</text><text x="132.60" y="935.40" font-size="10.8" fill="#a8a8a8" text-anchor="end" font-weight="normal" stroke="#a8a8a8" stroke-width="0.3" letter-spacing="0.38">6</text><text x="132.60" y="964.30" font-size="10.8" fill="#a8a8a8" text-anchor="end" font-weight="normal" stroke="#a8a8a8" stroke-width="0.3" letter-spacing="0.38">0</text><text x="132.60" y="993.20" font-size="10.8" fill="#a8a8a8" text-anchor="end" font-weight="normal" stroke="#a8a8a8" stroke-width="0.3" letter-spacing="0.38">-6</text><text x="132.60" y="1022.10" font-size="10.8" fill="#a8a8a8" text-anchor="end" font-weight="normal" stroke="#a8a8a8" stroke-width="0.3" letter-spacing="0.38">-12</text><text x="233.29" y="1030.50" font-size="11.2" fill="#a0a0a0" text-anchor="middle" font-weight="normal" stroke="#a0a0a0" stroke-width="0.3" letter-spacing="0.38">100</text><text x="353.89" y="1030.50" font-size="11.2" fill="#a0a0a0" text-anchor="middle" font-weight="normal" stroke="#a0a0a0" stroke-width="0.3" letter-spacing="0.38">1k</text><text x="474.49" y="1030.50" font-size="11.2" fill="#a0a0a0" text-anchor="middle" font-weight="normal" stroke="#a0a0a0" stroke-width="0.3" letter-spacing="0.38">10k</text><path d="M151.0 1032.3C154.8 1026.9 167.3 1008.3 174.0 999.8C180.7 991.2 187.0 985.3 191.3 981.0C195.6 976.7 196.2 976.5 200.0 973.8C203.8 971.1 209.0 966.9 214.3 964.6C219.6 962.4 222.1 961.5 231.6 960.3C241.1 959.1 259.4 959.2 271.4 957.6C283.4 956.0 293.4 953.8 303.6 950.8C313.8 947.8 323.8 942.5 332.4 939.3C340.9 936.1 349.6 932.8 354.9 931.5C360.2 930.2 358.1 929.2 364.0 931.5C369.9 933.8 381.8 940.4 390.0 945.0C398.2 949.6 405.8 953.6 413.0 959.4C420.2 965.2 427.4 973.6 433.2 979.6C439.0 985.6 442.8 991.6 447.6 995.4C452.4 999.2 456.7 1000.9 462.0 1002.6C467.3 1004.3 470.0 1005.0 479.3 1005.5C488.6 1006.0 511.5 1005.8 517.9 1005.8" fill="none" stroke="#11dcf2" stroke-width="1.9"/><circle cx="199.9" cy="975.9" r="6.2" fill="none" stroke="#ffb400" stroke-width="1.5"/><text x="200.09" y="979.20" font-size="9.2" fill="#ffb400" text-anchor="middle" font-weight="normal" stroke="#ffb400" stroke-width="0.3" letter-spacing="0.38">1</text><circle cx="271.4" cy="959.4" r="6.2" fill="none" stroke="#ffb400" stroke-width="1.5"/><text x="271.59" y="962.70" font-size="9.2" fill="#ffb400" text-anchor="middle" font-weight="normal" stroke="#ffb400" stroke-width="0.3" letter-spacing="0.38">2</text><circle cx="354.9" cy="933.5" r="6.2" fill="none" stroke="#ffb400" stroke-width="1.5"/><text x="355.09" y="936.80" font-size="9.2" fill="#ffb400" text-anchor="middle" font-weight="normal" stroke="#ffb400" stroke-width="0.3" letter-spacing="0.38">3</text><circle cx="435.2" cy="959.4" r="6.2" fill="none" stroke="#ffb400" stroke-width="1.5"/><text x="435.39" y="962.70" font-size="9.2" fill="#ffb400" text-anchor="middle" font-weight="normal" stroke="#ffb400" stroke-width="0.3" letter-spacing="0.38">4</text><circle cx="428.9" cy="1001.2" r="7" fill="#ffb400"/><text x="429.09" y="1004.50" font-size="9.2" fill="#4a3500" text-anchor="middle" font-weight="normal" stroke="#4a3500" stroke-width="0.3" letter-spacing="0.38">8</text></g><rect x="112.70" y="1034.80" width="48.40" height="35.60" fill="#a6a6a6" /><rect x="116.75" y="1038.85" width="38.90" height="12.00" fill="#dcdcdc" stroke="#2a2a2a" stroke-width="1.1"/><path d="M147.30 1042.9h6l-3 4.2z" fill="#111"/><path d="M119.70 1048.5v-3.8q0-3 3-3h12.6" fill="none" stroke="#1c1c1c" stroke-width="1.1"/><rect x="125.35" y="1056.05" width="10.00" height="10.50" fill="#11dcf2" stroke="#2a2a2a" stroke-width="1.1"/><text x="145.49" y="1065.80" font-size="10.8" fill="#161616" text-anchor="middle" font-weight="normal" stroke="#161616" stroke-width="0.3" letter-spacing="0.38">1</text><rect x="163.42" y="1034.80" width="48.40" height="35.60" fill="#9d9d9d" /><rect x="167.47" y="1038.85" width="38.90" height="12.00" fill="#dcdcdc" stroke="#2a2a2a" stroke-width="1.1"/><path d="M198.02 1042.9h6l-3 4.2z" fill="#111"/><path d="M170.42 1044.9h3.6l3.4-3.6h4.4l3.4 3.6h3M174.02 1044.9l3.4 3.6h4.4l3.4-3.6" fill="none" stroke="#1c1c1c" stroke-width="1.1"/><rect x="176.07" y="1056.05" width="10.00" height="10.50" fill="#11dcf2" stroke="#2a2a2a" stroke-width="1.1"/><text x="196.21" y="1065.80" font-size="10.8" fill="#161616" text-anchor="middle" font-weight="normal" stroke="#161616" stroke-width="0.3" letter-spacing="0.38">2</text><rect x="214.14" y="1034.80" width="48.40" height="35.60" fill="#a6a6a6" /><rect x="218.19" y="1038.85" width="38.90" height="12.00" fill="#dcdcdc" stroke="#2a2a2a" stroke-width="1.1"/><path d="M248.74 1042.9h6l-3 4.2z" fill="#111"/><path d="M221.14 1044.9h3.6l3.4-3.6h4.4l3.4 3.6h3M224.74 1044.9l3.4 3.6h4.4l3.4-3.6" fill="none" stroke="#1c1c1c" stroke-width="1.1"/><rect x="226.79" y="1056.05" width="10.00" height="10.50" fill="#11dcf2" stroke="#2a2a2a" stroke-width="1.1"/><text x="246.93" y="1065.80" font-size="10.8" fill="#161616" text-anchor="middle" font-weight="normal" stroke="#161616" stroke-width="0.3" letter-spacing="0.38">3</text><rect x="264.86" y="1034.80" width="48.40" height="35.60" fill="#9d9d9d" /><rect x="268.91" y="1038.85" width="38.90" height="12.00" fill="#dcdcdc" stroke="#2a2a2a" stroke-width="1.1"/><path d="M299.46 1042.9h6l-3 4.2z" fill="#111"/><path d="M271.86 1044.9h7.4q1.6-3.6 4-3.6h5.6M279.26 1044.9q1.6 3.6 4 3.6h5.6" fill="none" stroke="#1c1c1c" stroke-width="1.1"/><rect x="277.51" y="1056.05" width="10.00" height="10.50" fill="#11dcf2" stroke="#2a2a2a" stroke-width="1.1"/><text x="297.65" y="1065.80" font-size="10.8" fill="#161616" text-anchor="middle" font-weight="normal" stroke="#161616" stroke-width="0.3" letter-spacing="0.38">4</text><rect x="315.58" y="1034.80" width="48.40" height="35.60" fill="#9d9d9d" /><rect x="319.63" y="1038.85" width="38.90" height="12.00" fill="#a3a3a3" stroke="#2a2a2a" stroke-width="1.1"/><path d="M350.18 1042.9h6l-3 4.2z" fill="#111"/><path d="M322.58 1044.9h3.6l3.4-3.6h4.4l3.4 3.6h3M326.18 1044.9l3.4 3.6h4.4l3.4-3.6" fill="none" stroke="#1c1c1c" stroke-width="1.1"/><rect x="328.23" y="1056.05" width="10.00" height="10.50" fill="#d2d2d2" stroke="#2a2a2a" stroke-width="1.1"/><text x="348.37" y="1065.80" font-size="10.8" fill="#161616" text-anchor="middle" font-weight="normal" stroke="#161616" stroke-width="0.3" letter-spacing="0.38">5</text><rect x="366.30" y="1034.80" width="48.40" height="35.60" fill="#9d9d9d" /><rect x="370.35" y="1038.85" width="38.90" height="12.00" fill="#a3a3a3" stroke="#2a2a2a" stroke-width="1.1"/><path d="M400.90 1042.9h6l-3 4.2z" fill="#111"/><path d="M373.30 1044.9h3.6l3.4-3.6h4.4l3.4 3.6h3M376.90 1044.9l3.4 3.6h4.4l3.4-3.6" fill="none" stroke="#1c1c1c" stroke-width="1.1"/><rect x="378.95" y="1056.05" width="10.00" height="10.50" fill="#d2d2d2" stroke="#2a2a2a" stroke-width="1.1"/><text x="399.09" y="1065.80" font-size="10.8" fill="#161616" text-anchor="middle" font-weight="normal" stroke="#161616" stroke-width="0.3" letter-spacing="0.38">6</text><rect x="417.02" y="1034.80" width="48.40" height="35.60" fill="#9d9d9d" /><rect x="421.07" y="1038.85" width="38.90" height="12.00" fill="#a3a3a3" stroke="#2a2a2a" stroke-width="1.1"/><path d="M451.62 1042.9h6l-3 4.2z" fill="#111"/><path d="M424.02 1044.9h3.6l3.4-3.6h4.4l3.4 3.6h3M427.62 1044.9l3.4 3.6h4.4l3.4-3.6" fill="none" stroke="#1c1c1c" stroke-width="1.1"/><rect x="429.67" y="1056.05" width="10.00" height="10.50" fill="#d2d2d2" stroke="#2a2a2a" stroke-width="1.1"/><text x="449.81" y="1065.80" font-size="10.8" fill="#161616" text-anchor="middle" font-weight="normal" stroke="#161616" stroke-width="0.3" letter-spacing="0.38">7</text><rect x="467.74" y="1034.80" width="48.40" height="35.60" fill="#9d9d9d" /><rect x="471.79" y="1038.85" width="38.90" height="12.00" fill="#dcdcdc" stroke="#2a2a2a" stroke-width="1.1"/><path d="M502.34 1042.9h6l-3 4.2z" fill="#111"/><path d="M474.74 1044.9h7.4q1.6-3.6 4-3.6h5.6M482.14 1044.9q1.6 3.6 4 3.6h5.6" fill="none" stroke="#1c1c1c" stroke-width="1.1"/><rect x="480.39" y="1056.05" width="10.00" height="10.50" fill="#11dcf2" stroke="#2a2a2a" stroke-width="1.1"/><text x="500.53" y="1065.80" font-size="10.8" fill="#161616" text-anchor="middle" font-weight="normal" stroke="#161616" stroke-width="0.3" letter-spacing="0.38">8</text><rect x="519.60" y="887.30" width="55.70" height="183.20" fill="#a1a1a1" /><rect x="523.35" y="894.75" width="20.50" height="12.10" fill="#dcdcdc" stroke="#3f3f3f" stroke-width="1.1"/><path d="M530.40 903.80v-2.4a3.2 3.2 0 0 1 6.4 0v2.4" fill="none" stroke="#1a1a1a" stroke-width="1.1"/><rect x="529.70" y="901.60" width="1.9" height="3.2" fill="#1a1a1a"/><rect x="535.60" y="901.60" width="1.9" height="3.2" fill="#1a1a1a"/><rect x="550.15" y="894.75" width="21.10" height="12.10" fill="#ffb400" stroke="#3f3f3f" stroke-width="1.1"/><rect x="553.30" y="901.60" width="1.10" height="3.00" fill="#3a2a00" /><rect x="555.40" y="898.60" width="1.10" height="6.00" fill="#3a2a00" /><rect x="557.50" y="896.20" width="1.10" height="8.40" fill="#3a2a00" /><rect x="559.60" y="899.60" width="1.10" height="5.00" fill="#3a2a00" /><rect x="561.70" y="897.60" width="1.10" height="7.00" fill="#3a2a00" /><rect x="563.80" y="901.20" width="1.10" height="3.40" fill="#3a2a00" /><rect x="565.90" y="899.20" width="1.10" height="5.40" fill="#3a2a00" /><rect x="568.00" y="902.60" width="1.10" height="2.00" fill="#3a2a00" /><rect x="552.90" y="904.60" width="16.40" height="0.90" fill="#3a2a00" /><text x="523.10" y="921.20" font-size="10.8" fill="#161616" text-anchor="start" font-weight="bold"  letter-spacing="0.1">Mode</text><rect x="523.35" y="925.65" width="47.90" height="11.60" fill="#dcdcdc" stroke="#3f3f3f" stroke-width="1.1"/><text x="525.30" y="935.18" font-size="10.8" fill="#161616" text-anchor="start" font-weight="normal" stroke="#161616" stroke-width="0.3" letter-spacing="0.38">Stereo</text><path d="M563.30 929.45h6l-3 4.4z" fill="#111"/><text x="523.10" y="951.40" font-size="10.8" fill="#161616" text-anchor="start" font-weight="bold"  letter-spacing="0.1">Edit</text><rect x="523.35" y="955.85" width="47.90" height="11.60" fill="#c6c6c6" stroke="#3f3f3f" stroke-width="1.1"/><text x="547.49" y="965.38" font-size="10.8" fill="#7d7d7d" text-anchor="middle" font-weight="normal" stroke="#7d7d7d" stroke-width="0.3" letter-spacing="0.38">A</text><text x="523.10" y="982.50" font-size="10.8" fill="#161616" text-anchor="start" font-weight="bold"  letter-spacing="0.1">Adapt. Q</text><rect x="523.35" y="987.55" width="47.90" height="11.60" fill="#ffb400" stroke="#3f3f3f" stroke-width="1.1"/><text x="547.49" y="997.08" font-size="10.8" fill="#161616" text-anchor="middle" font-weight="normal" stroke="#161616" stroke-width="0.3" letter-spacing="0.38">On</text><text x="523.10" y="1014.20" font-size="10.8" fill="#161616" text-anchor="start" font-weight="bold"  letter-spacing="0.1">Scale</text><rect x="523.35" y="1018.65" width="47.90" height="11.80" fill="#d6d6d6" stroke="#3f3f3f" stroke-width="1.1"/><rect x="524.00" y="1019.40" width="35.40" height="10.30" fill="#00cbdd" /><text x="547.49" y="1028.28" font-size="10.8" fill="#161616" text-anchor="middle" font-weight="normal" stroke="#161616" stroke-width="0.3" letter-spacing="0.38">100 %</text><text x="523.10" y="1046.50" font-size="10.8" fill="#161616" text-anchor="start" font-weight="bold"  letter-spacing="0.1">Gain</text><rect x="523.35" y="1051.15" width="47.90" height="11.90" fill="#d6d6d6" stroke="#3f3f3f" stroke-width="1.1"/><rect x="524.00" y="1051.90" width="23.60" height="10.40" fill="#00cbdd" /><text x="547.49" y="1060.83" font-size="10.8" fill="#161616" text-anchor="middle" font-weight="normal" stroke="#161616" stroke-width="0.3" letter-spacing="0.38">0.00 dB</text><rect x="888.5" y="868.8" width="521.60" height="203.60" rx="2.6" fill="#b3b3b3"/><circle cx="898.40" cy="878.4" r="6.1" fill="#ffb400" stroke="#3a2f10" stroke-width="1.1"/><circle cx="915.80" cy="878.4" r="6.1" fill="#c9c9c9" stroke="#2a2a2a" stroke-width="1.1"/><path d="M915.80 880.6v-5.6M913.30 877.2l2.5-2.6 2.5 2.6M912.80 882h6" fill="none" stroke="#1a1a1a" stroke-width="1.3"/><text x="927.50" y="882.10" font-size="10.3" fill="#111" text-anchor="start" font-weight="bold"  >EQ Eight</text><circle cx="1363.8" cy="878.4" r="6.1" fill="#c9c9c9" stroke="#2a2a2a" stroke-width="1.1"/><path d="M1360.50 879.60a3.4 3.4 0 0 1 4.4-4.4M1367.10 877.20a3.4 3.4 0 0 1-4.4 4.4" fill="none" stroke="#1a1a1a" stroke-width="1.5"/><path d="M1364.00 873.50l3 2-3.2 1.6zM1363.60 883.30l-3-2 3.2-1.6z" fill="#1a1a1a"/><circle cx="1381.3" cy="878.4" r="6.1" fill="#c9c9c9" stroke="#2a2a2a" stroke-width="1.1"/><path d="M1377.70 874.50h5.4l1.8 1.8v5.9h-7.2z" fill="#1a1a1a"/><rect x="1379.40" y="875.40" width="3" height="2.2" rx=".6" fill="#c9c9c9"/><circle cx="1398.7" cy="878.4" r="6.1" fill="#c9c9c9" stroke="#2a2a2a" stroke-width="1.1"/><circle cx="1395.80" cy="878.4" r="1.15" fill="#1a1a1a"/><circle cx="1398.70" cy="878.4" r="1.15" fill="#1a1a1a"/><circle cx="1401.60" cy="878.4" r="1.15" fill="#1a1a1a"/><rect x="890.40" y="887.30" width="51.90" height="183.20" fill="#a1a1a1" /><text x="916.89" y="899.50" font-size="10.8" fill="#161616" text-anchor="middle" font-weight="normal" stroke="#161616" stroke-width="0.3" letter-spacing="0.38">Freq</text><path d="M909.42 927.00A12.7 12.7 0 1 1 923.98 927.00" fill="none" stroke="#222" stroke-width="2.4"/><path d="M909.42 927.00A12.7 12.7 0 0 1 919.92 904.32" fill="none" stroke="#11dcf2" stroke-width="2.6"/><line x1="916.55" y1="917.18" x2="920.18" y2="903.35" stroke="#222" stroke-width="2.4"/><text x="916.29" y="938.40" font-size="10.8" fill="#161616" text-anchor="middle" font-weight="normal" stroke="#161616" stroke-width="0.3" letter-spacing="0.38">696 Hz</text><text x="916.89" y="959.20" font-size="10.8" fill="#161616" text-anchor="middle" font-weight="normal" stroke="#161616" stroke-width="0.3" letter-spacing="0.38">Gain</text><path d="M909.42 992.10A12.7 12.7 0 1 1 923.98 992.10" fill="none" stroke="#222" stroke-width="2.4"/><path d="M905.24 987.17A12.7 12.7 0 0 1 916.70 969.00" fill="none" stroke="#11dcf2" stroke-width="2.6"/><line x1="917.24" y1="981.44" x2="904.33" y2="987.60" stroke="#222" stroke-width="2.4"/><path d="M912.60 962.20h8.2l-4.1 4.9z" fill="#11dcf2"/><text x="916.89" y="1004.70" font-size="10.8" fill="#161616" text-anchor="middle" font-weight="normal" stroke="#161616" stroke-width="0.3" letter-spacing="0.38">-11.9 dB</text><text x="916.89" y="1026.20" font-size="10.8" fill="#161616" text-anchor="middle" font-weight="normal" stroke="#161616" stroke-width="0.3" letter-spacing="0.38">Q</text><path d="M909.42 1052.80A12.7 12.7 0 1 1 923.98 1052.80" fill="none" stroke="#222" stroke-width="2.4"/><path d="M909.42 1052.80A12.7 12.7 0 1 1 927.78 1036.18" fill="none" stroke="#11dcf2" stroke-width="2.6"/><line x1="916.18" y1="1042.69" x2="928.65" y2="1035.70" stroke="#222" stroke-width="2.4"/><text x="916.89" y="1065.20" font-size="10.8" fill="#161616" text-anchor="middle" font-weight="normal" stroke="#161616" stroke-width="0.3" letter-spacing="0.38">3.76</text><rect x="944.80" y="887.80" width="405.10" height="144.60" fill="#1e1e1e" /><clipPath id="eqc888"><rect x="944.8" y="887.8" width="405.10000000000014" height="144.60000000000014"/></clipPath><g clip-path="url(#eqc888)"><line x1="982.00" y1="887.80" x2="982.00" y2="1032.40" stroke="#2c2c2c" stroke-width="1" /><line x1="1003.24" y1="887.80" x2="1003.24" y2="1032.40" stroke="#2c2c2c" stroke-width="1" /><line x1="1018.31" y1="887.80" x2="1018.31" y2="1032.40" stroke="#2c2c2c" stroke-width="1" /><line x1="1030.00" y1="887.80" x2="1030.00" y2="1032.40" stroke="#2c2c2c" stroke-width="1" /><line x1="1039.55" y1="887.80" x2="1039.55" y2="1032.40" stroke="#2c2c2c" stroke-width="1" /><line x1="1047.62" y1="887.80" x2="1047.62" y2="1032.40" stroke="#2c2c2c" stroke-width="1" /><line x1="1054.61" y1="887.80" x2="1054.61" y2="1032.40" stroke="#2c2c2c" stroke-width="1" /><line x1="1060.78" y1="887.80" x2="1060.78" y2="1032.40" stroke="#2c2c2c" stroke-width="1" /><line x1="1066.30" y1="887.80" x2="1066.30" y2="1032.40" stroke="#3a3a3a" stroke-width="1" /><line x1="1102.60" y1="887.80" x2="1102.60" y2="1032.40" stroke="#2c2c2c" stroke-width="1" /><line x1="1123.84" y1="887.80" x2="1123.84" y2="1032.40" stroke="#2c2c2c" stroke-width="1" /><line x1="1138.91" y1="887.80" x2="1138.91" y2="1032.40" stroke="#2c2c2c" stroke-width="1" /><line x1="1150.60" y1="887.80" x2="1150.60" y2="1032.40" stroke="#2c2c2c" stroke-width="1" /><line x1="1160.15" y1="887.80" x2="1160.15" y2="1032.40" stroke="#2c2c2c" stroke-width="1" /><line x1="1168.22" y1="887.80" x2="1168.22" y2="1032.40" stroke="#2c2c2c" stroke-width="1" /><line x1="1175.21" y1="887.80" x2="1175.21" y2="1032.40" stroke="#2c2c2c" stroke-width="1" /><line x1="1181.38" y1="887.80" x2="1181.38" y2="1032.40" stroke="#2c2c2c" stroke-width="1" /><line x1="1186.90" y1="887.80" x2="1186.90" y2="1032.40" stroke="#3a3a3a" stroke-width="1" /><line x1="1223.20" y1="887.80" x2="1223.20" y2="1032.40" stroke="#2c2c2c" stroke-width="1" /><line x1="1244.44" y1="887.80" x2="1244.44" y2="1032.40" stroke="#2c2c2c" stroke-width="1" /><line x1="1259.51" y1="887.80" x2="1259.51" y2="1032.40" stroke="#2c2c2c" stroke-width="1" /><line x1="1271.20" y1="887.80" x2="1271.20" y2="1032.40" stroke="#2c2c2c" stroke-width="1" /><line x1="1280.75" y1="887.80" x2="1280.75" y2="1032.40" stroke="#2c2c2c" stroke-width="1" /><line x1="1288.82" y1="887.80" x2="1288.82" y2="1032.40" stroke="#2c2c2c" stroke-width="1" /><line x1="1295.81" y1="887.80" x2="1295.81" y2="1032.40" stroke="#2c2c2c" stroke-width="1" /><line x1="1301.98" y1="887.80" x2="1301.98" y2="1032.40" stroke="#2c2c2c" stroke-width="1" /><line x1="1307.50" y1="887.80" x2="1307.50" y2="1032.40" stroke="#3a3a3a" stroke-width="1" /><line x1="1343.80" y1="887.80" x2="1343.80" y2="1032.40" stroke="#2c2c2c" stroke-width="1" /><line x1="968.80" y1="902.00" x2="1349.90" y2="902.00" stroke="#363636" stroke-width="1" /><line x1="968.80" y1="930.90" x2="1349.90" y2="930.90" stroke="#363636" stroke-width="1" /><line x1="968.80" y1="959.80" x2="1349.90" y2="959.80" stroke="#363636" stroke-width="1" /><line x1="968.80" y1="988.70" x2="1349.90" y2="988.70" stroke="#363636" stroke-width="1" /><line x1="968.80" y1="1017.60" x2="1349.90" y2="1017.60" stroke="#363636" stroke-width="1" /><path d="M1049.2 1031.8L1053.3 1028.7L1056.4 1031.8L1088.3 1031.8L1090.4 1018.4L1094.5 1012.2L1097.6 999.8L1100.7 1018.4L1103.8 1030.7L1106.9 1008.0L1108.9 1001.9L1112.0 1022.5L1116.2 1016.3L1120.3 1003.9L1123.4 1020.4L1128.5 985.4L1131.6 1008.0L1135.8 1018.4L1139.9 1008.0L1144.4 973.0L1147.1 1012.2L1151.2 1008.0L1155.3 991.5L1158.4 1022.5L1162.6 1026.6L1165.6 1022.5L1167.7 1030.7L1172.9 1031.8L1177.0 1018.4L1181.1 1001.9L1184.2 1008.0L1188.3 985.4L1191.4 1001.9L1194.5 987.4L1198.0 973.0L1200.7 997.7L1202.8 987.4L1206.9 988.5L1210.4 983.3L1213.1 1008.0L1218.2 1016.3L1221.3 1020.4L1225.4 1028.7L1229.6 1010.1L1231.6 1026.6L1235.8 1027.6L1237.2 1031.8z" fill="#3d3d3d"/><text x="965.20" y="906.50" font-size="10.8" fill="#a8a8a8" text-anchor="end" font-weight="normal" stroke="#a8a8a8" stroke-width="0.3" letter-spacing="0.38">12</text><text x="965.20" y="935.40" font-size="10.8" fill="#a8a8a8" text-anchor="end" font-weight="normal" stroke="#a8a8a8" stroke-width="0.3" letter-spacing="0.38">6</text><text x="965.20" y="964.30" font-size="10.8" fill="#a8a8a8" text-anchor="end" font-weight="normal" stroke="#a8a8a8" stroke-width="0.3" letter-spacing="0.38">0</text><text x="965.20" y="993.20" font-size="10.8" fill="#a8a8a8" text-anchor="end" font-weight="normal" stroke="#a8a8a8" stroke-width="0.3" letter-spacing="0.38">-6</text><text x="965.20" y="1022.10" font-size="10.8" fill="#a8a8a8" text-anchor="end" font-weight="normal" stroke="#a8a8a8" stroke-width="0.3" letter-spacing="0.38">-12</text><text x="1065.89" y="1030.50" font-size="11.2" fill="#a0a0a0" text-anchor="middle" font-weight="normal" stroke="#a0a0a0" stroke-width="0.3" letter-spacing="0.38">100</text><text x="1186.49" y="1030.50" font-size="11.2" fill="#a0a0a0" text-anchor="middle" font-weight="normal" stroke="#a0a0a0" stroke-width="0.3" letter-spacing="0.38">1k</text><text x="1307.09" y="1030.50" font-size="11.2" fill="#a0a0a0" text-anchor="middle" font-weight="normal" stroke="#a0a0a0" stroke-width="0.3" letter-spacing="0.38">10k</text><path d="M984.3 1032.3C988.5 1026.4 1001.6 1007.1 1009.6 996.9C1017.6 986.7 1025.4 977.0 1032.6 971.0C1039.8 965.0 1044.6 963.3 1052.8 960.9C1061.0 958.5 1074.9 956.9 1081.6 956.6C1088.3 956.3 1090.0 956.5 1093.1 958.9C1096.2 961.3 1098.3 967.4 1100.3 971.0C1102.3 974.6 1103.5 981.4 1105.2 980.4C1106.9 979.4 1108.3 969.7 1110.4 965.2C1112.5 960.8 1115.2 954.4 1117.6 953.7C1120.0 953.0 1122.1 955.6 1124.8 960.9C1127.5 966.2 1130.6 977.0 1133.5 985.4C1136.4 993.8 1139.2 1004.3 1142.1 1011.3C1145.0 1018.2 1148.1 1023.4 1150.7 1027.1C1153.3 1030.8 1156.7 1032.4 1157.9 1033.5" fill="none" stroke="#11dcf2" stroke-width="1.9"/><path d="M1173.8 1033.5C1175.2 1031.2 1179.3 1023.0 1182.4 1019.9C1185.5 1016.8 1189.1 1014.9 1192.5 1014.7C1195.9 1014.5 1198.8 1015.4 1202.6 1018.5C1206.4 1021.6 1213.3 1031.0 1215.5 1033.5" fill="none" stroke="#11dcf2" stroke-width="1.9"/><circle cx="1032.6" cy="975.9" r="6.2" fill="none" stroke="#ffb400" stroke-width="1.5"/><text x="1032.79" y="979.20" font-size="9.2" fill="#ffb400" text-anchor="middle" font-weight="normal" stroke="#ffb400" stroke-width="0.3" letter-spacing="0.38">1</text><circle cx="1106.7" cy="994" r="6.2" fill="none" stroke="#ffb400" stroke-width="1.5"/><text x="1106.89" y="997.30" font-size="9.2" fill="#ffb400" text-anchor="middle" font-weight="normal" stroke="#ffb400" stroke-width="0.3" letter-spacing="0.38">2</text><circle cx="1133.5" cy="1004.7" r="6.2" fill="none" stroke="#ffb400" stroke-width="1.5"/><text x="1133.69" y="1008.00" font-size="9.2" fill="#ffb400" text-anchor="middle" font-weight="normal" stroke="#ffb400" stroke-width="0.3" letter-spacing="0.38">5</text><circle cx="1167.2" cy="1012.2" r="7" fill="#ffb400"/><text x="1167.39" y="1015.50" font-size="9.2" fill="#4a3500" text-anchor="middle" font-weight="normal" stroke="#4a3500" stroke-width="0.3" letter-spacing="0.38">3</text><circle cx="1213.5" cy="999.2" r="6.2" fill="none" stroke="#ffb400" stroke-width="1.5"/><text x="1213.69" y="1002.50" font-size="9.2" fill="#ffb400" text-anchor="middle" font-weight="normal" stroke="#ffb400" stroke-width="0.3" letter-spacing="0.38">4</text><circle cx="1342.8" cy="985.4" r="6.2" fill="none" stroke="#ffb400" stroke-width="1.5"/><text x="1342.99" y="988.70" font-size="9.2" fill="#ffb400" text-anchor="middle" font-weight="normal" stroke="#ffb400" stroke-width="0.3" letter-spacing="0.38">8</text></g><rect x="945.30" y="1034.80" width="48.40" height="35.60" fill="#a6a6a6" /><rect x="949.35" y="1038.85" width="38.90" height="12.00" fill="#dcdcdc" stroke="#2a2a2a" stroke-width="1.1"/><path d="M979.90 1042.9h6l-3 4.2z" fill="#111"/><path d="M952.30 1048.5v-3.8q0-3 3-3h12.6" fill="none" stroke="#1c1c1c" stroke-width="1.1"/><rect x="957.95" y="1056.05" width="10.00" height="10.50" fill="#11dcf2" stroke="#2a2a2a" stroke-width="1.1"/><text x="978.09" y="1065.80" font-size="10.8" fill="#161616" text-anchor="middle" font-weight="normal" stroke="#161616" stroke-width="0.3" letter-spacing="0.38">1</text><rect x="996.02" y="1034.80" width="48.40" height="35.60" fill="#9d9d9d" /><rect x="1000.07" y="1038.85" width="38.90" height="12.00" fill="#dcdcdc" stroke="#2a2a2a" stroke-width="1.1"/><path d="M1030.62 1042.9h6l-3 4.2z" fill="#111"/><path d="M1003.02 1044.9h3.6l3.4-3.6h4.4l3.4 3.6h3M1006.62 1044.9l3.4 3.6h4.4l3.4-3.6" fill="none" stroke="#1c1c1c" stroke-width="1.1"/><rect x="1008.67" y="1056.05" width="10.00" height="10.50" fill="#11dcf2" stroke="#2a2a2a" stroke-width="1.1"/><text x="1028.81" y="1065.80" font-size="10.8" fill="#161616" text-anchor="middle" font-weight="normal" stroke="#161616" stroke-width="0.3" letter-spacing="0.38">2</text><rect x="1046.74" y="1034.80" width="48.40" height="35.60" fill="#a6a6a6" /><rect x="1050.79" y="1038.85" width="38.90" height="12.00" fill="#dcdcdc" stroke="#2a2a2a" stroke-width="1.1"/><path d="M1081.34 1042.9h6l-3 4.2z" fill="#111"/><path d="M1053.74 1044.9h3.6l3.4-3.6h4.4l3.4 3.6h3M1057.34 1044.9l3.4 3.6h4.4l3.4-3.6" fill="none" stroke="#1c1c1c" stroke-width="1.1"/><rect x="1059.39" y="1056.05" width="10.00" height="10.50" fill="#11dcf2" stroke="#2a2a2a" stroke-width="1.1"/><text x="1079.53" y="1065.80" font-size="10.8" fill="#161616" text-anchor="middle" font-weight="normal" stroke="#161616" stroke-width="0.3" letter-spacing="0.38">3</text><rect x="1097.46" y="1034.80" width="48.40" height="35.60" fill="#9d9d9d" /><rect x="1101.51" y="1038.85" width="38.90" height="12.00" fill="#dcdcdc" stroke="#2a2a2a" stroke-width="1.1"/><path d="M1132.06 1042.9h6l-3 4.2z" fill="#111"/><path d="M1104.46 1044.9h7.4q1.6-3.6 4-3.6h5.6M1111.86 1044.9q1.6 3.6 4 3.6h5.6" fill="none" stroke="#1c1c1c" stroke-width="1.1"/><rect x="1110.11" y="1056.05" width="10.00" height="10.50" fill="#11dcf2" stroke="#2a2a2a" stroke-width="1.1"/><text x="1130.25" y="1065.80" font-size="10.8" fill="#161616" text-anchor="middle" font-weight="normal" stroke="#161616" stroke-width="0.3" letter-spacing="0.38">4</text><rect x="1148.18" y="1034.80" width="48.40" height="35.60" fill="#9d9d9d" /><rect x="1152.23" y="1038.85" width="38.90" height="12.00" fill="#dcdcdc" stroke="#2a2a2a" stroke-width="1.1"/><path d="M1182.78 1042.9h6l-3 4.2z" fill="#111"/><path d="M1155.18 1044.9h7.4q1.6-3.6 4-3.6h5.6M1162.58 1044.9q1.6 3.6 4 3.6h5.6" fill="none" stroke="#1c1c1c" stroke-width="1.1"/><rect x="1160.83" y="1056.05" width="10.00" height="10.50" fill="#11dcf2" stroke="#2a2a2a" stroke-width="1.1"/><text x="1180.97" y="1065.80" font-size="10.8" fill="#161616" text-anchor="middle" font-weight="normal" stroke="#161616" stroke-width="0.3" letter-spacing="0.38">5</text><rect x="1198.90" y="1034.80" width="48.40" height="35.60" fill="#9d9d9d" /><rect x="1202.95" y="1038.85" width="38.90" height="12.00" fill="#a3a3a3" stroke="#2a2a2a" stroke-width="1.1"/><path d="M1233.50 1042.9h6l-3 4.2z" fill="#111"/><path d="M1205.90 1044.9h3.6l3.4-3.6h4.4l3.4 3.6h3M1209.50 1044.9l3.4 3.6h4.4l3.4-3.6" fill="none" stroke="#1c1c1c" stroke-width="1.1"/><rect x="1211.55" y="1056.05" width="10.00" height="10.50" fill="#d2d2d2" stroke="#2a2a2a" stroke-width="1.1"/><text x="1231.69" y="1065.80" font-size="10.8" fill="#161616" text-anchor="middle" font-weight="normal" stroke="#161616" stroke-width="0.3" letter-spacing="0.38">6</text><rect x="1249.62" y="1034.80" width="48.40" height="35.60" fill="#9d9d9d" /><rect x="1253.67" y="1038.85" width="38.90" height="12.00" fill="#a3a3a3" stroke="#2a2a2a" stroke-width="1.1"/><path d="M1284.22 1042.9h6l-3 4.2z" fill="#111"/><path d="M1256.62 1044.9h3.6l3.4-3.6h4.4l3.4 3.6h3M1260.22 1044.9l3.4 3.6h4.4l3.4-3.6" fill="none" stroke="#1c1c1c" stroke-width="1.1"/><rect x="1262.27" y="1056.05" width="10.00" height="10.50" fill="#d2d2d2" stroke="#2a2a2a" stroke-width="1.1"/><text x="1282.41" y="1065.80" font-size="10.8" fill="#161616" text-anchor="middle" font-weight="normal" stroke="#161616" stroke-width="0.3" letter-spacing="0.38">7</text><rect x="1300.34" y="1034.80" width="48.40" height="35.60" fill="#9d9d9d" /><rect x="1304.39" y="1038.85" width="38.90" height="12.00" fill="#dcdcdc" stroke="#2a2a2a" stroke-width="1.1"/><path d="M1334.94 1042.9h6l-3 4.2z" fill="#111"/><path d="M1307.34 1041.7h12.6q3 0 3 3v3.8" fill="none" stroke="#1c1c1c" stroke-width="1.1"/><rect x="1312.99" y="1056.05" width="10.00" height="10.50" fill="#11dcf2" stroke="#2a2a2a" stroke-width="1.1"/><text x="1333.13" y="1065.80" font-size="10.8" fill="#161616" text-anchor="middle" font-weight="normal" stroke="#161616" stroke-width="0.3" letter-spacing="0.38">8</text><rect x="1352.20" y="887.30" width="55.70" height="183.20" fill="#a1a1a1" /><rect x="1355.95" y="894.75" width="20.50" height="12.10" fill="#dcdcdc" stroke="#3f3f3f" stroke-width="1.1"/><path d="M1363.00 903.80v-2.4a3.2 3.2 0 0 1 6.4 0v2.4" fill="none" stroke="#1a1a1a" stroke-width="1.1"/><rect x="1362.30" y="901.60" width="1.9" height="3.2" fill="#1a1a1a"/><rect x="1368.20" y="901.60" width="1.9" height="3.2" fill="#1a1a1a"/><rect x="1382.75" y="894.75" width="21.10" height="12.10" fill="#ffb400" stroke="#3f3f3f" stroke-width="1.1"/><rect x="1385.90" y="901.60" width="1.10" height="3.00" fill="#3a2a00" /><rect x="1388.00" y="898.60" width="1.10" height="6.00" fill="#3a2a00" /><rect x="1390.10" y="896.20" width="1.10" height="8.40" fill="#3a2a00" /><rect x="1392.20" y="899.60" width="1.10" height="5.00" fill="#3a2a00" /><rect x="1394.30" y="897.60" width="1.10" height="7.00" fill="#3a2a00" /><rect x="1396.40" y="901.20" width="1.10" height="3.40" fill="#3a2a00" /><rect x="1398.50" y="899.20" width="1.10" height="5.40" fill="#3a2a00" /><rect x="1400.60" y="902.60" width="1.10" height="2.00" fill="#3a2a00" /><rect x="1385.50" y="904.60" width="16.40" height="0.90" fill="#3a2a00" /><text x="1355.70" y="921.20" font-size="10.8" fill="#161616" text-anchor="start" font-weight="bold"  letter-spacing="0.1">Mode</text><rect x="1355.95" y="925.65" width="47.90" height="11.60" fill="#dcdcdc" stroke="#3f3f3f" stroke-width="1.1"/><text x="1357.90" y="935.18" font-size="10.8" fill="#161616" text-anchor="start" font-weight="normal" stroke="#161616" stroke-width="0.3" letter-spacing="0.38">Stereo</text><path d="M1395.90 929.45h6l-3 4.4z" fill="#111"/><text x="1355.70" y="951.40" font-size="10.8" fill="#161616" text-anchor="start" font-weight="bold"  letter-spacing="0.1">Edit</text><rect x="1355.95" y="955.85" width="47.90" height="11.60" fill="#c6c6c6" stroke="#3f3f3f" stroke-width="1.1"/><text x="1380.09" y="965.38" font-size="10.8" fill="#7d7d7d" text-anchor="middle" font-weight="normal" stroke="#7d7d7d" stroke-width="0.3" letter-spacing="0.38">A</text><text x="1355.70" y="982.50" font-size="10.8" fill="#161616" text-anchor="start" font-weight="bold"  letter-spacing="0.1">Adapt. Q</text><rect x="1355.95" y="987.55" width="47.90" height="11.60" fill="#ffb400" stroke="#3f3f3f" stroke-width="1.1"/><text x="1380.09" y="997.08" font-size="10.8" fill="#161616" text-anchor="middle" font-weight="normal" stroke="#161616" stroke-width="0.3" letter-spacing="0.38">On</text><text x="1355.70" y="1014.20" font-size="10.8" fill="#161616" text-anchor="start" font-weight="bold"  letter-spacing="0.1">Scale</text><rect x="1355.95" y="1018.65" width="47.90" height="11.80" fill="#d6d6d6" stroke="#3f3f3f" stroke-width="1.1"/><rect x="1356.60" y="1019.40" width="35.40" height="10.30" fill="#00cbdd" /><text x="1380.09" y="1028.28" font-size="10.8" fill="#161616" text-anchor="middle" font-weight="normal" stroke="#161616" stroke-width="0.3" letter-spacing="0.38">100 %</text><text x="1355.70" y="1046.50" font-size="10.8" fill="#161616" text-anchor="start" font-weight="bold"  letter-spacing="0.1">Gain</text><rect x="1355.95" y="1051.15" width="47.90" height="11.90" fill="#d6d6d6" stroke="#3f3f3f" stroke-width="1.1"/><rect x="1356.60" y="1051.90" width="23.60" height="10.40" fill="#00cbdd" /><text x="1380.09" y="1060.83" font-size="10.8" fill="#161616" text-anchor="middle" font-weight="normal" stroke="#161616" stroke-width="0.3" letter-spacing="0.38">0.00 dB</text><rect x="587.9" y="868.8" width="150.00" height="203.60" rx="2.6" fill="#b3b3b3"/><circle cx="597.80" cy="878.4" r="6.1" fill="#ffb400" stroke="#3a2f10" stroke-width="1.1"/><text x="609.50" y="882.10" font-size="10.3" fill="#111" text-anchor="start" font-weight="bold"  >Utility</text><circle cx="693" cy="878.4" r="6.1" fill="#c9c9c9" stroke="#2a2a2a" stroke-width="1.1"/><path d="M689.70 879.60a3.4 3.4 0 0 1 4.4-4.4M696.30 877.20a3.4 3.4 0 0 1-4.4 4.4" fill="none" stroke="#1a1a1a" stroke-width="1.5"/><path d="M693.20 873.50l3 2-3.2 1.6zM692.80 883.30l-3-2 3.2-1.6z" fill="#1a1a1a"/><circle cx="710.6" cy="878.4" r="6.1" fill="#c9c9c9" stroke="#2a2a2a" stroke-width="1.1"/><path d="M707.00 874.50h5.4l1.8 1.8v5.9h-7.2z" fill="#1a1a1a"/><rect x="708.70" y="875.40" width="3" height="2.2" rx=".6" fill="#c9c9c9"/><circle cx="727.8" cy="878.4" r="6.1" fill="#c9c9c9" stroke="#2a2a2a" stroke-width="1.1"/><circle cx="724.90" cy="878.4" r="1.15" fill="#1a1a1a"/><circle cx="727.80" cy="878.4" r="1.15" fill="#1a1a1a"/><circle cx="730.70" cy="878.4" r="1.15" fill="#1a1a1a"/><rect x="589.80" y="887.30" width="146.20" height="183.20" fill="#a1a1a1" /><text x="624.75" y="903.00" font-size="10.8" fill="#161616" text-anchor="middle" font-weight="bold"  letter-spacing="0.1">Input</text><rect x="594.75" y="910.65" width="27.70" height="12.60" fill="#b9b9b9" stroke="#3f3f3f" stroke-width="1.1"/><text x="608.79" y="920.68" font-size="10.8" fill="#161616" text-anchor="middle" font-weight="normal" stroke="#161616" stroke-width="0.3" letter-spacing="0.38">Ø L</text><rect x="626.95" y="910.65" width="28.30" height="12.60" fill="#b9b9b9" stroke="#3f3f3f" stroke-width="1.1"/><text x="641.29" y="920.68" font-size="10.8" fill="#161616" text-anchor="middle" font-weight="normal" stroke="#161616" stroke-width="0.3" letter-spacing="0.38">Ø R</text><rect x="594.75" y="928.45" width="60.50" height="12.70" fill="#dcdcdc" stroke="#3f3f3f" stroke-width="1.1"/><text x="596.70" y="938.53" font-size="10.8" fill="#161616" text-anchor="start" font-weight="normal" stroke="#161616" stroke-width="0.3" letter-spacing="0.38">Stereo</text><path d="M647.30 932.80h6l-3 4.4z" fill="#111"/><text x="625.19" y="959.50" font-size="10.8" fill="#161616" text-anchor="middle" font-weight="normal" stroke="#161616" stroke-width="0.3" letter-spacing="0.38">Width</text><path d="M617.42 992.00A12.7 12.7 0 1 1 631.98 992.00" fill="none" stroke="#222" stroke-width="2.4"/><path d="M624.70 968.90A12.7 12.7 0 0 1 628.62 969.52" fill="none" stroke="#11dcf2" stroke-width="2.6"/><line x1="624.51" y1="982.17" x2="628.93" y2="968.57" stroke="#222" stroke-width="2.4"/><path d="M620.60 962.10h8.2l-4.1 4.9z" fill="#11dcf2"/><text x="624.89" y="1004.70" font-size="10.8" fill="#161616" text-anchor="middle" font-weight="normal" stroke="#161616" stroke-width="0.3" letter-spacing="0.38">131 %</text><rect x="594.75" y="1011.45" width="60.50" height="13.20" fill="#b9b9b9" stroke="#3f3f3f" stroke-width="1.1"/><text x="625.19" y="1021.78" font-size="10.8" fill="#161616" text-anchor="middle" font-weight="normal" stroke="#161616" stroke-width="0.3" letter-spacing="0.38">Mono</text><rect x="594.75" y="1035.35" width="60.50" height="12.70" fill="#b9b9b9" stroke="#3f3f3f" stroke-width="1.1"/><text x="625.19" y="1045.43" font-size="10.8" fill="#161616" text-anchor="middle" font-weight="normal" stroke="#161616" stroke-width="0.3" letter-spacing="0.38">Bass Mono</text><rect x="594.75" y="1052.65" width="43.30" height="12.60" fill="#a1a1a1" stroke="#3f3f3f" stroke-width="1.1"/><text x="616.59" y="1062.68" font-size="10.8" fill="#161616" text-anchor="middle" font-weight="normal" stroke="#161616" stroke-width="0.3" letter-spacing="0.38">120 Hz</text><circle cx="648.6" cy="1059.4" r="5.6" fill="#c9c9c9" stroke="#2a2a2a" stroke-width="1"/><path d="M645.6 1061.6v-2.4a3 3 0 0 1 6 0v2.4" fill="none" stroke="#1a1a1a" stroke-width="1.1"/><rect x="644.9" y="1059.6" width="1.8" height="3" fill="#1a1a1a"/><rect x="650.5" y="1059.6" width="1.8" height="3" fill="#1a1a1a"/><line x1="662.70" y1="891.80" x2="662.70" y2="972.00" stroke="#7a7a7a" stroke-width="1" /><line x1="662.70" y1="986.00" x2="662.70" y2="1066.60" stroke="#7a7a7a" stroke-width="1" /><path d="M660.6 975.2l4.4 3.6-4.4 3.6z" fill="#787878"/><text x="700.55" y="903.00" font-size="10.8" fill="#161616" text-anchor="middle" font-weight="bold"  letter-spacing="0.1">Output</text><text x="700.69" y="926.90" font-size="10.8" fill="#161616" text-anchor="middle" font-weight="normal" stroke="#161616" stroke-width="0.3" letter-spacing="0.38">Gain</text><path d="M693.22 959.80A12.7 12.7 0 1 1 707.78 959.80" fill="none" stroke="#222" stroke-width="2.4"/><path d="M694.23 938.36A12.7 12.7 0 0 1 700.50 936.70" fill="none" stroke="#11dcf2" stroke-width="2.6"/><line x1="700.80" y1="949.92" x2="693.73" y2="937.49" stroke="#222" stroke-width="2.4"/><path d="M696.40 929.90h8.2l-4.1 4.9z" fill="#11dcf2"/><text x="700.69" y="972.10" font-size="10.8" fill="#161616" text-anchor="middle" font-weight="normal" stroke="#161616" stroke-width="0.3" letter-spacing="0.38">-8.00 dB</text><text x="700.69" y="993.70" font-size="10.8" fill="#161616" text-anchor="middle" font-weight="normal" stroke="#161616" stroke-width="0.3" letter-spacing="0.38">Balance</text><path d="M693.22 1026.90A12.7 12.7 0 1 1 707.78 1026.90" fill="none" stroke="#222" stroke-width="2.4"/><line x1="700.50" y1="1017.10" x2="700.50" y2="1002.80" stroke="#222" stroke-width="2.4"/><path d="M696.40 997.00h8.2l-4.1 4.9z" fill="#11dcf2"/><text x="700.69" y="1039.30" font-size="10.8" fill="#161616" text-anchor="middle" font-weight="normal" stroke="#161616" stroke-width="0.3" letter-spacing="0.38">C</text><path d="M697.3 997.3h6.4l-3.2 4.2z" fill="#222"/><rect x="672.45" y="1051.75" width="32.10" height="12.70" fill="#b9b9b9" stroke="#3f3f3f" stroke-width="1.1"/><text x="688.69" y="1061.83" font-size="10.8" fill="#161616" text-anchor="middle" font-weight="normal" stroke="#161616" stroke-width="0.3" letter-spacing="0.38">Mute</text><rect x="709.35" y="1051.75" width="19.70" height="12.70" fill="#b9b9b9" stroke="#3f3f3f" stroke-width="1.1"/><text x="719.39" y="1061.83" font-size="10.8" fill="#161616" text-anchor="middle" font-weight="normal" stroke="#161616" stroke-width="0.3" letter-spacing="0.38">DC</text><rect x="747.7" y="868.8" width="131.30" height="203.60" rx="2.6" fill="#b3b3b3"/><circle cx="757.60" cy="878.4" r="6.1" fill="#ffb400" stroke="#3a2f10" stroke-width="1.1"/><text x="769.30" y="882.10" font-size="10.3" fill="#111" text-anchor="start" font-weight="bold"  >Overdr...</text><circle cx="833.5" cy="878.4" r="6.1" fill="#c9c9c9" stroke="#2a2a2a" stroke-width="1.1"/><path d="M830.20 879.60a3.4 3.4 0 0 1 4.4-4.4M836.80 877.20a3.4 3.4 0 0 1-4.4 4.4" fill="none" stroke="#1a1a1a" stroke-width="1.5"/><path d="M833.70 873.50l3 2-3.2 1.6zM833.30 883.30l-3-2 3.2-1.6z" fill="#1a1a1a"/><circle cx="851.4" cy="878.4" r="6.1" fill="#c9c9c9" stroke="#2a2a2a" stroke-width="1.1"/><path d="M847.80 874.50h5.4l1.8 1.8v5.9h-7.2z" fill="#1a1a1a"/><rect x="849.50" y="875.40" width="3" height="2.2" rx=".6" fill="#c9c9c9"/><circle cx="868.7" cy="878.4" r="6.1" fill="#c9c9c9" stroke="#2a2a2a" stroke-width="1.1"/><circle cx="865.80" cy="878.4" r="1.15" fill="#1a1a1a"/><circle cx="868.70" cy="878.4" r="1.15" fill="#1a1a1a"/><circle cx="871.60" cy="878.4" r="1.15" fill="#1a1a1a"/><rect x="749.60" y="887.30" width="127.50" height="183.20" fill="#a1a1a1" /><rect x="753.50" y="891.80" width="119.80" height="66.20" fill="#1e1e1e" /><line x1="753.50" y1="899.16" x2="873.30" y2="899.16" stroke="#2c2c2c" stroke-width="0.8" /><line x1="753.50" y1="906.51" x2="873.30" y2="906.51" stroke="#2c2c2c" stroke-width="0.8" /><line x1="753.50" y1="913.87" x2="873.30" y2="913.87" stroke="#2c2c2c" stroke-width="0.8" /><line x1="753.50" y1="921.22" x2="873.30" y2="921.22" stroke="#2c2c2c" stroke-width="0.8" /><line x1="753.50" y1="928.58" x2="873.30" y2="928.58" stroke="#2c2c2c" stroke-width="0.8" /><line x1="753.50" y1="935.93" x2="873.30" y2="935.93" stroke="#2c2c2c" stroke-width="0.8" /><line x1="753.50" y1="943.29" x2="873.30" y2="943.29" stroke="#2c2c2c" stroke-width="0.8" /><line x1="753.50" y1="950.64" x2="873.30" y2="950.64" stroke="#2c2c2c" stroke-width="0.8" /><line x1="764.40" y1="891.80" x2="764.40" y2="958.00" stroke="#2a2a2a" stroke-width="0.8" /><line x1="770.77" y1="891.80" x2="770.77" y2="958.00" stroke="#2a2a2a" stroke-width="0.8" /><line x1="775.29" y1="891.80" x2="775.29" y2="958.00" stroke="#2a2a2a" stroke-width="0.8" /><line x1="778.80" y1="891.80" x2="778.80" y2="958.00" stroke="#2a2a2a" stroke-width="0.8" /><line x1="781.67" y1="891.80" x2="781.67" y2="958.00" stroke="#2a2a2a" stroke-width="0.8" /><line x1="784.09" y1="891.80" x2="784.09" y2="958.00" stroke="#2a2a2a" stroke-width="0.8" /><line x1="786.19" y1="891.80" x2="786.19" y2="958.00" stroke="#2a2a2a" stroke-width="0.8" /><line x1="788.04" y1="891.80" x2="788.04" y2="958.00" stroke="#2a2a2a" stroke-width="0.8" /><line x1="789.70" y1="891.80" x2="789.70" y2="958.00" stroke="#343434" stroke-width="0.8" /><line x1="800.60" y1="891.80" x2="800.60" y2="958.00" stroke="#2a2a2a" stroke-width="0.8" /><line x1="806.97" y1="891.80" x2="806.97" y2="958.00" stroke="#2a2a2a" stroke-width="0.8" /><line x1="811.49" y1="891.80" x2="811.49" y2="958.00" stroke="#2a2a2a" stroke-width="0.8" /><line x1="815.00" y1="891.80" x2="815.00" y2="958.00" stroke="#2a2a2a" stroke-width="0.8" /><line x1="817.87" y1="891.80" x2="817.87" y2="958.00" stroke="#2a2a2a" stroke-width="0.8" /><line x1="820.29" y1="891.80" x2="820.29" y2="958.00" stroke="#2a2a2a" stroke-width="0.8" /><line x1="822.39" y1="891.80" x2="822.39" y2="958.00" stroke="#2a2a2a" stroke-width="0.8" /><line x1="824.24" y1="891.80" x2="824.24" y2="958.00" stroke="#2a2a2a" stroke-width="0.8" /><line x1="825.90" y1="891.80" x2="825.90" y2="958.00" stroke="#343434" stroke-width="0.8" /><line x1="836.80" y1="891.80" x2="836.80" y2="958.00" stroke="#2a2a2a" stroke-width="0.8" /><line x1="843.17" y1="891.80" x2="843.17" y2="958.00" stroke="#2a2a2a" stroke-width="0.8" /><line x1="847.69" y1="891.80" x2="847.69" y2="958.00" stroke="#2a2a2a" stroke-width="0.8" /><line x1="851.20" y1="891.80" x2="851.20" y2="958.00" stroke="#2a2a2a" stroke-width="0.8" /><line x1="854.07" y1="891.80" x2="854.07" y2="958.00" stroke="#2a2a2a" stroke-width="0.8" /><line x1="856.49" y1="891.80" x2="856.49" y2="958.00" stroke="#2a2a2a" stroke-width="0.8" /><line x1="858.59" y1="891.80" x2="858.59" y2="958.00" stroke="#2a2a2a" stroke-width="0.8" /><line x1="860.44" y1="891.80" x2="860.44" y2="958.00" stroke="#2a2a2a" stroke-width="0.8" /><line x1="862.10" y1="891.80" x2="862.10" y2="958.00" stroke="#343434" stroke-width="0.8" /><line x1="873.00" y1="891.80" x2="873.00" y2="958.00" stroke="#2a2a2a" stroke-width="0.8" /><path d="M753.5 957.1C756.0 956.6 764.7 955.6 768.7 954.3C772.7 953.0 774.8 951.7 777.4 949.4C780.0 947.1 782.2 943.8 784.6 940.7C787.0 937.6 789.4 933.7 791.8 930.6C794.2 927.5 796.6 924.3 799.0 922.0C801.4 919.7 803.6 918.0 806.2 916.8C808.8 915.5 811.7 915.0 814.8 914.5C817.9 914.0 821.5 913.8 824.9 913.7C828.3 913.7 832.1 913.8 835.0 914.2C837.9 914.6 840.1 915.1 842.2 916.2C844.4 917.3 846.0 918.4 847.9 920.6C849.8 922.8 851.8 926.1 853.7 929.2C855.6 932.3 857.6 935.9 859.5 939.3C861.4 942.7 863.5 946.9 865.2 949.4C866.9 951.9 868.1 953.0 869.5 954.3C870.9 955.6 872.7 956.6 873.3 957.1" fill="none" stroke="#11dcf2" stroke-width="1.8"/><circle cx="824" cy="929.2" r="6.2" fill="none" stroke="#ffb400" stroke-width="1.5"/><rect x="753.75" y="962.45" width="56.50" height="12.10" fill="#d6d6d6" stroke="#3f3f3f" stroke-width="1.1"/><rect x="754.40" y="963.20" width="33.60" height="10.60" fill="#00cbdd" /><text x="782.19" y="972.23" font-size="10.8" fill="#161616" text-anchor="middle" font-weight="normal" stroke="#161616" stroke-width="0.3" letter-spacing="0.38">1.84 kHz</text><rect x="815.05" y="962.45" width="58.00" height="12.10" fill="#d6d6d6" stroke="#3f3f3f" stroke-width="1.1"/><rect x="815.70" y="963.20" width="23.60" height="10.60" fill="#00cbdd" /><text x="844.24" y="972.23" font-size="10.8" fill="#161616" text-anchor="middle" font-weight="normal" stroke="#161616" stroke-width="0.3" letter-spacing="0.38">4.04</text><text x="779.89" y="988.30" font-size="10.8" fill="#161616" text-anchor="middle" font-weight="normal" stroke="#161616" stroke-width="0.3" letter-spacing="0.38">Drive</text><path d="M772.42 1015.10A12.7 12.7 0 1 1 786.98 1015.10" fill="none" stroke="#222" stroke-width="2.4"/><path d="M772.42 1015.10A12.7 12.7 0 0 1 783.35 992.54" fill="none" stroke="#11dcf2" stroke-width="2.6"/><line x1="779.53" y1="1005.27" x2="783.64" y2="991.58" stroke="#222" stroke-width="2.4"/><text x="779.89" y="1027.20" font-size="10.8" fill="#161616" text-anchor="middle" font-weight="normal" stroke="#161616" stroke-width="0.3" letter-spacing="0.38">56 %</text><text x="841.49" y="988.30" font-size="10.8" fill="#161616" text-anchor="middle" font-weight="normal" stroke="#161616" stroke-width="0.3" letter-spacing="0.38">Tone</text><path d="M834.02 1015.10A12.7 12.7 0 1 1 848.58 1015.10" fill="none" stroke="#222" stroke-width="2.4"/><path d="M834.02 1015.10A12.7 12.7 0 0 1 841.30 992.00" fill="none" stroke="#11dcf2" stroke-width="2.6"/><line x1="841.30" y1="1005.30" x2="841.30" y2="991.00" stroke="#222" stroke-width="2.4"/><text x="841.49" y="1027.20" font-size="10.8" fill="#161616" text-anchor="middle" font-weight="normal" stroke="#161616" stroke-width="0.3" letter-spacing="0.38">50 %</text><text x="753.50" y="1045.00" font-size="10.8" fill="#161616" text-anchor="start" font-weight="normal" stroke="#161616" stroke-width="0.3" letter-spacing="0.38">Dynamics</text><rect x="815.05" y="1034.45" width="51.40" height="12.70" fill="#d6d6d6" stroke="#3f3f3f" stroke-width="1.1"/><text x="840.94" y="1044.53" font-size="10.8" fill="#161616" text-anchor="middle" font-weight="normal" stroke="#161616" stroke-width="0.3" letter-spacing="0.38">0.0 %</text><text x="753.50" y="1063.20" font-size="10.8" fill="#161616" text-anchor="start" font-weight="normal" stroke="#161616" stroke-width="0.3" letter-spacing="0.38">Dry/Wet</text><rect x="815.05" y="1053.25" width="51.40" height="12.10" fill="#d6d6d6" stroke="#3f3f3f" stroke-width="1.1"/><rect x="815.70" y="1054.00" width="26.50" height="10.60" fill="#00cbdd" /><text x="840.94" y="1063.03" font-size="10.8" fill="#161616" text-anchor="middle" font-weight="normal" stroke="#161616" stroke-width="0.3" letter-spacing="0.38">54 %</text><rect x="1420.7" y="868.8" width="472.40" height="203.60" rx="2.6" fill="#b3b3b3"/><circle cx="1430.60" cy="878.4" r="6.1" fill="#ffb400" stroke="#3a2f10" stroke-width="1.1"/><text x="1442.30" y="882.10" font-size="10.3" fill="#111" text-anchor="start" font-weight="bold"  >Vocoder</text><circle cx="1847.3" cy="878.4" r="6.1" fill="#c9c9c9" stroke="#2a2a2a" stroke-width="1.1"/><path d="M1844.00 879.60a3.4 3.4 0 0 1 4.4-4.4M1850.60 877.20a3.4 3.4 0 0 1-4.4 4.4" fill="none" stroke="#1a1a1a" stroke-width="1.5"/><path d="M1847.50 873.50l3 2-3.2 1.6zM1847.10 883.30l-3-2 3.2-1.6z" fill="#1a1a1a"/><circle cx="1865.2" cy="878.4" r="6.1" fill="#c9c9c9" stroke="#2a2a2a" stroke-width="1.1"/><path d="M1861.60 874.50h5.4l1.8 1.8v5.9h-7.2z" fill="#1a1a1a"/><rect x="1863.30" y="875.40" width="3" height="2.2" rx=".6" fill="#c9c9c9"/><circle cx="1882.4" cy="878.4" r="6.1" fill="#c9c9c9" stroke="#2a2a2a" stroke-width="1.1"/><circle cx="1879.50" cy="878.4" r="1.15" fill="#1a1a1a"/><circle cx="1882.40" cy="878.4" r="1.15" fill="#1a1a1a"/><circle cx="1885.30" cy="878.4" r="1.15" fill="#1a1a1a"/><rect x="1422.60" y="887.30" width="468.60" height="183.20" fill="#a1a1a1" /><text x="1425.90" y="903.90" font-size="10.8" fill="#161616" text-anchor="start" font-weight="bold"  letter-spacing="0.1">Carrier</text><rect x="1474.25" y="893.35" width="48.50" height="12.70" fill="#ffb400" stroke="#3f3f3f" stroke-width="1.1"/><text x="1498.69" y="903.43" font-size="10.8" fill="#161616" text-anchor="middle" font-weight="normal" stroke="#161616" stroke-width="0.3" letter-spacing="0.38">Enhance</text><rect x="1426.15" y="910.65" width="96.60" height="13.20" fill="#dcdcdc" stroke="#3f3f3f" stroke-width="1.1"/><text x="1428.10" y="920.98" font-size="10.8" fill="#161616" text-anchor="start" font-weight="normal" stroke="#161616" stroke-width="0.3" letter-spacing="0.38">Modulator</text><path d="M1514.80 915.25h6l-3 4.4z" fill="#111"/><line x1="1425.00" y1="1012.20" x2="1523.60" y2="1012.20" stroke="#6e6e6e" stroke-width="1" /><text x="1451.79" y="1025.70" font-size="10.8" fill="#161616" text-anchor="middle" font-weight="normal" stroke="#161616" stroke-width="0.3" letter-spacing="0.38">Unvoiced</text><path d="M1444.02 1051.90A12.7 12.7 0 1 1 1458.58 1051.90" fill="none" stroke="#222" stroke-width="2.4"/><path d="M1444.02 1051.90A12.7 12.7 0 0 1 1441.86 1033.00" fill="none" stroke="#11dcf2" stroke-width="2.6"/><line x1="1451.75" y1="1041.90" x2="1441.12" y2="1032.33" stroke="#222" stroke-width="2.4"/><text x="1451.49" y="1064.30" font-size="10.8" fill="#161616" text-anchor="middle" font-weight="normal" stroke="#161616" stroke-width="0.3" letter-spacing="0.38">-27 dB</text><text x="1501.59" y="1025.70" font-size="10.8" fill="#161616" text-anchor="middle" font-weight="normal" stroke="#161616" stroke-width="0.3" letter-spacing="0.38">Sens.</text><rect x="1480.85" y="1028.75" width="41.30" height="12.60" fill="#d6d6d6" stroke="#3f3f3f" stroke-width="1.1"/><rect x="1481.50" y="1029.50" width="13.50" height="11.10" fill="#00cbdd" /><text x="1501.69" y="1038.78" font-size="10.8" fill="#161616" text-anchor="middle" font-weight="normal" stroke="#161616" stroke-width="0.3" letter-spacing="0.38">35.2 %</text><rect x="1480.85" y="1053.75" width="41.30" height="12.70" fill="#ffb400" stroke="#3f3f3f" stroke-width="1.1"/><text x="1501.69" y="1063.83" font-size="10.8" fill="#161616" text-anchor="middle" font-weight="normal" stroke="#161616" stroke-width="0.3" letter-spacing="0.38">Fast</text><rect x="1529.00" y="891.80" width="254.10" height="176.20" fill="#1e1e1e" /><path d="M1535.9 908.5v-9h9M1767.4 899.5h9v9M1776.4 1008.9v9h-9M1544.9 1017.9h-9v-9" fill="none" stroke="#0fc6dc" stroke-width="1.2"/><rect x="1540.30" y="1005.50" width="26.20" height="7.80" fill="#06e9fb" /><line x1="1540.30" y1="903.90" x2="1566.50" y2="903.90" stroke="#e0a010" stroke-width="1.2" /><rect x="1569.10" y="981.60" width="26.80" height="31.70" fill="#06e9fb" /><line x1="1569.10" y1="941.00" x2="1595.90" y2="941.00" stroke="#e0a010" stroke-width="1.2" /><rect x="1598.20" y="966.60" width="27.00" height="46.70" fill="#06e9fb" /><line x1="1598.20" y1="903.90" x2="1625.20" y2="903.90" stroke="#e0a010" stroke-width="1.2" /><rect x="1627.50" y="967.50" width="26.80" height="45.80" fill="#06e9fb" /><line x1="1627.50" y1="903.90" x2="1654.30" y2="903.90" stroke="#e0a010" stroke-width="1.2" /><rect x="1656.90" y="978.20" width="26.80" height="35.10" fill="#06e9fb" /><line x1="1656.90" y1="938.70" x2="1683.70" y2="938.70" stroke="#e0a010" stroke-width="1.2" /><rect x="1686.00" y="971.00" width="27.10" height="42.30" fill="#06e9fb" /><line x1="1686.00" y1="903.90" x2="1713.10" y2="903.90" stroke="#e0a010" stroke-width="1.2" /><rect x="1715.40" y="1005.50" width="26.80" height="7.80" fill="#06e9fb" /><line x1="1715.40" y1="903.90" x2="1742.20" y2="903.90" stroke="#e0a010" stroke-width="1.2" /><line x1="1744.80" y1="923.70" x2="1771.00" y2="923.70" stroke="#e0a010" stroke-width="1.2" /><text x="1536.80" y="1030.60" font-size="10.8" fill="#8a8a8a" text-anchor="start" font-weight="normal" stroke="#8a8a8a" stroke-width="0.3" letter-spacing="0.38">Bands</text><text x="1583.50" y="1030.60" font-size="10.8" fill="#8a8a8a" text-anchor="start" font-weight="normal" stroke="#8a8a8a" stroke-width="0.3" letter-spacing="0.38">Range</text><text x="1637.60" y="1030.60" font-size="10.8" fill="#8a8a8a" text-anchor="start" font-weight="normal" stroke="#8a8a8a" stroke-width="0.3" letter-spacing="0.38">BW</text><text x="1685.10" y="1030.60" font-size="10.8" fill="#8a8a8a" text-anchor="start" font-weight="normal" stroke="#8a8a8a" stroke-width="0.3" letter-spacing="0.38">Gate</text><text x="1732.70" y="1030.60" font-size="10.8" fill="#8a8a8a" text-anchor="start" font-weight="normal" stroke="#8a8a8a" stroke-width="0.3" letter-spacing="0.38">Level</text><text x="1538.80" y="1045.00" font-size="10.8" fill="#0fd3ea" text-anchor="start" font-weight="normal" stroke="#0fd3ea" stroke-width="0.3" letter-spacing="0.38">8</text><path d="M1569.6 1040.2h5.2l-2.6 3.4z" fill="#0fd3ea"/><text x="1585.20" y="1045.00" font-size="10.8" fill="#0fd3ea" text-anchor="start" font-weight="normal" stroke="#0fd3ea" stroke-width="0.3" letter-spacing="0.38">12.0 kHz</text><text x="1639.60" y="1045.00" font-size="10.8" fill="#0fd3ea" text-anchor="start" font-weight="normal" stroke="#0fd3ea" stroke-width="0.3" letter-spacing="0.38">100 %</text><text x="1687.2" y="1045" font-size="10.8" fill="#ffb400" letter-spacing=".38" stroke="#ffb400" stroke-width=".3">-<tspan font-size="15" dy="1">∞</tspan><tspan dy="-1"> dB</tspan></text><text x="1734.70" y="1045.00" font-size="10.8" fill="#ffb400" text-anchor="start" font-weight="normal" stroke="#ffb400" stroke-width="0.3" letter-spacing="0.38">0.0 dB</text><text x="1585.20" y="1060.90" font-size="10.8" fill="#0fd3ea" text-anchor="start" font-weight="normal" stroke="#0fd3ea" stroke-width="0.3" letter-spacing="0.38">80.0 Hz</text><rect x="1638.20" y="1051.60" width="41.20" height="11.60" fill="#ffb400" /><text x="1658.99" y="1061.40" font-size="10.8" fill="#1a1a1a" text-anchor="middle" font-weight="normal" stroke="#1a1a1a" stroke-width="0.3" letter-spacing="0.38">Precise</text><text x="1812.09" y="903.90" font-size="10.8" fill="#161616" text-anchor="middle" font-weight="normal" stroke="#161616" stroke-width="0.3" letter-spacing="0.38">Depth</text><path d="M1804.62 936.70A12.7 12.7 0 1 1 1819.18 936.70" fill="none" stroke="#222" stroke-width="2.4"/><path d="M1801.15 919.53A12.7 12.7 0 0 1 1811.90 913.60" fill="none" stroke="#11dcf2" stroke-width="2.6"/><line x1="1812.41" y1="926.62" x2="1800.31" y2="919.00" stroke="#222" stroke-width="2.4"/><path d="M1807.80 906.80h8.2l-4.1 4.9z" fill="#11dcf2"/><text x="1812.09" y="949.10" font-size="10.8" fill="#161616" text-anchor="middle" font-weight="normal" stroke="#161616" stroke-width="0.3" letter-spacing="0.38">61.9 %</text><text x="1812.59" y="971.00" font-size="10.8" fill="#161616" text-anchor="middle" font-weight="normal" stroke="#161616" stroke-width="0.3" letter-spacing="0.38">Attack</text><path d="M1804.62 998.10A12.7 12.7 0 1 1 1819.18 998.10" fill="none" stroke="#222" stroke-width="2.4"/><path d="M1804.62 998.10A12.7 12.7 0 0 1 1799.43 990.12" fill="none" stroke="#11dcf2" stroke-width="2.6"/><line x1="1812.49" y1="987.59" x2="1798.45" y2="990.31" stroke="#222" stroke-width="2.4"/><text x="1812.09" y="1009.90" font-size="10.8" fill="#161616" text-anchor="middle" font-weight="normal" stroke="#161616" stroke-width="0.3" letter-spacing="0.38">2.99 ms</text><text x="1812.09" y="1026.30" font-size="10.8" fill="#161616" text-anchor="middle" font-weight="normal" stroke="#161616" stroke-width="0.3" letter-spacing="0.38">Release</text><path d="M1804.62 1052.80A12.7 12.7 0 1 1 1819.18 1052.80" fill="none" stroke="#222" stroke-width="2.4"/><path d="M1804.62 1052.80A12.7 12.7 0 0 1 1802.34 1034.03" fill="none" stroke="#11dcf2" stroke-width="2.6"/><line x1="1812.35" y1="1042.80" x2="1801.59" y2="1033.38" stroke="#222" stroke-width="2.4"/><text x="1812.09" y="1065.20" font-size="10.8" fill="#161616" text-anchor="middle" font-weight="normal" stroke="#161616" stroke-width="0.3" letter-spacing="0.38">150 ms</text><rect x="1843.75" y="893.55" width="40.70" height="12.80" fill="#b9b9b9" stroke="#3f3f3f" stroke-width="1.1"/><text x="1864.29" y="903.68" font-size="10.8" fill="#161616" text-anchor="middle" font-weight="normal" stroke="#161616" stroke-width="0.3" letter-spacing="0.38">Mono</text><rect x="1843.75" y="910.75" width="40.70" height="12.80" fill="#ffb400" stroke="#3f3f3f" stroke-width="1.1"/><text x="1864.29" y="920.88" font-size="10.8" fill="#161616" text-anchor="middle" font-weight="normal" stroke="#161616" stroke-width="0.3" letter-spacing="0.38">Stereo</text><rect x="1843.75" y="927.85" width="40.70" height="13.20" fill="#b9b9b9" stroke="#3f3f3f" stroke-width="1.1"/><text x="1864.29" y="938.18" font-size="10.8" fill="#161616" text-anchor="middle" font-weight="normal" stroke="#161616" stroke-width="0.3" letter-spacing="0.38">L/R</text><text x="1864.99" y="964.40" font-size="10.8" fill="#161616" text-anchor="middle" font-weight="normal" stroke="#161616" stroke-width="0.3" letter-spacing="0.38">Formant</text><path d="M1857.32 998.10A12.7 12.7 0 1 1 1871.88 998.10" fill="none" stroke="#222" stroke-width="2.4"/><path d="M1855.94 978.41A12.7 12.7 0 0 1 1864.60 975.00" fill="none" stroke="#11dcf2" stroke-width="2.6"/><line x1="1865.01" y1="988.14" x2="1855.26" y2="977.68" stroke="#222" stroke-width="2.4"/><path d="M1860.50 968.20h8.2l-4.1 4.9z" fill="#11dcf2"/><text x="1864.79" y="1009.90" font-size="10.8" fill="#161616" text-anchor="middle" font-weight="normal" stroke="#161616" stroke-width="0.3" letter-spacing="0.38">-10.9</text><text x="1864.99" y="1026.30" font-size="10.8" fill="#161616" text-anchor="middle" font-weight="normal" stroke="#161616" stroke-width="0.3" letter-spacing="0.38">Dry/Wet</text><path d="M1857.32 1052.80A12.7 12.7 0 1 1 1871.88 1052.80" fill="none" stroke="#222" stroke-width="2.4"/><path d="M1857.32 1052.80A12.7 12.7 0 1 1 1875.71 1036.24" fill="none" stroke="#11dcf2" stroke-width="2.6"/><line x1="1864.08" y1="1042.69" x2="1876.58" y2="1035.76" stroke="#222" stroke-width="2.4"/><text x="1864.79" y="1065.20" font-size="10.8" fill="#161616" text-anchor="middle" font-weight="normal" stroke="#161616" stroke-width="0.3" letter-spacing="0.38">69.0 %</text><rect x="48.20" y="912.40" width="2.10" height="117.20" fill="#2e2e2e" /><rect x="48.20" y="983.80" width="2.10" height="45.80" fill="#2be34d" /><rect x="51.30" y="912.40" width="2.10" height="117.20" fill="#2e2e2e" /><rect x="51.30" y="983.80" width="2.10" height="45.80" fill="#2be34d" /><rect x="579.60" y="912.40" width="2.10" height="117.20" fill="#2e2e2e" /><rect x="579.60" y="978.20" width="2.10" height="51.40" fill="#2be34d" /><rect x="582.70" y="912.40" width="2.10" height="117.20" fill="#2e2e2e" /><rect x="582.70" y="978.20" width="2.10" height="51.40" fill="#2be34d" /><rect x="740.10" y="912.40" width="2.10" height="117.20" fill="#2e2e2e" /><rect x="740.10" y="992.60" width="2.10" height="37.00" fill="#2be34d" /><rect x="743.20" y="912.40" width="2.10" height="117.20" fill="#2e2e2e" /><rect x="743.20" y="992.60" width="2.10" height="37.00" fill="#2be34d" /><rect x="881.20" y="912.40" width="2.10" height="117.20" fill="#2e2e2e" /><rect x="881.20" y="968.10" width="2.10" height="61.50" fill="#2be34d" /><rect x="884.30" y="912.40" width="2.10" height="117.20" fill="#2e2e2e" /><rect x="884.30" y="968.10" width="2.10" height="61.50" fill="#2be34d" /><rect x="1413.00" y="912.40" width="2.10" height="117.20" fill="#2e2e2e" /><rect x="1413.00" y="991.10" width="2.10" height="38.50" fill="#2be34d" /><rect x="1416.10" y="912.40" width="2.10" height="117.20" fill="#2e2e2e" /><rect x="1416.10" y="991.10" width="2.10" height="38.50" fill="#2be34d" /><rect x="1895.60" y="912.40" width="2.10" height="117.20" fill="#2e2e2e" /><rect x="1895.60" y="1007.00" width="2.10" height="22.60" fill="#2be34d" /><rect x="1898.70" y="912.40" width="2.10" height="117.20" fill="#2e2e2e" /><rect x="1898.70" y="1007.00" width="2.10" height="22.60" fill="#2be34d" /><rect x="47.60" y="923.00" width="6.40" height="0.80" fill="#9a9a9a" /><rect x="47.60" y="926.40" width="6.40" height="1.00" fill="#d2572c" /><rect x="579.00" y="920.60" width="6.40" height="1.00" fill="#c8342c" /><rect x="579.00" y="922.40" width="6.40" height="0.80" fill="#9a9a9a" /><rect x="739.50" y="923.60" width="6.40" height="0.80" fill="#9a9a9a" /><rect x="739.50" y="936.40" width="6.40" height="1.00" fill="#c88a2c" /><rect x="880.60" y="923.60" width="6.40" height="0.80" fill="#9a9a9a" /><rect x="880.60" y="925.80" width="6.40" height="1.00" fill="#d2572c" /><rect x="1412.40" y="923.60" width="6.40" height="0.80" fill="#9a9a9a" /><rect x="1412.40" y="947.20" width="6.40" height="1.00" fill="#b8b02c" /><rect x="1895.00" y="923.60" width="6.40" height="0.80" fill="#9a9a9a" /><rect x="1895.00" y="966.00" width="6.40" height="1.00" fill="#2bd34d" /></svg><div class="win" style="left:1371.8px;top:34.6px;width:517.8px;height:543.0px;background:#0e0d12;border-radius:7px 7px 11px 11px;box-shadow:0 4px 12px rgba(0,0,0,.16),0 0 1.5px rgba(0,0,0,.4);overflow:hidden"><div style="height:24.3px;background:#ececec;border-bottom:.6px solid #cfcfcf"></div></div><svg width="1979" height="1153" viewBox="0 0 1979 1153"><circle cx="1384.2" cy="47.2" r="5.9" fill="#fe5f57" stroke="#e1483f" stroke-width=".5"/><circle cx="1403.7" cy="47.2" r="5.9" fill="#d3d2d4" stroke="#c0bfc1" stroke-width=".5"/><circle cx="1423.1" cy="47.2" r="5.9" fill="#d3d2d4" stroke="#c0bfc1" stroke-width=".5"/><text x="1630.20" y="52.40" font-size="14.6" fill="#3c3c3c" text-anchor="middle" font-weight="normal" stroke="#3c3c3c" stroke-width="0.3" >Sala/A-Reverb</text><rect x="1427.1" y="115.1" width="283.7" height="222.2" rx="3" fill="#0e0d12" stroke="#afacd0" stroke-width="2.6"/><path d="M1430 113.8h278q4.1 0 4.1 4.2v110.1l-98.2-28.6h-90.2l-97.9 28.6v-110.1q0-4.2 4.2-4.2z" fill="#afacd0"/><g stroke="#afacd0" stroke-width="2.6" fill="none" stroke-linecap="round"><path d="M1523.8 199.4v60.2h90v-60.2"/><path d="M1432.4 332.2l91.4-72.6M1705.6 332.2l-91.8-72.6"/><path d="M1432.4 232.4h273.2"/><path d="M1525.4 196.8h86.8" stroke-width="2.4"/></g><g stroke="#0b0a10" stroke-width="2.8" fill="none" stroke-linecap="round"><path d="M1432.4 119.8l91.4 73.4h90l91.8-73.4"/><path d="M1523.8 193.2v5.6M1613.8 193.2v5.6" stroke-linecap="butt"/></g><path d="M1767.2 125.4v-7.4q0-3 3-3h62.2q3 0 3 3v62.2q0 3-3 3h-9.4" fill="none" stroke="#4b40a6" stroke-width="2.1"/><rect x="1766.3" y="131.2" width="52.8" height="52.4" rx="2.4" fill="#a9a6cb"/><path d="M1801.2 266l37.4 37.5-37.4 37.5-37.4-37.5z" fill="none" stroke="#4b40a6" stroke-width="2.2" stroke-linejoin="round"/><path d="M1801.2 289.4l14.1 14.1-14.1 14.1-14.1-14.1z" fill="#afacd0"/><path d="M1801.2 295.6l7.9 7.9-7.9 7.9-7.9-7.9z" fill="#0e0d12"/><path d="M1801.2 297.6l5.9 5.9-5.9 5.9-5.9-5.9z" fill="#afacd0"/><circle cx="1801.2" cy="303.5" r="2.9" fill="#0e0d12"/><circle cx="1801.2" cy="303.5" r="1.3" fill="#afacd0"/><g stroke="#4b40a6" stroke-width="2.1" fill="none"><path d="M1425.8 447.2h52.4L1556.8 449.8L1657.6 440.2h54.6"/><path d="M1425.8 455.2h52.4L1556.8 455.8L1657.6 453.2h54.6"/><path d="M1425.8 463.2h52.4L1556.8 461.6L1657.6 465.8h54.6"/><path d="M1425.8 471.2h52.4L1556.8 467.6L1657.6 478.6h54.6"/></g><path d="M1478.2 424.6q-20 34.6 0 69.2q20-34.6 0-69.2z" fill="none" stroke="#afacd0" stroke-width="2.2" stroke-linejoin="round"/><path d="M1544.2 424h25q-15.6 35 0 70h-25q15.6-35 0-70z" fill="#afacd0"/><path d="M1652.8 424.6h8q17.6 34.6 0 69.2h-8z" fill="none" stroke="#afacd0" stroke-width="2.2" stroke-linejoin="round"/><circle cx="1800.8" cy="458" r="34" fill="none" stroke="#4b40a6" stroke-width="2.3"/><path d="M1800.8 422.8a35.2 35.2 0 0 0 0 70.4z" fill="#afacd0"/><path d="M1853.4 550h17.4M1862.1 541.3v17.4" stroke="#4b40a6" stroke-width="2"/><text x="1568.6" y="389.6" font-size="29" fill="#afacd0" text-anchor="middle" textLength="117.5" lengthAdjust="spacingAndGlyphs" stroke="#afacd0" stroke-width=".5">dry / wet</text><text x="1800.8" y="389.6" font-size="29" fill="#afacd0" text-anchor="middle" textLength="78.5" lengthAdjust="spacingAndGlyphs" stroke="#afacd0" stroke-width=".5">decay</text><text x="1800.6" y="231.6" font-size="29" fill="#afacd0" text-anchor="middle" textLength="50.5" lengthAdjust="spacingAndGlyphs" stroke="#afacd0" stroke-width=".5">size</text><text x="1568.2" y="540.4" font-size="29" fill="#afacd0" text-anchor="middle" textLength="69.5" lengthAdjust="spacingAndGlyphs" stroke="#afacd0" stroke-width=".5">zoom</text><text x="1800.6" y="540.4" font-size="29" fill="#afacd0" text-anchor="middle" textLength="61" lengthAdjust="spacingAndGlyphs" stroke="#afacd0" stroke-width=".5">tone</text></svg>
</body></html>
